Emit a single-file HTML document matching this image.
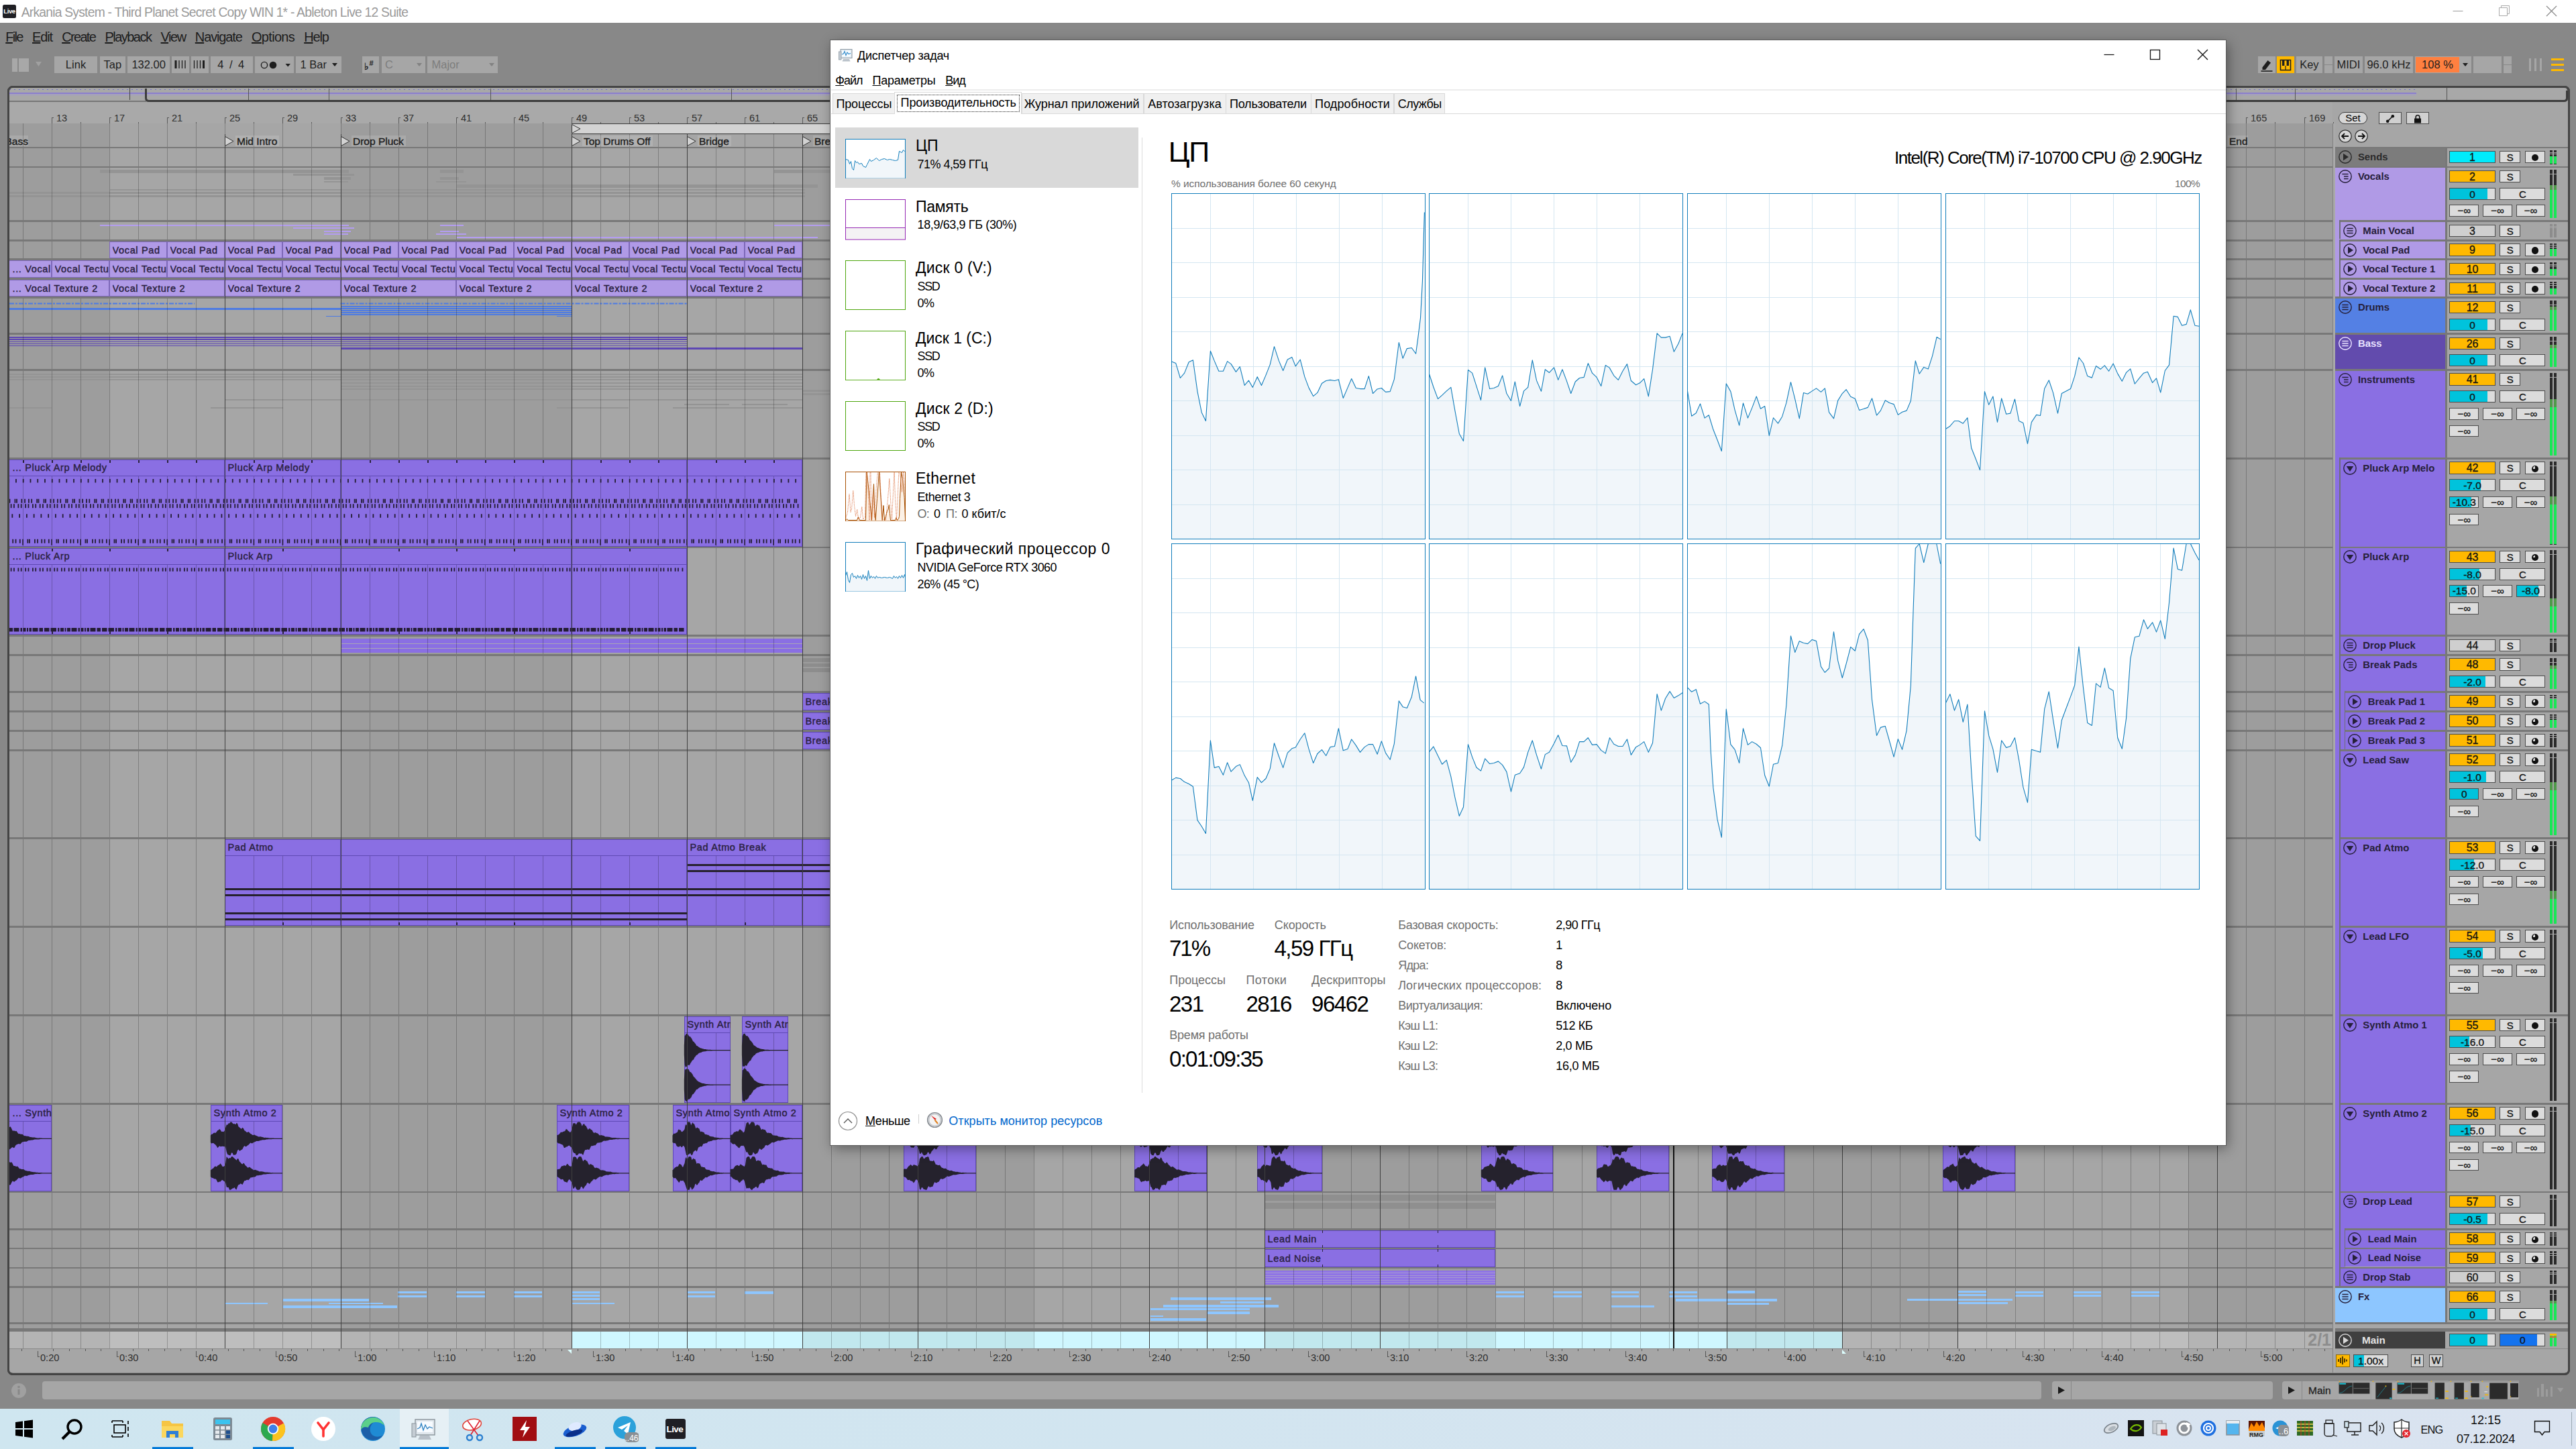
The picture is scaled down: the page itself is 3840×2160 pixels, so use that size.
<!DOCTYPE html><html><head><meta charset="utf-8"><title>Ableton Live</title><style>
html,body{margin:0;padding:0}
body{width:3840px;height:2160px;overflow:hidden;position:relative;background:#888;font-family:"Liberation Sans",sans-serif}
body>div,.a{position:absolute}
.t{white-space:nowrap}
.bx{box-sizing:border-box;border:1px solid #4d4d4d;text-align:center;white-space:nowrap;overflow:hidden}
.dot{display:inline-block;width:10.5px;height:10.5px;border-radius:50%;background:#111;vertical-align:-0.5px}
.clk{display:inline-block;width:10px;height:10px;border-radius:50%;background:#111;vertical-align:-0.5px;position:relative}
.clk:after{content:"";position:absolute;left:1.5px;top:1.5px;width:3.5px;height:3.5px;background:#dcdcdc;border-radius:3.5px 0 0 0}
</style></head><body>
<div style="left:0px;top:0px;width:3840px;height:34px;background:#fff;"></div>
<div class="a" style="left:4px;top:7px;width:20px;height:20px;background:#1f1f24;border-radius:2.5px;color:#fff;font-size:9.6px;font-weight:700;line-height:20px;text-align:center;letter-spacing:-0.4px">Live</div>
<div class="t" style="left:31.7px;top:7.33px;font-size:19.3px;line-height:23.16px;color:#9a9a9a;letter-spacing:-0.77px;">Arkania System - Third Planet Secret Copy WIN 1* - Ableton Live 12 Suite</div>
<svg class="a" style="left:3640px;top:0" width="200" height="34" viewBox="0 0 200 34"><path d="M16.5 16.5H31.5" stroke="#999" stroke-width="1"/><path d="M85.5 11.5H97.5V23.5H85.5Z M88.5 11.5V8.5H100.5V20.5H97.5" stroke="#aaa" fill="none" stroke-width="1"/><path d="M156 9L171 24M171 9L156 24" stroke="#888" stroke-width="1.2"/></svg>
<div class="t" style="left:8.3px;top:43.37px;font-size:20px;line-height:24px;color:#1c1c1c;letter-spacing:-1.68px;"><u>F</u>ile</div>
<div class="t" style="left:48px;top:43.37px;font-size:20px;line-height:24px;color:#1c1c1c;letter-spacing:-1.12px;"><u>E</u>dit</div>
<div class="t" style="left:92.2px;top:43.37px;font-size:20px;line-height:24px;color:#1c1c1c;letter-spacing:-1.67px;"><u>C</u>reate</div>
<div class="t" style="left:156.4px;top:43.37px;font-size:20px;line-height:24px;color:#1c1c1c;letter-spacing:-1.52px;"><u>P</u>layback</div>
<div class="t" style="left:239.6px;top:43.37px;font-size:20px;line-height:24px;color:#1c1c1c;letter-spacing:-1.5px;"><u>V</u>iew</div>
<div class="t" style="left:290.8px;top:43.37px;font-size:20px;line-height:24px;color:#1c1c1c;letter-spacing:-1.12px;"><u>N</u>avigate</div>
<div class="t" style="left:375px;top:43.37px;font-size:20px;line-height:24px;color:#1c1c1c;letter-spacing:-0.7px;"><u>O</u>ptions</div>
<div class="t" style="left:453.2px;top:43.37px;font-size:20px;line-height:24px;color:#1c1c1c;letter-spacing:-1.16px;"><u>H</u>elp</div>
<div style="left:17.7px;top:87px;width:8px;height:19.5px;background:#a8a8a8;"></div>
<div style="left:28px;top:87px;width:15.4px;height:19.5px;background:#a8a8a8;"></div>
<svg class="a" style="left:53px;top:92px" width="10" height="8"><path d="M0 0H9L4.5 7Z" fill="#a0a0a0"/></svg>
<div style="left:80.8px;top:83.5px;width:64.4px;height:25.5px;background:#a6a6a6;"></div>
<div class="t" style="left:97.87px;top:87.18px;font-size:16.5px;line-height:19.8px;color:#1e1e1e;">Link</div>
<div style="left:148.6px;top:83.5px;width:38.4px;height:25.5px;background:#a6a6a6;"></div>
<div class="t" style="left:154.5px;top:87.18px;font-size:16.5px;line-height:19.8px;color:#1e1e1e;">Tap</div>
<div style="left:190.3px;top:83.5px;width:62.7px;height:25.5px;background:#a6a6a6;"></div>
<div class="t" style="left:196.42px;top:87.18px;font-size:16.5px;line-height:19.8px;color:#1e1e1e;">132.00</div>
<div style="left:256.4px;top:83.5px;width:25.6px;height:25.5px;background:#a6a6a6;"></div>
<div style="left:285px;top:83.5px;width:25.5px;height:25.5px;background:#a6a6a6;"></div>
<svg class="a" style="left:256px;top:83px" width="56" height="26" viewBox="0 0 56 26"><path d="M6 7v12" stroke="#1e1e1e" stroke-width="3"/><path d="M11 7v12M15.5 7v12M20 7v12" stroke="#1e1e1e" stroke-width="1.3"/><path d="M33.5 7v12M38 7v12M42.5 7v12" stroke="#1e1e1e" stroke-width="1.3"/><path d="M47.5 7v12" stroke="#1e1e1e" stroke-width="3"/></svg>
<div style="left:313.8px;top:83.5px;width:62.8px;height:25.5px;background:#a6a6a6;"></div>
<div class="t" style="left:324.2px;top:87.18px;font-size:16.5px;line-height:19.8px;color:#1e1e1e;letter-spacing:1.98px;">4 / 4</div>
<div style="left:379.6px;top:83.5px;width:58px;height:25.5px;background:#a6a6a6;"></div>
<svg class="a" style="left:379.6px;top:83.5px" width="58" height="26" viewBox="0 0 58 26"><circle cx="14" cy="13" r="4.6" fill="none" stroke="#1e1e1e" stroke-width="1.4"/><circle cx="27" cy="13" r="5.3" fill="#1e1e1e"/><path d="M45.5 11H53L49.2 15.5Z" fill="#1e1e1e"/></svg>
<div style="left:441px;top:83.5px;width:67.5px;height:25.5px;background:#a6a6a6;"></div>
<div class="t" style="left:447.5px;top:87.18px;font-size:16.5px;line-height:19.8px;color:#1e1e1e;">1 Bar</div>
<svg class="a" style="left:495px;top:94px" width="9" height="6"><path d="M0 0H8L4 5Z" fill="#1e1e1e"/></svg>
<div style="left:540px;top:83.5px;width:25px;height:25.5px;background:#a6a6a6;"></div>
<div class="t" style="left:543px;top:90.85px;font-size:14px;line-height:16.8px;color:#1e1e1e;font-weight:700;">&#9837;</div>
<div class="t" style="left:550.5px;top:87.69px;font-size:11px;line-height:13.2px;color:#1e1e1e;font-weight:700;">#</div>
<div style="left:568.6px;top:83.5px;width:65.7px;height:25.5px;background:#a6a6a6;"></div>
<div class="t" style="left:574px;top:87.18px;font-size:16.5px;line-height:19.8px;color:#7d7d7d;">C</div>
<svg class="a" style="left:621px;top:94px" width="9" height="6"><path d="M0 0H8L4 5Z" fill="#828282"/></svg>
<div style="left:637.4px;top:83.5px;width:105.1px;height:25.5px;background:#a6a6a6;"></div>
<div class="t" style="left:643.5px;top:87.18px;font-size:16.5px;line-height:19.8px;color:#7d7d7d;">Major</div>
<svg class="a" style="left:729px;top:94px" width="9" height="6"><path d="M0 0H8L4 5Z" fill="#828282"/></svg>
<div style="left:3365.8px;top:83.5px;width:25.8px;height:25.5px;background:#a6a6a6;"></div>
<svg class="a" style="left:3366px;top:83.5px" width="26" height="26" viewBox="0 0 26 26"><path d="M6.5 16.5L14.5 6L19 9.5L11 20H6.5Z" fill="#1e1e1e"/><path d="M4.5 22H21.5" stroke="#1e1e1e" stroke-width="1.6"/></svg>
<div style="left:3394.3px;top:83.5px;width:25.7px;height:25.5px;background:#ffb900;"></div>
<svg class="a" style="left:3394.3px;top:83.5px" width="26" height="26" viewBox="0 0 26 26"><rect x="5.5" y="5.5" width="15" height="15" fill="none" stroke="#1e1e1e" stroke-width="1.6"/><path d="M9.7 5v9M16.3 5v9" stroke="#1e1e1e" stroke-width="3.4"/><path d="M13 14v6" stroke="#1e1e1e" stroke-width="1.2"/></svg>
<div style="left:3422.8px;top:83.5px;width:39.2px;height:25.5px;background:#a6a6a6;"></div>
<div class="t" style="left:3428.18px;top:87.18px;font-size:16.5px;line-height:19.8px;color:#1e1e1e;">Key</div>
<div style="left:3465px;top:83.5px;width:12px;height:12px;background:#a6a6a6;"></div>
<div style="left:3465px;top:97px;width:12px;height:12px;background:#a6a6a6;"></div>
<div style="left:3479.9px;top:83.5px;width:42.1px;height:25.5px;background:#a6a6a6;"></div>
<div class="t" style="left:3483.54px;top:87.18px;font-size:16.5px;line-height:19.8px;color:#1e1e1e;">MIDI</div>
<div style="left:3525px;top:83.5px;width:72px;height:25.5px;background:#a6a6a6;"></div>
<div class="t" style="left:3528.44px;top:87.18px;font-size:16.5px;line-height:19.8px;color:#1e1e1e;">96.0 kHz</div>
<div style="left:3600px;top:83.5px;width:84px;height:25.5px;background:#a6a6a6;"></div>
<div style="left:3601px;top:85px;width:65px;height:23px;background:#ff8040;"></div>
<div class="t" style="left:3610.11px;top:87.18px;font-size:16.5px;line-height:19.8px;color:#1e1e1e;">108 %</div>
<svg class="a" style="left:3671px;top:94px" width="9" height="6"><path d="M0 0H8L4 5Z" fill="#1e1e1e"/></svg>
<div style="left:3687px;top:83.5px;width:42px;height:25.5px;background:#a6a6a6;"></div>
<div style="left:3732px;top:83.5px;width:12px;height:12px;background:#a6a6a6;"></div>
<div style="left:3732px;top:97px;width:12px;height:12px;background:#a6a6a6;"></div>
<div style="left:3769.5px;top:86.5px;width:3px;height:19.5px;background:#a6a6a6;"></div>
<div style="left:3777.5px;top:86.5px;width:3px;height:19.5px;background:#a6a6a6;"></div>
<div style="left:3785.5px;top:86.5px;width:3px;height:19.5px;background:#a6a6a6;"></div>
<div style="left:3802.5px;top:86.5px;width:19.5px;height:3px;background:#ffb900;"></div>
<div style="left:3802.5px;top:94.5px;width:19.5px;height:3px;background:#ffb900;"></div>
<div style="left:3802.5px;top:102.5px;width:19.5px;height:3px;background:#ffb900;"></div>
<div class="a" style="left:11px;top:128px;width:3814px;height:1916px;border:3px solid #444;border-radius:8px;box-sizing:content-box;pointer-events:none"></div>
<svg class="a" style="left:16px;top:2061px" width="24" height="24" viewBox="0 0 24 24"><circle cx="12" cy="12" r="11" fill="#a0a0a0"/><rect x="10.5" y="10" width="3" height="8" fill="#888"/><circle cx="12" cy="6.6" r="1.8" fill="#888"/></svg>
<div style="left:63px;top:2058.5px;width:2980px;height:27.5px;background:#a6a6a6;border-radius:4px;"></div>
<div style="left:3059px;top:2058.5px;width:329px;height:27.5px;background:#a6a6a6;border-radius:4px;"></div>
<div style="left:3086.5px;top:2058.5px;width:1.5px;height:27.5px;background:#888;"></div>
<svg class="a" style="left:3068px;top:2067px" width="12" height="12"><path d="M0 0L10 5.5L0 11Z" fill="#1a1a1a"/></svg>
<div style="left:3402px;top:2058.5px;width:353px;height:27.5px;background:#a6a6a6;border-radius:4px;"></div>
<div style="left:3430.5px;top:2058.5px;width:1.5px;height:27.5px;background:#888;"></div>
<svg class="a" style="left:3411px;top:2067px" width="12" height="12"><path d="M0 0L10 5.5L0 11Z" fill="#1a1a1a"/></svg>
<div class="t" style="left:3441px;top:2063.93px;font-size:15.5px;line-height:18.6px;color:#1e1e1e;-webkit-text-stroke:0.3px #1e1e1e;">Main</div>
<svg class="a" style="left:3486.25px;top:2057.86px" width="46.96" height="28.21" viewBox="595 100 263 158"><rect x="595" y="100" width="263" height="158" fill="#a9a9a9"/><rect x="595" y="100" width="263" height="14" fill="#9a9a9a"/><rect x="599" y="103" width="8" height="8" fill="#f5b800"/><rect x="598" y="118" width="114" height="92" fill="#2b2b2b"/><rect x="716" y="118" width="139" height="92" fill="#2b2b2b"/><path d="M602 205C650 200 660 150 708 145" stroke="#19b5c8" stroke-width="3" fill="none"/><rect x="602" y="121" width="55" height="11" fill="#19c5d8"/><path d="M722 165H850" stroke="#ccc" stroke-width="2"/></svg>
<svg class="a" style="left:3535.71px;top:2057.86px" width="35" height="28.21" viewBox="872 100 196 158"><rect x="872" y="100" width="196" height="158" fill="#a9a9a9"/><rect x="872" y="100" width="196" height="14" fill="#9a9a9a"/><rect x="876" y="103" width="8" height="8" fill="#f5b800"/><rect x="902" y="118" width="136" height="137" fill="#2b2b2b"/><path d="M915 240L988 148" stroke="#19b5c8" stroke-width="3"/><rect x="982" y="142" width="9" height="9" fill="#f5b800"/><rect x="1044" y="168" width="18" height="10" fill="#f5b800"/><rect x="1018" y="243" width="18" height="9" fill="#19c5d8"/></svg>
<svg class="a" style="left:3573.39px;top:2057.86px" width="46.79" height="28.21" viewBox="1083 100 262 158"><rect x="1083" y="100" width="262" height="158" fill="#a9a9a9"/><rect x="1083" y="100" width="262" height="14" fill="#9a9a9a"/><rect x="1087" y="103" width="8" height="8" fill="#f5b800"/><rect x="1086" y="118" width="114" height="92" fill="#2b2b2b"/><rect x="1204" y="118" width="138" height="92" fill="#2b2b2b"/><path d="M1090 205C1138 200 1148 150 1196 145" stroke="#19b5c8" stroke-width="3" fill="none"/><rect x="1090" y="121" width="55" height="11" fill="#19c5d8"/><path d="M1210 165H1338" stroke="#ccc" stroke-width="2"/></svg>
<svg class="a" style="left:3622.5px;top:2057.86px" width="27.5" height="28.21" viewBox="1358 100 154 158"><rect x="1358" y="100" width="154" height="158" fill="#a9a9a9"/><rect x="1358" y="100" width="154" height="14" fill="#9a9a9a"/><rect x="1362" y="103" width="8" height="8" fill="#f5b800"/><rect x="1395" y="118" width="80" height="137" fill="#2b2b2b"/><rect x="1482" y="185" width="26" height="9" fill="#f5b800"/><rect x="1482" y="243" width="26" height="9" fill="#f5b800"/><rect x="1403" y="243" width="22" height="8" fill="#19a5b8"/></svg>
<svg class="a" style="left:3652.32px;top:2057.86px" width="27.68" height="28.21" viewBox="1525 100 155 158"><rect x="1525" y="100" width="155" height="158" fill="#a9a9a9"/><rect x="1525" y="100" width="155" height="14" fill="#9a9a9a"/><rect x="1529" y="103" width="8" height="8" fill="#f5b800"/><rect x="1562" y="118" width="80" height="137" fill="#2b2b2b"/><rect x="1649" y="185" width="26" height="9" fill="#f5b800"/><rect x="1649" y="243" width="26" height="9" fill="#f5b800"/><rect x="1570" y="243" width="22" height="8" fill="#19a5b8"/></svg>
<svg class="a" style="left:3682.32px;top:2057.86px" width="14.64" height="28.21" viewBox="1693 100 82 158"><rect x="1693" y="100" width="82" height="158" fill="#a9a9a9"/><rect x="1693" y="100" width="82" height="14" fill="#9a9a9a"/><rect x="1697" y="103" width="8" height="8" fill="#f5b800"/><rect x="1700" y="122" width="70" height="118" fill="#2b2b2b"/><rect x="1699" y="230" width="7" height="7" fill="#f5b800"/></svg>
<svg class="a" style="left:3699.11px;top:2057.86px" width="39.46" height="28.21" viewBox="1787 100 221 158"><rect x="1787" y="100" width="221" height="158" fill="#a9a9a9"/><rect x="1787" y="100" width="221" height="14" fill="#9a9a9a"/><rect x="1791" y="103" width="8" height="8" fill="#f5b800"/><rect x="1855" y="120" width="150" height="135" fill="#2b2b2b"/><rect x="1828" y="147" width="16" height="10" fill="#f5b800"/><rect x="1815" y="215" width="30" height="9" fill="#f5b800"/><rect x="1790" y="243" width="18" height="9" fill="#19c5d8"/><rect x="1812" y="190" width="26" height="7" fill="#ddd"/></svg>
<svg class="a" style="left:3741.07px;top:2057.86px" width="13.57" height="28.21" viewBox="2022 100 76 158"><rect x="2022" y="100" width="76" height="158" fill="#a9a9a9"/><rect x="2022" y="100" width="76" height="14" fill="#9a9a9a"/><rect x="2026" y="103" width="8" height="8" fill="#f5b800"/><rect x="2028" y="122" width="67" height="118" fill="#2b2b2b"/><rect x="2027" y="230" width="7" height="7" fill="#f5b800"/></svg>
<div style="left:3781.5px;top:2069px;width:3.3px;height:13px;background:#9c9c9c;"></div>
<div style="left:3788.3px;top:2063px;width:3.3px;height:19px;background:#9c9c9c;"></div>
<div style="left:3795.1px;top:2071px;width:3.3px;height:11px;background:#9c9c9c;"></div>
<div style="left:3801.9px;top:2067px;width:3.3px;height:15px;background:#9c9c9c;"></div>
<svg class="a" style="left:3812px;top:2068.5px" width="11" height="8"><path d="M0 0H9.5L4.75 6.5Z" fill="#9c9c9c"/></svg>
<svg class="a" width="3840" height="2160" viewBox="0 0 3840 2160" shape-rendering="crispEdges"><defs><clipPath id="ac"><rect x="14" y="130" width="3814" height="1916"/></clipPath></defs><g clip-path="url(#ac)">
<rect x="14" y="150" width="3814" height="1896" fill="#a6a6a6"/>
<rect x="14" y="184" width="149.19" height="1826" fill="#9d9d9d"/>
<rect x="507.54" y="184" width="344.35" height="1826" fill="#9d9d9d"/>
<rect x="1196.24" y="184" width="344.35" height="1826" fill="#9d9d9d"/>
<rect x="1884.95" y="184" width="344.35" height="1826" fill="#9d9d9d"/>
<rect x="2573.65" y="184" width="344.35" height="1826" fill="#9d9d9d"/>
<rect x="3262.36" y="184" width="214.64" height="1826" fill="#9d9d9d"/>
<rect x="14" y="152" width="3463" height="32" fill="#a9a9a9"/>
<rect x="14" y="1984.5" width="3463" height="25.5" fill="#bebebe"/>
<rect x="14" y="1984.5" width="149.19" height="25.5" fill="#b4b4b4"/>
<rect x="507.54" y="1984.5" width="344.35" height="25.5" fill="#b4b4b4"/>
<rect x="1196.24" y="1984.5" width="344.35" height="25.5" fill="#b4b4b4"/>
<rect x="1884.95" y="1984.5" width="344.35" height="25.5" fill="#b4b4b4"/>
<rect x="2573.65" y="1984.5" width="344.35" height="25.5" fill="#b4b4b4"/>
<rect x="3262.36" y="1984.5" width="214.64" height="25.5" fill="#b4b4b4"/>
<rect x="851.89" y="1984.5" width="1893.94" height="25.5" fill="#cff7ff"/>
<rect x="1196.24" y="1984.5" width="344.35" height="25.5" fill="#c1e8ee"/>
<rect x="1884.95" y="1984.5" width="344.35" height="25.5" fill="#c1e8ee"/>
<rect x="2573.65" y="1984.5" width="172.18" height="25.5" fill="#c1e8ee"/>
<rect x="14" y="2010" width="3814" height="36" fill="#a6a6a6"/>
<rect x="12" y="684.5" width="323" height="130" fill="#8a6fe3"/>
<rect x="335" y="684.5" width="173" height="130" fill="#8a6fe3"/>
<rect x="508" y="684.5" width="344" height="130" fill="#8a6fe3"/>
<rect x="852" y="684.5" width="172" height="130" fill="#8a6fe3"/>
<rect x="1024" y="684.5" width="172" height="130" fill="#8a6fe3"/>
<rect x="12" y="817" width="323" height="129.3" fill="#8a6fe3"/>
<rect x="335" y="817" width="173" height="129.3" fill="#8a6fe3"/>
<rect x="508" y="817" width="344" height="129.3" fill="#8a6fe3"/>
<rect x="852" y="817" width="172" height="129.3" fill="#8a6fe3"/>
<rect x="508" y="951.7" width="688" height="21.4" fill="#8a6fe3"/>
<rect x="508" y="958.6" width="688" height="1.3" fill="#a9a5b6"/>
<rect x="508" y="966" width="688" height="1.3" fill="#a9a5b6"/>
<rect x="335" y="1250.5" width="173" height="129.5" fill="#8a6fe3"/>
<rect x="508" y="1250.5" width="344" height="129.5" fill="#8a6fe3"/>
<rect x="852" y="1250.5" width="172" height="129.5" fill="#8a6fe3"/>
<rect x="1024" y="1250.5" width="172" height="129.5" fill="#8a6fe3"/>
<rect x="1196" y="1250.5" width="345" height="129.5" fill="#8a6fe3"/>
<rect x="1020" y="1514.8" width="69" height="129.2" fill="#8a6fe3"/>
<rect x="1106" y="1514.8" width="69" height="129.2" fill="#8a6fe3"/>
<rect x="12" y="1646.5" width="65" height="129.2" fill="#8a6fe3"/>
<rect x="314" y="1646.5" width="107" height="129.2" fill="#8a6fe3"/>
<rect x="830" y="1646.5" width="108" height="129.2" fill="#8a6fe3"/>
<rect x="1003" y="1646.5" width="86" height="129.2" fill="#8a6fe3"/>
<rect x="1089" y="1646.5" width="107" height="129.2" fill="#8a6fe3"/>
<rect x="1347" y="1646.5" width="108" height="129.2" fill="#8a6fe3"/>
<rect x="1691" y="1646.5" width="108" height="129.2" fill="#8a6fe3"/>
<rect x="2208" y="1646.5" width="107" height="129.2" fill="#8a6fe3"/>
<rect x="2380" y="1646.5" width="108" height="129.2" fill="#8a6fe3"/>
<rect x="2552" y="1646.5" width="108" height="129.2" fill="#8a6fe3"/>
<rect x="2896" y="1646.5" width="108" height="129.2" fill="#8a6fe3"/>
<rect x="1874" y="1646.5" width="97" height="129.2" fill="#8a6fe3"/>
<rect x="1885" y="1894" width="344" height="21.3" fill="#8f74e6"/>
<rect x="1885" y="1897" width="344" height="1" fill="#a79ad0"/>
<rect x="1885" y="1900.6" width="344" height="1" fill="#a79ad0"/>
<rect x="1885" y="1904.2" width="344" height="1" fill="#a79ad0"/>
<rect x="1885" y="1907.8" width="344" height="1" fill="#a79ad0"/>
<rect x="1885" y="1911.4" width="344" height="1" fill="#a79ad0"/>
<rect x="1885" y="1781" width="344" height="9" fill="#8f8f8f"/>
<rect x="1885" y="1793" width="344" height="9" fill="#8f8f8f"/>
<path shape-rendering="geometricPrecision" d="M14 452.5H290" stroke="#4d7be3" stroke-width="2" stroke-dasharray="7 2 3 2" fill="none"/>
<rect x="14" y="459" width="493.54" height="3" fill="#4d7be3"/>
<rect x="486" y="470.5" width="21.54" height="1.5" fill="#4d7be3"/>
<path shape-rendering="geometricPrecision" d="M507.54 452.5H1024.07" stroke="#4d7be3" stroke-width="2" stroke-dasharray="7 2 3 2" fill="none"/>
<rect x="507.54" y="456" width="344.35" height="2" fill="#4d7be3"/>
<rect x="507.54" y="459" width="344.35" height="2" fill="#4d7be3"/>
<rect x="507.54" y="462" width="344.35" height="2" fill="#4d7be3"/>
<rect x="507.54" y="465" width="344.35" height="2" fill="#4d7be3"/>
<rect x="507.54" y="468" width="344.35" height="2" fill="#4d7be3"/>
<rect x="830" y="470.5" width="21.89" height="1.5" fill="#4d7be3"/>
<rect x="14" y="502.2" width="1010.07" height="1.4" fill="#5d47b4"/>
<rect x="14" y="505.4" width="1010.07" height="1.4" fill="#5d47b4"/>
<rect x="14" y="508.6" width="1010.07" height="1.4" fill="#5d47b4"/>
<rect x="14" y="511.8" width="1010.07" height="1.4" fill="#5d47b4"/>
<rect x="14" y="515" width="1010.07" height="1.4" fill="#5d47b4"/>
<rect x="507.54" y="518.2" width="688.7" height="2.5" fill="#5d47b4"/>
<rect x="148.6" y="334.5" width="371.4" height="2.2" fill="#b39df0"/>
<rect x="436.7" y="339" width="90.8" height="2.2" fill="#b39df0"/>
<rect x="483" y="343.5" width="40" height="2.2" fill="#b39df0"/>
<rect x="483" y="348" width="35.5" height="2.2" fill="#b39df0"/>
<rect x="655.5" y="334.5" width="35.5" height="2.2" fill="#b39df0"/>
<rect x="655.5" y="343.5" width="28" height="2.2" fill="#b39df0"/>
<rect x="649.5" y="348" width="45" height="2.2" fill="#b39df0"/>
<rect x="681" y="352.5" width="538" height="2.2" fill="#b39df0"/>
<rect x="1154" y="334.5" width="83" height="2.2" fill="#b39df0"/>
<rect x="148.6" y="253" width="371.4" height="4.5" fill="#949494"/>
<rect x="436.7" y="259" width="90.8" height="2.5" fill="#949494"/>
<rect x="483" y="264" width="40" height="3.5" fill="#949494"/>
<rect x="483" y="269.5" width="35.5" height="2.5" fill="#949494"/>
<rect x="655.5" y="253" width="35.5" height="4.5" fill="#949494"/>
<rect x="655.5" y="264" width="28" height="3.5" fill="#949494"/>
<rect x="649.5" y="269.5" width="45" height="2.5" fill="#949494"/>
<rect x="681" y="275" width="538" height="5" fill="#949494"/>
<rect x="164" y="282" width="1036" height="2" fill="#949494"/>
<rect x="14" y="286" width="1186" height="3" fill="#949494"/>
<rect x="14" y="291" width="1186" height="2.5" fill="#949494"/>
<rect x="1154" y="253" width="83" height="4.5" fill="#949494"/>
<rect x="14" y="556.6" width="1182" height="2" fill="#949494"/>
<rect x="14" y="560.6" width="1182" height="2" fill="#949494"/>
<rect x="14" y="564.6" width="1182" height="2" fill="#949494"/>
<rect x="508" y="569.6" width="688" height="2" fill="#949494"/>
<rect x="508" y="574.6" width="688" height="2" fill="#949494"/>
<rect x="508" y="578.6" width="688" height="2" fill="#949494"/>
<rect x="336" y="594.6" width="860" height="2" fill="#949494"/>
<rect x="14" y="606.6" width="63" height="2" fill="#949494"/>
<rect x="314" y="606.6" width="108" height="2" fill="#949494"/>
<rect x="830" y="606.6" width="107" height="2" fill="#949494"/>
<rect x="1003" y="606.6" width="193" height="2" fill="#949494"/>
<rect x="1020" y="601.6" width="67" height="2" fill="#949494"/>
<rect x="1106" y="601.6" width="68" height="2" fill="#949494"/>
<rect x="1197" y="580.6" width="40" height="3" fill="#949494"/>
<rect x="1197" y="585.6" width="40" height="3" fill="#949494"/>
<rect x="1196.24" y="981" width="344.35" height="5.8" fill="#8d8d8d"/>
<rect x="1196.24" y="988.5" width="344.35" height="5.8" fill="#8d8d8d"/>
<rect x="1196.24" y="996.1" width="344.35" height="5.8" fill="#8d8d8d"/>
<rect x="336" y="1941.5" width="63" height="2.5" fill="#8ec6ff"/>
<rect x="422" y="1935.5" width="128" height="4" fill="#8ec6ff"/>
<rect x="490" y="1941.5" width="81" height="2.5" fill="#8ec6ff"/>
<rect x="422" y="1946" width="170" height="4" fill="#8ec6ff"/>
<rect x="593" y="1925" width="43" height="3" fill="#8ec6ff"/>
<rect x="593" y="1931" width="43" height="3" fill="#8ec6ff"/>
<rect x="680" y="1925" width="43" height="3" fill="#8ec6ff"/>
<rect x="680" y="1931" width="43" height="3" fill="#8ec6ff"/>
<rect x="766" y="1925" width="42" height="3" fill="#8ec6ff"/>
<rect x="766" y="1931" width="42" height="3" fill="#8ec6ff"/>
<rect x="853" y="1925" width="41" height="3" fill="#8ec6ff"/>
<rect x="853" y="1930" width="41" height="3" fill="#8ec6ff"/>
<rect x="853" y="1935" width="41" height="3" fill="#8ec6ff"/>
<rect x="853" y="1941.5" width="63" height="2.5" fill="#8ec6ff"/>
<rect x="1024" y="1925" width="42" height="3" fill="#8ec6ff"/>
<rect x="1024" y="1931" width="42" height="3" fill="#8ec6ff"/>
<rect x="1110" y="1925" width="43" height="4" fill="#8ec6ff"/>
<rect x="1745" y="1934" width="150" height="4" fill="#8ec6ff"/>
<rect x="1819" y="1940" width="65" height="2.5" fill="#8ec6ff"/>
<rect x="1734" y="1944.5" width="172" height="4" fill="#8ec6ff"/>
<rect x="1715" y="1950" width="148" height="3" fill="#8ec6ff"/>
<rect x="1800" y="1955" width="63" height="4" fill="#8ec6ff"/>
<rect x="1715" y="1960.5" width="19" height="2.5" fill="#8ec6ff"/>
<rect x="1715" y="1965" width="83" height="4" fill="#8ec6ff"/>
<rect x="2230" y="1925" width="42" height="3" fill="#8ec6ff"/>
<rect x="2230" y="1931" width="42" height="3" fill="#8ec6ff"/>
<rect x="2315" y="1925" width="43" height="3" fill="#8ec6ff"/>
<rect x="2315" y="1931" width="43" height="3" fill="#8ec6ff"/>
<rect x="2402" y="1925" width="41" height="3" fill="#8ec6ff"/>
<rect x="2402" y="1931" width="41" height="3" fill="#8ec6ff"/>
<rect x="2402" y="1946" width="64" height="3" fill="#8ec6ff"/>
<rect x="2488" y="1925" width="42" height="3" fill="#8ec6ff"/>
<rect x="2488" y="1931" width="42" height="3" fill="#8ec6ff"/>
<rect x="2498" y="1935.5" width="151" height="4" fill="#8ec6ff"/>
<rect x="2574" y="1924" width="42" height="4" fill="#8ec6ff"/>
<rect x="2574" y="1942" width="63" height="2.5" fill="#8ec6ff"/>
<rect x="2843" y="1935.5" width="157" height="3" fill="#8ec6ff"/>
<rect x="2919" y="1924" width="42" height="3" fill="#8ec6ff"/>
<rect x="2919" y="1929" width="42" height="3" fill="#8ec6ff"/>
<rect x="2919" y="1941" width="74" height="2.5" fill="#8ec6ff"/>
<rect x="3004" y="1925" width="42" height="3" fill="#8ec6ff"/>
<rect x="3004" y="1930" width="42" height="3" fill="#8ec6ff"/>
<rect x="3091" y="1925" width="41" height="3" fill="#8ec6ff"/>
<rect x="3091" y="1930" width="41" height="3" fill="#8ec6ff"/>
<rect x="3177" y="1925" width="42" height="3" fill="#8ec6ff"/>
<rect x="3177" y="1930" width="42" height="3" fill="#8ec6ff"/>
<rect x="34" y="184" width="1" height="1826" fill="rgba(0,0,0,0.23)"/>
<rect x="77" y="184" width="1" height="1826" fill="rgba(0,0,0,0.23)"/>
<rect x="120" y="184" width="1" height="1826" fill="rgba(0,0,0,0.23)"/>
<rect x="163" y="184" width="1" height="1826" fill="rgba(0,0,0,0.23)"/>
<rect x="206" y="184" width="1" height="1826" fill="rgba(0,0,0,0.23)"/>
<rect x="249" y="184" width="1" height="1826" fill="rgba(0,0,0,0.23)"/>
<rect x="292" y="184" width="1" height="1826" fill="rgba(0,0,0,0.23)"/>
<rect x="335" y="184" width="1" height="1826" fill="rgba(0,0,0,0.23)"/>
<rect x="378" y="184" width="1" height="1826" fill="rgba(0,0,0,0.23)"/>
<rect x="421" y="184" width="1" height="1826" fill="rgba(0,0,0,0.23)"/>
<rect x="464" y="184" width="1" height="1826" fill="rgba(0,0,0,0.23)"/>
<rect x="508" y="184" width="1" height="1826" fill="rgba(0,0,0,0.23)"/>
<rect x="551" y="184" width="1" height="1826" fill="rgba(0,0,0,0.23)"/>
<rect x="594" y="184" width="1" height="1826" fill="rgba(0,0,0,0.23)"/>
<rect x="637" y="184" width="1" height="1826" fill="rgba(0,0,0,0.23)"/>
<rect x="680" y="184" width="1" height="1826" fill="rgba(0,0,0,0.23)"/>
<rect x="723" y="184" width="1" height="1826" fill="rgba(0,0,0,0.23)"/>
<rect x="766" y="184" width="1" height="1826" fill="rgba(0,0,0,0.23)"/>
<rect x="809" y="184" width="1" height="1826" fill="rgba(0,0,0,0.23)"/>
<rect x="852" y="184" width="1" height="1826" fill="rgba(0,0,0,0.23)"/>
<rect x="895" y="184" width="1" height="1826" fill="rgba(0,0,0,0.23)"/>
<rect x="938" y="184" width="1" height="1826" fill="rgba(0,0,0,0.23)"/>
<rect x="981" y="184" width="1" height="1826" fill="rgba(0,0,0,0.23)"/>
<rect x="1024" y="184" width="1" height="1826" fill="rgba(0,0,0,0.23)"/>
<rect x="1067" y="184" width="1" height="1826" fill="rgba(0,0,0,0.23)"/>
<rect x="1110" y="184" width="1" height="1826" fill="rgba(0,0,0,0.23)"/>
<rect x="1153" y="184" width="1" height="1826" fill="rgba(0,0,0,0.23)"/>
<rect x="1196" y="184" width="1" height="1826" fill="rgba(0,0,0,0.23)"/>
<rect x="1239" y="184" width="1" height="1826" fill="rgba(0,0,0,0.23)"/>
<rect x="1282" y="184" width="1" height="1826" fill="rgba(0,0,0,0.23)"/>
<rect x="1325" y="184" width="1" height="1826" fill="rgba(0,0,0,0.23)"/>
<rect x="1368" y="184" width="1" height="1826" fill="rgba(0,0,0,0.23)"/>
<rect x="1411" y="184" width="1" height="1826" fill="rgba(0,0,0,0.23)"/>
<rect x="1455" y="184" width="1" height="1826" fill="rgba(0,0,0,0.23)"/>
<rect x="1498" y="184" width="1" height="1826" fill="rgba(0,0,0,0.23)"/>
<rect x="1541" y="184" width="1" height="1826" fill="rgba(0,0,0,0.23)"/>
<rect x="1584" y="184" width="1" height="1826" fill="rgba(0,0,0,0.23)"/>
<rect x="1627" y="184" width="1" height="1826" fill="rgba(0,0,0,0.23)"/>
<rect x="1670" y="184" width="1" height="1826" fill="rgba(0,0,0,0.23)"/>
<rect x="1713" y="184" width="1" height="1826" fill="rgba(0,0,0,0.23)"/>
<rect x="1756" y="184" width="1" height="1826" fill="rgba(0,0,0,0.23)"/>
<rect x="1799" y="184" width="1" height="1826" fill="rgba(0,0,0,0.23)"/>
<rect x="1842" y="184" width="1" height="1826" fill="rgba(0,0,0,0.23)"/>
<rect x="1885" y="184" width="1" height="1826" fill="rgba(0,0,0,0.23)"/>
<rect x="1928" y="184" width="1" height="1826" fill="rgba(0,0,0,0.23)"/>
<rect x="1971" y="184" width="1" height="1826" fill="rgba(0,0,0,0.23)"/>
<rect x="2014" y="184" width="1" height="1826" fill="rgba(0,0,0,0.23)"/>
<rect x="2057" y="184" width="1" height="1826" fill="rgba(0,0,0,0.23)"/>
<rect x="2100" y="184" width="1" height="1826" fill="rgba(0,0,0,0.23)"/>
<rect x="2143" y="184" width="1" height="1826" fill="rgba(0,0,0,0.23)"/>
<rect x="2186" y="184" width="1" height="1826" fill="rgba(0,0,0,0.23)"/>
<rect x="2229" y="184" width="1" height="1826" fill="rgba(0,0,0,0.23)"/>
<rect x="2272" y="184" width="1" height="1826" fill="rgba(0,0,0,0.23)"/>
<rect x="2315" y="184" width="1" height="1826" fill="rgba(0,0,0,0.23)"/>
<rect x="2358" y="184" width="1" height="1826" fill="rgba(0,0,0,0.23)"/>
<rect x="2401" y="184" width="1" height="1826" fill="rgba(0,0,0,0.23)"/>
<rect x="2445" y="184" width="1" height="1826" fill="rgba(0,0,0,0.23)"/>
<rect x="2488" y="184" width="1" height="1826" fill="rgba(0,0,0,0.23)"/>
<rect x="2531" y="184" width="1" height="1826" fill="rgba(0,0,0,0.23)"/>
<rect x="2574" y="184" width="1" height="1826" fill="rgba(0,0,0,0.23)"/>
<rect x="2617" y="184" width="1" height="1826" fill="rgba(0,0,0,0.23)"/>
<rect x="2660" y="184" width="1" height="1826" fill="rgba(0,0,0,0.23)"/>
<rect x="2703" y="184" width="1" height="1826" fill="rgba(0,0,0,0.23)"/>
<rect x="2746" y="184" width="1" height="1826" fill="rgba(0,0,0,0.23)"/>
<rect x="2789" y="184" width="1" height="1826" fill="rgba(0,0,0,0.23)"/>
<rect x="2832" y="184" width="1" height="1826" fill="rgba(0,0,0,0.23)"/>
<rect x="2875" y="184" width="1" height="1826" fill="rgba(0,0,0,0.23)"/>
<rect x="2918" y="184" width="1" height="1826" fill="rgba(0,0,0,0.23)"/>
<rect x="2961" y="184" width="1" height="1826" fill="rgba(0,0,0,0.23)"/>
<rect x="3004" y="184" width="1" height="1826" fill="rgba(0,0,0,0.23)"/>
<rect x="3047" y="184" width="1" height="1826" fill="rgba(0,0,0,0.23)"/>
<rect x="3090" y="184" width="1" height="1826" fill="rgba(0,0,0,0.23)"/>
<rect x="3133" y="184" width="1" height="1826" fill="rgba(0,0,0,0.23)"/>
<rect x="3176" y="184" width="1" height="1826" fill="rgba(0,0,0,0.23)"/>
<rect x="3219" y="184" width="1" height="1826" fill="rgba(0,0,0,0.23)"/>
<rect x="3262" y="184" width="1" height="1826" fill="rgba(0,0,0,0.23)"/>
<rect x="3305" y="184" width="1" height="1826" fill="rgba(0,0,0,0.23)"/>
<rect x="3348" y="184" width="1" height="1826" fill="rgba(0,0,0,0.23)"/>
<rect x="3391" y="184" width="1" height="1826" fill="rgba(0,0,0,0.23)"/>
<rect x="3435" y="184" width="1" height="1826" fill="rgba(0,0,0,0.23)"/>
<rect x="163" y="359.5" width="86" height="25.8" fill="#b09ae6"/>
<rect x="163" y="359.5" width="1" height="25.8" fill="#7d68b8"/>
<rect x="248" y="359.5" width="1" height="25.8" fill="#7d68b8"/>
<rect x="163" y="359.5" width="86" height="1" fill="#7d68b8"/>
<rect x="163" y="384.3" width="86" height="1" fill="#7d68b8"/>
<rect x="249" y="359.5" width="86" height="25.8" fill="#b09ae6"/>
<rect x="249" y="359.5" width="1" height="25.8" fill="#7d68b8"/>
<rect x="334" y="359.5" width="1" height="25.8" fill="#7d68b8"/>
<rect x="249" y="359.5" width="86" height="1" fill="#7d68b8"/>
<rect x="249" y="384.3" width="86" height="1" fill="#7d68b8"/>
<rect x="335" y="359.5" width="86" height="25.8" fill="#b09ae6"/>
<rect x="335" y="359.5" width="1" height="25.8" fill="#7d68b8"/>
<rect x="420" y="359.5" width="1" height="25.8" fill="#7d68b8"/>
<rect x="335" y="359.5" width="86" height="1" fill="#7d68b8"/>
<rect x="335" y="384.3" width="86" height="1" fill="#7d68b8"/>
<rect x="421" y="359.5" width="87" height="25.8" fill="#b09ae6"/>
<rect x="421" y="359.5" width="1" height="25.8" fill="#7d68b8"/>
<rect x="507" y="359.5" width="1" height="25.8" fill="#7d68b8"/>
<rect x="421" y="359.5" width="87" height="1" fill="#7d68b8"/>
<rect x="421" y="384.3" width="87" height="1" fill="#7d68b8"/>
<rect x="508" y="359.5" width="86" height="25.8" fill="#b09ae6"/>
<rect x="508" y="359.5" width="1" height="25.8" fill="#7d68b8"/>
<rect x="593" y="359.5" width="1" height="25.8" fill="#7d68b8"/>
<rect x="508" y="359.5" width="86" height="1" fill="#7d68b8"/>
<rect x="508" y="384.3" width="86" height="1" fill="#7d68b8"/>
<rect x="594" y="359.5" width="86" height="25.8" fill="#b09ae6"/>
<rect x="594" y="359.5" width="1" height="25.8" fill="#7d68b8"/>
<rect x="679" y="359.5" width="1" height="25.8" fill="#7d68b8"/>
<rect x="594" y="359.5" width="86" height="1" fill="#7d68b8"/>
<rect x="594" y="384.3" width="86" height="1" fill="#7d68b8"/>
<rect x="680" y="359.5" width="86" height="25.8" fill="#b09ae6"/>
<rect x="680" y="359.5" width="1" height="25.8" fill="#7d68b8"/>
<rect x="765" y="359.5" width="1" height="25.8" fill="#7d68b8"/>
<rect x="680" y="359.5" width="86" height="1" fill="#7d68b8"/>
<rect x="680" y="384.3" width="86" height="1" fill="#7d68b8"/>
<rect x="766" y="359.5" width="86" height="25.8" fill="#b09ae6"/>
<rect x="766" y="359.5" width="1" height="25.8" fill="#7d68b8"/>
<rect x="851" y="359.5" width="1" height="25.8" fill="#7d68b8"/>
<rect x="766" y="359.5" width="86" height="1" fill="#7d68b8"/>
<rect x="766" y="384.3" width="86" height="1" fill="#7d68b8"/>
<rect x="852" y="359.5" width="86" height="25.8" fill="#b09ae6"/>
<rect x="852" y="359.5" width="1" height="25.8" fill="#7d68b8"/>
<rect x="937" y="359.5" width="1" height="25.8" fill="#7d68b8"/>
<rect x="852" y="359.5" width="86" height="1" fill="#7d68b8"/>
<rect x="852" y="384.3" width="86" height="1" fill="#7d68b8"/>
<rect x="938" y="359.5" width="86" height="25.8" fill="#b09ae6"/>
<rect x="938" y="359.5" width="1" height="25.8" fill="#7d68b8"/>
<rect x="1023" y="359.5" width="1" height="25.8" fill="#7d68b8"/>
<rect x="938" y="359.5" width="86" height="1" fill="#7d68b8"/>
<rect x="938" y="384.3" width="86" height="1" fill="#7d68b8"/>
<rect x="1024" y="359.5" width="86" height="25.8" fill="#b09ae6"/>
<rect x="1024" y="359.5" width="1" height="25.8" fill="#7d68b8"/>
<rect x="1109" y="359.5" width="1" height="25.8" fill="#7d68b8"/>
<rect x="1024" y="359.5" width="86" height="1" fill="#7d68b8"/>
<rect x="1024" y="384.3" width="86" height="1" fill="#7d68b8"/>
<rect x="1110" y="359.5" width="86" height="25.8" fill="#b09ae6"/>
<rect x="1110" y="359.5" width="1" height="25.8" fill="#7d68b8"/>
<rect x="1195" y="359.5" width="1" height="25.8" fill="#7d68b8"/>
<rect x="1110" y="359.5" width="86" height="1" fill="#7d68b8"/>
<rect x="1110" y="384.3" width="86" height="1" fill="#7d68b8"/>
<rect x="12" y="388" width="65" height="26" fill="#b09ae6"/>
<rect x="12" y="388" width="1" height="26" fill="#7d68b8"/>
<rect x="76" y="388" width="1" height="26" fill="#7d68b8"/>
<rect x="12" y="388" width="65" height="1" fill="#7d68b8"/>
<rect x="12" y="413" width="65" height="1" fill="#7d68b8"/>
<rect x="77" y="388" width="86" height="26" fill="#b09ae6"/>
<rect x="77" y="388" width="1" height="26" fill="#7d68b8"/>
<rect x="162" y="388" width="1" height="26" fill="#7d68b8"/>
<rect x="77" y="388" width="86" height="1" fill="#7d68b8"/>
<rect x="77" y="413" width="86" height="1" fill="#7d68b8"/>
<rect x="163" y="388" width="86" height="26" fill="#b09ae6"/>
<rect x="163" y="388" width="1" height="26" fill="#7d68b8"/>
<rect x="248" y="388" width="1" height="26" fill="#7d68b8"/>
<rect x="163" y="388" width="86" height="1" fill="#7d68b8"/>
<rect x="163" y="413" width="86" height="1" fill="#7d68b8"/>
<rect x="249" y="388" width="86" height="26" fill="#b09ae6"/>
<rect x="249" y="388" width="1" height="26" fill="#7d68b8"/>
<rect x="334" y="388" width="1" height="26" fill="#7d68b8"/>
<rect x="249" y="388" width="86" height="1" fill="#7d68b8"/>
<rect x="249" y="413" width="86" height="1" fill="#7d68b8"/>
<rect x="335" y="388" width="86" height="26" fill="#b09ae6"/>
<rect x="335" y="388" width="1" height="26" fill="#7d68b8"/>
<rect x="420" y="388" width="1" height="26" fill="#7d68b8"/>
<rect x="335" y="388" width="86" height="1" fill="#7d68b8"/>
<rect x="335" y="413" width="86" height="1" fill="#7d68b8"/>
<rect x="421" y="388" width="87" height="26" fill="#b09ae6"/>
<rect x="421" y="388" width="1" height="26" fill="#7d68b8"/>
<rect x="507" y="388" width="1" height="26" fill="#7d68b8"/>
<rect x="421" y="388" width="87" height="1" fill="#7d68b8"/>
<rect x="421" y="413" width="87" height="1" fill="#7d68b8"/>
<rect x="508" y="388" width="86" height="26" fill="#b09ae6"/>
<rect x="508" y="388" width="1" height="26" fill="#7d68b8"/>
<rect x="593" y="388" width="1" height="26" fill="#7d68b8"/>
<rect x="508" y="388" width="86" height="1" fill="#7d68b8"/>
<rect x="508" y="413" width="86" height="1" fill="#7d68b8"/>
<rect x="594" y="388" width="86" height="26" fill="#b09ae6"/>
<rect x="594" y="388" width="1" height="26" fill="#7d68b8"/>
<rect x="679" y="388" width="1" height="26" fill="#7d68b8"/>
<rect x="594" y="388" width="86" height="1" fill="#7d68b8"/>
<rect x="594" y="413" width="86" height="1" fill="#7d68b8"/>
<rect x="680" y="388" width="86" height="26" fill="#b09ae6"/>
<rect x="680" y="388" width="1" height="26" fill="#7d68b8"/>
<rect x="765" y="388" width="1" height="26" fill="#7d68b8"/>
<rect x="680" y="388" width="86" height="1" fill="#7d68b8"/>
<rect x="680" y="413" width="86" height="1" fill="#7d68b8"/>
<rect x="766" y="388" width="86" height="26" fill="#b09ae6"/>
<rect x="766" y="388" width="1" height="26" fill="#7d68b8"/>
<rect x="851" y="388" width="1" height="26" fill="#7d68b8"/>
<rect x="766" y="388" width="86" height="1" fill="#7d68b8"/>
<rect x="766" y="413" width="86" height="1" fill="#7d68b8"/>
<rect x="852" y="388" width="86" height="26" fill="#b09ae6"/>
<rect x="852" y="388" width="1" height="26" fill="#7d68b8"/>
<rect x="937" y="388" width="1" height="26" fill="#7d68b8"/>
<rect x="852" y="388" width="86" height="1" fill="#7d68b8"/>
<rect x="852" y="413" width="86" height="1" fill="#7d68b8"/>
<rect x="938" y="388" width="86" height="26" fill="#b09ae6"/>
<rect x="938" y="388" width="1" height="26" fill="#7d68b8"/>
<rect x="1023" y="388" width="1" height="26" fill="#7d68b8"/>
<rect x="938" y="388" width="86" height="1" fill="#7d68b8"/>
<rect x="938" y="413" width="86" height="1" fill="#7d68b8"/>
<rect x="1024" y="388" width="86" height="26" fill="#b09ae6"/>
<rect x="1024" y="388" width="1" height="26" fill="#7d68b8"/>
<rect x="1109" y="388" width="1" height="26" fill="#7d68b8"/>
<rect x="1024" y="388" width="86" height="1" fill="#7d68b8"/>
<rect x="1024" y="413" width="86" height="1" fill="#7d68b8"/>
<rect x="1110" y="388" width="86" height="26" fill="#b09ae6"/>
<rect x="1110" y="388" width="1" height="26" fill="#7d68b8"/>
<rect x="1195" y="388" width="1" height="26" fill="#7d68b8"/>
<rect x="1110" y="388" width="86" height="1" fill="#7d68b8"/>
<rect x="1110" y="413" width="86" height="1" fill="#7d68b8"/>
<rect x="12" y="416.7" width="151" height="25.7" fill="#b09ae6"/>
<rect x="12" y="416.7" width="1" height="25.7" fill="#7d68b8"/>
<rect x="162" y="416.7" width="1" height="25.7" fill="#7d68b8"/>
<rect x="12" y="416.7" width="151" height="1" fill="#7d68b8"/>
<rect x="12" y="441.4" width="151" height="1" fill="#7d68b8"/>
<rect x="163" y="416.7" width="172" height="25.7" fill="#b09ae6"/>
<rect x="163" y="416.7" width="1" height="25.7" fill="#7d68b8"/>
<rect x="334" y="416.7" width="1" height="25.7" fill="#7d68b8"/>
<rect x="163" y="416.7" width="172" height="1" fill="#7d68b8"/>
<rect x="163" y="441.4" width="172" height="1" fill="#7d68b8"/>
<rect x="335" y="416.7" width="173" height="25.7" fill="#b09ae6"/>
<rect x="335" y="416.7" width="1" height="25.7" fill="#7d68b8"/>
<rect x="507" y="416.7" width="1" height="25.7" fill="#7d68b8"/>
<rect x="335" y="416.7" width="173" height="1" fill="#7d68b8"/>
<rect x="335" y="441.4" width="173" height="1" fill="#7d68b8"/>
<rect x="508" y="416.7" width="172" height="25.7" fill="#b09ae6"/>
<rect x="508" y="416.7" width="1" height="25.7" fill="#7d68b8"/>
<rect x="679" y="416.7" width="1" height="25.7" fill="#7d68b8"/>
<rect x="508" y="416.7" width="172" height="1" fill="#7d68b8"/>
<rect x="508" y="441.4" width="172" height="1" fill="#7d68b8"/>
<rect x="680" y="416.7" width="172" height="25.7" fill="#b09ae6"/>
<rect x="680" y="416.7" width="1" height="25.7" fill="#7d68b8"/>
<rect x="851" y="416.7" width="1" height="25.7" fill="#7d68b8"/>
<rect x="680" y="416.7" width="172" height="1" fill="#7d68b8"/>
<rect x="680" y="441.4" width="172" height="1" fill="#7d68b8"/>
<rect x="852" y="416.7" width="172" height="25.7" fill="#b09ae6"/>
<rect x="852" y="416.7" width="1" height="25.7" fill="#7d68b8"/>
<rect x="1023" y="416.7" width="1" height="25.7" fill="#7d68b8"/>
<rect x="852" y="416.7" width="172" height="1" fill="#7d68b8"/>
<rect x="852" y="441.4" width="172" height="1" fill="#7d68b8"/>
<rect x="1024" y="416.7" width="172" height="25.7" fill="#b09ae6"/>
<rect x="1024" y="416.7" width="1" height="25.7" fill="#7d68b8"/>
<rect x="1195" y="416.7" width="1" height="25.7" fill="#7d68b8"/>
<rect x="1024" y="416.7" width="172" height="1" fill="#7d68b8"/>
<rect x="1024" y="441.4" width="172" height="1" fill="#7d68b8"/>
<rect x="12" y="684.5" width="323" height="24" fill="#8a6fe3"/>
<rect x="12" y="684.5" width="1" height="130" fill="#5f49b5"/>
<rect x="334" y="684.5" width="1" height="130" fill="#5f49b5"/>
<rect x="12" y="684.5" width="323" height="1" fill="#5f49b5"/>
<rect x="12" y="708.5" width="323" height="1" fill="#5f49b5"/>
<rect x="12" y="813.5" width="323" height="1" fill="#5f49b5"/>
<rect x="335" y="684.5" width="173" height="24" fill="#8a6fe3"/>
<rect x="335" y="684.5" width="1" height="130" fill="#5f49b5"/>
<rect x="507" y="684.5" width="1" height="130" fill="#5f49b5"/>
<rect x="335" y="684.5" width="173" height="1" fill="#5f49b5"/>
<rect x="335" y="708.5" width="173" height="1" fill="#5f49b5"/>
<rect x="335" y="813.5" width="173" height="1" fill="#5f49b5"/>
<rect x="508" y="684.5" width="344" height="24" fill="#8a6fe3"/>
<rect x="508" y="684.5" width="1" height="130" fill="#5f49b5"/>
<rect x="851" y="684.5" width="1" height="130" fill="#5f49b5"/>
<rect x="508" y="684.5" width="344" height="1" fill="#5f49b5"/>
<rect x="508" y="708.5" width="344" height="1" fill="#5f49b5"/>
<rect x="508" y="813.5" width="344" height="1" fill="#5f49b5"/>
<rect x="852" y="684.5" width="172" height="24" fill="#8a6fe3"/>
<rect x="852" y="684.5" width="1" height="130" fill="#5f49b5"/>
<rect x="1023" y="684.5" width="1" height="130" fill="#5f49b5"/>
<rect x="852" y="684.5" width="172" height="1" fill="#5f49b5"/>
<rect x="852" y="708.5" width="172" height="1" fill="#5f49b5"/>
<rect x="852" y="813.5" width="172" height="1" fill="#5f49b5"/>
<rect x="1024" y="684.5" width="172" height="24" fill="#8a6fe3"/>
<rect x="1024" y="684.5" width="1" height="130" fill="#5f49b5"/>
<rect x="1195" y="684.5" width="1" height="130" fill="#5f49b5"/>
<rect x="1024" y="684.5" width="172" height="1" fill="#5f49b5"/>
<rect x="1024" y="708.5" width="172" height="1" fill="#5f49b5"/>
<rect x="1024" y="813.5" width="172" height="1" fill="#5f49b5"/>
<path shape-rendering="geometricPrecision" d="M-8.34 714.1v5.4 M2.42 714.1v5.4 M13.18 714.1v5.4 M23.94 714.1v5.4 M34.7 714.1v5.4 M45.46 714.1v5.4 M56.22 714.1v5.4 M66.98 714.1v5.4 M77.75 714.1v5.4 M88.51 714.1v5.4 M99.27 714.1v5.4 M110.03 714.1v5.4 M120.79 714.1v5.4 M131.55 714.1v5.4 M142.31 714.1v5.4 M153.07 714.1v5.4 M163.83 714.1v5.4 M174.59 714.1v5.4 M185.36 714.1v5.4 M196.12 714.1v5.4 M206.88 714.1v5.4 M217.64 714.1v5.4 M228.4 714.1v5.4 M239.16 714.1v5.4 M249.92 714.1v5.4 M260.68 714.1v5.4 M271.44 714.1v5.4 M282.2 714.1v5.4 M292.97 714.1v5.4 M303.73 714.1v5.4 M314.49 714.1v5.4 M325.25 714.1v5.4 M336.01 714.1v5.4 M346.77 714.1v5.4 M357.53 714.1v5.4 M368.29 714.1v5.4 M379.05 714.1v5.4 M389.81 714.1v5.4 M400.58 714.1v5.4 M411.34 714.1v5.4 M422.1 714.1v5.4 M432.86 714.1v5.4 M443.62 714.1v5.4 M454.38 714.1v5.4 M465.14 714.1v5.4 M475.9 714.1v5.4 M486.66 714.1v5.4 M497.42 714.1v5.4 M508.19 714.1v5.4 M518.95 714.1v5.4 M529.71 714.1v5.4 M540.47 714.1v5.4 M551.23 714.1v5.4 M561.99 714.1v5.4 M572.75 714.1v5.4 M583.51 714.1v5.4 M594.27 714.1v5.4 M605.03 714.1v5.4 M615.8 714.1v5.4 M626.56 714.1v5.4 M637.32 714.1v5.4 M648.08 714.1v5.4 M658.84 714.1v5.4 M669.6 714.1v5.4 M680.36 714.1v5.4 M691.12 714.1v5.4 M701.88 714.1v5.4 M712.64 714.1v5.4 M723.41 714.1v5.4 M734.17 714.1v5.4 M744.93 714.1v5.4 M755.69 714.1v5.4 M766.45 714.1v5.4 M777.21 714.1v5.4 M787.97 714.1v5.4 M798.73 714.1v5.4 M809.49 714.1v5.4 M820.25 714.1v5.4 M831.02 714.1v5.4 M841.78 714.1v5.4 M852.54 714.1v5.4 M863.3 714.1v5.4 M874.06 714.1v5.4 M884.82 714.1v5.4 M895.58 714.1v5.4 M906.34 714.1v5.4 M917.1 714.1v5.4 M927.86 714.1v5.4 M938.63 714.1v5.4 M949.39 714.1v5.4 M960.15 714.1v5.4 M970.91 714.1v5.4 M981.67 714.1v5.4 M992.43 714.1v5.4 M1003.19 714.1v5.4 M1013.95 714.1v5.4 M1024.71 714.1v5.4 M1035.47 714.1v5.4 M1046.24 714.1v5.4 M1057 714.1v5.4 M1067.76 714.1v5.4 M1078.52 714.1v5.4 M1089.28 714.1v5.4 M1100.04 714.1v5.4 M1110.8 714.1v5.4 M1121.56 714.1v5.4 M1132.32 714.1v5.4 M1143.08 714.1v5.4 M1153.85 714.1v5.4 M1164.61 714.1v5.4 M1175.37 714.1v5.4 M1186.13 714.1v5.4" stroke="#241d35" stroke-width="1.8" fill="none"/>
<path shape-rendering="geometricPrecision" d="M-5.97 743.7v6 M-0.16 743.7v6 M4.14 743.7v6 M12.1 743.7v6 M14.47 743.7v6 M22.43 743.7v6 M25.02 743.7v6 M32.33 743.7v6 M37.07 743.7v6 M42.88 743.7v6 M47.18 743.7v6 M55.15 743.7v6 M57.51 743.7v6 M65.48 743.7v6 M68.06 743.7v6 M75.38 743.7v6 M80.11 743.7v6 M85.92 743.7v6 M90.23 743.7v6 M98.19 743.7v6 M100.56 743.7v6 M108.52 743.7v6 M111.1 743.7v6 M118.42 743.7v6 M123.16 743.7v6 M128.97 743.7v6 M133.27 743.7v6 M141.24 743.7v6 M143.6 743.7v6 M151.57 743.7v6 M154.15 743.7v6 M161.47 743.7v6 M166.2 743.7v6 M172.01 743.7v6 M176.32 743.7v6 M184.28 743.7v6 M186.65 743.7v6 M194.61 743.7v6 M197.19 743.7v6 M204.51 743.7v6 M209.25 743.7v6 M215.06 743.7v6 M219.36 743.7v6 M227.32 743.7v6 M229.69 743.7v6 M237.65 743.7v6 M240.24 743.7v6 M247.55 743.7v6 M252.29 743.7v6 M258.1 743.7v6 M262.4 743.7v6 M270.37 743.7v6 M272.73 743.7v6 M280.7 743.7v6 M283.28 743.7v6 M290.6 743.7v6 M295.33 743.7v6 M301.14 743.7v6 M305.45 743.7v6 M313.41 743.7v6 M315.78 743.7v6 M323.74 743.7v6 M326.32 743.7v6 M333.64 743.7v6 M338.38 743.7v6 M344.19 743.7v6 M348.49 743.7v6 M356.46 743.7v6 M358.82 743.7v6 M366.79 743.7v6 M369.37 743.7v6 M376.69 743.7v6 M381.42 743.7v6 M387.23 743.7v6 M391.54 743.7v6 M399.5 743.7v6 M401.87 743.7v6 M409.83 743.7v6 M412.41 743.7v6 M419.73 743.7v6 M424.47 743.7v6 M430.28 743.7v6 M434.58 743.7v6 M442.54 743.7v6 M444.91 743.7v6 M452.87 743.7v6 M455.46 743.7v6 M462.77 743.7v6 M467.51 743.7v6 M473.32 743.7v6 M477.62 743.7v6 M485.59 743.7v6 M487.95 743.7v6 M495.92 743.7v6 M498.5 743.7v6 M505.82 743.7v6 M510.55 743.7v6 M516.36 743.7v6 M520.67 743.7v6 M528.63 743.7v6 M531 743.7v6 M538.96 743.7v6 M541.54 743.7v6 M548.86 743.7v6 M553.6 743.7v6 M559.41 743.7v6 M563.71 743.7v6 M571.68 743.7v6 M574.04 743.7v6 M582.01 743.7v6 M584.59 743.7v6 M591.91 743.7v6 M596.64 743.7v6 M602.45 743.7v6 M606.76 743.7v6 M614.72 743.7v6 M617.09 743.7v6 M625.05 743.7v6 M627.63 743.7v6 M634.95 743.7v6 M639.69 743.7v6 M645.5 743.7v6 M649.8 743.7v6 M657.76 743.7v6 M660.13 743.7v6 M668.09 743.7v6 M670.68 743.7v6 M677.99 743.7v6 M682.73 743.7v6 M688.54 743.7v6 M692.84 743.7v6 M700.81 743.7v6 M703.17 743.7v6 M711.14 743.7v6 M713.72 743.7v6 M721.04 743.7v6 M725.77 743.7v6 M731.58 743.7v6 M735.89 743.7v6 M743.85 743.7v6 M746.22 743.7v6 M754.18 743.7v6 M756.76 743.7v6 M764.08 743.7v6 M768.82 743.7v6 M774.63 743.7v6 M778.93 743.7v6 M786.9 743.7v6 M789.26 743.7v6 M797.23 743.7v6 M799.81 743.7v6 M807.13 743.7v6 M811.86 743.7v6 M817.67 743.7v6 M821.98 743.7v6 M829.94 743.7v6 M832.31 743.7v6 M840.27 743.7v6 M842.85 743.7v6 M850.17 743.7v6 M854.91 743.7v6 M860.72 743.7v6 M865.02 743.7v6 M872.98 743.7v6 M875.35 743.7v6 M883.31 743.7v6 M885.9 743.7v6 M893.21 743.7v6 M897.95 743.7v6 M903.76 743.7v6 M908.06 743.7v6 M916.03 743.7v6 M918.39 743.7v6 M926.36 743.7v6 M928.94 743.7v6 M936.26 743.7v6 M940.99 743.7v6 M946.8 743.7v6 M951.11 743.7v6 M959.07 743.7v6 M961.44 743.7v6 M969.4 743.7v6 M971.98 743.7v6 M979.3 743.7v6 M984.04 743.7v6 M989.85 743.7v6 M994.15 743.7v6 M1002.12 743.7v6 M1004.48 743.7v6 M1012.45 743.7v6 M1015.03 743.7v6 M1022.35 743.7v6 M1027.08 743.7v6 M1032.89 743.7v6 M1037.2 743.7v6 M1045.16 743.7v6 M1047.53 743.7v6 M1055.49 743.7v6 M1058.07 743.7v6 M1065.39 743.7v6 M1070.13 743.7v6 M1075.94 743.7v6 M1080.24 743.7v6 M1088.2 743.7v6 M1090.57 743.7v6 M1098.53 743.7v6 M1101.12 743.7v6 M1108.43 743.7v6 M1113.17 743.7v6 M1118.98 743.7v6 M1123.28 743.7v6 M1131.25 743.7v6 M1133.61 743.7v6 M1141.58 743.7v6 M1144.16 743.7v6 M1151.48 743.7v6 M1156.21 743.7v6 M1162.02 743.7v6 M1166.33 743.7v6 M1174.29 743.7v6 M1176.66 743.7v6 M1184.62 743.7v6 M1187.2 743.7v6" stroke="#241d35" stroke-width="1.8" fill="none"/>
<path shape-rendering="geometricPrecision" d="M-4.9 751.3v6 M-0.59 751.3v6 M5.86 751.3v6 M10.17 751.3v6 M16.62 751.3v6 M20.93 751.3v6 M27.38 751.3v6 M31.69 751.3v6 M38.15 751.3v6 M42.45 751.3v6 M48.91 751.3v6 M53.21 751.3v6 M59.67 751.3v6 M63.97 751.3v6 M70.43 751.3v6 M74.73 751.3v6 M81.19 751.3v6 M85.49 751.3v6 M91.95 751.3v6 M96.25 751.3v6 M102.71 751.3v6 M107.02 751.3v6 M113.47 751.3v6 M117.78 751.3v6 M124.23 751.3v6 M128.54 751.3v6 M134.99 751.3v6 M139.3 751.3v6 M145.76 751.3v6 M150.06 751.3v6 M156.52 751.3v6 M160.82 751.3v6 M167.28 751.3v6 M171.58 751.3v6 M178.04 751.3v6 M182.34 751.3v6 M188.8 751.3v6 M193.1 751.3v6 M199.56 751.3v6 M203.86 751.3v6 M210.32 751.3v6 M214.63 751.3v6 M221.08 751.3v6 M225.39 751.3v6 M231.84 751.3v6 M236.15 751.3v6 M242.6 751.3v6 M246.91 751.3v6 M253.37 751.3v6 M257.67 751.3v6 M264.13 751.3v6 M268.43 751.3v6 M274.89 751.3v6 M279.19 751.3v6 M285.65 751.3v6 M289.95 751.3v6 M296.41 751.3v6 M300.71 751.3v6 M307.17 751.3v6 M311.47 751.3v6 M317.93 751.3v6 M322.24 751.3v6 M328.69 751.3v6 M333 751.3v6 M339.45 751.3v6 M343.76 751.3v6 M350.21 751.3v6 M354.52 751.3v6 M360.98 751.3v6 M365.28 751.3v6 M371.74 751.3v6 M376.04 751.3v6 M382.5 751.3v6 M386.8 751.3v6 M393.26 751.3v6 M397.56 751.3v6 M404.02 751.3v6 M408.32 751.3v6 M414.78 751.3v6 M419.08 751.3v6 M425.54 751.3v6 M429.85 751.3v6 M436.3 751.3v6 M440.61 751.3v6 M447.06 751.3v6 M451.37 751.3v6 M457.82 751.3v6 M462.13 751.3v6 M468.59 751.3v6 M472.89 751.3v6 M479.35 751.3v6 M483.65 751.3v6 M490.11 751.3v6 M494.41 751.3v6 M500.87 751.3v6 M505.17 751.3v6 M511.63 751.3v6 M515.93 751.3v6 M522.39 751.3v6 M526.69 751.3v6 M533.15 751.3v6 M537.46 751.3v6 M543.91 751.3v6 M548.22 751.3v6 M554.67 751.3v6 M558.98 751.3v6 M565.43 751.3v6 M569.74 751.3v6 M576.2 751.3v6 M580.5 751.3v6 M586.96 751.3v6 M591.26 751.3v6 M597.72 751.3v6 M602.02 751.3v6 M608.48 751.3v6 M612.78 751.3v6 M619.24 751.3v6 M623.54 751.3v6 M630 751.3v6 M634.3 751.3v6 M640.76 751.3v6 M645.07 751.3v6 M651.52 751.3v6 M655.83 751.3v6 M662.28 751.3v6 M666.59 751.3v6 M673.04 751.3v6 M677.35 751.3v6 M683.81 751.3v6 M688.11 751.3v6 M694.57 751.3v6 M698.87 751.3v6 M705.33 751.3v6 M709.63 751.3v6 M716.09 751.3v6 M720.39 751.3v6 M726.85 751.3v6 M731.15 751.3v6 M737.61 751.3v6 M741.91 751.3v6 M748.37 751.3v6 M752.68 751.3v6 M759.13 751.3v6 M763.44 751.3v6 M769.89 751.3v6 M774.2 751.3v6 M780.65 751.3v6 M784.96 751.3v6 M791.42 751.3v6 M795.72 751.3v6 M802.18 751.3v6 M806.48 751.3v6 M812.94 751.3v6 M817.24 751.3v6 M823.7 751.3v6 M828 751.3v6 M834.46 751.3v6 M838.76 751.3v6 M845.22 751.3v6 M849.52 751.3v6 M855.98 751.3v6 M860.29 751.3v6 M866.74 751.3v6 M871.05 751.3v6 M877.5 751.3v6 M881.81 751.3v6 M888.26 751.3v6 M892.57 751.3v6 M899.03 751.3v6 M903.33 751.3v6 M909.79 751.3v6 M914.09 751.3v6 M920.55 751.3v6 M924.85 751.3v6 M931.31 751.3v6 M935.61 751.3v6 M942.07 751.3v6 M946.37 751.3v6 M952.83 751.3v6 M957.13 751.3v6 M963.59 751.3v6 M967.9 751.3v6 M974.35 751.3v6 M978.66 751.3v6 M985.11 751.3v6 M989.42 751.3v6 M995.87 751.3v6 M1000.18 751.3v6 M1006.64 751.3v6 M1010.94 751.3v6 M1017.4 751.3v6 M1021.7 751.3v6 M1028.16 751.3v6 M1032.46 751.3v6 M1038.92 751.3v6 M1043.22 751.3v6 M1049.68 751.3v6 M1053.98 751.3v6 M1060.44 751.3v6 M1064.74 751.3v6 M1071.2 751.3v6 M1075.51 751.3v6 M1081.96 751.3v6 M1086.27 751.3v6 M1092.72 751.3v6 M1097.03 751.3v6 M1103.48 751.3v6 M1107.79 751.3v6 M1114.25 751.3v6 M1118.55 751.3v6 M1125.01 751.3v6 M1129.31 751.3v6 M1135.77 751.3v6 M1140.07 751.3v6 M1146.53 751.3v6 M1150.83 751.3v6 M1157.29 751.3v6 M1161.59 751.3v6 M1168.05 751.3v6 M1172.35 751.3v6 M1178.81 751.3v6 M1183.12 751.3v6 M1189.57 751.3v6" stroke="#241d35" stroke-width="1.8" fill="none"/>
<path shape-rendering="geometricPrecision" d="M-3.18 766.3v5.4 M7.58 766.3v5.4 M18.34 766.3v5.4 M29.11 766.3v5.4 M39.87 766.3v5.4 M50.63 766.3v5.4 M61.39 766.3v5.4 M72.15 766.3v5.4 M82.91 766.3v5.4 M93.67 766.3v5.4 M104.43 766.3v5.4 M115.19 766.3v5.4 M125.95 766.3v5.4 M136.72 766.3v5.4 M147.48 766.3v5.4 M158.24 766.3v5.4 M169 766.3v5.4 M179.76 766.3v5.4 M190.52 766.3v5.4 M201.28 766.3v5.4 M212.04 766.3v5.4 M222.8 766.3v5.4 M233.56 766.3v5.4 M244.33 766.3v5.4 M255.09 766.3v5.4 M265.85 766.3v5.4 M276.61 766.3v5.4 M287.37 766.3v5.4 M298.13 766.3v5.4 M308.89 766.3v5.4 M319.65 766.3v5.4 M330.41 766.3v5.4 M341.17 766.3v5.4 M351.94 766.3v5.4 M362.7 766.3v5.4 M373.46 766.3v5.4 M384.22 766.3v5.4 M394.98 766.3v5.4 M405.74 766.3v5.4 M416.5 766.3v5.4 M427.26 766.3v5.4 M438.02 766.3v5.4 M448.78 766.3v5.4 M459.55 766.3v5.4 M470.31 766.3v5.4 M481.07 766.3v5.4 M491.83 766.3v5.4 M502.59 766.3v5.4 M513.35 766.3v5.4 M524.11 766.3v5.4 M534.87 766.3v5.4 M545.63 766.3v5.4 M556.39 766.3v5.4 M567.16 766.3v5.4 M577.92 766.3v5.4 M588.68 766.3v5.4 M599.44 766.3v5.4 M610.2 766.3v5.4 M620.96 766.3v5.4 M631.72 766.3v5.4 M642.48 766.3v5.4 M653.24 766.3v5.4 M664 766.3v5.4 M674.77 766.3v5.4 M685.53 766.3v5.4 M696.29 766.3v5.4 M707.05 766.3v5.4 M717.81 766.3v5.4 M728.57 766.3v5.4 M739.33 766.3v5.4 M750.09 766.3v5.4 M760.85 766.3v5.4 M771.61 766.3v5.4 M782.38 766.3v5.4 M793.14 766.3v5.4 M803.9 766.3v5.4 M814.66 766.3v5.4 M825.42 766.3v5.4 M836.18 766.3v5.4 M846.94 766.3v5.4 M857.7 766.3v5.4 M868.46 766.3v5.4 M879.22 766.3v5.4 M889.99 766.3v5.4 M900.75 766.3v5.4 M911.51 766.3v5.4 M922.27 766.3v5.4 M933.03 766.3v5.4 M943.79 766.3v5.4 M954.55 766.3v5.4 M965.31 766.3v5.4 M976.07 766.3v5.4 M986.83 766.3v5.4 M997.6 766.3v5.4 M1008.36 766.3v5.4 M1019.12 766.3v5.4 M1029.88 766.3v5.4 M1040.64 766.3v5.4 M1051.4 766.3v5.4 M1062.16 766.3v5.4 M1072.92 766.3v5.4 M1083.68 766.3v5.4 M1094.44 766.3v5.4 M1105.21 766.3v5.4 M1115.97 766.3v5.4 M1126.73 766.3v5.4 M1137.49 766.3v5.4 M1148.25 766.3v5.4 M1159.01 766.3v5.4 M1169.77 766.3v5.4 M1180.53 766.3v5.4 M1191.29 766.3v5.4" stroke="#241d35" stroke-width="1.8" fill="none"/>
<path shape-rendering="geometricPrecision" d="M-1.67 803.8v6 M0.91 803.8v6 M8.88 803.8v6 M12.96 803.8v6 M19.21 803.8v6 M23.51 803.8v6 M29.75 803.8v6 M41.37 803.8v6 M43.96 803.8v6 M51.92 803.8v6 M56.01 803.8v6 M62.25 803.8v6 M66.55 803.8v6 M72.8 803.8v6 M84.42 803.8v6 M87 803.8v6 M94.96 803.8v6 M99.05 803.8v6 M105.29 803.8v6 M109.6 803.8v6 M115.84 803.8v6 M127.46 803.8v6 M130.04 803.8v6 M138.01 803.8v6 M142.1 803.8v6 M148.34 803.8v6 M152.64 803.8v6 M158.88 803.8v6 M170.51 803.8v6 M173.09 803.8v6 M181.05 803.8v6 M185.14 803.8v6 M191.38 803.8v6 M195.69 803.8v6 M201.93 803.8v6 M213.55 803.8v6 M216.13 803.8v6 M224.1 803.8v6 M228.18 803.8v6 M234.43 803.8v6 M238.73 803.8v6 M244.97 803.8v6 M256.59 803.8v6 M259.18 803.8v6 M267.14 803.8v6 M271.23 803.8v6 M277.47 803.8v6 M281.77 803.8v6 M288.02 803.8v6 M299.64 803.8v6 M302.22 803.8v6 M310.18 803.8v6 M314.27 803.8v6 M320.51 803.8v6 M324.82 803.8v6 M331.06 803.8v6 M342.68 803.8v6 M345.26 803.8v6 M353.23 803.8v6 M357.32 803.8v6 M363.56 803.8v6 M367.86 803.8v6 M374.1 803.8v6 M385.73 803.8v6 M388.31 803.8v6 M396.27 803.8v6 M400.36 803.8v6 M406.6 803.8v6 M410.91 803.8v6 M417.15 803.8v6 M428.77 803.8v6 M431.35 803.8v6 M439.32 803.8v6 M443.4 803.8v6 M449.65 803.8v6 M453.95 803.8v6 M460.19 803.8v6 M471.81 803.8v6 M474.4 803.8v6 M482.36 803.8v6 M486.45 803.8v6 M492.69 803.8v6 M496.99 803.8v6 M503.24 803.8v6 M514.86 803.8v6 M517.44 803.8v6 M525.4 803.8v6 M529.49 803.8v6 M535.73 803.8v6 M540.04 803.8v6 M546.28 803.8v6 M557.9 803.8v6 M560.48 803.8v6 M568.45 803.8v6 M572.54 803.8v6 M578.78 803.8v6 M583.08 803.8v6 M589.32 803.8v6 M600.95 803.8v6 M603.53 803.8v6 M611.49 803.8v6 M615.58 803.8v6 M621.82 803.8v6 M626.13 803.8v6 M632.37 803.8v6 M643.99 803.8v6 M646.57 803.8v6 M654.54 803.8v6 M658.62 803.8v6 M664.87 803.8v6 M669.17 803.8v6 M675.41 803.8v6 M687.03 803.8v6 M689.62 803.8v6 M697.58 803.8v6 M701.67 803.8v6 M707.91 803.8v6 M712.21 803.8v6 M718.46 803.8v6 M730.08 803.8v6 M732.66 803.8v6 M740.62 803.8v6 M744.71 803.8v6 M750.95 803.8v6 M755.26 803.8v6 M761.5 803.8v6 M773.12 803.8v6 M775.7 803.8v6 M783.67 803.8v6 M787.76 803.8v6 M794 803.8v6 M798.3 803.8v6 M804.54 803.8v6 M816.17 803.8v6 M818.75 803.8v6 M826.71 803.8v6 M830.8 803.8v6 M837.04 803.8v6 M841.35 803.8v6 M847.59 803.8v6 M859.21 803.8v6 M861.79 803.8v6 M869.76 803.8v6 M873.84 803.8v6 M880.09 803.8v6 M884.39 803.8v6 M890.63 803.8v6 M902.25 803.8v6 M904.84 803.8v6 M912.8 803.8v6 M916.89 803.8v6 M923.13 803.8v6 M927.43 803.8v6 M933.68 803.8v6 M945.3 803.8v6 M947.88 803.8v6 M955.84 803.8v6 M959.93 803.8v6 M966.17 803.8v6 M970.48 803.8v6 M976.72 803.8v6 M988.34 803.8v6 M990.92 803.8v6 M998.89 803.8v6 M1002.98 803.8v6 M1009.22 803.8v6 M1013.52 803.8v6 M1019.76 803.8v6 M1031.39 803.8v6 M1033.97 803.8v6 M1041.93 803.8v6 M1046.02 803.8v6 M1052.26 803.8v6 M1056.57 803.8v6 M1062.81 803.8v6 M1074.43 803.8v6 M1077.01 803.8v6 M1084.98 803.8v6 M1089.06 803.8v6 M1095.31 803.8v6 M1099.61 803.8v6 M1105.85 803.8v6 M1117.47 803.8v6 M1120.06 803.8v6 M1128.02 803.8v6 M1132.11 803.8v6 M1138.35 803.8v6 M1142.65 803.8v6 M1148.9 803.8v6 M1160.52 803.8v6 M1163.1 803.8v6 M1171.06 803.8v6 M1175.15 803.8v6 M1181.39 803.8v6 M1185.7 803.8v6 M1191.94 803.8v6" stroke="#241d35" stroke-width="1.8" fill="none"/>
<path shape-rendering="geometricPrecision" d="M-8.99 803.8v9 M34.06 803.8v9 M77.1 803.8v9 M120.14 803.8v9 M163.19 803.8v9 M206.23 803.8v9 M249.28 803.8v9 M292.32 803.8v9 M335.36 803.8v9 M378.41 803.8v9 M421.45 803.8v9 M464.5 803.8v9 M507.54 803.8v9 M550.58 803.8v9 M593.63 803.8v9 M636.67 803.8v9 M679.72 803.8v9 M722.76 803.8v9 M765.8 803.8v9 M808.85 803.8v9 M851.89 803.8v9 M894.94 803.8v9 M937.98 803.8v9 M981.02 803.8v9 M1024.07 803.8v9 M1067.11 803.8v9 M1110.16 803.8v9 M1153.2 803.8v9" stroke="#241d35" stroke-width="1.6" fill="none"/>
<rect x="12" y="817" width="323" height="24" fill="#8a6fe3"/>
<rect x="12" y="817" width="1" height="129.3" fill="#5f49b5"/>
<rect x="334" y="817" width="1" height="129.3" fill="#5f49b5"/>
<rect x="12" y="817" width="323" height="1" fill="#5f49b5"/>
<rect x="12" y="841" width="323" height="1" fill="#5f49b5"/>
<rect x="12" y="945.3" width="323" height="1" fill="#5f49b5"/>
<rect x="335" y="817" width="173" height="24" fill="#8a6fe3"/>
<rect x="335" y="817" width="1" height="129.3" fill="#5f49b5"/>
<rect x="507" y="817" width="1" height="129.3" fill="#5f49b5"/>
<rect x="335" y="817" width="173" height="1" fill="#5f49b5"/>
<rect x="335" y="841" width="173" height="1" fill="#5f49b5"/>
<rect x="335" y="945.3" width="173" height="1" fill="#5f49b5"/>
<rect x="508" y="817" width="344" height="24" fill="#8a6fe3"/>
<rect x="508" y="817" width="1" height="129.3" fill="#5f49b5"/>
<rect x="851" y="817" width="1" height="129.3" fill="#5f49b5"/>
<rect x="508" y="817" width="344" height="1" fill="#5f49b5"/>
<rect x="508" y="841" width="344" height="1" fill="#5f49b5"/>
<rect x="508" y="945.3" width="344" height="1" fill="#5f49b5"/>
<rect x="852" y="817" width="172" height="24" fill="#8a6fe3"/>
<rect x="852" y="817" width="1" height="129.3" fill="#5f49b5"/>
<rect x="1023" y="817" width="1" height="129.3" fill="#5f49b5"/>
<rect x="852" y="817" width="172" height="1" fill="#5f49b5"/>
<rect x="852" y="841" width="172" height="1" fill="#5f49b5"/>
<rect x="852" y="945.3" width="172" height="1" fill="#5f49b5"/>
<path shape-rendering="geometricPrecision" d="M-4.9 846.4v5.4 M-0.59 846.4v5.4 M5.86 846.4v5.4 M10.17 846.4v5.4 M16.62 846.4v5.4 M20.93 846.4v5.4 M27.38 846.4v5.4 M31.69 846.4v5.4 M38.15 846.4v5.4 M42.45 846.4v5.4 M48.91 846.4v5.4 M53.21 846.4v5.4 M59.67 846.4v5.4 M63.97 846.4v5.4 M70.43 846.4v5.4 M74.73 846.4v5.4 M81.19 846.4v5.4 M85.49 846.4v5.4 M91.95 846.4v5.4 M96.25 846.4v5.4 M102.71 846.4v5.4 M107.02 846.4v5.4 M113.47 846.4v5.4 M117.78 846.4v5.4 M124.23 846.4v5.4 M128.54 846.4v5.4 M134.99 846.4v5.4 M139.3 846.4v5.4 M145.76 846.4v5.4 M150.06 846.4v5.4 M156.52 846.4v5.4 M160.82 846.4v5.4 M167.28 846.4v5.4 M171.58 846.4v5.4 M178.04 846.4v5.4 M182.34 846.4v5.4 M188.8 846.4v5.4 M193.1 846.4v5.4 M199.56 846.4v5.4 M203.86 846.4v5.4 M210.32 846.4v5.4 M214.63 846.4v5.4 M221.08 846.4v5.4 M225.39 846.4v5.4 M231.84 846.4v5.4 M236.15 846.4v5.4 M242.6 846.4v5.4 M246.91 846.4v5.4 M253.37 846.4v5.4 M257.67 846.4v5.4 M264.13 846.4v5.4 M268.43 846.4v5.4 M274.89 846.4v5.4 M279.19 846.4v5.4 M285.65 846.4v5.4 M289.95 846.4v5.4 M296.41 846.4v5.4 M300.71 846.4v5.4 M307.17 846.4v5.4 M311.47 846.4v5.4 M317.93 846.4v5.4 M322.24 846.4v5.4 M328.69 846.4v5.4 M333 846.4v5.4 M339.45 846.4v5.4 M343.76 846.4v5.4 M350.21 846.4v5.4 M354.52 846.4v5.4 M360.98 846.4v5.4 M365.28 846.4v5.4 M371.74 846.4v5.4 M376.04 846.4v5.4 M382.5 846.4v5.4 M386.8 846.4v5.4 M393.26 846.4v5.4 M397.56 846.4v5.4 M404.02 846.4v5.4 M408.32 846.4v5.4 M414.78 846.4v5.4 M419.08 846.4v5.4 M425.54 846.4v5.4 M429.85 846.4v5.4 M436.3 846.4v5.4 M440.61 846.4v5.4 M447.06 846.4v5.4 M451.37 846.4v5.4 M457.82 846.4v5.4 M462.13 846.4v5.4 M468.59 846.4v5.4 M472.89 846.4v5.4 M479.35 846.4v5.4 M483.65 846.4v5.4 M490.11 846.4v5.4 M494.41 846.4v5.4 M500.87 846.4v5.4 M505.17 846.4v5.4 M511.63 846.4v5.4 M515.93 846.4v5.4 M522.39 846.4v5.4 M526.69 846.4v5.4 M533.15 846.4v5.4 M537.46 846.4v5.4 M543.91 846.4v5.4 M548.22 846.4v5.4 M554.67 846.4v5.4 M558.98 846.4v5.4 M565.43 846.4v5.4 M569.74 846.4v5.4 M576.2 846.4v5.4 M580.5 846.4v5.4 M586.96 846.4v5.4 M591.26 846.4v5.4 M597.72 846.4v5.4 M602.02 846.4v5.4 M608.48 846.4v5.4 M612.78 846.4v5.4 M619.24 846.4v5.4 M623.54 846.4v5.4 M630 846.4v5.4 M634.3 846.4v5.4 M640.76 846.4v5.4 M645.07 846.4v5.4 M651.52 846.4v5.4 M655.83 846.4v5.4 M662.28 846.4v5.4 M666.59 846.4v5.4 M673.04 846.4v5.4 M677.35 846.4v5.4 M683.81 846.4v5.4 M688.11 846.4v5.4 M694.57 846.4v5.4 M698.87 846.4v5.4 M705.33 846.4v5.4 M709.63 846.4v5.4 M716.09 846.4v5.4 M720.39 846.4v5.4 M726.85 846.4v5.4 M731.15 846.4v5.4 M737.61 846.4v5.4 M741.91 846.4v5.4 M748.37 846.4v5.4 M752.68 846.4v5.4 M759.13 846.4v5.4 M763.44 846.4v5.4 M769.89 846.4v5.4 M774.2 846.4v5.4 M780.65 846.4v5.4 M784.96 846.4v5.4 M791.42 846.4v5.4 M795.72 846.4v5.4 M802.18 846.4v5.4 M806.48 846.4v5.4 M812.94 846.4v5.4 M817.24 846.4v5.4 M823.7 846.4v5.4 M828 846.4v5.4 M834.46 846.4v5.4 M838.76 846.4v5.4 M845.22 846.4v5.4 M849.52 846.4v5.4 M855.98 846.4v5.4 M860.29 846.4v5.4 M866.74 846.4v5.4 M871.05 846.4v5.4 M877.5 846.4v5.4 M881.81 846.4v5.4 M888.26 846.4v5.4 M892.57 846.4v5.4 M899.03 846.4v5.4 M903.33 846.4v5.4 M909.79 846.4v5.4 M914.09 846.4v5.4 M920.55 846.4v5.4 M924.85 846.4v5.4 M931.31 846.4v5.4 M935.61 846.4v5.4 M942.07 846.4v5.4 M946.37 846.4v5.4 M952.83 846.4v5.4 M957.13 846.4v5.4 M963.59 846.4v5.4 M967.9 846.4v5.4 M974.35 846.4v5.4 M978.66 846.4v5.4 M985.11 846.4v5.4 M989.42 846.4v5.4 M995.87 846.4v5.4 M1000.18 846.4v5.4 M1006.64 846.4v5.4 M1010.94 846.4v5.4 M1017.4 846.4v5.4" stroke="#241d35" stroke-width="1.8" fill="none"/>
<path shape-rendering="geometricPrecision" d="M14 938.8H1021.07" stroke="#241d35" stroke-width="5.6" stroke-dasharray="5 1.5 8 2 2.5 1.5 4 1.5 2 1.5 3.5 1.5 8 2 5.5 2 7.5 2 8.5 2 2.5 1.5 5 1.5 2 1.5" fill="none"/>
<rect x="34" y="685.5" width="1.5" height="4" fill="#2a2238"/>
<rect x="77" y="685.5" width="1.5" height="4" fill="#2a2238"/>
<rect x="120" y="685.5" width="1.5" height="4" fill="#2a2238"/>
<rect x="163" y="685.5" width="1.5" height="4" fill="#2a2238"/>
<rect x="206" y="685.5" width="1.5" height="4" fill="#2a2238"/>
<rect x="249" y="685.5" width="1.5" height="4" fill="#2a2238"/>
<rect x="292" y="685.5" width="1.5" height="4" fill="#2a2238"/>
<rect x="378" y="685.5" width="1.5" height="4" fill="#2a2238"/>
<rect x="421" y="685.5" width="1.5" height="4" fill="#2a2238"/>
<rect x="464" y="685.5" width="1.5" height="4" fill="#2a2238"/>
<rect x="551" y="685.5" width="1.5" height="4" fill="#2a2238"/>
<rect x="594" y="685.5" width="1.5" height="4" fill="#2a2238"/>
<rect x="637" y="685.5" width="1.5" height="4" fill="#2a2238"/>
<rect x="680" y="685.5" width="1.5" height="4" fill="#2a2238"/>
<rect x="723" y="685.5" width="1.5" height="4" fill="#2a2238"/>
<rect x="766" y="685.5" width="1.5" height="4" fill="#2a2238"/>
<rect x="809" y="685.5" width="1.5" height="4" fill="#2a2238"/>
<rect x="895" y="685.5" width="1.5" height="4" fill="#2a2238"/>
<rect x="938" y="685.5" width="1.5" height="4" fill="#2a2238"/>
<rect x="981" y="685.5" width="1.5" height="4" fill="#2a2238"/>
<rect x="1067" y="685.5" width="1.5" height="4" fill="#2a2238"/>
<rect x="1110" y="685.5" width="1.5" height="4" fill="#2a2238"/>
<rect x="1153" y="685.5" width="1.5" height="4" fill="#2a2238"/>
<rect x="77" y="818" width="1.5" height="4" fill="#2a2238"/>
<rect x="77" y="941.3" width="1.5" height="4" fill="#2a2238"/>
<rect x="163" y="818" width="1.5" height="4" fill="#2a2238"/>
<rect x="163" y="941.3" width="1.5" height="4" fill="#2a2238"/>
<rect x="249" y="818" width="1.5" height="4" fill="#2a2238"/>
<rect x="249" y="941.3" width="1.5" height="4" fill="#2a2238"/>
<rect x="421" y="818" width="1.5" height="4" fill="#2a2238"/>
<rect x="421" y="941.3" width="1.5" height="4" fill="#2a2238"/>
<rect x="594" y="818" width="1.5" height="4" fill="#2a2238"/>
<rect x="594" y="941.3" width="1.5" height="4" fill="#2a2238"/>
<rect x="680" y="818" width="1.5" height="4" fill="#2a2238"/>
<rect x="680" y="941.3" width="1.5" height="4" fill="#2a2238"/>
<rect x="766" y="818" width="1.5" height="4" fill="#2a2238"/>
<rect x="766" y="941.3" width="1.5" height="4" fill="#2a2238"/>
<rect x="938" y="818" width="1.5" height="4" fill="#2a2238"/>
<rect x="938" y="941.3" width="1.5" height="4" fill="#2a2238"/>
<rect x="421" y="1251.5" width="1.5" height="4" fill="#2a2238"/>
<rect x="421" y="1375" width="1.5" height="4" fill="#2a2238"/>
<rect x="594" y="1251.5" width="1.5" height="4" fill="#2a2238"/>
<rect x="594" y="1375" width="1.5" height="4" fill="#2a2238"/>
<rect x="680" y="1251.5" width="1.5" height="4" fill="#2a2238"/>
<rect x="680" y="1375" width="1.5" height="4" fill="#2a2238"/>
<rect x="766" y="1251.5" width="1.5" height="4" fill="#2a2238"/>
<rect x="766" y="1375" width="1.5" height="4" fill="#2a2238"/>
<rect x="938" y="1251.5" width="1.5" height="4" fill="#2a2238"/>
<rect x="938" y="1375" width="1.5" height="4" fill="#2a2238"/>
<rect x="1110" y="1251.5" width="1.5" height="4" fill="#2a2238"/>
<rect x="1110" y="1375" width="1.5" height="4" fill="#2a2238"/>
<rect x="1282" y="1251.5" width="1.5" height="4" fill="#2a2238"/>
<rect x="1282" y="1375" width="1.5" height="4" fill="#2a2238"/>
<rect x="1455" y="1251.5" width="1.5" height="4" fill="#2a2238"/>
<rect x="1455" y="1375" width="1.5" height="4" fill="#2a2238"/>
<rect x="1196" y="1032.5" width="345" height="26.5" fill="#8a6fe3"/>
<rect x="1196" y="1032.5" width="1" height="26.5" fill="#5f49b5"/>
<rect x="1540" y="1032.5" width="1" height="26.5" fill="#5f49b5"/>
<rect x="1196" y="1032.5" width="345" height="1" fill="#5f49b5"/>
<rect x="1196" y="1058" width="345" height="1" fill="#5f49b5"/>
<rect x="1196" y="1061.5" width="345" height="26.5" fill="#8a6fe3"/>
<rect x="1196" y="1061.5" width="1" height="26.5" fill="#5f49b5"/>
<rect x="1540" y="1061.5" width="1" height="26.5" fill="#5f49b5"/>
<rect x="1196" y="1061.5" width="345" height="1" fill="#5f49b5"/>
<rect x="1196" y="1087" width="345" height="1" fill="#5f49b5"/>
<rect x="1196" y="1090.5" width="345" height="26.5" fill="#8a6fe3"/>
<rect x="1196" y="1090.5" width="1" height="26.5" fill="#5f49b5"/>
<rect x="1540" y="1090.5" width="1" height="26.5" fill="#5f49b5"/>
<rect x="1196" y="1090.5" width="345" height="1" fill="#5f49b5"/>
<rect x="1196" y="1116" width="345" height="1" fill="#5f49b5"/>
<rect x="335" y="1250.5" width="173" height="24" fill="#8a6fe3"/>
<rect x="335" y="1250.5" width="1" height="129.5" fill="#5f49b5"/>
<rect x="507" y="1250.5" width="1" height="129.5" fill="#5f49b5"/>
<rect x="335" y="1250.5" width="173" height="1" fill="#5f49b5"/>
<rect x="335" y="1274.5" width="173" height="1" fill="#5f49b5"/>
<rect x="335" y="1379" width="173" height="1" fill="#5f49b5"/>
<rect x="508" y="1250.5" width="344" height="24" fill="#8a6fe3"/>
<rect x="508" y="1250.5" width="1" height="129.5" fill="#5f49b5"/>
<rect x="851" y="1250.5" width="1" height="129.5" fill="#5f49b5"/>
<rect x="508" y="1250.5" width="344" height="1" fill="#5f49b5"/>
<rect x="508" y="1274.5" width="344" height="1" fill="#5f49b5"/>
<rect x="508" y="1379" width="344" height="1" fill="#5f49b5"/>
<rect x="852" y="1250.5" width="172" height="24" fill="#8a6fe3"/>
<rect x="852" y="1250.5" width="1" height="129.5" fill="#5f49b5"/>
<rect x="1023" y="1250.5" width="1" height="129.5" fill="#5f49b5"/>
<rect x="852" y="1250.5" width="172" height="1" fill="#5f49b5"/>
<rect x="852" y="1274.5" width="172" height="1" fill="#5f49b5"/>
<rect x="852" y="1379" width="172" height="1" fill="#5f49b5"/>
<rect x="1024" y="1250.5" width="172" height="24" fill="#8a6fe3"/>
<rect x="1024" y="1250.5" width="1" height="129.5" fill="#5f49b5"/>
<rect x="1195" y="1250.5" width="1" height="129.5" fill="#5f49b5"/>
<rect x="1024" y="1250.5" width="172" height="1" fill="#5f49b5"/>
<rect x="1024" y="1274.5" width="172" height="1" fill="#5f49b5"/>
<rect x="1024" y="1379" width="172" height="1" fill="#5f49b5"/>
<rect x="1196" y="1250.5" width="345" height="24" fill="#8a6fe3"/>
<rect x="1196" y="1250.5" width="1" height="129.5" fill="#5f49b5"/>
<rect x="1540" y="1250.5" width="1" height="129.5" fill="#5f49b5"/>
<rect x="1196" y="1250.5" width="345" height="1" fill="#5f49b5"/>
<rect x="1196" y="1274.5" width="345" height="1" fill="#5f49b5"/>
<rect x="1196" y="1379" width="345" height="1" fill="#5f49b5"/>
<rect x="335" y="1324" width="689" height="3" fill="#26212e"/>
<rect x="335" y="1332.5" width="689" height="3" fill="#26212e"/>
<rect x="335" y="1360" width="689" height="3" fill="#26212e"/>
<rect x="335" y="1368.5" width="689" height="3" fill="#26212e"/>
<rect x="1024" y="1288" width="517" height="3" fill="#26212e"/>
<rect x="1024" y="1297" width="517" height="3" fill="#26212e"/>
<rect x="1024" y="1324" width="517" height="3" fill="#26212e"/>
<rect x="1024" y="1332.5" width="517" height="3" fill="#26212e"/>
<rect x="1020" y="1514.8" width="69" height="24" fill="#8a6fe3"/>
<rect x="1020" y="1514.8" width="1" height="129.2" fill="#5f49b5"/>
<rect x="1088" y="1514.8" width="1" height="129.2" fill="#5f49b5"/>
<rect x="1020" y="1514.8" width="69" height="1" fill="#5f49b5"/>
<rect x="1020" y="1538.8" width="69" height="1" fill="#5f49b5"/>
<rect x="1020" y="1643" width="69" height="1" fill="#5f49b5"/>
<path shape-rendering="geometricPrecision" d="M1019.8 1558.3 L1020.7 1543.9 L1021.7 1543.3 L1022.6 1541.5 L1023.6 1540.7 L1024.6 1541.6 L1025.5 1542.1 L1026.5 1543.6 L1027.5 1545.3 L1028.4 1545.1 L1029.4 1545.8 L1030.3 1547.3 L1031.3 1548.6 L1032.3 1550.8 L1033.2 1552.4 L1034.2 1552.8 L1035.1 1554 L1036.1 1555.3 L1037.1 1556.6 L1038 1558.4 L1039 1559.1 L1040 1559.5 L1040.9 1560.3 L1041.9 1561 L1042.8 1561.5 L1043.8 1562.2 L1044.8 1562.5 L1045.7 1562.7 L1046.7 1563.1 L1047.7 1563.4 L1048.6 1563.6 L1049.6 1563.9 L1050.5 1564 L1051.5 1564.1 L1052.5 1564.3 L1053.4 1564.4 L1054.4 1564.6 L1055.3 1564.7 L1056.3 1564.7 L1057.3 1564.8 L1058.2 1564.8 L1059.2 1564.8 L1060.2 1564.9 L1061.1 1564.9 L1062.1 1564.9 L1063 1565 L1064 1565 L1065 1565 L1065.9 1565 L1066.9 1565 L1067.8 1565 L1068.8 1565 L1069.8 1565 L1070.7 1565 L1071.7 1565 L1072.7 1565 L1073.6 1565 L1074.6 1565 L1075.5 1565 L1076.5 1565 L1077.5 1565 L1078.4 1565 L1079.4 1565 L1080.3 1565 L1081.3 1565 L1082.3 1565 L1083.2 1565 L1084.2 1565 L1085.2 1565 L1086.1 1565 L1087.1 1565 L1088 1565 L1089 1565 L1089 1566.2 L1088 1566.2 L1087.1 1566.2 L1086.1 1566.2 L1085.2 1566.2 L1084.2 1566.2 L1083.2 1566.2 L1082.3 1566.2 L1081.3 1566.2 L1080.3 1566.2 L1079.4 1566.2 L1078.4 1566.2 L1077.5 1566.2 L1076.5 1566.2 L1075.5 1566.2 L1074.6 1566.2 L1073.6 1566.2 L1072.7 1566.2 L1071.7 1566.2 L1070.7 1566.2 L1069.8 1566.2 L1068.8 1566.2 L1067.8 1566.2 L1066.9 1566.2 L1065.9 1566.2 L1065 1566.2 L1064 1566.3 L1063 1566.3 L1062.1 1566.3 L1061.1 1566.4 L1060.2 1566.4 L1059.2 1566.4 L1058.2 1566.5 L1057.3 1566.5 L1056.3 1566.5 L1055.3 1566.6 L1054.4 1566.6 L1053.4 1566.7 L1052.5 1567 L1051.5 1567.2 L1050.5 1567.3 L1049.6 1567.4 L1048.6 1567.6 L1047.7 1567.7 L1046.7 1568.1 L1045.7 1568.7 L1044.8 1569 L1043.8 1569.2 L1042.8 1569.6 L1041.9 1569.9 L1040.9 1570.8 L1040 1572 L1039 1572.6 L1038 1573 L1037.1 1574.2 L1036.1 1575.5 L1035.1 1576.8 L1034.2 1578.9 L1033.2 1580.1 L1032.3 1580.5 L1031.3 1581.8 L1030.3 1583.4 L1029.4 1584.7 L1028.4 1586.8 L1027.5 1588.2 L1026.5 1587.6 L1025.5 1587.8 L1024.6 1589.1 L1023.6 1589.7 L1022.6 1590.4 L1021.7 1590.4 L1020.7 1587.3 L1019.8 1572.6 Z" fill="#25222d"/>
<path shape-rendering="geometricPrecision" d="M1019.8 1609.7 L1020.7 1594.8 L1021.7 1593.7 L1022.6 1594.5 L1023.6 1593.1 L1024.6 1592.7 L1025.5 1593.7 L1026.5 1594 L1027.5 1596 L1028.4 1598 L1029.4 1597.9 L1030.3 1598.7 L1031.3 1600.2 L1032.3 1601.3 L1033.2 1603.6 L1034.2 1605.2 L1035.1 1605.8 L1036.1 1607 L1037.1 1608.2 L1038 1609.3 L1039 1610.6 L1040 1611.4 L1040.9 1611.9 L1041.9 1612.7 L1042.8 1613 L1043.8 1613.4 L1044.8 1614.1 L1045.7 1614.4 L1046.7 1614.7 L1047.7 1615 L1048.6 1615.1 L1049.6 1615.3 L1050.5 1615.6 L1051.5 1615.7 L1052.5 1615.9 L1053.4 1616 L1054.4 1616.1 L1055.3 1616.2 L1056.3 1616.3 L1057.3 1616.3 L1058.2 1616.4 L1059.2 1616.4 L1060.2 1616.4 L1061.1 1616.4 L1062.1 1616.5 L1063 1616.5 L1064 1616.6 L1065 1616.6 L1065.9 1616.6 L1066.9 1616.6 L1067.8 1616.6 L1068.8 1616.6 L1069.8 1616.6 L1070.7 1616.6 L1071.7 1616.6 L1072.7 1616.6 L1073.6 1616.6 L1074.6 1616.6 L1075.5 1616.6 L1076.5 1616.6 L1077.5 1616.6 L1078.4 1616.6 L1079.4 1616.6 L1080.3 1616.6 L1081.3 1616.6 L1082.3 1616.6 L1083.2 1616.6 L1084.2 1616.6 L1085.2 1616.6 L1086.1 1616.6 L1087.1 1616.6 L1088 1616.6 L1089 1616.6 L1089 1617.8 L1088 1617.8 L1087.1 1617.8 L1086.1 1617.8 L1085.2 1617.8 L1084.2 1617.8 L1083.2 1617.8 L1082.3 1617.8 L1081.3 1617.8 L1080.3 1617.8 L1079.4 1617.8 L1078.4 1617.8 L1077.5 1617.8 L1076.5 1617.8 L1075.5 1617.8 L1074.6 1617.8 L1073.6 1617.8 L1072.7 1617.8 L1071.7 1617.8 L1070.7 1617.8 L1069.8 1617.8 L1068.8 1617.8 L1067.8 1617.8 L1066.9 1617.8 L1065.9 1617.8 L1065 1617.8 L1064 1617.8 L1063 1617.9 L1062.1 1617.9 L1061.1 1617.9 L1060.2 1617.9 L1059.2 1618 L1058.2 1618.1 L1057.3 1618.1 L1056.3 1618 L1055.3 1618.1 L1054.4 1618.1 L1053.4 1618.3 L1052.5 1618.5 L1051.5 1618.7 L1050.5 1618.8 L1049.6 1618.9 L1048.6 1619.2 L1047.7 1619.4 L1046.7 1619.7 L1045.7 1620.2 L1044.8 1620.4 L1043.8 1620.6 L1042.8 1621.2 L1041.9 1621.7 L1040.9 1622.5 L1040 1623.4 L1039 1623.9 L1038 1624.3 L1037.1 1625.8 L1036.1 1627.5 L1035.1 1628.7 L1034.2 1630.2 L1033.2 1631.1 L1032.3 1631.6 L1031.3 1633.5 L1030.3 1635.9 L1029.4 1636.8 L1028.4 1637.9 L1027.5 1638.8 L1026.5 1638.6 L1025.5 1639.6 L1024.6 1641.7 L1023.6 1642.1 L1022.6 1641.5 L1021.7 1640.9 L1020.7 1638.3 L1019.8 1624.2 Z" fill="#25222d"/>
<rect x="1106" y="1514.8" width="69" height="24" fill="#8a6fe3"/>
<rect x="1106" y="1514.8" width="1" height="129.2" fill="#5f49b5"/>
<rect x="1174" y="1514.8" width="1" height="129.2" fill="#5f49b5"/>
<rect x="1106" y="1514.8" width="69" height="1" fill="#5f49b5"/>
<rect x="1106" y="1538.8" width="69" height="1" fill="#5f49b5"/>
<rect x="1106" y="1643" width="69" height="1" fill="#5f49b5"/>
<path shape-rendering="geometricPrecision" d="M1105.9 1558.4 L1106.8 1544.8 L1107.8 1542.1 L1108.7 1540.7 L1109.7 1541.1 L1110.7 1541.6 L1111.6 1543 L1112.6 1544.4 L1113.5 1544 L1114.5 1544.6 L1115.5 1546.1 L1116.4 1547.1 L1117.4 1549.4 L1118.3 1551.1 L1119.3 1551.5 L1120.3 1552.7 L1121.2 1554 L1122.2 1555.3 L1123.1 1557.2 L1124.1 1558.4 L1125.1 1558.7 L1126 1559.5 L1127 1560.2 L1127.9 1561.1 L1128.9 1561.8 L1129.9 1562.1 L1130.8 1562.3 L1131.8 1562.7 L1132.7 1563 L1133.7 1563.4 L1134.7 1563.7 L1135.6 1563.8 L1136.6 1564 L1137.5 1564.1 L1138.5 1564.2 L1139.5 1564.5 L1140.4 1564.7 L1141.4 1564.7 L1142.3 1564.7 L1143.3 1564.7 L1144.3 1564.7 L1145.2 1564.8 L1146.2 1564.9 L1147.1 1564.9 L1148.1 1564.9 L1149.1 1564.9 L1150 1565 L1151 1565 L1152 1565 L1152.9 1565 L1153.9 1565 L1154.8 1565 L1155.8 1565 L1156.8 1565 L1157.7 1565 L1158.7 1565 L1159.6 1565 L1160.6 1565 L1161.6 1565 L1162.5 1565 L1163.5 1565 L1164.4 1565 L1165.4 1565 L1166.4 1565 L1167.3 1565 L1168.3 1565 L1169.2 1565 L1170.2 1565 L1171.2 1565 L1172.1 1565 L1173.1 1565 L1174 1565 L1175 1565 L1175 1566.2 L1174 1566.2 L1173.1 1566.2 L1172.1 1566.2 L1171.2 1566.2 L1170.2 1566.2 L1169.2 1566.2 L1168.3 1566.2 L1167.3 1566.2 L1166.4 1566.2 L1165.4 1566.2 L1164.4 1566.2 L1163.5 1566.2 L1162.5 1566.2 L1161.6 1566.2 L1160.6 1566.2 L1159.6 1566.2 L1158.7 1566.2 L1157.7 1566.2 L1156.8 1566.2 L1155.8 1566.2 L1154.8 1566.2 L1153.9 1566.2 L1152.9 1566.2 L1152 1566.2 L1151 1566.2 L1150 1566.2 L1149.1 1566.3 L1148.1 1566.3 L1147.1 1566.4 L1146.2 1566.4 L1145.2 1566.4 L1144.3 1566.4 L1143.3 1566.5 L1142.3 1566.6 L1141.4 1566.6 L1140.4 1566.6 L1139.5 1566.7 L1138.5 1566.9 L1137.5 1567.1 L1136.6 1567.4 L1135.6 1567.5 L1134.7 1567.6 L1133.7 1567.7 L1132.7 1568 L1131.8 1568.6 L1130.8 1569.1 L1129.9 1569.3 L1128.9 1569.6 L1127.9 1570 L1127 1570.6 L1126 1571.7 L1125.1 1572.8 L1124.1 1573.3 L1123.1 1574.2 L1122.2 1575.5 L1121.2 1576.6 L1120.3 1578.2 L1119.3 1580.4 L1118.3 1581.3 L1117.4 1581.8 L1116.4 1583.3 L1115.5 1584.4 L1114.5 1585.8 L1113.5 1588.3 L1112.6 1589 L1111.6 1588 L1110.7 1588.6 L1109.7 1589.5 L1108.7 1589.5 L1107.8 1590.2 L1106.8 1588.6 L1105.9 1572.7 Z" fill="#25222d"/>
<path shape-rendering="geometricPrecision" d="M1105.9 1609.7 L1106.8 1595.3 L1107.8 1594.9 L1108.7 1593.3 L1109.7 1592.3 L1110.7 1593.1 L1111.6 1593.4 L1112.6 1594.9 L1113.5 1596.9 L1114.5 1596.8 L1115.5 1597.5 L1116.4 1598.8 L1117.4 1599.9 L1118.3 1602.2 L1119.3 1604 L1120.3 1604.5 L1121.2 1605.7 L1122.2 1606.9 L1123.1 1608.1 L1124.1 1609.9 L1125.1 1610.7 L1126 1611.1 L1127 1611.9 L1127.9 1612.6 L1128.9 1613 L1129.9 1613.7 L1130.8 1614 L1131.8 1614.3 L1132.7 1614.7 L1133.7 1614.9 L1134.7 1615.1 L1135.6 1615.4 L1136.6 1615.6 L1137.5 1615.7 L1138.5 1615.9 L1139.5 1616 L1140.4 1616.2 L1141.4 1616.3 L1142.3 1616.3 L1143.3 1616.3 L1144.3 1616.3 L1145.2 1616.3 L1146.2 1616.4 L1147.1 1616.5 L1148.1 1616.5 L1149.1 1616.5 L1150 1616.5 L1151 1616.5 L1152 1616.6 L1152.9 1616.6 L1153.9 1616.6 L1154.8 1616.6 L1155.8 1616.6 L1156.8 1616.6 L1157.7 1616.6 L1158.7 1616.6 L1159.6 1616.6 L1160.6 1616.6 L1161.6 1616.6 L1162.5 1616.6 L1163.5 1616.6 L1164.4 1616.6 L1165.4 1616.6 L1166.4 1616.6 L1167.3 1616.6 L1168.3 1616.6 L1169.2 1616.6 L1170.2 1616.6 L1171.2 1616.6 L1172.1 1616.6 L1173.1 1616.6 L1174 1616.6 L1175 1616.6 L1175 1617.8 L1174 1617.8 L1173.1 1617.8 L1172.1 1617.8 L1171.2 1617.8 L1170.2 1617.8 L1169.2 1617.8 L1168.3 1617.8 L1167.3 1617.8 L1166.4 1617.8 L1165.4 1617.8 L1164.4 1617.8 L1163.5 1617.8 L1162.5 1617.8 L1161.6 1617.8 L1160.6 1617.8 L1159.6 1617.8 L1158.7 1617.8 L1157.7 1617.8 L1156.8 1617.8 L1155.8 1617.8 L1154.8 1617.8 L1153.9 1617.8 L1152.9 1617.8 L1152 1617.8 L1151 1617.8 L1150 1617.8 L1149.1 1617.9 L1148.1 1617.9 L1147.1 1617.9 L1146.2 1617.9 L1145.2 1618 L1144.3 1618 L1143.3 1618.1 L1142.3 1618.1 L1141.4 1618.1 L1140.4 1618.1 L1139.5 1618.3 L1138.5 1618.5 L1137.5 1618.7 L1136.6 1618.9 L1135.6 1618.9 L1134.7 1619.1 L1133.7 1619.3 L1132.7 1619.7 L1131.8 1620.2 L1130.8 1620.6 L1129.9 1620.7 L1128.9 1621 L1127.9 1621.6 L1127 1622.4 L1126 1623.4 L1125.1 1624.2 L1124.1 1624.6 L1123.1 1625.5 L1122.2 1627.2 L1121.2 1628.7 L1120.3 1630.1 L1119.3 1631.7 L1118.3 1632.2 L1117.4 1632.9 L1116.4 1635.1 L1115.5 1636.9 L1114.5 1637.9 L1113.5 1639.3 L1112.6 1639.6 L1111.6 1638.9 L1110.7 1640.5 L1109.7 1642.1 L1108.7 1641.8 L1107.8 1641.3 L1106.8 1639.2 L1105.9 1624.1 Z" fill="#25222d"/>
<rect x="12" y="1646.5" width="65" height="24" fill="#8a6fe3"/>
<rect x="12" y="1646.5" width="1" height="129.2" fill="#5f49b5"/>
<rect x="76" y="1646.5" width="1" height="129.2" fill="#5f49b5"/>
<rect x="12" y="1646.5" width="65" height="1" fill="#5f49b5"/>
<rect x="12" y="1670.5" width="65" height="1" fill="#5f49b5"/>
<rect x="12" y="1774.7" width="65" height="1" fill="#5f49b5"/>
<path shape-rendering="geometricPrecision" d="M-30.5 1691.2 L-29 1691 L-27.5 1690.5 L-26 1690.2 L-24.5 1690.1 L-23 1687.4 L-21.6 1685.2 L-20.1 1684.9 L-18.6 1684.4 L-17.1 1685.8 L-15.6 1686.6 L-14.1 1684.9 L-12.6 1685.2 L-11.1 1686.5 L-9.6 1685.2 L-8.1 1684.9 L-6.6 1679 L-5.1 1672.9 L-3.6 1672.4 L-2.1 1672.4 L-0.6 1672.4 L0.8 1676.4 L2.3 1675.9 L3.8 1672.4 L5.3 1673 L6.8 1672.8 L8.3 1675.2 L9.8 1680.4 L11.3 1679.9 L12.8 1679 L14.3 1680.1 L15.8 1679.6 L17.3 1682.4 L18.8 1685.8 L20.3 1685.4 L21.8 1685.7 L23.2 1686.2 L24.7 1686.1 L26.2 1688.5 L27.7 1690.2 L29.2 1690.1 L30.7 1690.7 L32.2 1690.8 L33.7 1691 L35.2 1692.5 L36.7 1693.2 L38.2 1693.3 L39.7 1693.8 L41.2 1693.7 L42.7 1694 L44.1 1694.8 L45.6 1695.1 L47.1 1695.2 L48.6 1695.5 L50.1 1695.4 L51.6 1695.6 L53.1 1696.1 L54.6 1696.2 L56.1 1696.4 L57.6 1696.4 L59.1 1696.3 L60.6 1696.4 L62.1 1696.6 L63.6 1696.7 L65.1 1696.7 L66.5 1696.7 L68 1696.7 L69.5 1696.7 L71 1696.7 L72.5 1696.7 L74 1696.7 L75.5 1696.7 L77 1696.7 L77 1697.9 L75.5 1697.9 L74 1697.9 L72.5 1697.9 L71 1697.9 L69.5 1697.9 L68 1697.9 L66.5 1697.9 L65.1 1697.9 L63.6 1698 L62.1 1698 L60.6 1698 L59.1 1698.3 L57.6 1698.4 L56.1 1698.4 L54.6 1698.5 L53.1 1698.5 L51.6 1698.6 L50.1 1699.1 L48.6 1699.6 L47.1 1699.6 L45.6 1699.7 L44.1 1699.9 L42.7 1699.9 L41.2 1700.7 L39.7 1701.7 L38.2 1701.7 L36.7 1701.7 L35.2 1702.1 L33.7 1702.2 L32.2 1703.3 L30.7 1705.3 L29.2 1705.5 L27.7 1705 L26.2 1705.8 L24.7 1706.3 L23.2 1707.5 L21.8 1710.6 L20.3 1711.3 L18.8 1709.9 L17.3 1710.8 L15.8 1712.2 L14.3 1713.3 L12.8 1717.1 L11.3 1718.7 L9.8 1715.9 L8.3 1716.2 L6.8 1718.9 L5.3 1720.1 L3.8 1722.2 L2.3 1722.2 L0.8 1720.4 L-0.6 1718.3 L-2.1 1720.8 L-3.6 1721 L-5.1 1721.8 L-6.6 1721.6 L-8.1 1711.1 L-9.6 1706.9 L-11.1 1707.2 L-12.6 1708.7 L-14.1 1709.8 L-15.6 1711.5 L-17.1 1710 L-18.6 1707.7 L-20.1 1708.5 L-21.6 1708.8 L-23 1707.5 L-24.5 1706.7 L-26 1705.1 L-27.5 1703 L-29 1702.8 L-30.5 1703.1 Z" fill="#25222d"/>
<path shape-rendering="geometricPrecision" d="M-30.5 1743.7 L-29 1742.1 L-27.5 1741.8 L-26 1741.1 L-24.5 1740.6 L-23 1740.8 L-21.6 1738 L-20.1 1735.7 L-18.6 1735.9 L-17.1 1735.4 L-15.6 1737.1 L-14.1 1738.9 L-12.6 1737.6 L-11.1 1737.9 L-9.6 1736.8 L-8.1 1733.7 L-6.6 1729.7 L-5.1 1729 L-3.6 1724.5 L-2.1 1724 L-0.6 1724 L0.8 1724 L2.3 1727.9 L3.8 1727.7 L5.3 1725 L6.8 1726.2 L8.3 1725.3 L9.8 1727.5 L11.3 1732.6 L12.8 1732.5 L14.3 1732.2 L15.8 1733 L17.3 1732.2 L18.8 1734.7 L20.3 1737.9 L21.8 1737.9 L23.2 1738.6 L24.7 1738.9 L26.2 1738.5 L27.7 1740.5 L29.2 1742.2 L30.7 1742.3 L32.2 1743.1 L33.7 1743.1 L35.2 1743 L36.7 1744.3 L38.2 1745 L39.7 1745.3 L41.2 1745.8 L42.7 1745.7 L44.1 1745.8 L45.6 1746.5 L47.1 1746.8 L48.6 1747 L50.1 1747.3 L51.6 1747.2 L53.1 1747.5 L54.6 1747.8 L56.1 1747.8 L57.6 1748 L59.1 1748.1 L60.6 1748 L62.1 1748.1 L63.6 1748.2 L65.1 1748.3 L66.5 1748.3 L68 1748.3 L69.5 1748.3 L71 1748.3 L72.5 1748.3 L74 1748.3 L75.5 1748.3 L77 1748.3 L77 1749.5 L75.5 1749.5 L74 1749.5 L72.5 1749.5 L71 1749.5 L69.5 1749.5 L68 1749.5 L66.5 1749.5 L65.1 1749.5 L63.6 1749.5 L62.1 1749.6 L60.6 1749.7 L59.1 1749.9 L57.6 1750 L56.1 1749.8 L54.6 1749.9 L53.1 1750.1 L51.6 1750.3 L50.1 1750.8 L48.6 1751.1 L47.1 1750.9 L45.6 1751 L44.1 1751.5 L42.7 1751.8 L41.2 1752.5 L39.7 1753.1 L38.2 1752.8 L36.7 1752.8 L35.2 1753.9 L33.7 1754.6 L32.2 1755.4 L30.7 1756.6 L29.2 1756.2 L27.7 1755.7 L26.2 1757.5 L24.7 1759.2 L23.2 1760.1 L21.8 1761.6 L20.3 1761.4 L18.8 1760.2 L17.3 1762.7 L15.8 1765.9 L14.3 1766.5 L12.8 1767.8 L11.3 1768 L9.8 1765.8 L8.3 1768.2 L6.8 1773.3 L5.3 1773.8 L3.8 1773.5 L2.3 1773.3 L0.8 1769.9 L-0.6 1770.5 L-2.1 1773.8 L-3.6 1773.8 L-5.1 1772.3 L-6.6 1770.3 L-8.1 1761.5 L-9.6 1758.8 L-11.1 1760 L-12.6 1761.4 L-14.1 1760.9 L-15.6 1761.3 L-17.1 1760.5 L-18.6 1759.7 L-20.1 1761.4 L-21.6 1761.4 L-23 1758.8 L-24.5 1757.1 L-26 1755.9 L-27.5 1754.9 L-29 1755 L-30.5 1755.1 Z" fill="#25222d"/>
<rect x="314" y="1646.5" width="107" height="24" fill="#8a6fe3"/>
<rect x="314" y="1646.5" width="1" height="129.2" fill="#5f49b5"/>
<rect x="420" y="1646.5" width="1" height="129.2" fill="#5f49b5"/>
<rect x="314" y="1646.5" width="107" height="1" fill="#5f49b5"/>
<rect x="314" y="1670.5" width="107" height="1" fill="#5f49b5"/>
<rect x="314" y="1774.7" width="107" height="1" fill="#5f49b5"/>
<path shape-rendering="geometricPrecision" d="M313.8 1692.4 L315.3 1691.1 L316.8 1690.4 L318.3 1689 L319.8 1688.4 L321.3 1689.1 L322.8 1687.2 L324.3 1685.2 L325.7 1684.6 L327.2 1683 L328.7 1684.5 L330.2 1687.1 L331.7 1686.8 L333.2 1687.3 L334.7 1685.4 L336.2 1681.2 L337.7 1676.5 L339.1 1676.9 L340.6 1674.6 L342.1 1674.4 L343.6 1672.4 L345.1 1672.4 L346.6 1674.3 L348.1 1675.6 L349.6 1675.1 L351 1676.6 L352.5 1673.9 L354 1674.7 L355.5 1679.4 L357 1680.6 L358.5 1681.9 L360 1682.7 L361.5 1680.8 L363 1682.3 L364.4 1685.3 L365.9 1686.1 L367.4 1687.8 L368.9 1688.1 L370.4 1687.1 L371.9 1688.5 L373.4 1690 L374.9 1690.7 L376.4 1692 L377.8 1692 L379.3 1691.6 L380.8 1692.5 L382.3 1693.1 L383.8 1693.7 L385.3 1694.5 L386.8 1694.4 L388.3 1694.3 L389.7 1694.8 L391.2 1695 L392.7 1695.5 L394.2 1695.9 L395.7 1695.8 L397.2 1695.9 L398.7 1696.1 L400.2 1696.2 L401.7 1696.4 L403.1 1696.6 L404.6 1696.5 L406.1 1696.5 L407.6 1696.6 L409.1 1696.7 L410.6 1696.7 L412.1 1696.7 L413.6 1696.7 L415 1696.7 L416.5 1696.7 L418 1696.7 L419.5 1696.7 L421 1696.7 L421 1697.9 L419.5 1697.9 L418 1697.9 L416.5 1697.9 L415 1697.9 L413.6 1697.9 L412.1 1697.9 L410.6 1697.9 L409.1 1697.9 L407.6 1697.9 L406.1 1698 L404.6 1698.2 L403.1 1698.3 L401.7 1698.2 L400.2 1698.3 L398.7 1698.4 L397.2 1698.5 L395.7 1699 L394.2 1699.3 L392.7 1699.2 L391.2 1699.2 L389.7 1699.7 L388.3 1700 L386.8 1700.4 L385.3 1701.1 L383.8 1701 L382.3 1700.9 L380.8 1701.8 L379.3 1702.5 L377.8 1703.1 L376.4 1704.3 L374.9 1704.2 L373.4 1703.6 L371.9 1705.1 L370.4 1706.7 L368.9 1707.5 L367.4 1709 L365.9 1709.3 L364.4 1708 L363 1709.7 L361.5 1713 L360 1713.9 L358.5 1715.1 L357 1715.8 L355.5 1713.6 L354 1715 L352.5 1720.1 L351 1721.5 L349.6 1721.6 L348.1 1722 L346.6 1718.8 L345.1 1718.2 L343.6 1722.2 L342.1 1722.2 L340.6 1721.6 L339.1 1720.8 L337.7 1717 L336.2 1709.3 L334.7 1709.2 L333.2 1709.1 L331.7 1708.7 L330.2 1709.1 L328.7 1709.3 L327.2 1708.2 L325.7 1709.8 L324.3 1711.2 L322.8 1708.6 L321.3 1706.6 L319.8 1705.5 L318.3 1704 L316.8 1703.9 L315.3 1704.4 L313.8 1703.1 Z" fill="#25222d"/>
<path shape-rendering="geometricPrecision" d="M313.8 1744.2 L315.3 1743.4 L316.8 1742.1 L318.3 1741.3 L319.8 1739.1 L321.3 1738.6 L322.8 1739.5 L324.3 1737.7 L325.7 1736.8 L327.2 1736.1 L328.7 1734.2 L330.2 1736.6 L331.7 1739.1 L333.2 1739.1 L334.7 1738.1 L336.2 1734.4 L337.7 1724.1 L339.1 1725.7 L340.6 1727.5 L342.1 1725.9 L343.6 1726.5 L345.1 1724 L346.6 1724 L348.1 1725.5 L349.6 1727 L351 1728.1 L352.5 1729.8 L354 1727 L355.5 1727.4 L357 1731.5 L358.5 1732.7 L360 1734.7 L361.5 1735.6 L363 1733.6 L364.4 1734.9 L365.9 1737.4 L367.4 1738.4 L368.9 1740.4 L370.4 1740.6 L371.9 1739.6 L373.4 1740.7 L374.9 1742 L376.4 1742.8 L377.8 1744.2 L379.3 1744.1 L380.8 1743.7 L382.3 1744.5 L383.8 1745 L385.3 1745.6 L386.8 1746.4 L388.3 1746.2 L389.7 1746.2 L391.2 1746.6 L392.7 1746.8 L394.2 1747.2 L395.7 1747.6 L397.2 1747.6 L398.7 1747.6 L400.2 1747.8 L401.7 1747.8 L403.1 1748.1 L404.6 1748.2 L406.1 1748.1 L407.6 1748.2 L409.1 1748.3 L410.6 1748.3 L412.1 1748.3 L413.6 1748.3 L415 1748.3 L416.5 1748.3 L418 1748.3 L419.5 1748.3 L421 1748.3 L421 1749.5 L419.5 1749.5 L418 1749.5 L416.5 1749.5 L415 1749.5 L413.6 1749.5 L412.1 1749.5 L410.6 1749.5 L409.1 1749.5 L407.6 1749.6 L406.1 1749.6 L404.6 1749.7 L403.1 1749.8 L401.7 1749.7 L400.2 1749.9 L398.7 1750.1 L397.2 1750.2 L395.7 1750.4 L394.2 1750.6 L392.7 1750.6 L391.2 1750.9 L389.7 1751.6 L388.3 1751.8 L386.8 1751.8 L385.3 1752.2 L383.8 1752.2 L382.3 1752.6 L380.8 1753.9 L379.3 1754.6 L377.8 1754.4 L376.4 1755 L374.9 1755.2 L373.4 1755.5 L371.9 1757.6 L370.4 1759.2 L368.9 1758.7 L367.4 1759.1 L365.9 1759.9 L364.4 1760.1 L363 1762.8 L361.5 1765.9 L360 1765 L358.5 1764.3 L357 1765.8 L355.5 1766.1 L354 1768.9 L352.5 1773.5 L351 1772.4 L349.6 1770 L348.1 1771.2 L346.6 1771.5 L345.1 1772.7 L343.6 1773.8 L342.1 1773.8 L340.6 1770 L339.1 1770.1 L337.7 1769.6 L336.2 1762.6 L334.7 1761.6 L333.2 1760.3 L331.7 1758.9 L330.2 1759.4 L328.7 1761.4 L327.2 1761.4 L325.7 1762.3 L324.3 1762.3 L322.8 1758.9 L321.3 1757.2 L319.8 1757.4 L318.3 1756.5 L316.8 1756 L315.3 1755.6 L313.8 1754 Z" fill="#25222d"/>
<rect x="830" y="1646.5" width="108" height="24" fill="#8a6fe3"/>
<rect x="830" y="1646.5" width="1" height="129.2" fill="#5f49b5"/>
<rect x="937" y="1646.5" width="1" height="129.2" fill="#5f49b5"/>
<rect x="830" y="1646.5" width="108" height="1" fill="#5f49b5"/>
<rect x="830" y="1670.5" width="108" height="1" fill="#5f49b5"/>
<rect x="830" y="1774.7" width="108" height="1" fill="#5f49b5"/>
<path shape-rendering="geometricPrecision" d="M830.4 1692.3 L831.9 1691.7 L833.4 1691.1 L834.9 1689 L836.3 1687.6 L837.8 1688 L839.3 1686.9 L840.8 1686.5 L842.3 1685.9 L843.8 1683.1 L845.3 1683.4 L846.8 1685.7 L848.3 1686.6 L849.8 1688.3 L851.3 1686.5 L852.8 1681.4 L854.3 1674.6 L855.8 1674.2 L857.3 1674.3 L858.8 1676.8 L860.3 1673.6 L861.8 1672.4 L863.3 1672.4 L864.8 1672.8 L866.2 1674.9 L867.7 1678.7 L869.2 1676.1 L870.7 1675.1 L872.2 1677.7 L873.7 1678.5 L875.2 1681.8 L876.7 1684.2 L878.2 1682.3 L879.7 1682.6 L881.2 1684 L882.7 1684.8 L884.2 1687.7 L885.7 1689 L887.2 1688.1 L888.7 1688.7 L890.2 1689.2 L891.7 1689.9 L893.2 1691.9 L894.6 1692.4 L896.1 1692.1 L897.6 1692.6 L899.1 1692.7 L900.6 1693.3 L902.1 1694.5 L903.6 1694.6 L905.1 1694.6 L906.6 1694.8 L908.1 1694.8 L909.6 1695.3 L911.1 1695.8 L912.6 1695.9 L914.1 1696.1 L915.6 1696.1 L917.1 1696.1 L918.6 1696.3 L920.1 1696.5 L921.6 1696.6 L923.1 1696.6 L924.5 1696.7 L926 1696.7 L927.5 1696.7 L929 1696.7 L930.5 1696.7 L932 1696.7 L933.5 1696.7 L935 1696.7 L936.5 1696.7 L938 1696.7 L938 1697.9 L936.5 1697.9 L935 1697.9 L933.5 1697.9 L932 1697.9 L930.5 1697.9 L929 1697.9 L927.5 1697.9 L926 1697.9 L924.5 1698 L923.1 1698.1 L921.6 1698.2 L920.1 1698.2 L918.6 1698.1 L917.1 1698.3 L915.6 1698.6 L914.1 1698.6 L912.6 1698.9 L911.1 1699.1 L909.6 1699 L908.1 1699.3 L906.6 1700 L905.1 1700.2 L903.6 1700.4 L902.1 1700.8 L900.6 1700.6 L899.1 1701 L897.6 1702.3 L896.1 1702.9 L894.6 1703 L893.2 1703.6 L891.7 1703.5 L890.2 1703.8 L888.7 1706.1 L887.2 1707.4 L885.7 1707.2 L884.2 1708 L882.7 1708.2 L881.2 1708.2 L879.7 1711.4 L878.2 1714.2 L876.7 1713.4 L875.2 1713.5 L873.7 1714.2 L872.2 1713.9 L870.7 1717.4 L869.2 1721.9 L867.7 1720.6 L866.2 1719.2 L864.8 1720 L863.3 1719.1 L861.8 1721.1 L860.3 1722.2 L858.8 1722.2 L857.3 1719 L855.8 1719 L854.3 1717.3 L852.8 1710.9 L851.3 1710.3 L849.8 1708.7 L848.3 1707.4 L846.8 1708.2 L845.3 1709.6 L843.8 1709.5 L842.3 1711 L840.8 1710.9 L839.3 1707.3 L837.8 1705.9 L836.3 1705.7 L834.9 1704.7 L833.4 1704.6 L831.9 1704.2 L830.4 1702.4 Z" fill="#25222d"/>
<path shape-rendering="geometricPrecision" d="M830.4 1743.6 L831.9 1743.1 L833.4 1742.7 L834.9 1742.2 L836.3 1739.4 L837.8 1737.9 L839.3 1738.2 L840.8 1737.1 L842.3 1737.8 L843.8 1737.5 L845.3 1734.7 L846.8 1735.8 L848.3 1737.8 L849.8 1738.6 L851.3 1739 L852.8 1735.9 L854.3 1725 L855.8 1724.2 L857.3 1724.5 L858.8 1724.9 L860.3 1728.4 L861.8 1725.7 L863.3 1724 L864.8 1724 L866.2 1724 L867.7 1727.3 L869.2 1731.3 L870.7 1729.2 L872.2 1728.4 L873.7 1730.2 L875.2 1730.7 L876.7 1734.1 L878.2 1736.7 L879.7 1735.2 L881.2 1735.5 L882.7 1736.5 L884.2 1737.1 L885.7 1740 L887.2 1741.2 L888.7 1740.5 L890.2 1741.1 L891.7 1741.4 L893.2 1742.1 L894.6 1744 L896.1 1744.4 L897.6 1744.2 L899.1 1744.6 L900.6 1744.7 L902.1 1745.3 L903.6 1746.3 L905.1 1746.4 L906.6 1746.5 L908.1 1746.7 L909.6 1746.6 L911.1 1747 L912.6 1747.6 L914.1 1747.7 L915.6 1747.8 L917.1 1747.8 L918.6 1747.7 L920.1 1748 L921.6 1748.1 L923.1 1748.2 L924.5 1748.3 L926 1748.3 L927.5 1748.3 L929 1748.3 L930.5 1748.3 L932 1748.3 L933.5 1748.3 L935 1748.3 L936.5 1748.3 L938 1748.3 L938 1749.5 L936.5 1749.5 L935 1749.5 L933.5 1749.5 L932 1749.5 L930.5 1749.5 L929 1749.5 L927.5 1749.5 L926 1749.5 L924.5 1749.6 L923.1 1749.6 L921.6 1749.7 L920.1 1749.7 L918.6 1749.7 L917.1 1750 L915.6 1750.2 L914.1 1750.1 L912.6 1750.3 L911.1 1750.5 L909.6 1750.7 L908.1 1751.1 L906.6 1751.7 L905.1 1751.6 L903.6 1751.5 L902.1 1752 L900.6 1752.4 L899.1 1753.1 L897.6 1754.2 L896.1 1754.2 L894.6 1753.8 L893.2 1754.6 L891.7 1755.5 L890.2 1756.4 L888.7 1758.2 L887.2 1758.6 L885.7 1757.5 L884.2 1758.5 L882.7 1760.4 L881.2 1761.5 L879.7 1763.9 L878.2 1765.1 L876.7 1763 L875.2 1763.4 L873.7 1766.7 L872.2 1768.1 L870.7 1770.4 L869.2 1772.4 L867.7 1769.5 L866.2 1768.7 L864.8 1772.6 L863.3 1773.8 L861.8 1773.8 L860.3 1773.8 L858.8 1772.1 L857.3 1768.5 L855.8 1771.5 L854.3 1771.8 L852.8 1763.5 L851.3 1761.2 L849.8 1759 L848.3 1758.1 L846.8 1760.2 L845.3 1762.9 L843.8 1762.1 L842.3 1761.8 L840.8 1760.9 L839.3 1758.1 L837.8 1757.8 L836.3 1758.4 L834.9 1756.9 L833.4 1755.7 L831.9 1755 L830.4 1753.6 Z" fill="#25222d"/>
<rect x="1003" y="1646.5" width="86" height="24" fill="#8a6fe3"/>
<rect x="1003" y="1646.5" width="1" height="129.2" fill="#5f49b5"/>
<rect x="1088" y="1646.5" width="1" height="129.2" fill="#5f49b5"/>
<rect x="1003" y="1646.5" width="86" height="1" fill="#5f49b5"/>
<rect x="1003" y="1670.5" width="86" height="1" fill="#5f49b5"/>
<rect x="1003" y="1774.7" width="86" height="1" fill="#5f49b5"/>
<path shape-rendering="geometricPrecision" d="M1002.5 1692.6 L1003.7 1690.8 L1004.9 1689.6 L1006.1 1689.9 L1007.3 1688.9 L1008.5 1688.5 L1009.8 1687.7 L1011 1684.1 L1012.2 1683.6 L1013.4 1684.7 L1014.6 1684.6 L1015.8 1686.9 L1017 1687.3 L1018.2 1685.9 L1019.4 1685 L1020.6 1683 L1021.8 1675.9 L1023 1677.7 L1024.2 1675.3 L1025.4 1672.4 L1026.6 1672.4 L1027.8 1672.4 L1029 1673.5 L1030.2 1677.5 L1031.4 1674.8 L1032.6 1673.1 L1033.8 1675.2 L1035 1675.6 L1036.2 1679 L1037.4 1682.5 L1038.6 1680.8 L1039.8 1680.7 L1041 1681.9 L1042.2 1682.2 L1043.4 1685.5 L1044.6 1687.5 L1045.8 1686.6 L1047 1687.3 L1048.2 1687.7 L1049.4 1688.1 L1050.6 1690.5 L1051.8 1691.3 L1053 1691.1 L1054.2 1691.8 L1055.4 1691.8 L1056.6 1692.2 L1057.8 1693.6 L1059 1693.9 L1060.2 1694 L1061.4 1694.4 L1062.6 1694.3 L1063.8 1694.7 L1065 1695.4 L1066.2 1695.5 L1067.4 1695.7 L1068.6 1695.8 L1069.8 1695.9 L1071 1696.1 L1072.2 1696.4 L1073.4 1696.4 L1074.6 1696.5 L1075.8 1696.5 L1077 1696.5 L1078.2 1696.7 L1079.4 1696.7 L1080.6 1696.7 L1081.8 1696.7 L1083 1696.7 L1084.2 1696.7 L1085.4 1696.7 L1086.6 1696.7 L1087.8 1696.7 L1089 1696.7 L1089 1697.9 L1087.8 1697.9 L1086.6 1697.9 L1085.4 1697.9 L1084.2 1697.9 L1083 1697.9 L1081.8 1697.9 L1080.6 1697.9 L1079.4 1697.9 L1078.2 1697.9 L1077 1698 L1075.8 1698.2 L1074.6 1698.3 L1073.4 1698.4 L1072.2 1698.4 L1071 1698.3 L1069.8 1698.5 L1068.6 1699 L1067.4 1699.2 L1066.2 1699.4 L1065 1699.5 L1063.8 1699.4 L1062.6 1699.8 L1061.4 1700.6 L1060.2 1700.9 L1059 1701.1 L1057.8 1701.5 L1056.6 1701.4 L1055.4 1701.9 L1054.2 1703.5 L1053 1704.2 L1051.8 1704.1 L1050.6 1704.7 L1049.4 1704.8 L1048.2 1705.3 L1047 1708 L1045.8 1709.5 L1044.6 1708.8 L1043.4 1709.3 L1042.2 1710 L1041 1710.5 L1039.8 1714.1 L1038.6 1716.7 L1037.4 1715 L1036.2 1714.7 L1035 1716.2 L1033.8 1716.7 L1032.6 1720.5 L1031.4 1722.2 L1030.2 1721.6 L1029 1718.8 L1027.8 1720.2 L1026.6 1720.4 L1025.4 1721.9 L1024.2 1722.2 L1023 1721.6 L1021.8 1716 L1020.6 1710.3 L1019.4 1708.5 L1018.2 1707.7 L1017 1709.9 L1015.8 1710.2 L1014.6 1708.4 L1013.4 1708.6 L1012.2 1709.7 L1011 1709.4 L1009.8 1709.3 L1008.5 1708 L1007.3 1705 L1006.1 1703.8 L1004.9 1704.2 L1003.7 1703.6 L1002.5 1703.1 Z" fill="#25222d"/>
<path shape-rendering="geometricPrecision" d="M1002.5 1743.9 L1003.7 1743.7 L1004.9 1741.8 L1006.1 1740.4 L1007.3 1740.1 L1008.5 1739 L1009.8 1739.1 L1011 1738.5 L1012.2 1735.5 L1013.4 1735.1 L1014.6 1735.8 L1015.8 1736.6 L1017 1739.2 L1018.2 1739.7 L1019.4 1736.5 L1020.6 1733.9 L1021.8 1726.4 L1023 1725.1 L1024.2 1728.8 L1025.4 1726.7 L1026.6 1724 L1027.8 1724 L1029 1724 L1030.2 1724.7 L1031.4 1729.3 L1032.6 1727.8 L1033.8 1726.5 L1035 1728 L1036.2 1727.8 L1037.4 1731.3 L1038.6 1734.9 L1039.8 1733.7 L1041 1733.9 L1042.2 1734.5 L1043.4 1734.6 L1044.6 1737.7 L1045.8 1739.8 L1047 1739.3 L1048.2 1740 L1049.4 1740 L1050.6 1740.3 L1051.8 1742.5 L1053 1743.4 L1054.2 1743.5 L1055.4 1744 L1056.6 1743.8 L1057.8 1744.2 L1059 1745.4 L1060.2 1745.8 L1061.4 1746.1 L1062.6 1746.3 L1063.8 1746.1 L1065 1746.4 L1066.2 1747.1 L1067.4 1747.2 L1068.6 1747.5 L1069.8 1747.6 L1071 1747.5 L1072.2 1747.7 L1073.4 1748 L1074.6 1748 L1075.8 1748.1 L1077 1748.2 L1078.2 1748.1 L1079.4 1748.3 L1080.6 1748.3 L1081.8 1748.3 L1083 1748.3 L1084.2 1748.3 L1085.4 1748.3 L1086.6 1748.3 L1087.8 1748.3 L1089 1748.3 L1089 1749.5 L1087.8 1749.5 L1086.6 1749.5 L1085.4 1749.5 L1084.2 1749.5 L1083 1749.5 L1081.8 1749.5 L1080.6 1749.5 L1079.4 1749.5 L1078.2 1749.5 L1077 1749.7 L1075.8 1749.8 L1074.6 1749.7 L1073.4 1749.8 L1072.2 1749.9 L1071 1749.9 L1069.8 1750.2 L1068.6 1750.6 L1067.4 1750.6 L1066.2 1750.6 L1065 1751 L1063.8 1751.2 L1062.6 1751.7 L1061.4 1752.3 L1060.2 1752.2 L1059 1752.1 L1057.8 1752.9 L1056.6 1753.4 L1055.4 1754.1 L1054.2 1755.2 L1053 1755.3 L1051.8 1754.7 L1050.6 1755.9 L1049.4 1757.2 L1048.2 1758 L1047 1759.8 L1045.8 1760.2 L1044.6 1758.9 L1043.4 1760.3 L1042.2 1762.9 L1041 1764 L1039.8 1766 L1038.6 1766.9 L1037.4 1764.4 L1036.2 1765.3 L1035 1769.6 L1033.8 1771.2 L1032.6 1772.6 L1031.4 1773.8 L1030.2 1770.4 L1029 1769.2 L1027.8 1773.8 L1026.6 1773.8 L1025.4 1773.8 L1024.2 1773.8 L1023 1770.5 L1021.8 1766.7 L1020.6 1763 L1019.4 1761.6 L1018.2 1759.6 L1017 1760.3 L1015.8 1760.3 L1014.6 1759.5 L1013.4 1761.2 L1012.2 1762.9 L1011 1761.5 L1009.8 1759.8 L1008.5 1758.3 L1007.3 1756.3 L1006.1 1756 L1004.9 1756.6 L1003.7 1755.4 L1002.5 1754.1 Z" fill="#25222d"/>
<rect x="1089" y="1646.5" width="107" height="24" fill="#8a6fe3"/>
<rect x="1089" y="1646.5" width="1" height="129.2" fill="#5f49b5"/>
<rect x="1195" y="1646.5" width="1" height="129.2" fill="#5f49b5"/>
<rect x="1089" y="1646.5" width="107" height="1" fill="#5f49b5"/>
<rect x="1089" y="1670.5" width="107" height="1" fill="#5f49b5"/>
<rect x="1089" y="1774.7" width="107" height="1" fill="#5f49b5"/>
<path shape-rendering="geometricPrecision" d="M1088.6 1692 L1090.1 1691.7 L1091.6 1691.5 L1093.1 1689.4 L1094.6 1687.6 L1096.1 1687.5 L1097.6 1686.3 L1099.1 1686.6 L1100.6 1686.5 L1102.1 1683.7 L1103.5 1683.4 L1105 1685 L1106.5 1686 L1108 1688.4 L1109.5 1687.1 L1111 1682.1 L1112.5 1674.6 L1114 1672.9 L1115.5 1673.1 L1117 1676.9 L1118.5 1674.8 L1119.9 1672.4 L1121.4 1672.4 L1122.9 1672.4 L1124.4 1673.8 L1125.9 1678.8 L1127.4 1677.2 L1128.9 1676.2 L1130.4 1677.6 L1131.9 1677.5 L1133.4 1681 L1134.9 1684.2 L1136.4 1683.1 L1137.8 1683.4 L1139.3 1684 L1140.8 1684.2 L1142.3 1687.2 L1143.8 1689 L1145.3 1688.6 L1146.8 1689.1 L1148.3 1689.1 L1149.8 1689.6 L1151.3 1691.6 L1152.8 1692.4 L1154.2 1692.4 L1155.7 1692.8 L1157.2 1692.7 L1158.7 1693.1 L1160.2 1694.3 L1161.7 1694.6 L1163.2 1694.8 L1164.7 1694.9 L1166.2 1694.8 L1167.7 1695.2 L1169.2 1695.7 L1170.6 1695.9 L1172.1 1696.2 L1173.6 1696.2 L1175.1 1696.1 L1176.6 1696.3 L1178.1 1696.5 L1179.6 1696.6 L1181.1 1696.7 L1182.6 1696.7 L1184.1 1696.7 L1185.6 1696.7 L1187.1 1696.7 L1188.5 1696.7 L1190 1696.7 L1191.5 1696.7 L1193 1696.7 L1194.5 1696.7 L1196 1696.7 L1196 1697.9 L1194.5 1697.9 L1193 1697.9 L1191.5 1697.9 L1190 1697.9 L1188.5 1697.9 L1187.1 1697.9 L1185.6 1697.9 L1184.1 1697.9 L1182.6 1698 L1181.1 1698.2 L1179.6 1698.1 L1178.1 1698.1 L1176.6 1698.3 L1175.1 1698.3 L1173.6 1698.5 L1172.1 1698.8 L1170.6 1698.8 L1169.2 1698.8 L1167.7 1699.2 L1166.2 1699.5 L1164.7 1699.8 L1163.2 1700.4 L1161.7 1700.4 L1160.2 1700.2 L1158.7 1700.8 L1157.2 1701.6 L1155.7 1702 L1154.2 1702.9 L1152.8 1703.2 L1151.3 1702.7 L1149.8 1703.4 L1148.3 1705.1 L1146.8 1705.9 L1145.3 1707 L1143.8 1707.8 L1142.3 1706.8 L1140.8 1707.4 L1139.3 1710.4 L1137.8 1711.8 L1136.4 1712.8 L1134.9 1714.2 L1133.4 1712.7 L1131.9 1712.3 L1130.4 1716.6 L1128.9 1719.2 L1127.4 1719.4 L1125.9 1720.9 L1124.4 1719.5 L1122.9 1717.2 L1121.4 1721.3 L1119.9 1722.2 L1118.5 1722.2 L1117 1722.2 L1115.5 1720.3 L1114 1716.9 L1112.5 1717.9 L1111 1713.2 L1109.5 1709.4 L1108 1707.6 L1106.5 1708.2 L1105 1707.7 L1103.5 1709.2 L1102.1 1711.6 L1100.6 1710.8 L1099.1 1709 L1097.6 1707.9 L1096.1 1706.1 L1094.6 1705.2 L1093.1 1705.7 L1091.6 1704.9 L1090.1 1703.2 L1088.6 1702.4 Z" fill="#25222d"/>
<path shape-rendering="geometricPrecision" d="M1088.6 1743.3 L1090.1 1742.7 L1091.6 1742.6 L1093.1 1742.5 L1094.6 1739.9 L1096.1 1738.1 L1097.6 1737.6 L1099.1 1736.4 L1100.6 1737.8 L1102.1 1738.1 L1103.5 1735.4 L1105 1736 L1106.5 1737.2 L1108 1738 L1109.5 1739 L1111 1736.5 L1112.5 1726.2 L1114 1724.5 L1115.5 1724 L1117 1724 L1118.5 1728.2 L1119.9 1726.8 L1121.4 1724 L1122.9 1724.1 L1124.4 1724 L1125.9 1726.1 L1127.4 1731.1 L1128.9 1730 L1130.4 1729.5 L1131.9 1730.4 L1133.4 1729.9 L1134.9 1733.3 L1136.4 1736.5 L1137.8 1735.8 L1139.3 1736.3 L1140.8 1736.6 L1142.3 1736.6 L1143.8 1739.5 L1145.3 1741.1 L1146.8 1740.9 L1148.3 1741.6 L1149.8 1741.4 L1151.3 1741.8 L1152.8 1743.7 L1154.2 1744.3 L1155.7 1744.5 L1157.2 1744.9 L1158.7 1744.7 L1160.2 1745.1 L1161.7 1746.2 L1163.2 1746.4 L1164.7 1746.6 L1166.2 1746.8 L1167.7 1746.6 L1169.2 1747 L1170.6 1747.5 L1172.1 1747.7 L1173.6 1747.8 L1175.1 1747.8 L1176.6 1747.7 L1178.1 1747.9 L1179.6 1748.1 L1181.1 1748.2 L1182.6 1748.3 L1184.1 1748.3 L1185.6 1748.3 L1187.1 1748.3 L1188.5 1748.3 L1190 1748.3 L1191.5 1748.3 L1193 1748.3 L1194.5 1748.3 L1196 1748.3 L1196 1749.5 L1194.5 1749.5 L1193 1749.5 L1191.5 1749.5 L1190 1749.5 L1188.5 1749.5 L1187.1 1749.5 L1185.6 1749.5 L1184.1 1749.5 L1182.6 1749.6 L1181.1 1749.6 L1179.6 1749.6 L1178.1 1749.6 L1176.6 1749.9 L1175.1 1750 L1173.6 1750.1 L1172.1 1750.2 L1170.6 1750.2 L1169.2 1750.3 L1167.7 1750.9 L1166.2 1751.3 L1164.7 1751.4 L1163.2 1751.6 L1161.7 1751.6 L1160.2 1751.7 L1158.7 1752.7 L1157.2 1753.7 L1155.7 1753.7 L1154.2 1753.9 L1152.8 1754.2 L1151.3 1754.2 L1149.8 1755.6 L1148.3 1757.6 L1146.8 1757.6 L1145.3 1757.5 L1143.8 1758.2 L1142.3 1758.3 L1140.8 1760 L1139.3 1763.4 L1137.8 1763.7 L1136.4 1762.7 L1134.9 1763.8 L1133.4 1764.2 L1131.9 1765.7 L1130.4 1770.2 L1128.9 1771.2 L1127.4 1768.7 L1125.9 1769.5 L1124.4 1771 L1122.9 1771.4 L1121.4 1773.8 L1119.9 1773.8 L1118.5 1771.9 L1117 1770.6 L1115.5 1771.6 L1114 1771.1 L1112.5 1771.7 L1111 1765 L1109.5 1759.9 L1108 1757.8 L1106.5 1759.5 L1105 1760.6 L1103.5 1762.2 L1102.1 1763.2 L1100.6 1761.2 L1099.1 1759 L1097.6 1759.2 L1096.1 1758.8 L1094.6 1757.8 L1093.1 1757.3 L1091.6 1755.8 L1090.1 1754 L1088.6 1753.8 Z" fill="#25222d"/>
<rect x="1347" y="1646.5" width="108" height="24" fill="#8a6fe3"/>
<rect x="1347" y="1646.5" width="1" height="129.2" fill="#5f49b5"/>
<rect x="1454" y="1646.5" width="1" height="129.2" fill="#5f49b5"/>
<rect x="1347" y="1646.5" width="108" height="1" fill="#5f49b5"/>
<rect x="1347" y="1670.5" width="108" height="1" fill="#5f49b5"/>
<rect x="1347" y="1774.7" width="108" height="1" fill="#5f49b5"/>
<path shape-rendering="geometricPrecision" d="M1346.9 1691.7 L1348.4 1691.6 L1349.9 1691.7 L1351.4 1689.8 L1352.9 1687.9 L1354.4 1687.1 L1355.9 1685.7 L1357.4 1686.3 L1358.9 1686.9 L1360.4 1684.5 L1361.9 1683.8 L1363.4 1684.6 L1364.9 1685.3 L1366.4 1688.1 L1367.9 1687.5 L1369.4 1682.9 L1370.9 1675.3 L1372.4 1672.4 L1373.9 1672.4 L1375.4 1676.3 L1376.9 1675.5 L1378.4 1672.7 L1379.9 1672.9 L1381.4 1672.4 L1382.9 1672.4 L1384.4 1678.2 L1385.9 1677.8 L1387.4 1677.5 L1388.9 1678.1 L1390.4 1676.9 L1391.9 1680 L1393.4 1683.7 L1394.9 1683.5 L1396.4 1684.2 L1397.9 1684.3 L1399.4 1683.8 L1400.9 1686.6 L1402.5 1688.7 L1404 1688.8 L1405.5 1689.6 L1407 1689.3 L1408.5 1689.3 L1410 1691.3 L1411.5 1692.3 L1413 1692.6 L1414.5 1693.1 L1416 1692.8 L1417.5 1693 L1419 1694.1 L1420.5 1694.6 L1422 1694.9 L1423.5 1695.1 L1425 1694.9 L1426.5 1695.1 L1428 1695.6 L1429.5 1695.9 L1431 1696.2 L1432.5 1696.3 L1434 1696.1 L1435.5 1696.3 L1437 1696.4 L1438.5 1696.5 L1440 1696.7 L1441.5 1696.7 L1443 1696.7 L1444.5 1696.7 L1446 1696.7 L1447.5 1696.7 L1449 1696.7 L1450.5 1696.7 L1452 1696.7 L1453.5 1696.7 L1455 1696.7 L1455 1697.9 L1453.5 1697.9 L1452 1697.9 L1450.5 1697.9 L1449 1697.9 L1447.5 1697.9 L1446 1697.9 L1444.5 1697.9 L1443 1697.9 L1441.5 1698 L1440 1698.1 L1438.5 1698.1 L1437 1698.1 L1435.5 1698.2 L1434 1698.5 L1432.5 1698.6 L1431 1698.6 L1429.5 1698.8 L1428 1699 L1426.5 1699.1 L1425 1699.6 L1423.5 1700.2 L1422 1700.1 L1420.5 1700.1 L1419 1700.5 L1417.5 1700.7 L1416 1701.5 L1414.5 1702.7 L1413 1702.6 L1411.5 1702.4 L1410 1703.2 L1408.5 1703.7 L1407 1704.7 L1405.5 1706.8 L1404 1707 L1402.5 1706.1 L1400.9 1707.2 L1399.4 1708.5 L1397.9 1709.7 L1396.4 1712.7 L1394.9 1713.5 L1393.4 1711.5 L1391.9 1712.4 L1390.4 1714.8 L1388.9 1715.9 L1387.4 1719.3 L1385.9 1721.1 L1384.4 1717.8 L1382.9 1717.6 L1381.4 1720.9 L1379.9 1721.5 L1378.4 1722.2 L1376.9 1722.2 L1375.4 1720.3 L1373.9 1717.3 L1372.4 1720 L1370.9 1719.4 L1369.4 1712 L1367.9 1710 L1366.4 1707.4 L1364.9 1706.5 L1363.4 1708.8 L1361.9 1710.9 L1360.4 1710.4 L1358.9 1710.8 L1357.4 1709.4 L1355.9 1706.4 L1354.4 1706.4 L1352.9 1706.7 L1351.4 1705.2 L1349.9 1704.4 L1348.4 1703.5 L1346.9 1701.9 Z" fill="#25222d"/>
<path shape-rendering="geometricPrecision" d="M1346.9 1743.2 L1348.4 1742.3 L1349.9 1742.4 L1351.4 1742.7 L1352.9 1740.4 L1354.4 1738.5 L1355.9 1737.4 L1357.4 1735.7 L1358.9 1737.3 L1360.4 1738.3 L1361.9 1736.1 L1363.4 1736.5 L1364.9 1737 L1366.4 1737.4 L1367.9 1738.5 L1369.4 1736.7 L1370.9 1727.5 L1372.4 1725.5 L1373.9 1724 L1375.4 1724 L1376.9 1727.3 L1378.4 1727.1 L1379.9 1725.1 L1381.4 1725.1 L1382.9 1724 L1384.4 1724.8 L1385.9 1730.3 L1387.4 1730.4 L1388.9 1730.7 L1390.4 1731.1 L1391.9 1729.5 L1393.4 1732.4 L1394.9 1735.9 L1396.4 1736 L1397.9 1737.1 L1399.4 1737 L1400.9 1736.4 L1402.5 1739 L1404 1740.7 L1405.5 1741.1 L1407 1742 L1408.5 1741.7 L1410 1741.7 L1411.5 1743.4 L1413 1744.1 L1414.5 1744.6 L1416 1745.2 L1417.5 1744.8 L1419 1745.1 L1420.5 1746 L1422 1746.3 L1423.5 1746.6 L1425 1746.9 L1426.5 1746.7 L1428 1746.9 L1429.5 1747.4 L1431 1747.6 L1432.5 1747.9 L1434 1747.9 L1435.5 1747.8 L1437 1747.9 L1438.5 1748 L1440 1748.1 L1441.5 1748.3 L1443 1748.3 L1444.5 1748.3 L1446 1748.3 L1447.5 1748.3 L1449 1748.3 L1450.5 1748.3 L1452 1748.3 L1453.5 1748.3 L1455 1748.3 L1455 1749.5 L1453.5 1749.5 L1452 1749.5 L1450.5 1749.5 L1449 1749.5 L1447.5 1749.5 L1446 1749.5 L1444.5 1749.5 L1443 1749.5 L1441.5 1749.6 L1440 1749.5 L1438.5 1749.6 L1437 1749.8 L1435.5 1749.9 L1434 1750.1 L1432.5 1750.1 L1431 1750 L1429.5 1750.2 L1428 1750.6 L1426.5 1750.9 L1425 1751.3 L1423.5 1751.6 L1422 1751.3 L1420.5 1751.4 L1419 1752.2 L1417.5 1752.8 L1416 1753.3 L1414.5 1754 L1413 1753.6 L1411.5 1753.5 L1410 1755.1 L1408.5 1756.2 L1407 1756.8 L1405.5 1757.8 L1404 1757.5 L1402.5 1756.9 L1400.9 1759.3 L1399.4 1761.7 L1397.9 1762.1 L1396.4 1763.2 L1394.9 1763.3 L1393.4 1762 L1391.9 1764.7 L1390.4 1768.7 L1388.9 1769 L1387.4 1769.4 L1385.9 1769.9 L1384.4 1768 L1382.9 1770.3 L1381.4 1773.8 L1379.9 1773.8 L1378.4 1773.1 L1376.9 1773 L1375.4 1770.4 L1373.9 1770.1 L1372.4 1773.8 L1370.9 1772.8 L1369.4 1762.7 L1367.9 1759.9 L1366.4 1758.3 L1364.9 1758.7 L1363.4 1761.8 L1361.9 1763.5 L1360.4 1761.3 L1358.9 1760.5 L1357.4 1760.2 L1355.9 1758.7 L1354.4 1759.1 L1352.9 1758.9 L1351.4 1756.4 L1349.9 1755 L1348.4 1754.6 L1346.9 1753.8 Z" fill="#25222d"/>
<rect x="1691" y="1646.5" width="108" height="24" fill="#8a6fe3"/>
<rect x="1691" y="1646.5" width="1" height="129.2" fill="#5f49b5"/>
<rect x="1798" y="1646.5" width="1" height="129.2" fill="#5f49b5"/>
<rect x="1691" y="1646.5" width="108" height="1" fill="#5f49b5"/>
<rect x="1691" y="1670.5" width="108" height="1" fill="#5f49b5"/>
<rect x="1691" y="1774.7" width="108" height="1" fill="#5f49b5"/>
<path shape-rendering="geometricPrecision" d="M1691.2 1691.8 L1692.7 1691.1 L1694.2 1689.7 L1695.7 1689.8 L1697.2 1690.1 L1698.7 1688 L1700.2 1686.4 L1701.7 1684.8 L1703.2 1683.1 L1704.7 1685 L1706.2 1686.4 L1707.7 1685.8 L1709.2 1686.5 L1710.7 1686.3 L1712.2 1684.2 L1713.7 1684 L1715.2 1678.4 L1716.7 1675.1 L1718.2 1674.8 L1719.7 1672.4 L1721.2 1672.4 L1722.7 1674.7 L1724.2 1675.2 L1725.7 1674.9 L1727.2 1675.2 L1728.7 1672.4 L1730.2 1673.8 L1731.7 1678.6 L1733.2 1679.5 L1734.6 1681.1 L1736.1 1681.4 L1737.6 1679.3 L1739.1 1681.5 L1740.6 1684.4 L1742.1 1685.2 L1743.6 1687 L1745.1 1687 L1746.6 1686.1 L1748.1 1687.9 L1749.6 1689.3 L1751.1 1690.1 L1752.6 1691.4 L1754.1 1691.1 L1755.6 1691 L1757.1 1692.1 L1758.6 1692.7 L1760.1 1693.4 L1761.6 1694.1 L1763.1 1693.9 L1764.6 1694 L1766.1 1694.6 L1767.6 1694.8 L1769.1 1695.3 L1770.6 1695.6 L1772.1 1695.5 L1773.6 1695.7 L1775.1 1696 L1776.6 1696.1 L1778 1696.4 L1779.5 1696.5 L1781 1696.4 L1782.5 1696.5 L1784 1696.5 L1785.5 1696.7 L1787 1696.7 L1788.5 1696.7 L1790 1696.7 L1791.5 1696.7 L1793 1696.7 L1794.5 1696.7 L1796 1696.7 L1797.5 1696.7 L1799 1696.7 L1799 1697.9 L1797.5 1697.9 L1796 1697.9 L1794.5 1697.9 L1793 1697.9 L1791.5 1697.9 L1790 1697.9 L1788.5 1697.9 L1787 1697.9 L1785.5 1697.9 L1784 1698 L1782.5 1698.1 L1781 1698.3 L1779.5 1698.4 L1778 1698.3 L1776.6 1698.4 L1775.1 1698.5 L1773.6 1698.7 L1772.1 1699.3 L1770.6 1699.6 L1769.1 1699.4 L1767.6 1699.5 L1766.1 1699.9 L1764.6 1700.1 L1763.1 1700.9 L1761.6 1701.7 L1760.1 1701.3 L1758.6 1701.3 L1757.1 1702.2 L1755.6 1702.8 L1754.1 1703.9 L1752.6 1705.2 L1751.1 1704.8 L1749.6 1704.3 L1748.1 1705.8 L1746.6 1707.2 L1745.1 1708.4 L1743.6 1710.5 L1742.1 1710.2 L1740.6 1708.8 L1739.1 1710.9 L1737.6 1713.7 L1736.1 1714.7 L1734.6 1716.9 L1733.2 1717 L1731.7 1714.3 L1730.2 1716.4 L1728.7 1721 L1727.2 1722 L1725.7 1722.2 L1724.2 1722.2 L1722.7 1718.4 L1721.2 1718.6 L1719.7 1722.2 L1718.2 1722.2 L1716.7 1721.5 L1715.2 1719.6 L1713.7 1709.9 L1712.2 1707 L1710.7 1708.2 L1709.2 1709.6 L1707.7 1709.6 L1706.2 1710.4 L1704.7 1709 L1703.2 1707.8 L1701.7 1709.6 L1700.2 1709.7 L1698.7 1707.4 L1697.2 1705.9 L1695.7 1704.4 L1694.2 1703.1 L1692.7 1703.4 L1691.2 1703.5 Z" fill="#25222d"/>
<path shape-rendering="geometricPrecision" d="M1691.2 1743.9 L1692.7 1742.8 L1694.2 1742 L1695.7 1740.3 L1697.2 1740 L1698.7 1740.5 L1700.2 1738.6 L1701.7 1737.2 L1703.2 1736.1 L1704.7 1734.3 L1706.2 1736.2 L1707.7 1738.4 L1709.2 1738.3 L1710.7 1739.2 L1712.2 1736.8 L1713.7 1732.7 L1715.2 1728.1 L1716.7 1727.8 L1718.2 1726.5 L1719.7 1726.5 L1721.2 1724 L1722.7 1724 L1724.2 1725.8 L1725.7 1726.4 L1727.2 1727.2 L1728.7 1728.4 L1730.2 1725.2 L1731.7 1726.5 L1733.2 1730.7 L1734.6 1731.7 L1736.1 1733.9 L1737.6 1734.3 L1739.1 1732.3 L1740.6 1734.1 L1742.1 1736.5 L1743.6 1737.5 L1745.1 1739.6 L1746.6 1739.6 L1748.1 1738.7 L1749.6 1740.1 L1751.1 1741.2 L1752.6 1742.2 L1754.1 1743.7 L1755.6 1743.5 L1757.1 1743.2 L1758.6 1744.1 L1760.1 1744.5 L1761.6 1745.3 L1763.1 1746.1 L1764.6 1745.9 L1766.1 1745.9 L1767.6 1746.3 L1769.1 1746.5 L1770.6 1747.1 L1772.1 1747.4 L1773.6 1747.3 L1775.1 1747.5 L1776.6 1747.7 L1778 1747.7 L1779.5 1748 L1781 1748.1 L1782.5 1748 L1784 1748.1 L1785.5 1748.2 L1787 1748.3 L1788.5 1748.3 L1790 1748.3 L1791.5 1748.3 L1793 1748.3 L1794.5 1748.3 L1796 1748.3 L1797.5 1748.3 L1799 1748.3 L1799 1749.5 L1797.5 1749.5 L1796 1749.5 L1794.5 1749.5 L1793 1749.5 L1791.5 1749.5 L1790 1749.5 L1788.5 1749.5 L1787 1749.5 L1785.5 1749.5 L1784 1749.6 L1782.5 1749.7 L1781 1749.9 L1779.5 1749.9 L1778 1749.8 L1776.6 1750 L1775.1 1750.2 L1773.6 1750.4 L1772.1 1750.7 L1770.6 1750.9 L1769.1 1750.7 L1767.6 1751.1 L1766.1 1751.8 L1764.6 1752 L1763.1 1752.4 L1761.6 1752.7 L1760.1 1752.5 L1758.6 1753 L1757.1 1754.4 L1755.6 1754.9 L1754.1 1755.2 L1752.6 1755.9 L1751.1 1755.7 L1749.6 1756 L1748.1 1758.4 L1746.6 1759.8 L1745.1 1759.7 L1743.6 1760.5 L1742.1 1760.6 L1740.6 1760.6 L1739.1 1764.1 L1737.6 1766.9 L1736.1 1765.9 L1734.6 1766 L1733.2 1766.7 L1731.7 1766.4 L1730.2 1770.3 L1728.7 1773.8 L1727.2 1773.3 L1725.7 1771.2 L1724.2 1771.7 L1722.7 1770.8 L1721.2 1772.9 L1719.7 1773.8 L1718.2 1773.8 L1716.7 1770 L1715.2 1768.9 L1713.7 1762 L1712.2 1760 L1710.7 1760.7 L1709.2 1761.1 L1707.7 1759.7 L1706.2 1760.5 L1704.7 1760.9 L1703.2 1760.9 L1701.7 1762.2 L1700.2 1761.1 L1698.7 1757.8 L1697.2 1756.5 L1695.7 1756.2 L1694.2 1755.5 L1692.7 1755.4 L1691.2 1755 Z" fill="#25222d"/>
<rect x="2208" y="1646.5" width="107" height="24" fill="#8a6fe3"/>
<rect x="2208" y="1646.5" width="1" height="129.2" fill="#5f49b5"/>
<rect x="2314" y="1646.5" width="1" height="129.2" fill="#5f49b5"/>
<rect x="2208" y="1646.5" width="107" height="1" fill="#5f49b5"/>
<rect x="2208" y="1670.5" width="107" height="1" fill="#5f49b5"/>
<rect x="2208" y="1774.7" width="107" height="1" fill="#5f49b5"/>
<path shape-rendering="geometricPrecision" d="M2207.8 1692.4 L2209.3 1691.7 L2210.8 1689.7 L2212.2 1689.1 L2213.7 1689.2 L2215.2 1688 L2216.7 1687.6 L2218.2 1686 L2219.7 1683.1 L2221.2 1683.9 L2222.7 1685 L2224.2 1685.8 L2225.6 1687.7 L2227.1 1687.3 L2228.6 1684.2 L2230.1 1682.7 L2231.6 1676.1 L2233.1 1675.2 L2234.6 1677.3 L2236.1 1673 L2237.6 1672.4 L2239.1 1672.4 L2240.5 1672.6 L2242 1675 L2243.5 1677.6 L2245 1674.3 L2246.5 1674 L2248 1676.6 L2249.5 1677.4 L2251 1681.2 L2252.5 1683.1 L2253.9 1680.9 L2255.4 1681.6 L2256.9 1682.9 L2258.4 1683.9 L2259.9 1687.1 L2261.4 1688 L2262.9 1687.1 L2264.4 1688 L2265.9 1688.4 L2267.3 1689.3 L2268.8 1691.5 L2270.3 1691.7 L2271.8 1691.6 L2273.3 1692.1 L2274.8 1692.2 L2276.3 1693 L2277.8 1694.1 L2279.3 1694.2 L2280.7 1694.4 L2282.2 1694.6 L2283.7 1694.5 L2285.2 1695.1 L2286.7 1695.6 L2288.2 1695.7 L2289.7 1695.9 L2291.2 1696 L2292.7 1696 L2294.2 1696.3 L2295.6 1696.5 L2297.1 1696.5 L2298.6 1696.6 L2300.1 1696.5 L2301.6 1696.6 L2303.1 1696.7 L2304.6 1696.7 L2306.1 1696.7 L2307.6 1696.7 L2309 1696.7 L2310.5 1696.7 L2312 1696.7 L2313.5 1696.7 L2315 1696.7 L2315 1697.9 L2313.5 1697.9 L2312 1697.9 L2310.5 1697.9 L2309 1697.9 L2307.6 1697.9 L2306.1 1697.9 L2304.6 1697.9 L2303.1 1697.9 L2301.6 1697.9 L2300.1 1698.1 L2298.6 1698.2 L2297.1 1698.3 L2295.6 1698.3 L2294.2 1698.2 L2292.7 1698.4 L2291.2 1698.6 L2289.7 1698.9 L2288.2 1699.3 L2286.7 1699.3 L2285.2 1699.2 L2283.7 1699.6 L2282.2 1700.2 L2280.7 1700.4 L2279.3 1700.9 L2277.8 1701.2 L2276.3 1700.9 L2274.8 1701.5 L2273.3 1702.7 L2271.8 1703.2 L2270.3 1703.8 L2268.8 1704.5 L2267.3 1704 L2265.9 1704.5 L2264.4 1706.9 L2262.9 1708 L2261.4 1708.3 L2259.9 1709.3 L2258.4 1708.8 L2256.9 1708.9 L2255.4 1712.7 L2253.9 1715 L2252.5 1714.5 L2251 1715.2 L2249.5 1715 L2248 1714.4 L2246.5 1718.9 L2245 1722.2 L2243.5 1721.6 L2242 1720.6 L2240.5 1720.2 L2239.1 1718.4 L2237.6 1721.5 L2236.1 1722.2 L2234.6 1722.2 L2233.1 1719.2 L2231.6 1717.6 L2230.1 1709.9 L2228.6 1708.3 L2227.1 1709.2 L2225.6 1709.4 L2224.2 1708.4 L2222.7 1709.3 L2221.2 1709 L2219.7 1709.1 L2218.2 1710.9 L2216.7 1709.5 L2215.2 1706.3 L2213.7 1705.2 L2212.2 1704.5 L2210.8 1703.8 L2209.3 1704 L2207.8 1703.4 Z" fill="#25222d"/>
<path shape-rendering="geometricPrecision" d="M2207.8 1743.7 L2209.3 1743.4 L2210.8 1742.7 L2212.2 1740.5 L2213.7 1739.3 L2215.2 1739.3 L2216.7 1738.2 L2218.2 1738.3 L2219.7 1737.4 L2221.2 1734.7 L2222.7 1735.2 L2224.2 1736.9 L2225.6 1738 L2227.1 1740.1 L2228.6 1738 L2230.1 1733.1 L2231.6 1726.4 L2233.1 1725 L2234.6 1725.9 L2236.1 1728.7 L2237.6 1724.9 L2239.1 1724 L2240.5 1724 L2242 1724 L2243.5 1726.7 L2245 1730.3 L2246.5 1727.5 L2248 1727.3 L2249.5 1729 L2251 1729.6 L2252.5 1733.6 L2253.9 1735.6 L2255.4 1733.9 L2256.9 1734.6 L2258.4 1735.3 L2259.9 1736.2 L2261.4 1739.4 L2262.9 1740.4 L2264.4 1739.7 L2265.9 1740.4 L2267.3 1740.5 L2268.8 1741.5 L2270.3 1743.5 L2271.8 1743.9 L2273.3 1743.8 L2274.8 1744.2 L2276.3 1744.1 L2277.8 1744.9 L2279.3 1746 L2280.7 1746.1 L2282.2 1746.2 L2283.7 1746.4 L2285.2 1746.3 L2286.7 1746.8 L2288.2 1747.4 L2289.7 1747.5 L2291.2 1747.7 L2292.7 1747.7 L2294.2 1747.6 L2295.6 1747.9 L2297.1 1748.1 L2298.6 1748.1 L2300.1 1748.2 L2301.6 1748.2 L2303.1 1748.2 L2304.6 1748.3 L2306.1 1748.3 L2307.6 1748.3 L2309 1748.3 L2310.5 1748.3 L2312 1748.3 L2313.5 1748.3 L2315 1748.3 L2315 1749.5 L2313.5 1749.5 L2312 1749.5 L2310.5 1749.5 L2309 1749.5 L2307.6 1749.5 L2306.1 1749.5 L2304.6 1749.5 L2303.1 1749.5 L2301.6 1749.6 L2300.1 1749.7 L2298.6 1749.7 L2297.1 1749.8 L2295.6 1749.8 L2294.2 1749.8 L2292.7 1750.1 L2291.2 1750.3 L2289.7 1750.4 L2288.2 1750.6 L2286.7 1750.7 L2285.2 1750.8 L2283.7 1751.4 L2282.2 1752 L2280.7 1751.9 L2279.3 1752 L2277.8 1752.4 L2276.3 1752.6 L2274.8 1753.5 L2273.3 1754.8 L2271.8 1754.6 L2270.3 1754.5 L2268.8 1755.4 L2267.3 1755.9 L2265.9 1757 L2264.4 1759.2 L2262.9 1759.3 L2261.4 1758.5 L2259.9 1759.7 L2258.4 1760.9 L2256.9 1762.2 L2255.4 1765.4 L2253.9 1766.2 L2252.5 1763.9 L2251 1764.9 L2249.5 1767.4 L2248 1768.6 L2246.5 1772.2 L2245 1773.8 L2243.5 1770.3 L2242 1769.6 L2240.5 1772.6 L2239.1 1773.3 L2237.6 1773.8 L2236.1 1773.8 L2234.6 1771.2 L2233.1 1768.4 L2231.6 1769.8 L2230.1 1763.4 L2228.6 1760.9 L2227.1 1760.3 L2225.6 1759.7 L2224.2 1758.8 L2222.7 1761.1 L2221.2 1762.3 L2219.7 1761.8 L2218.2 1761.9 L2216.7 1759.7 L2215.2 1757 L2213.7 1756.9 L2212.2 1757 L2210.8 1756 L2209.3 1755.3 L2207.8 1754.3 Z" fill="#25222d"/>
<rect x="2380" y="1646.5" width="108" height="24" fill="#8a6fe3"/>
<rect x="2380" y="1646.5" width="1" height="129.2" fill="#5f49b5"/>
<rect x="2487" y="1646.5" width="1" height="129.2" fill="#5f49b5"/>
<rect x="2380" y="1646.5" width="108" height="1" fill="#5f49b5"/>
<rect x="2380" y="1670.5" width="108" height="1" fill="#5f49b5"/>
<rect x="2380" y="1774.7" width="108" height="1" fill="#5f49b5"/>
<path shape-rendering="geometricPrecision" d="M2380 1691.4 L2381.5 1690.5 L2383 1690.7 L2384.5 1690 L2386 1689.7 L2387.5 1688.5 L2389 1685.2 L2390.5 1684.2 L2392 1684.9 L2393.5 1684.9 L2395 1686.4 L2396.5 1686.3 L2398 1684.9 L2399.5 1686.3 L2401 1685.6 L2402.5 1683.5 L2404 1679.5 L2405.5 1675.2 L2407 1672.4 L2408.5 1672.4 L2410 1672.4 L2411.5 1673.9 L2413 1677.4 L2414.5 1673.8 L2416 1672.4 L2417.5 1673.9 L2419 1674.3 L2420.5 1678.5 L2422 1681.5 L2423.5 1679.4 L2425 1679.7 L2426.5 1680.6 L2428 1681.2 L2429.5 1684.9 L2431 1686.5 L2432.5 1685.5 L2434 1686.4 L2435.5 1686.7 L2437 1687.5 L2438.5 1690 L2440 1690.6 L2441.5 1690.4 L2443 1691.1 L2444.5 1691.1 L2446 1691.9 L2447.5 1693.3 L2449 1693.5 L2450.5 1693.6 L2452 1694 L2453.5 1694 L2455 1694.5 L2456.5 1695.2 L2458 1695.2 L2459.5 1695.5 L2461 1695.6 L2462.5 1695.6 L2464 1696 L2465.5 1696.3 L2467 1696.3 L2468.5 1696.4 L2470 1696.4 L2471.5 1696.4 L2473 1696.6 L2474.5 1696.7 L2476 1696.7 L2477.5 1696.7 L2479 1696.7 L2480.5 1696.7 L2482 1696.7 L2483.5 1696.7 L2485 1696.7 L2486.5 1696.7 L2488 1696.7 L2488 1697.9 L2486.5 1697.9 L2485 1697.9 L2483.5 1697.9 L2482 1697.9 L2480.5 1697.9 L2479 1697.9 L2477.5 1697.9 L2476 1697.9 L2474.5 1697.9 L2473 1697.9 L2471.5 1698.1 L2470 1698.3 L2468.5 1698.4 L2467 1698.5 L2465.5 1698.4 L2464 1698.4 L2462.5 1698.8 L2461 1699.2 L2459.5 1699.4 L2458 1699.7 L2456.5 1699.7 L2455 1699.6 L2453.5 1700.1 L2452 1701 L2450.5 1701.3 L2449 1701.7 L2447.5 1701.9 L2446 1701.6 L2444.5 1702.4 L2443 1704.2 L2441.5 1704.8 L2440 1705 L2438.5 1705.6 L2437 1705.1 L2435.5 1706 L2434 1709.1 L2432.5 1710.3 L2431 1709.9 L2429.5 1710.7 L2428 1710.6 L2426.5 1711.2 L2425 1715.5 L2423.5 1717.6 L2422 1716.1 L2420.5 1716.5 L2419 1717 L2417.5 1717.1 L2416 1722.1 L2414.5 1722.2 L2413 1721.5 L2411.5 1719.8 L2410 1720.4 L2408.5 1719.3 L2407 1721.6 L2405.5 1722.2 L2404 1719.3 L2402.5 1709.9 L2401 1708.1 L2399.5 1707 L2398 1708.4 L2396.5 1711.1 L2395 1710.8 L2393.5 1708.4 L2392 1708.8 L2390.5 1708.9 L2389 1708.1 L2387.5 1708.4 L2386 1706.7 L2384.5 1703.9 L2383 1703.4 L2381.5 1703.3 L2380 1702.7 Z" fill="#25222d"/>
<path shape-rendering="geometricPrecision" d="M2380 1744.2 L2381.5 1742.3 L2383 1741.3 L2384.5 1741.3 L2386 1740.2 L2387.5 1740.3 L2389 1739.3 L2390.5 1735.7 L2392 1735.4 L2393.5 1735.9 L2395 1736 L2396.5 1738.7 L2398 1738.8 L2399.5 1737.6 L2401 1736.8 L2402.5 1734 L2404 1727.4 L2405.5 1729.5 L2407 1726.6 L2408.5 1724 L2410 1724 L2411.5 1724 L2413 1725.2 L2414.5 1729.1 L2416 1726.2 L2417.5 1725.4 L2419 1726.7 L2420.5 1726.6 L2422 1730.8 L2423.5 1733.9 L2425 1732.4 L2426.5 1732.8 L2428 1733.3 L2429.5 1733.6 L2431 1737.2 L2432.5 1738.8 L2434 1738.3 L2435.5 1739.2 L2437 1739.1 L2438.5 1739.7 L2440 1742 L2441.5 1742.7 L2443 1742.8 L2444.5 1743.5 L2446 1743.2 L2447.5 1743.8 L2449 1745.1 L2450.5 1745.4 L2452 1745.7 L2453.5 1746 L2455 1745.8 L2456.5 1746.3 L2458 1746.9 L2459.5 1747 L2461 1747.3 L2462.5 1747.4 L2464 1747.4 L2465.5 1747.7 L2467 1747.9 L2468.5 1747.9 L2470 1748.1 L2471.5 1748 L2473 1748 L2474.5 1748.2 L2476 1748.3 L2477.5 1748.3 L2479 1748.3 L2480.5 1748.3 L2482 1748.3 L2483.5 1748.3 L2485 1748.3 L2486.5 1748.3 L2488 1748.3 L2488 1749.5 L2486.5 1749.5 L2485 1749.5 L2483.5 1749.5 L2482 1749.5 L2480.5 1749.5 L2479 1749.5 L2477.5 1749.5 L2476 1749.5 L2474.5 1749.5 L2473 1749.5 L2471.5 1749.8 L2470 1749.9 L2468.5 1749.8 L2467 1749.9 L2465.5 1749.9 L2464 1750 L2462.5 1750.5 L2461 1750.9 L2459.5 1750.8 L2458 1750.9 L2456.5 1751.2 L2455 1751.3 L2453.5 1752 L2452 1752.8 L2450.5 1752.6 L2449 1752.7 L2447.5 1753.3 L2446 1753.6 L2444.5 1754.6 L2443 1756.1 L2441.5 1755.8 L2440 1755.5 L2438.5 1756.7 L2437 1757.5 L2435.5 1758.8 L2434 1761.2 L2432.5 1761.1 L2431 1759.8 L2429.5 1761.5 L2428 1763.4 L2426.5 1764.8 L2425 1767.7 L2423.5 1768 L2422 1765.2 L2420.5 1766.8 L2419 1770.4 L2417.5 1771.7 L2416 1773.8 L2414.5 1773.8 L2413 1770.1 L2411.5 1769.8 L2410 1773.8 L2408.5 1773.8 L2407 1773.8 L2405.5 1773.8 L2404 1768.3 L2402.5 1760.6 L2401 1760.5 L2399.5 1760 L2398 1760.5 L2396.5 1761.7 L2395 1760.9 L2393.5 1759.3 L2392 1761.2 L2390.5 1762.2 L2389 1760.2 L2387.5 1759 L2386 1757.2 L2384.5 1755.1 L2383 1755.4 L2381.5 1755.7 L2380 1754.6 Z" fill="#25222d"/>
<rect x="2552" y="1646.5" width="108" height="24" fill="#8a6fe3"/>
<rect x="2552" y="1646.5" width="1" height="129.2" fill="#5f49b5"/>
<rect x="2659" y="1646.5" width="1" height="129.2" fill="#5f49b5"/>
<rect x="2552" y="1646.5" width="108" height="1" fill="#5f49b5"/>
<rect x="2552" y="1670.5" width="108" height="1" fill="#5f49b5"/>
<rect x="2552" y="1774.7" width="108" height="1" fill="#5f49b5"/>
<path shape-rendering="geometricPrecision" d="M2552.1 1691.8 L2553.6 1691.2 L2555.1 1691.2 L2556.6 1690.9 L2558.1 1688.1 L2559.6 1686.6 L2561.1 1686.1 L2562.6 1685 L2564.1 1686.6 L2565.6 1686.2 L2567.1 1683.6 L2568.6 1684.6 L2570.1 1685.6 L2571.6 1686.7 L2573.1 1687.7 L2574.6 1684.5 L2576.1 1674.4 L2577.6 1673 L2579.1 1672.4 L2580.6 1672.8 L2582.1 1677 L2583.6 1674.5 L2585.1 1672.4 L2586.6 1672.4 L2588.1 1672.4 L2589.6 1675.3 L2591.1 1679.6 L2592.6 1678 L2594.1 1678 L2595.6 1678.5 L2597.1 1678.3 L2598.6 1682.3 L2600.1 1684.8 L2601.6 1684 L2603.1 1684.8 L2604.6 1684.7 L2606.1 1685.2 L2607.6 1688.3 L2609.1 1689.5 L2610.6 1689.3 L2612.1 1690 L2613.6 1689.7 L2615.1 1690.4 L2616.6 1692.3 L2618.1 1692.7 L2619.5 1692.9 L2621 1693.3 L2622.5 1693 L2624 1693.7 L2625.5 1694.7 L2627 1694.8 L2628.5 1695.1 L2630 1695.2 L2631.5 1695 L2633 1695.5 L2634.5 1695.9 L2636 1696.1 L2637.5 1696.3 L2639 1696.3 L2640.5 1696.2 L2642 1696.4 L2643.5 1696.5 L2645 1696.6 L2646.5 1696.7 L2648 1696.7 L2649.5 1696.7 L2651 1696.7 L2652.5 1696.7 L2654 1696.7 L2655.5 1696.7 L2657 1696.7 L2658.5 1696.7 L2660 1696.7 L2660 1697.9 L2658.5 1697.9 L2657 1697.9 L2655.5 1697.9 L2654 1697.9 L2652.5 1697.9 L2651 1697.9 L2649.5 1697.9 L2648 1697.9 L2646.5 1698 L2645 1698.1 L2643.5 1698.1 L2642 1698.1 L2640.5 1698.3 L2639 1698.5 L2637.5 1698.5 L2636 1698.7 L2634.5 1698.7 L2633 1698.8 L2631.5 1699.3 L2630 1699.8 L2628.5 1699.9 L2627 1700.1 L2625.5 1700.1 L2624 1700.1 L2622.5 1701 L2621 1702.1 L2619.5 1702.2 L2618.1 1702.4 L2616.6 1702.7 L2615.1 1702.7 L2613.6 1703.9 L2612.1 1706 L2610.6 1706.2 L2609.1 1706 L2607.6 1706.7 L2606.1 1706.8 L2604.6 1708.2 L2603.1 1711.6 L2601.6 1712.4 L2600.1 1711.3 L2598.6 1712.2 L2597.1 1712.7 L2595.6 1713.8 L2594.1 1718.3 L2592.6 1720.1 L2591.1 1717.5 L2589.6 1717.9 L2588.1 1719.5 L2586.6 1719.5 L2585.1 1722.2 L2583.6 1722.2 L2582.1 1721 L2580.6 1718.9 L2579.1 1720 L2577.6 1719.4 L2576.1 1719.7 L2574.6 1713.5 L2573.1 1708.7 L2571.6 1706.3 L2570.1 1707.9 L2568.6 1709 L2567.1 1710.4 L2565.6 1711.7 L2564.1 1710 L2562.6 1707.6 L2561.1 1707.4 L2559.6 1707.2 L2558.1 1706.1 L2556.6 1705.7 L2555.1 1704.4 L2553.6 1702.5 L2552.1 1702.2 Z" fill="#25222d"/>
<path shape-rendering="geometricPrecision" d="M2552.1 1742.9 L2553.6 1742.6 L2555.1 1741.8 L2556.6 1742.1 L2558.1 1741.5 L2559.6 1738.6 L2561.1 1737.1 L2562.6 1736.2 L2564.1 1735.8 L2565.6 1737.9 L2567.1 1737.7 L2568.6 1736.2 L2570.1 1737.2 L2571.6 1737.7 L2573.1 1736.9 L2574.6 1737 L2576.1 1729.6 L2577.6 1724.6 L2579.1 1724.3 L2580.6 1724 L2582.1 1724 L2583.6 1728.5 L2585.1 1726.4 L2586.6 1724.5 L2588.1 1724.6 L2589.6 1724 L2591.1 1727.6 L2592.6 1731.9 L2594.1 1730.8 L2595.6 1731.2 L2597.1 1731.3 L2598.6 1730.8 L2600.1 1734.6 L2601.6 1737 L2603.1 1736.7 L2604.6 1737.7 L2606.1 1737.4 L2607.6 1737.7 L2609.1 1740.4 L2610.6 1741.5 L2612.1 1741.7 L2613.6 1742.4 L2615.1 1742 L2616.6 1742.6 L2618.1 1744.1 L2619.5 1744.6 L2621 1745 L2622.5 1745.3 L2624 1745.1 L2625.5 1745.6 L2627 1746.3 L2628.5 1746.5 L2630 1746.9 L2631.5 1747 L2633 1746.9 L2634.5 1747.3 L2636 1747.7 L2637.5 1747.8 L2639 1747.9 L2640.5 1747.9 L2642 1747.8 L2643.5 1748 L2645 1748.2 L2646.5 1748.3 L2648 1748.3 L2649.5 1748.3 L2651 1748.3 L2652.5 1748.3 L2654 1748.3 L2655.5 1748.3 L2657 1748.3 L2658.5 1748.3 L2660 1748.3 L2660 1749.5 L2658.5 1749.5 L2657 1749.5 L2655.5 1749.5 L2654 1749.5 L2652.5 1749.5 L2651 1749.5 L2649.5 1749.5 L2648 1749.5 L2646.5 1749.5 L2645 1749.6 L2643.5 1749.6 L2642 1749.7 L2640.5 1750 L2639 1750.1 L2637.5 1749.9 L2636 1750 L2634.5 1750.3 L2633 1750.5 L2631.5 1751.1 L2630 1751.4 L2628.5 1751.2 L2627 1751.3 L2625.5 1751.7 L2624 1752.1 L2622.5 1753 L2621 1753.7 L2619.5 1753.3 L2618.1 1753.3 L2616.6 1754.2 L2615.1 1755 L2613.6 1756.1 L2612.1 1757.5 L2610.6 1756.9 L2609.1 1756.4 L2607.6 1758.2 L2606.1 1759.7 L2604.6 1761 L2603.1 1763.1 L2601.6 1762.6 L2600.1 1761.1 L2598.6 1763.6 L2597.1 1766.3 L2595.6 1767.4 L2594.1 1769.7 L2592.6 1769.6 L2591.1 1766.7 L2589.6 1769.1 L2588.1 1773.8 L2586.6 1773.8 L2585.1 1773.8 L2583.6 1773.8 L2582.1 1770 L2580.6 1770.1 L2579.1 1773.8 L2577.6 1773.8 L2576.1 1771.1 L2574.6 1763.5 L2573.1 1759.1 L2571.6 1757.7 L2570.1 1760.6 L2568.6 1762.1 L2567.1 1762 L2565.6 1761.7 L2564.1 1760.3 L2562.6 1759.1 L2561.1 1760.1 L2559.6 1759.9 L2558.1 1757.7 L2556.6 1756.3 L2555.1 1755.3 L2553.6 1754.1 L2552.1 1754.3 Z" fill="#25222d"/>
<rect x="2896" y="1646.5" width="108" height="24" fill="#8a6fe3"/>
<rect x="2896" y="1646.5" width="1" height="129.2" fill="#5f49b5"/>
<rect x="3003" y="1646.5" width="1" height="129.2" fill="#5f49b5"/>
<rect x="2896" y="1646.5" width="108" height="1" fill="#5f49b5"/>
<rect x="2896" y="1670.5" width="108" height="1" fill="#5f49b5"/>
<rect x="2896" y="1774.7" width="108" height="1" fill="#5f49b5"/>
<path shape-rendering="geometricPrecision" d="M2896.5 1692 L2898 1690.9 L2899.5 1690.2 L2901 1689.1 L2902.5 1689.3 L2903.9 1689.1 L2905.4 1686.4 L2906.9 1684.9 L2908.4 1684 L2909.9 1683.4 L2911.4 1685.8 L2912.9 1687 L2914.4 1686.2 L2915.9 1686.9 L2917.4 1684.7 L2918.9 1681.9 L2920.4 1678.4 L2921.9 1676.5 L2923.4 1674 L2924.9 1673.2 L2926.3 1672.4 L2927.8 1672.4 L2929.3 1676.1 L2930.8 1675.2 L2932.3 1674.9 L2933.8 1675.1 L2935.3 1672.9 L2936.8 1676.3 L2938.3 1680.4 L2939.8 1680.5 L2941.3 1681.8 L2942.8 1681.4 L2944.3 1680.3 L2945.8 1683.4 L2947.3 1685.7 L2948.7 1686.3 L2950.2 1687.7 L2951.7 1687.2 L2953.2 1687 L2954.7 1689.1 L2956.2 1690.2 L2957.7 1690.9 L2959.2 1691.8 L2960.7 1691.4 L2962.2 1691.6 L2963.7 1692.7 L2965.2 1693.2 L2966.7 1693.9 L2968.2 1694.4 L2969.7 1694.1 L2971.1 1694.3 L2972.6 1694.9 L2974.1 1695.1 L2975.6 1695.6 L2977.1 1695.8 L2978.6 1695.7 L2980.1 1696 L2981.6 1696.1 L2983.1 1696.3 L2984.6 1696.5 L2986.1 1696.5 L2987.6 1696.4 L2989.1 1696.6 L2990.6 1696.6 L2992.1 1696.7 L2993.5 1696.7 L2995 1696.7 L2996.5 1696.7 L2998 1696.7 L2999.5 1696.7 L3001 1696.7 L3002.5 1696.7 L3004 1696.7 L3004 1697.9 L3002.5 1697.9 L3001 1697.9 L2999.5 1697.9 L2998 1697.9 L2996.5 1697.9 L2995 1697.9 L2993.5 1697.9 L2992.1 1697.9 L2990.6 1697.9 L2989.1 1698 L2987.6 1698.2 L2986.1 1698.3 L2984.6 1698.3 L2983.1 1698.4 L2981.6 1698.3 L2980.1 1698.5 L2978.6 1699 L2977.1 1699.3 L2975.6 1699.3 L2974.1 1699.5 L2972.6 1699.6 L2971.1 1699.7 L2969.7 1700.5 L2968.2 1701.2 L2966.7 1701 L2965.2 1701.3 L2963.7 1701.7 L2962.2 1701.9 L2960.7 1703.1 L2959.2 1704.5 L2957.7 1704.2 L2956.2 1704.2 L2954.7 1705.1 L2953.2 1705.6 L2951.7 1707.3 L2950.2 1709.8 L2948.7 1709.4 L2947.3 1708.5 L2945.8 1710.1 L2944.3 1711.3 L2942.8 1713.1 L2941.3 1716.6 L2939.8 1716.3 L2938.3 1713.9 L2936.8 1715.7 L2935.3 1718.2 L2933.8 1719.7 L2932.3 1722.2 L2930.8 1722.2 L2929.3 1718.5 L2927.8 1718.8 L2926.3 1721.8 L2924.9 1721.9 L2923.4 1722.2 L2921.9 1722.2 L2920.4 1716.5 L2918.9 1709.3 L2917.4 1708.9 L2915.9 1708.1 L2914.4 1709.1 L2912.9 1710.5 L2911.4 1709.2 L2909.9 1707.8 L2908.4 1709.7 L2906.9 1710.2 L2905.4 1708.7 L2903.9 1707.9 L2902.5 1705.6 L2901 1703.5 L2899.5 1703.9 L2898 1704 L2896.5 1703 Z" fill="#25222d"/>
<path shape-rendering="geometricPrecision" d="M2896.5 1744.4 L2898 1743 L2899.5 1741.9 L2901 1741 L2902.5 1739.2 L2903.9 1739.6 L2905.4 1739.6 L2906.9 1737.1 L2908.4 1736.5 L2909.9 1735.4 L2911.4 1734.5 L2912.9 1737.8 L2914.4 1739.1 L2915.9 1738.8 L2917.4 1737.7 L2918.9 1733.4 L2920.4 1725 L2921.9 1727.8 L2923.4 1727.3 L2924.9 1725.6 L2926.3 1725.2 L2927.8 1724 L2929.3 1724 L2930.8 1727.2 L2932.3 1726.9 L2933.8 1728.1 L2935.3 1728.2 L2936.8 1725.7 L2938.3 1728.8 L2939.8 1732.5 L2941.3 1733 L2942.8 1734.8 L2944.3 1734.3 L2945.8 1733 L2947.3 1735.8 L2948.7 1737.8 L2950.2 1738.7 L2951.7 1740.4 L2953.2 1739.7 L2954.7 1739.4 L2956.2 1741.2 L2957.7 1742.1 L2959.2 1743.1 L2960.7 1744.1 L2962.2 1743.5 L2963.7 1743.6 L2965.2 1744.6 L2966.7 1745.1 L2968.2 1745.9 L2969.7 1746.3 L2971.1 1746 L2972.6 1746.2 L2974.1 1746.6 L2975.6 1746.9 L2977.1 1747.4 L2978.6 1747.5 L2980.1 1747.5 L2981.6 1747.6 L2983.1 1747.8 L2984.6 1747.9 L2986.1 1748.1 L2987.6 1748.1 L2989.1 1748.1 L2990.6 1748.2 L2992.1 1748.3 L2993.5 1748.3 L2995 1748.3 L2996.5 1748.3 L2998 1748.3 L2999.5 1748.3 L3001 1748.3 L3002.5 1748.3 L3004 1748.3 L3004 1749.5 L3002.5 1749.5 L3001 1749.5 L2999.5 1749.5 L2998 1749.5 L2996.5 1749.5 L2995 1749.5 L2993.5 1749.5 L2992.1 1749.5 L2990.6 1749.5 L2989.1 1749.6 L2987.6 1749.8 L2986.1 1749.8 L2984.6 1749.7 L2983.1 1749.9 L2981.6 1750 L2980.1 1750.2 L2978.6 1750.6 L2977.1 1750.7 L2975.6 1750.6 L2974.1 1750.9 L2972.6 1751.4 L2971.1 1751.6 L2969.7 1752.1 L2968.2 1752.5 L2966.7 1752.1 L2965.2 1752.6 L2963.7 1753.6 L2962.2 1754.1 L2960.7 1754.8 L2959.2 1755.6 L2957.7 1755 L2956.2 1755.3 L2954.7 1757.4 L2953.2 1758.4 L2951.7 1759.1 L2950.2 1760.3 L2948.7 1759.6 L2947.3 1759.5 L2945.8 1762.7 L2944.3 1764.9 L2942.8 1765.2 L2941.3 1766.5 L2939.8 1765.8 L2938.3 1764.6 L2936.8 1768.7 L2935.3 1772.6 L2933.8 1772.2 L2932.3 1772.8 L2930.8 1772 L2929.3 1769.2 L2927.8 1772.2 L2926.3 1773.8 L2924.9 1773.8 L2923.4 1772.4 L2921.9 1771.5 L2920.4 1767.4 L2918.9 1761.9 L2917.4 1761.8 L2915.9 1760.2 L2914.4 1759.6 L2912.9 1760.4 L2911.4 1760.3 L2909.9 1760.4 L2908.4 1762.7 L2906.9 1762.4 L2905.4 1759.3 L2903.9 1758.1 L2902.5 1756.9 L2901 1755.7 L2899.5 1756.2 L2898 1755.8 L2896.5 1754.1 Z" fill="#25222d"/>
<rect x="1874" y="1646.5" width="97" height="24" fill="#8a6fe3"/>
<rect x="1874" y="1646.5" width="1" height="129.2" fill="#5f49b5"/>
<rect x="1970" y="1646.5" width="1" height="129.2" fill="#5f49b5"/>
<rect x="1874" y="1646.5" width="97" height="1" fill="#5f49b5"/>
<rect x="1874" y="1670.5" width="97" height="1" fill="#5f49b5"/>
<rect x="1874" y="1774.7" width="97" height="1" fill="#5f49b5"/>
<path shape-rendering="geometricPrecision" d="M1874.2 1691.7 L1875.5 1691.4 L1876.9 1691.7 L1878.2 1690.1 L1879.6 1687.9 L1880.9 1687.1 L1882.3 1685.6 L1883.6 1685.8 L1884.9 1687.1 L1886.3 1684.8 L1887.6 1683.7 L1889 1684.7 L1890.3 1685.2 L1891.7 1687.8 L1893 1687.7 L1894.4 1683.2 L1895.7 1675.2 L1897 1672.4 L1898.4 1672.4 L1899.7 1675.6 L1901.1 1676.1 L1902.4 1672.9 L1903.8 1673 L1905.1 1672.4 L1906.5 1672.4 L1907.8 1677.7 L1909.1 1678.3 L1910.5 1677.5 L1911.8 1678.4 L1913.2 1677.1 L1914.5 1679.4 L1915.9 1683.6 L1917.2 1683.7 L1918.6 1684.2 L1919.9 1684.6 L1921.2 1683.8 L1922.6 1686.2 L1923.9 1688.7 L1925.3 1688.9 L1926.6 1689.6 L1928 1689.6 L1929.3 1689.3 L1930.7 1691.1 L1932 1692.3 L1933.4 1692.6 L1934.7 1693.1 L1936 1692.9 L1937.4 1693 L1938.7 1694 L1940.1 1694.6 L1941.4 1694.8 L1942.8 1695.1 L1944.1 1694.9 L1945.5 1695.1 L1946.8 1695.6 L1948.1 1695.9 L1949.5 1696.2 L1950.8 1696.3 L1952.2 1696.1 L1953.5 1696.2 L1954.9 1696.4 L1956.2 1696.5 L1957.6 1696.7 L1958.9 1696.7 L1960.2 1696.7 L1961.6 1696.7 L1962.9 1696.7 L1964.3 1696.7 L1965.6 1696.7 L1967 1696.7 L1968.3 1696.7 L1969.7 1696.7 L1971 1696.7 L1971 1697.9 L1969.7 1697.9 L1968.3 1697.9 L1967 1697.9 L1965.6 1697.9 L1964.3 1697.9 L1962.9 1697.9 L1961.6 1697.9 L1960.2 1697.9 L1958.9 1698 L1957.6 1698.1 L1956.2 1698.1 L1954.9 1698.1 L1953.5 1698.2 L1952.2 1698.5 L1950.8 1698.6 L1949.5 1698.6 L1948.1 1698.8 L1946.8 1698.9 L1945.5 1699.1 L1944.1 1699.7 L1942.8 1700.2 L1941.4 1700 L1940.1 1700.1 L1938.7 1700.5 L1937.4 1700.7 L1936 1701.7 L1934.7 1702.7 L1933.4 1702.5 L1932 1702.3 L1930.7 1703.2 L1929.3 1703.7 L1928 1704.9 L1926.6 1706.9 L1925.3 1706.7 L1923.9 1706 L1922.6 1707.3 L1921.2 1708.5 L1919.9 1709.9 L1918.6 1712.9 L1917.2 1713.2 L1915.9 1711.2 L1914.5 1712.5 L1913.2 1714.9 L1911.8 1716.1 L1910.5 1719.6 L1909.1 1720.7 L1907.8 1717.3 L1906.5 1717.9 L1905.1 1721.2 L1903.8 1721.7 L1902.4 1722.2 L1901.1 1722.2 L1899.7 1719.6 L1898.4 1717.5 L1897 1720.5 L1895.7 1719.5 L1894.4 1712.1 L1893 1709.9 L1891.7 1707.1 L1890.3 1706.5 L1889 1709.1 L1887.6 1711 L1886.3 1710.5 L1884.9 1710.7 L1883.6 1709.1 L1882.3 1706.3 L1880.9 1706.7 L1879.6 1706.8 L1878.2 1705.2 L1876.9 1704.4 L1875.5 1703.4 L1874.2 1701.9 Z" fill="#25222d"/>
<path shape-rendering="geometricPrecision" d="M1874.2 1743.2 L1875.5 1742.4 L1876.9 1742.1 L1878.2 1742.7 L1879.6 1740.7 L1880.9 1738.5 L1882.3 1737.5 L1883.6 1735.6 L1884.9 1736.8 L1886.3 1738.4 L1887.6 1736.4 L1889 1736.5 L1890.3 1737.2 L1891.7 1737.3 L1893 1738.1 L1894.4 1737 L1895.7 1727.8 L1897 1725.5 L1898.4 1724 L1899.7 1724 L1901.1 1726.6 L1902.4 1727.6 L1903.8 1725.2 L1905.1 1725.3 L1906.5 1724 L1907.8 1724.1 L1909.1 1729.9 L1910.5 1730.7 L1911.8 1730.6 L1913.2 1731.4 L1914.5 1729.8 L1915.9 1731.8 L1917.2 1735.7 L1918.6 1736.2 L1919.9 1737 L1921.2 1737.4 L1922.6 1736.5 L1923.9 1738.6 L1925.3 1740.7 L1926.6 1741.1 L1928 1742 L1929.3 1741.9 L1930.7 1741.6 L1932 1743.2 L1933.4 1744.1 L1934.7 1744.5 L1936 1745.2 L1937.4 1745 L1938.7 1745 L1940.1 1745.9 L1941.4 1746.3 L1942.8 1746.6 L1944.1 1746.9 L1945.5 1746.8 L1946.8 1746.9 L1948.1 1747.4 L1949.5 1747.6 L1950.8 1747.8 L1952.2 1747.9 L1953.5 1747.8 L1954.9 1747.9 L1956.2 1748 L1957.6 1748.1 L1958.9 1748.3 L1960.2 1748.3 L1961.6 1748.3 L1962.9 1748.3 L1964.3 1748.3 L1965.6 1748.3 L1967 1748.3 L1968.3 1748.3 L1969.7 1748.3 L1971 1748.3 L1971 1749.5 L1969.7 1749.5 L1968.3 1749.5 L1967 1749.5 L1965.6 1749.5 L1964.3 1749.5 L1962.9 1749.5 L1961.6 1749.5 L1960.2 1749.5 L1958.9 1749.5 L1957.6 1749.5 L1956.2 1749.6 L1954.9 1749.8 L1953.5 1749.9 L1952.2 1750.1 L1950.8 1750.1 L1949.5 1750 L1948.1 1750.2 L1946.8 1750.6 L1945.5 1750.9 L1944.1 1751.3 L1942.8 1751.5 L1941.4 1751.2 L1940.1 1751.4 L1938.7 1752.3 L1937.4 1752.8 L1936 1753.4 L1934.7 1753.9 L1933.4 1753.4 L1932 1753.5 L1930.7 1755.2 L1929.3 1756.2 L1928 1756.8 L1926.6 1757.7 L1925.3 1757.2 L1923.9 1757 L1922.6 1759.6 L1921.2 1761.7 L1919.9 1762.1 L1918.6 1763.2 L1917.2 1762.9 L1915.9 1762 L1914.5 1765.2 L1913.2 1768.9 L1911.8 1768.8 L1910.5 1769.3 L1909.1 1769.6 L1907.8 1767.8 L1906.5 1771 L1905.1 1773.8 L1903.8 1773.8 L1902.4 1772.9 L1901.1 1772.8 L1899.7 1770.2 L1898.4 1770.6 L1897 1773.8 L1895.7 1772.4 L1894.4 1762.5 L1893 1759.9 L1891.7 1758.3 L1890.3 1758.9 L1889 1762.1 L1887.6 1763.3 L1886.3 1761 L1884.9 1760.5 L1883.6 1760.1 L1882.3 1758.8 L1880.9 1759.3 L1879.6 1758.8 L1878.2 1756.2 L1876.9 1755 L1875.5 1754.6 L1874.2 1753.9 Z" fill="#25222d"/>
<rect x="1885" y="1833.5" width="344" height="26.5" fill="#8a6fe3"/>
<rect x="1885" y="1833.5" width="1" height="26.5" fill="#5f49b5"/>
<rect x="2228" y="1833.5" width="1" height="26.5" fill="#5f49b5"/>
<rect x="1885" y="1833.5" width="344" height="1" fill="#5f49b5"/>
<rect x="1885" y="1859" width="344" height="1" fill="#5f49b5"/>
<rect x="1885" y="1862.3" width="344" height="26.2" fill="#8a6fe3"/>
<rect x="1885" y="1862.3" width="1" height="26.2" fill="#5f49b5"/>
<rect x="2228" y="1862.3" width="1" height="26.2" fill="#5f49b5"/>
<rect x="1885" y="1862.3" width="344" height="1" fill="#5f49b5"/>
<rect x="1885" y="1887.5" width="344" height="1" fill="#5f49b5"/>
<rect x="1971" y="1833.5" width="1" height="4" fill="#2a2238"/>
<rect x="1971" y="1856" width="1" height="4" fill="#2a2238"/>
<rect x="2143" y="1833.5" width="1" height="4" fill="#2a2238"/>
<rect x="2143" y="1856" width="1" height="4" fill="#2a2238"/>
<rect x="1971" y="1862.3" width="1" height="4" fill="#2a2238"/>
<rect x="1971" y="1884.5" width="1" height="4" fill="#2a2238"/>
<rect x="2143" y="1862.3" width="1" height="4" fill="#2a2238"/>
<rect x="2143" y="1884.5" width="1" height="4" fill="#2a2238"/>
<rect x="14" y="218.6" width="3814" height="2.8" fill="#787878"/>
<rect x="14" y="247.5" width="3814" height="2.5" fill="#787878"/>
<rect x="14" y="328" width="3814" height="3" fill="#787878"/>
<rect x="14" y="356.5" width="3814" height="3" fill="#787878"/>
<rect x="14" y="385.3" width="3814" height="2.7" fill="#787878"/>
<rect x="14" y="414" width="3814" height="2.7" fill="#787878"/>
<rect x="14" y="442.4" width="3814" height="2.6" fill="#787878"/>
<rect x="14" y="496" width="3814" height="2.7" fill="#787878"/>
<rect x="14" y="550" width="3814" height="2.6" fill="#787878"/>
<rect x="14" y="682" width="3814" height="2.5" fill="#787878"/>
<rect x="14" y="814.5" width="3814" height="2.5" fill="#787878"/>
<rect x="14" y="946.3" width="3814" height="2.7" fill="#787878"/>
<rect x="14" y="975" width="3814" height="2.5" fill="#787878"/>
<rect x="14" y="1030" width="3814" height="2.5" fill="#787878"/>
<rect x="14" y="1059" width="3814" height="2.5" fill="#787878"/>
<rect x="14" y="1088" width="3814" height="2.5" fill="#787878"/>
<rect x="14" y="1117" width="3814" height="2.5" fill="#787878"/>
<rect x="14" y="1248" width="3814" height="2.5" fill="#787878"/>
<rect x="14" y="1380" width="3814" height="2.6" fill="#787878"/>
<rect x="14" y="1512.3" width="3814" height="2.5" fill="#787878"/>
<rect x="14" y="1644" width="3814" height="2.5" fill="#787878"/>
<rect x="14" y="1775.7" width="3814" height="2.3" fill="#787878"/>
<rect x="14" y="1831.3" width="3814" height="2.2" fill="#787878"/>
<rect x="14" y="1860" width="3814" height="2.3" fill="#787878"/>
<rect x="14" y="1888.5" width="3814" height="2.5" fill="#787878"/>
<rect x="14" y="1917.3" width="3814" height="2.7" fill="#787878"/>
<rect x="14" y="1971" width="3814" height="3" fill="#787878"/>
<rect x="14" y="1980" width="3814" height="4.5" fill="#787878"/>
<rect x="14" y="2010" width="3814" height="1" fill="#8a8a8a"/>
<rect x="335" y="200" width="1" height="1810" fill="#3f3f3f"/>
<path shape-rendering="geometricPrecision" d="M335.5 203.5 L348 210.5 L335.5 217.5 Z" fill="#d2d2d2" stroke="#333" stroke-width="1"/>
<rect x="351" y="202" width="65.29" height="16" fill="rgba(255,255,255,0.13)"/>
<rect x="508" y="200" width="1" height="1810" fill="#3f3f3f"/>
<path shape-rendering="geometricPrecision" d="M508.5 203.5 L521 210.5 L508.5 217.5 Z" fill="#d2d2d2" stroke="#333" stroke-width="1"/>
<rect x="524" y="202" width="80.8" height="16" fill="rgba(255,255,255,0.13)"/>
<rect x="852" y="200" width="1" height="1810" fill="#3f3f3f"/>
<path shape-rendering="geometricPrecision" d="M852.5 203.5 L865 210.5 L852.5 217.5 Z" fill="#d2d2d2" stroke="#333" stroke-width="1"/>
<rect x="868" y="202" width="104.62" height="16" fill="rgba(255,255,255,0.13)"/>
<rect x="1024" y="200" width="1" height="1810" fill="#3f3f3f"/>
<path shape-rendering="geometricPrecision" d="M1024.5 203.5 L1037 210.5 L1024.5 217.5 Z" fill="#d2d2d2" stroke="#333" stroke-width="1"/>
<rect x="1040" y="202" width="49.8" height="16" fill="rgba(255,255,255,0.13)"/>
<rect x="1196" y="200" width="1" height="1810" fill="#3f3f3f"/>
<path shape-rendering="geometricPrecision" d="M1196.5 203.5 L1209 210.5 L1196.5 217.5 Z" fill="#d2d2d2" stroke="#333" stroke-width="1"/>
<rect x="1212" y="202" width="45.49" height="16" fill="rgba(255,255,255,0.13)"/>
<rect x="1368" y="200" width="1" height="1810" fill="#3f3f3f"/>
<path shape-rendering="geometricPrecision" d="M1368.5 203.5 L1381 210.5 L1368.5 217.5 Z" fill="#d2d2d2" stroke="#333" stroke-width="1"/>
<rect x="1713" y="200" width="1" height="1810" fill="#3f3f3f"/>
<path shape-rendering="geometricPrecision" d="M1713.5 203.5 L1726 210.5 L1713.5 217.5 Z" fill="#d2d2d2" stroke="#333" stroke-width="1"/>
<rect x="1799" y="200" width="1" height="1810" fill="#3f3f3f"/>
<path shape-rendering="geometricPrecision" d="M1799.5 203.5 L1812 210.5 L1799.5 217.5 Z" fill="#d2d2d2" stroke="#333" stroke-width="1"/>
<rect x="1885" y="200" width="1" height="1810" fill="#3f3f3f"/>
<path shape-rendering="geometricPrecision" d="M1885.5 203.5 L1898 210.5 L1885.5 217.5 Z" fill="#d2d2d2" stroke="#333" stroke-width="1"/>
<rect x="2057" y="200" width="1" height="1810" fill="#3f3f3f"/>
<path shape-rendering="geometricPrecision" d="M2057.5 203.5 L2070 210.5 L2057.5 217.5 Z" fill="#d2d2d2" stroke="#333" stroke-width="1"/>
<rect x="2574" y="200" width="1" height="1810" fill="#3f3f3f"/>
<path shape-rendering="geometricPrecision" d="M2574.5 203.5 L2587 210.5 L2574.5 217.5 Z" fill="#d2d2d2" stroke="#333" stroke-width="1"/>
<rect x="2746" y="200" width="1" height="1810" fill="#3f3f3f"/>
<path shape-rendering="geometricPrecision" d="M2746.5 203.5 L2759 210.5 L2746.5 217.5 Z" fill="#d2d2d2" stroke="#333" stroke-width="1"/>
<rect x="2918" y="200" width="1" height="1810" fill="#3f3f3f"/>
<path shape-rendering="geometricPrecision" d="M2918.5 203.5 L2931 210.5 L2918.5 217.5 Z" fill="#d2d2d2" stroke="#333" stroke-width="1"/>
<rect x="3305" y="200" width="1" height="1810" fill="#3f3f3f"/>
<path shape-rendering="geometricPrecision" d="M3305.5 203.5 L3318 210.5 L3305.5 217.5 Z" fill="#d2d2d2" stroke="#333" stroke-width="1"/>
<rect x="14" y="202" width="28" height="16" fill="rgba(255,255,255,0.13)"/>
<rect x="3321" y="202" width="30" height="16" fill="rgba(255,255,255,0.13)"/>
<rect x="77" y="175" width="1" height="9" fill="#5a5a5a"/>
<rect x="77" y="175" width="3" height="1" fill="#5a5a5a"/>
<rect x="120" y="182" width="1" height="2" fill="#5a5a5a"/>
<rect x="163" y="175" width="1" height="9" fill="#5a5a5a"/>
<rect x="163" y="175" width="3" height="1" fill="#5a5a5a"/>
<rect x="206" y="182" width="1" height="2" fill="#5a5a5a"/>
<rect x="249" y="175" width="1" height="9" fill="#5a5a5a"/>
<rect x="249" y="175" width="3" height="1" fill="#5a5a5a"/>
<rect x="292" y="182" width="1" height="2" fill="#5a5a5a"/>
<rect x="335" y="175" width="1" height="9" fill="#5a5a5a"/>
<rect x="335" y="175" width="3" height="1" fill="#5a5a5a"/>
<rect x="378" y="182" width="1" height="2" fill="#5a5a5a"/>
<rect x="421" y="175" width="1" height="9" fill="#5a5a5a"/>
<rect x="421" y="175" width="3" height="1" fill="#5a5a5a"/>
<rect x="464" y="182" width="1" height="2" fill="#5a5a5a"/>
<rect x="508" y="175" width="1" height="9" fill="#5a5a5a"/>
<rect x="508" y="175" width="3" height="1" fill="#5a5a5a"/>
<rect x="551" y="182" width="1" height="2" fill="#5a5a5a"/>
<rect x="594" y="175" width="1" height="9" fill="#5a5a5a"/>
<rect x="594" y="175" width="3" height="1" fill="#5a5a5a"/>
<rect x="637" y="182" width="1" height="2" fill="#5a5a5a"/>
<rect x="680" y="175" width="1" height="9" fill="#5a5a5a"/>
<rect x="680" y="175" width="3" height="1" fill="#5a5a5a"/>
<rect x="723" y="182" width="1" height="2" fill="#5a5a5a"/>
<rect x="766" y="175" width="1" height="9" fill="#5a5a5a"/>
<rect x="766" y="175" width="3" height="1" fill="#5a5a5a"/>
<rect x="809" y="182" width="1" height="2" fill="#5a5a5a"/>
<rect x="852" y="175" width="1" height="9" fill="#5a5a5a"/>
<rect x="852" y="175" width="3" height="1" fill="#5a5a5a"/>
<rect x="895" y="182" width="1" height="2" fill="#5a5a5a"/>
<rect x="938" y="175" width="1" height="9" fill="#5a5a5a"/>
<rect x="938" y="175" width="3" height="1" fill="#5a5a5a"/>
<rect x="981" y="182" width="1" height="2" fill="#5a5a5a"/>
<rect x="1024" y="175" width="1" height="9" fill="#5a5a5a"/>
<rect x="1024" y="175" width="3" height="1" fill="#5a5a5a"/>
<rect x="1067" y="182" width="1" height="2" fill="#5a5a5a"/>
<rect x="1110" y="175" width="1" height="9" fill="#5a5a5a"/>
<rect x="1110" y="175" width="3" height="1" fill="#5a5a5a"/>
<rect x="1153" y="182" width="1" height="2" fill="#5a5a5a"/>
<rect x="1196" y="175" width="1" height="9" fill="#5a5a5a"/>
<rect x="1196" y="175" width="3" height="1" fill="#5a5a5a"/>
<rect x="1239" y="182" width="1" height="2" fill="#5a5a5a"/>
<rect x="1282" y="175" width="1" height="9" fill="#5a5a5a"/>
<rect x="1282" y="175" width="3" height="1" fill="#5a5a5a"/>
<rect x="1325" y="182" width="1" height="2" fill="#5a5a5a"/>
<rect x="1368" y="175" width="1" height="9" fill="#5a5a5a"/>
<rect x="1368" y="175" width="3" height="1" fill="#5a5a5a"/>
<rect x="1411" y="182" width="1" height="2" fill="#5a5a5a"/>
<rect x="1455" y="175" width="1" height="9" fill="#5a5a5a"/>
<rect x="1455" y="175" width="3" height="1" fill="#5a5a5a"/>
<rect x="1498" y="182" width="1" height="2" fill="#5a5a5a"/>
<rect x="1541" y="175" width="1" height="9" fill="#5a5a5a"/>
<rect x="1541" y="175" width="3" height="1" fill="#5a5a5a"/>
<rect x="1584" y="182" width="1" height="2" fill="#5a5a5a"/>
<rect x="1627" y="175" width="1" height="9" fill="#5a5a5a"/>
<rect x="1627" y="175" width="3" height="1" fill="#5a5a5a"/>
<rect x="1670" y="182" width="1" height="2" fill="#5a5a5a"/>
<rect x="1713" y="175" width="1" height="9" fill="#5a5a5a"/>
<rect x="1713" y="175" width="3" height="1" fill="#5a5a5a"/>
<rect x="1756" y="182" width="1" height="2" fill="#5a5a5a"/>
<rect x="1799" y="175" width="1" height="9" fill="#5a5a5a"/>
<rect x="1799" y="175" width="3" height="1" fill="#5a5a5a"/>
<rect x="1842" y="182" width="1" height="2" fill="#5a5a5a"/>
<rect x="1885" y="175" width="1" height="9" fill="#5a5a5a"/>
<rect x="1885" y="175" width="3" height="1" fill="#5a5a5a"/>
<rect x="1928" y="182" width="1" height="2" fill="#5a5a5a"/>
<rect x="1971" y="175" width="1" height="9" fill="#5a5a5a"/>
<rect x="1971" y="175" width="3" height="1" fill="#5a5a5a"/>
<rect x="2014" y="182" width="1" height="2" fill="#5a5a5a"/>
<rect x="2057" y="175" width="1" height="9" fill="#5a5a5a"/>
<rect x="2057" y="175" width="3" height="1" fill="#5a5a5a"/>
<rect x="2100" y="182" width="1" height="2" fill="#5a5a5a"/>
<rect x="2143" y="175" width="1" height="9" fill="#5a5a5a"/>
<rect x="2143" y="175" width="3" height="1" fill="#5a5a5a"/>
<rect x="2186" y="182" width="1" height="2" fill="#5a5a5a"/>
<rect x="2229" y="175" width="1" height="9" fill="#5a5a5a"/>
<rect x="2229" y="175" width="3" height="1" fill="#5a5a5a"/>
<rect x="2272" y="182" width="1" height="2" fill="#5a5a5a"/>
<rect x="2315" y="175" width="1" height="9" fill="#5a5a5a"/>
<rect x="2315" y="175" width="3" height="1" fill="#5a5a5a"/>
<rect x="2358" y="182" width="1" height="2" fill="#5a5a5a"/>
<rect x="2401" y="175" width="1" height="9" fill="#5a5a5a"/>
<rect x="2401" y="175" width="3" height="1" fill="#5a5a5a"/>
<rect x="2445" y="182" width="1" height="2" fill="#5a5a5a"/>
<rect x="2488" y="175" width="1" height="9" fill="#5a5a5a"/>
<rect x="2488" y="175" width="3" height="1" fill="#5a5a5a"/>
<rect x="2531" y="182" width="1" height="2" fill="#5a5a5a"/>
<rect x="2574" y="175" width="1" height="9" fill="#5a5a5a"/>
<rect x="2574" y="175" width="3" height="1" fill="#5a5a5a"/>
<rect x="2617" y="182" width="1" height="2" fill="#5a5a5a"/>
<rect x="2660" y="175" width="1" height="9" fill="#5a5a5a"/>
<rect x="2660" y="175" width="3" height="1" fill="#5a5a5a"/>
<rect x="2703" y="182" width="1" height="2" fill="#5a5a5a"/>
<rect x="2746" y="175" width="1" height="9" fill="#5a5a5a"/>
<rect x="2746" y="175" width="3" height="1" fill="#5a5a5a"/>
<rect x="2789" y="182" width="1" height="2" fill="#5a5a5a"/>
<rect x="2832" y="175" width="1" height="9" fill="#5a5a5a"/>
<rect x="2832" y="175" width="3" height="1" fill="#5a5a5a"/>
<rect x="2875" y="182" width="1" height="2" fill="#5a5a5a"/>
<rect x="2918" y="175" width="1" height="9" fill="#5a5a5a"/>
<rect x="2918" y="175" width="3" height="1" fill="#5a5a5a"/>
<rect x="2961" y="182" width="1" height="2" fill="#5a5a5a"/>
<rect x="3004" y="175" width="1" height="9" fill="#5a5a5a"/>
<rect x="3004" y="175" width="3" height="1" fill="#5a5a5a"/>
<rect x="3047" y="182" width="1" height="2" fill="#5a5a5a"/>
<rect x="3090" y="175" width="1" height="9" fill="#5a5a5a"/>
<rect x="3090" y="175" width="3" height="1" fill="#5a5a5a"/>
<rect x="3133" y="182" width="1" height="2" fill="#5a5a5a"/>
<rect x="3176" y="175" width="1" height="9" fill="#5a5a5a"/>
<rect x="3176" y="175" width="3" height="1" fill="#5a5a5a"/>
<rect x="3219" y="182" width="1" height="2" fill="#5a5a5a"/>
<rect x="3262" y="175" width="1" height="9" fill="#5a5a5a"/>
<rect x="3262" y="175" width="3" height="1" fill="#5a5a5a"/>
<rect x="3305" y="182" width="1" height="2" fill="#5a5a5a"/>
<rect x="3348" y="175" width="1" height="9" fill="#5a5a5a"/>
<rect x="3348" y="175" width="3" height="1" fill="#5a5a5a"/>
<rect x="3391" y="182" width="1" height="2" fill="#5a5a5a"/>
<rect x="3435" y="175" width="1" height="9" fill="#5a5a5a"/>
<rect x="3435" y="175" width="3" height="1" fill="#5a5a5a"/>
<rect x="3478" y="182" width="1" height="2" fill="#5a5a5a"/>
<rect x="852" y="184" width="1894" height="16" fill="#d3d3d3"/>
<rect x="852" y="184" width="1894" height="1" fill="#3a3a3a"/>
<rect x="852" y="199" width="1894" height="1" fill="#3a3a3a"/>
<path shape-rendering="geometricPrecision" d="M852.5 185.5 L865 192 L852.5 198.5 Z" fill="#d3d3d3" stroke="#333" stroke-width="1"/>
<path shape-rendering="geometricPrecision" d="M2745.5 185.5 L2733 192 L2745.5 198.5 Z" fill="#d3d3d3" stroke="#333" stroke-width="1"/>
<rect x="56" y="2014" width="1" height="9" fill="#555"/>
<rect x="56" y="2022" width="3" height="1" fill="#555"/>
<rect x="174" y="2014" width="1" height="9" fill="#555"/>
<rect x="174" y="2022" width="3" height="1" fill="#555"/>
<rect x="292" y="2014" width="1" height="9" fill="#555"/>
<rect x="292" y="2022" width="3" height="1" fill="#555"/>
<rect x="411" y="2014" width="1" height="9" fill="#555"/>
<rect x="411" y="2022" width="3" height="1" fill="#555"/>
<rect x="529" y="2014" width="1" height="9" fill="#555"/>
<rect x="529" y="2022" width="3" height="1" fill="#555"/>
<rect x="647" y="2014" width="1" height="9" fill="#555"/>
<rect x="647" y="2022" width="3" height="1" fill="#555"/>
<rect x="766" y="2014" width="1" height="9" fill="#555"/>
<rect x="766" y="2022" width="3" height="1" fill="#555"/>
<rect x="884" y="2014" width="1" height="9" fill="#555"/>
<rect x="884" y="2022" width="3" height="1" fill="#555"/>
<rect x="1003" y="2014" width="1" height="9" fill="#555"/>
<rect x="1003" y="2022" width="3" height="1" fill="#555"/>
<rect x="1121" y="2014" width="1" height="9" fill="#555"/>
<rect x="1121" y="2022" width="3" height="1" fill="#555"/>
<rect x="1239" y="2014" width="1" height="9" fill="#555"/>
<rect x="1239" y="2022" width="3" height="1" fill="#555"/>
<rect x="1358" y="2014" width="1" height="9" fill="#555"/>
<rect x="1358" y="2022" width="3" height="1" fill="#555"/>
<rect x="1476" y="2014" width="1" height="9" fill="#555"/>
<rect x="1476" y="2022" width="3" height="1" fill="#555"/>
<rect x="1594" y="2014" width="1" height="9" fill="#555"/>
<rect x="1594" y="2022" width="3" height="1" fill="#555"/>
<rect x="1713" y="2014" width="1" height="9" fill="#555"/>
<rect x="1713" y="2022" width="3" height="1" fill="#555"/>
<rect x="1831" y="2014" width="1" height="9" fill="#555"/>
<rect x="1831" y="2022" width="3" height="1" fill="#555"/>
<rect x="1950" y="2014" width="1" height="9" fill="#555"/>
<rect x="1950" y="2022" width="3" height="1" fill="#555"/>
<rect x="2068" y="2014" width="1" height="9" fill="#555"/>
<rect x="2068" y="2022" width="3" height="1" fill="#555"/>
<rect x="2186" y="2014" width="1" height="9" fill="#555"/>
<rect x="2186" y="2022" width="3" height="1" fill="#555"/>
<rect x="2305" y="2014" width="1" height="9" fill="#555"/>
<rect x="2305" y="2022" width="3" height="1" fill="#555"/>
<rect x="2423" y="2014" width="1" height="9" fill="#555"/>
<rect x="2423" y="2022" width="3" height="1" fill="#555"/>
<rect x="2542" y="2014" width="1" height="9" fill="#555"/>
<rect x="2542" y="2022" width="3" height="1" fill="#555"/>
<rect x="2660" y="2014" width="1" height="9" fill="#555"/>
<rect x="2660" y="2022" width="3" height="1" fill="#555"/>
<rect x="2778" y="2014" width="1" height="9" fill="#555"/>
<rect x="2778" y="2022" width="3" height="1" fill="#555"/>
<rect x="2897" y="2014" width="1" height="9" fill="#555"/>
<rect x="2897" y="2022" width="3" height="1" fill="#555"/>
<rect x="3015" y="2014" width="1" height="9" fill="#555"/>
<rect x="3015" y="2022" width="3" height="1" fill="#555"/>
<rect x="3133" y="2014" width="1" height="9" fill="#555"/>
<rect x="3133" y="2022" width="3" height="1" fill="#555"/>
<rect x="3252" y="2014" width="1" height="9" fill="#555"/>
<rect x="3252" y="2022" width="3" height="1" fill="#555"/>
<rect x="3370" y="2014" width="1" height="9" fill="#555"/>
<rect x="3370" y="2022" width="3" height="1" fill="#555"/>
<rect x="32" y="2011" width="1" height="3" fill="#555"/>
<rect x="79" y="2011" width="1" height="3" fill="#555"/>
<rect x="103" y="2011" width="1" height="3" fill="#555"/>
<rect x="127" y="2011" width="1" height="3" fill="#555"/>
<rect x="150" y="2011" width="1" height="3" fill="#555"/>
<rect x="198" y="2011" width="1" height="3" fill="#555"/>
<rect x="221" y="2011" width="1" height="3" fill="#555"/>
<rect x="245" y="2011" width="1" height="3" fill="#555"/>
<rect x="269" y="2011" width="1" height="3" fill="#555"/>
<rect x="316" y="2011" width="1" height="3" fill="#555"/>
<rect x="340" y="2011" width="1" height="3" fill="#555"/>
<rect x="363" y="2011" width="1" height="3" fill="#555"/>
<rect x="387" y="2011" width="1" height="3" fill="#555"/>
<rect x="434" y="2011" width="1" height="3" fill="#555"/>
<rect x="458" y="2011" width="1" height="3" fill="#555"/>
<rect x="482" y="2011" width="1" height="3" fill="#555"/>
<rect x="505" y="2011" width="1" height="3" fill="#555"/>
<rect x="553" y="2011" width="1" height="3" fill="#555"/>
<rect x="576" y="2011" width="1" height="3" fill="#555"/>
<rect x="600" y="2011" width="1" height="3" fill="#555"/>
<rect x="624" y="2011" width="1" height="3" fill="#555"/>
<rect x="671" y="2011" width="1" height="3" fill="#555"/>
<rect x="695" y="2011" width="1" height="3" fill="#555"/>
<rect x="718" y="2011" width="1" height="3" fill="#555"/>
<rect x="742" y="2011" width="1" height="3" fill="#555"/>
<rect x="790" y="2011" width="1" height="3" fill="#555"/>
<rect x="813" y="2011" width="1" height="3" fill="#555"/>
<rect x="837" y="2011" width="1" height="3" fill="#555"/>
<rect x="861" y="2011" width="1" height="3" fill="#555"/>
<rect x="908" y="2011" width="1" height="3" fill="#555"/>
<rect x="932" y="2011" width="1" height="3" fill="#555"/>
<rect x="955" y="2011" width="1" height="3" fill="#555"/>
<rect x="979" y="2011" width="1" height="3" fill="#555"/>
<rect x="1026" y="2011" width="1" height="3" fill="#555"/>
<rect x="1050" y="2011" width="1" height="3" fill="#555"/>
<rect x="1074" y="2011" width="1" height="3" fill="#555"/>
<rect x="1097" y="2011" width="1" height="3" fill="#555"/>
<rect x="1145" y="2011" width="1" height="3" fill="#555"/>
<rect x="1168" y="2011" width="1" height="3" fill="#555"/>
<rect x="1192" y="2011" width="1" height="3" fill="#555"/>
<rect x="1216" y="2011" width="1" height="3" fill="#555"/>
<rect x="1263" y="2011" width="1" height="3" fill="#555"/>
<rect x="1287" y="2011" width="1" height="3" fill="#555"/>
<rect x="1310" y="2011" width="1" height="3" fill="#555"/>
<rect x="1334" y="2011" width="1" height="3" fill="#555"/>
<rect x="1381" y="2011" width="1" height="3" fill="#555"/>
<rect x="1405" y="2011" width="1" height="3" fill="#555"/>
<rect x="1429" y="2011" width="1" height="3" fill="#555"/>
<rect x="1452" y="2011" width="1" height="3" fill="#555"/>
<rect x="1500" y="2011" width="1" height="3" fill="#555"/>
<rect x="1523" y="2011" width="1" height="3" fill="#555"/>
<rect x="1547" y="2011" width="1" height="3" fill="#555"/>
<rect x="1571" y="2011" width="1" height="3" fill="#555"/>
<rect x="1618" y="2011" width="1" height="3" fill="#555"/>
<rect x="1642" y="2011" width="1" height="3" fill="#555"/>
<rect x="1666" y="2011" width="1" height="3" fill="#555"/>
<rect x="1689" y="2011" width="1" height="3" fill="#555"/>
<rect x="1737" y="2011" width="1" height="3" fill="#555"/>
<rect x="1760" y="2011" width="1" height="3" fill="#555"/>
<rect x="1784" y="2011" width="1" height="3" fill="#555"/>
<rect x="1808" y="2011" width="1" height="3" fill="#555"/>
<rect x="1855" y="2011" width="1" height="3" fill="#555"/>
<rect x="1879" y="2011" width="1" height="3" fill="#555"/>
<rect x="1902" y="2011" width="1" height="3" fill="#555"/>
<rect x="1926" y="2011" width="1" height="3" fill="#555"/>
<rect x="1973" y="2011" width="1" height="3" fill="#555"/>
<rect x="1997" y="2011" width="1" height="3" fill="#555"/>
<rect x="2021" y="2011" width="1" height="3" fill="#555"/>
<rect x="2044" y="2011" width="1" height="3" fill="#555"/>
<rect x="2092" y="2011" width="1" height="3" fill="#555"/>
<rect x="2115" y="2011" width="1" height="3" fill="#555"/>
<rect x="2139" y="2011" width="1" height="3" fill="#555"/>
<rect x="2163" y="2011" width="1" height="3" fill="#555"/>
<rect x="2210" y="2011" width="1" height="3" fill="#555"/>
<rect x="2234" y="2011" width="1" height="3" fill="#555"/>
<rect x="2257" y="2011" width="1" height="3" fill="#555"/>
<rect x="2281" y="2011" width="1" height="3" fill="#555"/>
<rect x="2328" y="2011" width="1" height="3" fill="#555"/>
<rect x="2352" y="2011" width="1" height="3" fill="#555"/>
<rect x="2376" y="2011" width="1" height="3" fill="#555"/>
<rect x="2399" y="2011" width="1" height="3" fill="#555"/>
<rect x="2447" y="2011" width="1" height="3" fill="#555"/>
<rect x="2471" y="2011" width="1" height="3" fill="#555"/>
<rect x="2494" y="2011" width="1" height="3" fill="#555"/>
<rect x="2518" y="2011" width="1" height="3" fill="#555"/>
<rect x="2565" y="2011" width="1" height="3" fill="#555"/>
<rect x="2589" y="2011" width="1" height="3" fill="#555"/>
<rect x="2613" y="2011" width="1" height="3" fill="#555"/>
<rect x="2636" y="2011" width="1" height="3" fill="#555"/>
<rect x="2684" y="2011" width="1" height="3" fill="#555"/>
<rect x="2707" y="2011" width="1" height="3" fill="#555"/>
<rect x="2731" y="2011" width="1" height="3" fill="#555"/>
<rect x="2755" y="2011" width="1" height="3" fill="#555"/>
<rect x="2802" y="2011" width="1" height="3" fill="#555"/>
<rect x="2826" y="2011" width="1" height="3" fill="#555"/>
<rect x="2849" y="2011" width="1" height="3" fill="#555"/>
<rect x="2873" y="2011" width="1" height="3" fill="#555"/>
<rect x="2920" y="2011" width="1" height="3" fill="#555"/>
<rect x="2944" y="2011" width="1" height="3" fill="#555"/>
<rect x="2968" y="2011" width="1" height="3" fill="#555"/>
<rect x="2991" y="2011" width="1" height="3" fill="#555"/>
<rect x="3039" y="2011" width="1" height="3" fill="#555"/>
<rect x="3062" y="2011" width="1" height="3" fill="#555"/>
<rect x="3086" y="2011" width="1" height="3" fill="#555"/>
<rect x="3110" y="2011" width="1" height="3" fill="#555"/>
<rect x="3157" y="2011" width="1" height="3" fill="#555"/>
<rect x="3181" y="2011" width="1" height="3" fill="#555"/>
<rect x="3204" y="2011" width="1" height="3" fill="#555"/>
<rect x="3228" y="2011" width="1" height="3" fill="#555"/>
<rect x="3275" y="2011" width="1" height="3" fill="#555"/>
<rect x="3299" y="2011" width="1" height="3" fill="#555"/>
<rect x="3323" y="2011" width="1" height="3" fill="#555"/>
<rect x="3347" y="2011" width="1" height="3" fill="#555"/>
<rect x="3394" y="2011" width="1" height="3" fill="#555"/>
<rect x="3418" y="2011" width="1" height="3" fill="#555"/>
<rect x="3441" y="2011" width="1" height="3" fill="#555"/>
<rect x="3465" y="2011" width="1" height="3" fill="#555"/>
<path shape-rendering="geometricPrecision" d="M846 2012 L852 2012 L852 2018 Z" fill="#dff"/>
<path shape-rendering="geometricPrecision" d="M2746 2012 L2752 2018 L2746 2018 Z" fill="#dff"/>
<rect x="14" y="131" width="3812" height="18.5" fill="#a8a8a8"/>
<rect x="14" y="149.5" width="204" height="2.5" fill="#767676"/>
<rect x="14" y="137.5" width="3588" height="2" fill="#8a7dd0"/>
<rect x="14" y="141" width="3588" height="1" fill="#a29ad2"/>
<path shape-rendering="geometricPrecision" d="M14 133.5H3600" stroke="#6f6fc8" stroke-width="1" stroke-dasharray="2 5" fill="none"/>
<rect x="193" y="131" width="1" height="18" fill="#444"/>
<rect x="3647" y="131" width="1" height="18" fill="#555"/>
<rect x="370" y="132" width="1" height="17" fill="#555"/>
<rect x="490" y="132" width="1" height="17" fill="#555"/>
<rect x="731" y="132" width="1" height="17" fill="#555"/>
<rect x="1090" y="132" width="1" height="17" fill="#555"/>
<rect x="1250" y="132" width="1" height="17" fill="#555"/>
<rect x="1337" y="132" width="1" height="17" fill="#555"/>
<rect x="3333" y="132" width="1" height="17" fill="#555"/>
<rect x="3421" y="132" width="1" height="17" fill="#555"/>
<path shape-rendering="geometricPrecision" d="M217.5 132 V146 Q217.5 150.5 222 150.5 H3822 Q3826.5 150.5 3826.5 146 V135" stroke="#3c3c3c" stroke-width="3" fill="none"/>
<rect x="2494" y="200" width="2" height="1810" fill="#111"/>
</g></svg>
<div class="t" style="left:167.5px;top:364.68px;font-size:14.5px;line-height:17.4px;color:#2a2140;-webkit-text-stroke:0.4px #2a2140;width:81px;overflow:hidden;letter-spacing:0.65px;">Vocal Pad</div>
<div class="t" style="left:253.5px;top:364.68px;font-size:14.5px;line-height:17.4px;color:#2a2140;-webkit-text-stroke:0.4px #2a2140;width:81px;overflow:hidden;letter-spacing:0.65px;">Vocal Pad</div>
<div class="t" style="left:339.5px;top:364.68px;font-size:14.5px;line-height:17.4px;color:#2a2140;-webkit-text-stroke:0.4px #2a2140;width:81px;overflow:hidden;letter-spacing:0.65px;">Vocal Pad</div>
<div class="t" style="left:425.5px;top:364.68px;font-size:14.5px;line-height:17.4px;color:#2a2140;-webkit-text-stroke:0.4px #2a2140;width:82px;overflow:hidden;letter-spacing:0.65px;">Vocal Pad</div>
<div class="t" style="left:512.5px;top:364.68px;font-size:14.5px;line-height:17.4px;color:#2a2140;-webkit-text-stroke:0.4px #2a2140;width:81px;overflow:hidden;letter-spacing:0.65px;">Vocal Pad</div>
<div class="t" style="left:598.5px;top:364.68px;font-size:14.5px;line-height:17.4px;color:#2a2140;-webkit-text-stroke:0.4px #2a2140;width:81px;overflow:hidden;letter-spacing:0.65px;">Vocal Pad</div>
<div class="t" style="left:684.5px;top:364.68px;font-size:14.5px;line-height:17.4px;color:#2a2140;-webkit-text-stroke:0.4px #2a2140;width:81px;overflow:hidden;letter-spacing:0.65px;">Vocal Pad</div>
<div class="t" style="left:770.5px;top:364.68px;font-size:14.5px;line-height:17.4px;color:#2a2140;-webkit-text-stroke:0.4px #2a2140;width:81px;overflow:hidden;letter-spacing:0.65px;">Vocal Pad</div>
<div class="t" style="left:856.5px;top:364.68px;font-size:14.5px;line-height:17.4px;color:#2a2140;-webkit-text-stroke:0.4px #2a2140;width:81px;overflow:hidden;letter-spacing:0.65px;">Vocal Pad</div>
<div class="t" style="left:942.5px;top:364.68px;font-size:14.5px;line-height:17.4px;color:#2a2140;-webkit-text-stroke:0.4px #2a2140;width:81px;overflow:hidden;letter-spacing:0.65px;">Vocal Pad</div>
<div class="t" style="left:1028.5px;top:364.68px;font-size:14.5px;line-height:17.4px;color:#2a2140;-webkit-text-stroke:0.4px #2a2140;width:81px;overflow:hidden;letter-spacing:0.65px;">Vocal Pad</div>
<div class="t" style="left:1114.5px;top:364.68px;font-size:14.5px;line-height:17.4px;color:#2a2140;-webkit-text-stroke:0.4px #2a2140;width:81px;overflow:hidden;letter-spacing:0.65px;">Vocal Pad</div>
<div class="t" style="left:18.5px;top:393.28px;font-size:14.5px;line-height:17.4px;color:#2a2140;-webkit-text-stroke:0.4px #2a2140;width:58px;overflow:hidden;letter-spacing:0.65px;">... Vocal</div>
<div class="t" style="left:81.5px;top:393.28px;font-size:14.5px;line-height:17.4px;color:#2a2140;-webkit-text-stroke:0.4px #2a2140;width:81px;overflow:hidden;letter-spacing:0.65px;">Vocal Tecture 1</div>
<div class="t" style="left:167.5px;top:393.28px;font-size:14.5px;line-height:17.4px;color:#2a2140;-webkit-text-stroke:0.4px #2a2140;width:81px;overflow:hidden;letter-spacing:0.65px;">Vocal Tecture 1</div>
<div class="t" style="left:253.5px;top:393.28px;font-size:14.5px;line-height:17.4px;color:#2a2140;-webkit-text-stroke:0.4px #2a2140;width:81px;overflow:hidden;letter-spacing:0.65px;">Vocal Tecture 1</div>
<div class="t" style="left:339.5px;top:393.28px;font-size:14.5px;line-height:17.4px;color:#2a2140;-webkit-text-stroke:0.4px #2a2140;width:81px;overflow:hidden;letter-spacing:0.65px;">Vocal Tecture 1</div>
<div class="t" style="left:425.5px;top:393.28px;font-size:14.5px;line-height:17.4px;color:#2a2140;-webkit-text-stroke:0.4px #2a2140;width:82px;overflow:hidden;letter-spacing:0.65px;">Vocal Tecture 1</div>
<div class="t" style="left:512.5px;top:393.28px;font-size:14.5px;line-height:17.4px;color:#2a2140;-webkit-text-stroke:0.4px #2a2140;width:81px;overflow:hidden;letter-spacing:0.65px;">Vocal Tecture 1</div>
<div class="t" style="left:598.5px;top:393.28px;font-size:14.5px;line-height:17.4px;color:#2a2140;-webkit-text-stroke:0.4px #2a2140;width:81px;overflow:hidden;letter-spacing:0.65px;">Vocal Tecture 1</div>
<div class="t" style="left:684.5px;top:393.28px;font-size:14.5px;line-height:17.4px;color:#2a2140;-webkit-text-stroke:0.4px #2a2140;width:81px;overflow:hidden;letter-spacing:0.65px;">Vocal Tecture 1</div>
<div class="t" style="left:770.5px;top:393.28px;font-size:14.5px;line-height:17.4px;color:#2a2140;-webkit-text-stroke:0.4px #2a2140;width:81px;overflow:hidden;letter-spacing:0.65px;">Vocal Tecture 1</div>
<div class="t" style="left:856.5px;top:393.28px;font-size:14.5px;line-height:17.4px;color:#2a2140;-webkit-text-stroke:0.4px #2a2140;width:81px;overflow:hidden;letter-spacing:0.65px;">Vocal Tecture 1</div>
<div class="t" style="left:942.5px;top:393.28px;font-size:14.5px;line-height:17.4px;color:#2a2140;-webkit-text-stroke:0.4px #2a2140;width:81px;overflow:hidden;letter-spacing:0.65px;">Vocal Tecture 1</div>
<div class="t" style="left:1028.5px;top:393.28px;font-size:14.5px;line-height:17.4px;color:#2a2140;-webkit-text-stroke:0.4px #2a2140;width:81px;overflow:hidden;letter-spacing:0.65px;">Vocal Tecture 1</div>
<div class="t" style="left:1114.5px;top:393.28px;font-size:14.5px;line-height:17.4px;color:#2a2140;-webkit-text-stroke:0.4px #2a2140;width:81px;overflow:hidden;letter-spacing:0.65px;">Vocal Tecture 1</div>
<div class="t" style="left:18.5px;top:421.83px;font-size:14.5px;line-height:17.4px;color:#2a2140;-webkit-text-stroke:0.4px #2a2140;width:144px;overflow:hidden;letter-spacing:0.65px;">... Vocal Texture 2</div>
<div class="t" style="left:167.5px;top:421.83px;font-size:14.5px;line-height:17.4px;color:#2a2140;-webkit-text-stroke:0.4px #2a2140;width:167px;overflow:hidden;letter-spacing:0.65px;">Vocal Texture 2</div>
<div class="t" style="left:339.5px;top:421.83px;font-size:14.5px;line-height:17.4px;color:#2a2140;-webkit-text-stroke:0.4px #2a2140;width:168px;overflow:hidden;letter-spacing:0.65px;">Vocal Texture 2</div>
<div class="t" style="left:512.5px;top:421.83px;font-size:14.5px;line-height:17.4px;color:#2a2140;-webkit-text-stroke:0.4px #2a2140;width:167px;overflow:hidden;letter-spacing:0.65px;">Vocal Texture 2</div>
<div class="t" style="left:684.5px;top:421.83px;font-size:14.5px;line-height:17.4px;color:#2a2140;-webkit-text-stroke:0.4px #2a2140;width:167px;overflow:hidden;letter-spacing:0.65px;">Vocal Texture 2</div>
<div class="t" style="left:856.5px;top:421.83px;font-size:14.5px;line-height:17.4px;color:#2a2140;-webkit-text-stroke:0.4px #2a2140;width:167px;overflow:hidden;letter-spacing:0.65px;">Vocal Texture 2</div>
<div class="t" style="left:1028.5px;top:421.83px;font-size:14.5px;line-height:17.4px;color:#2a2140;-webkit-text-stroke:0.4px #2a2140;width:167px;overflow:hidden;letter-spacing:0.65px;">Vocal Texture 2</div>
<div class="t" style="left:18.5px;top:688.88px;font-size:14.5px;line-height:17.4px;color:#2a2140;-webkit-text-stroke:0.4px #2a2140;width:316px;overflow:hidden;letter-spacing:0.65px;">... Pluck Arp Melody</div>
<div class="t" style="left:339.5px;top:688.88px;font-size:14.5px;line-height:17.4px;color:#2a2140;-webkit-text-stroke:0.4px #2a2140;width:168px;overflow:hidden;letter-spacing:0.65px;">Pluck Arp Melody</div>
<div class="t" style="left:18.5px;top:821.38px;font-size:14.5px;line-height:17.4px;color:#2a2140;-webkit-text-stroke:0.4px #2a2140;width:316px;overflow:hidden;letter-spacing:0.65px;">... Pluck Arp</div>
<div class="t" style="left:339.5px;top:821.38px;font-size:14.5px;line-height:17.4px;color:#2a2140;-webkit-text-stroke:0.4px #2a2140;width:168px;overflow:hidden;letter-spacing:0.65px;">Pluck Arp</div>
<div class="t" style="left:1200.5px;top:1038.03px;font-size:14.5px;line-height:17.4px;color:#2a2140;-webkit-text-stroke:0.4px #2a2140;width:340px;overflow:hidden;letter-spacing:0.65px;">Break Pad 1</div>
<div class="t" style="left:1200.5px;top:1067.03px;font-size:14.5px;line-height:17.4px;color:#2a2140;-webkit-text-stroke:0.4px #2a2140;width:340px;overflow:hidden;letter-spacing:0.65px;">Break Pad 2</div>
<div class="t" style="left:1200.5px;top:1096.03px;font-size:14.5px;line-height:17.4px;color:#2a2140;-webkit-text-stroke:0.4px #2a2140;width:340px;overflow:hidden;letter-spacing:0.65px;">Break Pad 3</div>
<div class="t" style="left:339.5px;top:1254.88px;font-size:14.5px;line-height:17.4px;color:#2a2140;-webkit-text-stroke:0.4px #2a2140;width:168px;overflow:hidden;letter-spacing:0.65px;">Pad Atmo</div>
<div class="t" style="left:1028.5px;top:1254.88px;font-size:14.5px;line-height:17.4px;color:#2a2140;-webkit-text-stroke:0.4px #2a2140;width:167px;overflow:hidden;letter-spacing:0.65px;">Pad Atmo Break</div>
<div class="t" style="left:1024.5px;top:1519.18px;font-size:14.5px;line-height:17.4px;color:#2a2140;-webkit-text-stroke:0.4px #2a2140;width:64px;overflow:hidden;letter-spacing:0.65px;">Synth Atmo 1</div>
<div class="t" style="left:1110.5px;top:1519.18px;font-size:14.5px;line-height:17.4px;color:#2a2140;-webkit-text-stroke:0.4px #2a2140;width:64px;overflow:hidden;letter-spacing:0.65px;">Synth Atmo 1</div>
<div class="t" style="left:18.5px;top:1650.88px;font-size:14.5px;line-height:17.4px;color:#2a2140;-webkit-text-stroke:0.4px #2a2140;width:58px;overflow:hidden;letter-spacing:0.65px;">... Synth</div>
<div class="t" style="left:318.5px;top:1650.88px;font-size:14.5px;line-height:17.4px;color:#2a2140;-webkit-text-stroke:0.4px #2a2140;width:102px;overflow:hidden;letter-spacing:0.65px;">Synth Atmo 2</div>
<div class="t" style="left:834.5px;top:1650.88px;font-size:14.5px;line-height:17.4px;color:#2a2140;-webkit-text-stroke:0.4px #2a2140;width:103px;overflow:hidden;letter-spacing:0.65px;">Synth Atmo 2</div>
<div class="t" style="left:1007.5px;top:1650.88px;font-size:14.5px;line-height:17.4px;color:#2a2140;-webkit-text-stroke:0.4px #2a2140;width:81px;overflow:hidden;letter-spacing:0.65px;">Synth Atmo 2</div>
<div class="t" style="left:1093.5px;top:1650.88px;font-size:14.5px;line-height:17.4px;color:#2a2140;-webkit-text-stroke:0.4px #2a2140;width:102px;overflow:hidden;letter-spacing:0.65px;">Synth Atmo 2</div>
<div class="t" style="left:1351.5px;top:1650.88px;font-size:14.5px;line-height:17.4px;color:#2a2140;-webkit-text-stroke:0.4px #2a2140;width:103px;overflow:hidden;letter-spacing:0.65px;">Synth Atmo 2</div>
<div class="t" style="left:1695.5px;top:1650.88px;font-size:14.5px;line-height:17.4px;color:#2a2140;-webkit-text-stroke:0.4px #2a2140;width:103px;overflow:hidden;letter-spacing:0.65px;">Synth Atmo 2</div>
<div class="t" style="left:2212.5px;top:1650.88px;font-size:14.5px;line-height:17.4px;color:#2a2140;-webkit-text-stroke:0.4px #2a2140;width:102px;overflow:hidden;letter-spacing:0.65px;">Synth Atmo 2</div>
<div class="t" style="left:2384.5px;top:1650.88px;font-size:14.5px;line-height:17.4px;color:#2a2140;-webkit-text-stroke:0.4px #2a2140;width:103px;overflow:hidden;letter-spacing:0.65px;">Synth Atmo 2</div>
<div class="t" style="left:2556.5px;top:1650.88px;font-size:14.5px;line-height:17.4px;color:#2a2140;-webkit-text-stroke:0.4px #2a2140;width:103px;overflow:hidden;letter-spacing:0.65px;">Synth Atmo 2</div>
<div class="t" style="left:2900.5px;top:1650.88px;font-size:14.5px;line-height:17.4px;color:#2a2140;-webkit-text-stroke:0.4px #2a2140;width:103px;overflow:hidden;letter-spacing:0.65px;">Synth Atmo 2</div>
<div class="t" style="left:1878.5px;top:1650.88px;font-size:14.5px;line-height:17.4px;color:#2a2140;-webkit-text-stroke:0.4px #2a2140;width:92px;overflow:hidden;letter-spacing:0.65px;">Synth Atmo 2</div>
<div class="t" style="left:1889.5px;top:1839.03px;font-size:14.5px;line-height:17.4px;color:#2a2140;-webkit-text-stroke:0.4px #2a2140;width:339px;overflow:hidden;letter-spacing:0.65px;">Lead Main</div>
<div class="t" style="left:1889.5px;top:1867.68px;font-size:14.5px;line-height:17.4px;color:#2a2140;-webkit-text-stroke:0.4px #2a2140;width:339px;overflow:hidden;letter-spacing:0.65px;">Lead Noise</div>
<div class="t" style="left:353px;top:201.53px;font-size:15.5px;line-height:18.6px;color:#1c1c1c;-webkit-text-stroke:0.35px #1c1c1c;">Mid Intro</div>
<div class="t" style="left:526px;top:201.53px;font-size:15.5px;line-height:18.6px;color:#1c1c1c;-webkit-text-stroke:0.35px #1c1c1c;">Drop Pluck</div>
<div class="t" style="left:870px;top:201.53px;font-size:15.5px;line-height:18.6px;color:#1c1c1c;-webkit-text-stroke:0.35px #1c1c1c;">Top Drums Off</div>
<div class="t" style="left:1042px;top:201.53px;font-size:15.5px;line-height:18.6px;color:#1c1c1c;-webkit-text-stroke:0.35px #1c1c1c;">Bridge</div>
<div class="t" style="left:1214px;top:201.53px;font-size:15.5px;line-height:18.6px;color:#1c1c1c;-webkit-text-stroke:0.35px #1c1c1c;">Break</div>
<div class="t" style="left:7.5px;top:201.53px;font-size:15.5px;line-height:18.6px;color:#1c1c1c;-webkit-text-stroke:0.35px #1c1c1c;clip-path:inset(0 0 0 6.5px);">Bass</div>
<div class="t" style="left:3323px;top:201.53px;font-size:15.5px;line-height:18.6px;color:#1c1c1c;-webkit-text-stroke:0.35px #1c1c1c;">End</div>
<div class="t" style="left:84px;top:167.78px;font-size:14.6px;line-height:17.52px;color:#2e2e2e;">13</div>
<div class="t" style="left:170px;top:167.78px;font-size:14.6px;line-height:17.52px;color:#2e2e2e;">17</div>
<div class="t" style="left:256px;top:167.78px;font-size:14.6px;line-height:17.52px;color:#2e2e2e;">21</div>
<div class="t" style="left:342px;top:167.78px;font-size:14.6px;line-height:17.52px;color:#2e2e2e;">25</div>
<div class="t" style="left:428px;top:167.78px;font-size:14.6px;line-height:17.52px;color:#2e2e2e;">29</div>
<div class="t" style="left:515px;top:167.78px;font-size:14.6px;line-height:17.52px;color:#2e2e2e;">33</div>
<div class="t" style="left:601px;top:167.78px;font-size:14.6px;line-height:17.52px;color:#2e2e2e;">37</div>
<div class="t" style="left:687px;top:167.78px;font-size:14.6px;line-height:17.52px;color:#2e2e2e;">41</div>
<div class="t" style="left:773px;top:167.78px;font-size:14.6px;line-height:17.52px;color:#2e2e2e;">45</div>
<div class="t" style="left:859px;top:167.78px;font-size:14.6px;line-height:17.52px;color:#2e2e2e;">49</div>
<div class="t" style="left:945px;top:167.78px;font-size:14.6px;line-height:17.52px;color:#2e2e2e;">53</div>
<div class="t" style="left:1031px;top:167.78px;font-size:14.6px;line-height:17.52px;color:#2e2e2e;">57</div>
<div class="t" style="left:1117px;top:167.78px;font-size:14.6px;line-height:17.52px;color:#2e2e2e;">61</div>
<div class="t" style="left:1203px;top:167.78px;font-size:14.6px;line-height:17.52px;color:#2e2e2e;">65</div>
<div class="t" style="left:1289px;top:167.78px;font-size:14.6px;line-height:17.52px;color:#2e2e2e;">69</div>
<div class="t" style="left:1375px;top:167.78px;font-size:14.6px;line-height:17.52px;color:#2e2e2e;">73</div>
<div class="t" style="left:1462px;top:167.78px;font-size:14.6px;line-height:17.52px;color:#2e2e2e;">77</div>
<div class="t" style="left:1548px;top:167.78px;font-size:14.6px;line-height:17.52px;color:#2e2e2e;">81</div>
<div class="t" style="left:1634px;top:167.78px;font-size:14.6px;line-height:17.52px;color:#2e2e2e;">85</div>
<div class="t" style="left:1720px;top:167.78px;font-size:14.6px;line-height:17.52px;color:#2e2e2e;">89</div>
<div class="t" style="left:1806px;top:167.78px;font-size:14.6px;line-height:17.52px;color:#2e2e2e;">93</div>
<div class="t" style="left:1892px;top:167.78px;font-size:14.6px;line-height:17.52px;color:#2e2e2e;">97</div>
<div class="t" style="left:1978px;top:167.78px;font-size:14.6px;line-height:17.52px;color:#2e2e2e;">101</div>
<div class="t" style="left:2064px;top:167.78px;font-size:14.6px;line-height:17.52px;color:#2e2e2e;">105</div>
<div class="t" style="left:2150px;top:167.78px;font-size:14.6px;line-height:17.52px;color:#2e2e2e;">109</div>
<div class="t" style="left:2236px;top:167.78px;font-size:14.6px;line-height:17.52px;color:#2e2e2e;">113</div>
<div class="t" style="left:2322px;top:167.78px;font-size:14.6px;line-height:17.52px;color:#2e2e2e;">117</div>
<div class="t" style="left:2408px;top:167.78px;font-size:14.6px;line-height:17.52px;color:#2e2e2e;">121</div>
<div class="t" style="left:2495px;top:167.78px;font-size:14.6px;line-height:17.52px;color:#2e2e2e;">125</div>
<div class="t" style="left:2581px;top:167.78px;font-size:14.6px;line-height:17.52px;color:#2e2e2e;">129</div>
<div class="t" style="left:2667px;top:167.78px;font-size:14.6px;line-height:17.52px;color:#2e2e2e;">133</div>
<div class="t" style="left:2753px;top:167.78px;font-size:14.6px;line-height:17.52px;color:#2e2e2e;">137</div>
<div class="t" style="left:2839px;top:167.78px;font-size:14.6px;line-height:17.52px;color:#2e2e2e;">141</div>
<div class="t" style="left:2925px;top:167.78px;font-size:14.6px;line-height:17.52px;color:#2e2e2e;">145</div>
<div class="t" style="left:3011px;top:167.78px;font-size:14.6px;line-height:17.52px;color:#2e2e2e;">149</div>
<div class="t" style="left:3097px;top:167.78px;font-size:14.6px;line-height:17.52px;color:#2e2e2e;">153</div>
<div class="t" style="left:3183px;top:167.78px;font-size:14.6px;line-height:17.52px;color:#2e2e2e;">157</div>
<div class="t" style="left:3269px;top:167.78px;font-size:14.6px;line-height:17.52px;color:#2e2e2e;">161</div>
<div class="t" style="left:3355px;top:167.78px;font-size:14.6px;line-height:17.52px;color:#2e2e2e;">165</div>
<div class="t" style="left:3442px;top:167.78px;font-size:14.6px;line-height:17.52px;color:#2e2e2e;">169</div>
<div class="t" style="left:60px;top:2015.58px;font-size:14.6px;line-height:17.52px;color:#2e2e2e;">0:20</div>
<div class="t" style="left:178px;top:2015.58px;font-size:14.6px;line-height:17.52px;color:#2e2e2e;">0:30</div>
<div class="t" style="left:296px;top:2015.58px;font-size:14.6px;line-height:17.52px;color:#2e2e2e;">0:40</div>
<div class="t" style="left:415px;top:2015.58px;font-size:14.6px;line-height:17.52px;color:#2e2e2e;">0:50</div>
<div class="t" style="left:533px;top:2015.58px;font-size:14.6px;line-height:17.52px;color:#2e2e2e;">1:00</div>
<div class="t" style="left:651px;top:2015.58px;font-size:14.6px;line-height:17.52px;color:#2e2e2e;">1:10</div>
<div class="t" style="left:770px;top:2015.58px;font-size:14.6px;line-height:17.52px;color:#2e2e2e;">1:20</div>
<div class="t" style="left:888px;top:2015.58px;font-size:14.6px;line-height:17.52px;color:#2e2e2e;">1:30</div>
<div class="t" style="left:1007px;top:2015.58px;font-size:14.6px;line-height:17.52px;color:#2e2e2e;">1:40</div>
<div class="t" style="left:1125px;top:2015.58px;font-size:14.6px;line-height:17.52px;color:#2e2e2e;">1:50</div>
<div class="t" style="left:1243px;top:2015.58px;font-size:14.6px;line-height:17.52px;color:#2e2e2e;">2:00</div>
<div class="t" style="left:1362px;top:2015.58px;font-size:14.6px;line-height:17.52px;color:#2e2e2e;">2:10</div>
<div class="t" style="left:1480px;top:2015.58px;font-size:14.6px;line-height:17.52px;color:#2e2e2e;">2:20</div>
<div class="t" style="left:1598px;top:2015.58px;font-size:14.6px;line-height:17.52px;color:#2e2e2e;">2:30</div>
<div class="t" style="left:1717px;top:2015.58px;font-size:14.6px;line-height:17.52px;color:#2e2e2e;">2:40</div>
<div class="t" style="left:1835px;top:2015.58px;font-size:14.6px;line-height:17.52px;color:#2e2e2e;">2:50</div>
<div class="t" style="left:1954px;top:2015.58px;font-size:14.6px;line-height:17.52px;color:#2e2e2e;">3:00</div>
<div class="t" style="left:2072px;top:2015.58px;font-size:14.6px;line-height:17.52px;color:#2e2e2e;">3:10</div>
<div class="t" style="left:2190px;top:2015.58px;font-size:14.6px;line-height:17.52px;color:#2e2e2e;">3:20</div>
<div class="t" style="left:2309px;top:2015.58px;font-size:14.6px;line-height:17.52px;color:#2e2e2e;">3:30</div>
<div class="t" style="left:2427px;top:2015.58px;font-size:14.6px;line-height:17.52px;color:#2e2e2e;">3:40</div>
<div class="t" style="left:2546px;top:2015.58px;font-size:14.6px;line-height:17.52px;color:#2e2e2e;">3:50</div>
<div class="t" style="left:2664px;top:2015.58px;font-size:14.6px;line-height:17.52px;color:#2e2e2e;">4:00</div>
<div class="t" style="left:2782px;top:2015.58px;font-size:14.6px;line-height:17.52px;color:#2e2e2e;">4:10</div>
<div class="t" style="left:2901px;top:2015.58px;font-size:14.6px;line-height:17.52px;color:#2e2e2e;">4:20</div>
<div class="t" style="left:3019px;top:2015.58px;font-size:14.6px;line-height:17.52px;color:#2e2e2e;">4:30</div>
<div class="t" style="left:3137px;top:2015.58px;font-size:14.6px;line-height:17.52px;color:#2e2e2e;">4:40</div>
<div class="t" style="left:3256px;top:2015.58px;font-size:14.6px;line-height:17.52px;color:#2e2e2e;">4:50</div>
<div class="t" style="left:3374px;top:2015.58px;font-size:14.6px;line-height:17.52px;color:#2e2e2e;">5:00</div>
<div style="left:3477px;top:184px;width:1px;height:1862px;background:#828282;"></div>
<div style="left:3478px;top:184px;width:3.4px;height:1862px;background:#a9a9a9;"></div>
<div style="left:3645.3px;top:221px;width:2.7px;height:1751px;background:#787878;"></div>
<div style="left:3481.4px;top:250px;width:7.5px;height:192.4px;background:#b09ae6;"></div>
<div style="left:3481.4px;top:552.6px;width:7.5px;height:1364.7px;background:#8a6fe3;"></div>
<div style="left:3488.8px;top:977.5px;width:7.5px;height:139.5px;background:#8a6fe3;"></div>
<div style="left:3488.8px;top:1778px;width:7.5px;height:110.5px;background:#8a6fe3;"></div>
<div style="left:3481.4px;top:221px;width:163.9px;height:26.5px;background:#7c7c7c;"></div>
<svg class="a" style="left:3484.6px;top:223px" width="22" height="22" viewBox="-11 -11 22 22"><circle r="9.2" fill="none" stroke="#2a2a2a" stroke-width="1.4"/><path d="M-3 -5.2 L5 0 L-3 5.2 Z" fill="#2a2a2a"/></svg>
<div class="t" style="left:3514.9px;top:226.1px;font-size:14.9px;line-height:17.88px;color:#2a2a2a;font-weight:700;">Sends</div>
<div class="bx" style="left:3651.3px;top:224.8px;width:68.5px;height:18.4px;background:#00ebfc;font-size:16px;line-height:17.4px;color:#111;-webkit-text-stroke:0.3px #111;">1</div>
<div class="bx" style="left:3726.4px;top:224.8px;width:30.5px;height:18.4px;background:#dcdcdc;font-size:15px;line-height:17.4px;color:#111;-webkit-text-stroke:0.3px #111;">S</div>
<div class="bx" style="left:3763.8px;top:224.8px;width:30.5px;height:18.4px;background:#dcdcdc;font-size:15.5px;line-height:17.4px;color:#111;-webkit-text-stroke:0.3px #111;"><i class="dot"></i></div>
<div style="left:3801px;top:224px;width:4.2px;height:20.5px;background:#2b2b2b;"></div>
<div style="left:3801px;top:233.22px;width:4.2px;height:11.28px;background:#18e755;"></div>
<div style="left:3801px;top:226.5px;width:4.2px;height:1px;background:#a6a6a6;"></div>
<div style="left:3801px;top:229.2px;width:4.2px;height:1px;background:#a6a6a6;"></div>
<div style="left:3807px;top:224px;width:4.2px;height:20.5px;background:#2b2b2b;"></div>
<div style="left:3807px;top:233.22px;width:4.2px;height:11.28px;background:#18e755;"></div>
<div style="left:3807px;top:226.5px;width:4.2px;height:1px;background:#a6a6a6;"></div>
<div style="left:3807px;top:229.2px;width:4.2px;height:1px;background:#a6a6a6;"></div>
<div style="left:3481.4px;top:250px;width:163.9px;height:78px;background:#b09ae6;"></div>
<svg class="a" style="left:3484.6px;top:252px" width="22" height="22" viewBox="-11 -11 22 22"><circle r="9.2" fill="none" stroke="#26203a" stroke-width="1.4"/><path d="M-4.6 -3.6H4.6 M-2 0H4.6 M-2 3.6H4.6" stroke="#26203a" stroke-width="1.5"/></svg>
<div class="t" style="left:3514.9px;top:255.1px;font-size:14.9px;line-height:17.88px;color:#26203a;font-weight:700;">Vocals</div>
<div class="bx" style="left:3651.3px;top:253.8px;width:68.5px;height:18.4px;background:#ffb900;font-size:16px;line-height:17.4px;color:#111;-webkit-text-stroke:0.3px #111;">2</div>
<div class="bx" style="left:3726.4px;top:253.8px;width:30.5px;height:18.4px;background:#dcdcdc;font-size:15px;line-height:17.4px;color:#111;-webkit-text-stroke:0.3px #111;">S</div>
<div class="bx" style="left:3651.3px;top:279.6px;width:68.5px;height:18px;background:linear-gradient(90deg,#00c3dc 83%,#dcdcdc 83%);font-size:15.5px;line-height:17px;color:#111;-webkit-text-stroke:0.3px #111;">0</div>
<div class="bx" style="left:3726.4px;top:279.6px;width:67.9px;height:18px;background:#dcdcdc;font-size:15px;line-height:17px;color:#111;-webkit-text-stroke:0.3px #111;">C</div>
<div class="bx" style="left:3651.3px;top:305.4px;width:44px;height:17.6px;background:#dcdcdc;font-size:15px;line-height:16.6px;color:#111;-webkit-text-stroke:0.3px #111;">&#8722;&#8734;</div>
<div class="bx" style="left:3701.3px;top:305.4px;width:43.3px;height:17.6px;background:#dcdcdc;font-size:15px;line-height:16.6px;color:#111;-webkit-text-stroke:0.3px #111;">&#8722;&#8734;</div>
<div class="bx" style="left:3750.6px;top:305.4px;width:43.7px;height:17.6px;background:#dcdcdc;font-size:15px;line-height:16.6px;color:#111;-webkit-text-stroke:0.3px #111;">&#8722;&#8734;</div>
<div style="left:3801px;top:253px;width:4.2px;height:72px;background:#2b2b2b;"></div>
<div style="left:3801px;top:283.24px;width:4.2px;height:41.76px;background:#18e755;"></div>
<div style="left:3801px;top:276.04px;width:4.2px;height:7.2px;background:#4f9a4a;"></div>
<div style="left:3801px;top:259px;width:4.2px;height:1px;background:#a6a6a6;"></div>
<div style="left:3807px;top:253px;width:4.2px;height:72px;background:#2b2b2b;"></div>
<div style="left:3807px;top:283.24px;width:4.2px;height:41.76px;background:#18e755;"></div>
<div style="left:3807px;top:276.04px;width:4.2px;height:7.2px;background:#4f9a4a;"></div>
<div style="left:3807px;top:259px;width:4.2px;height:1px;background:#a6a6a6;"></div>
<div style="left:3488.8px;top:331px;width:156.5px;height:25.5px;background:#b09ae6;"></div>
<div style="left:3487.2px;top:328.3px;width:1.6px;height:28.2px;background:#6f6f78;"></div>
<svg class="a" style="left:3492px;top:333px" width="22" height="22" viewBox="-11 -11 22 22"><circle r="9.2" fill="none" stroke="#26203a" stroke-width="1.4"/><path d="M-4.6 -3.6H4.6 M-4.6 0H4.6 M-4.6 3.6H4.6" stroke="#26203a" stroke-width="1.5"/></svg>
<div class="t" style="left:3522.3px;top:336.1px;font-size:14.9px;line-height:17.88px;color:#26203a;font-weight:700;">Main Vocal</div>
<div class="bx" style="left:3651.3px;top:334.8px;width:68.5px;height:18.4px;background:#cfcfcf;font-size:16px;line-height:17.4px;color:#111;-webkit-text-stroke:0.3px #111;">3</div>
<div class="bx" style="left:3726.4px;top:334.8px;width:30.5px;height:18.4px;background:#dcdcdc;font-size:15px;line-height:17.4px;color:#111;-webkit-text-stroke:0.3px #111;">S</div>
<div style="left:3801px;top:334px;width:4.2px;height:19.5px;background:#8c8c8c;"></div>
<div style="left:3801px;top:336.5px;width:4.2px;height:1px;background:#a6a6a6;"></div>
<div style="left:3801px;top:339px;width:4.2px;height:1px;background:#a6a6a6;"></div>
<div style="left:3807px;top:334px;width:4.2px;height:19.5px;background:#8c8c8c;"></div>
<div style="left:3807px;top:336.5px;width:4.2px;height:1px;background:#a6a6a6;"></div>
<div style="left:3807px;top:339px;width:4.2px;height:1px;background:#a6a6a6;"></div>
<div style="left:3488.8px;top:359.5px;width:156.5px;height:25.8px;background:#b09ae6;"></div>
<div style="left:3487.2px;top:356.8px;width:1.6px;height:28.5px;background:#6f6f78;"></div>
<svg class="a" style="left:3492px;top:361.5px" width="22" height="22" viewBox="-11 -11 22 22"><circle r="9.2" fill="none" stroke="#26203a" stroke-width="1.4"/><path d="M-3 -5.2 L5 0 L-3 5.2 Z" fill="#26203a"/></svg>
<div class="t" style="left:3522.3px;top:364.6px;font-size:14.9px;line-height:17.88px;color:#26203a;font-weight:700;">Vocal Pad</div>
<div class="bx" style="left:3651.3px;top:363.3px;width:68.5px;height:18.4px;background:#ffb900;font-size:16px;line-height:17.4px;color:#111;-webkit-text-stroke:0.3px #111;">9</div>
<div class="bx" style="left:3726.4px;top:363.3px;width:30.5px;height:18.4px;background:#dcdcdc;font-size:15px;line-height:17.4px;color:#111;-webkit-text-stroke:0.3px #111;">S</div>
<div class="bx" style="left:3763.8px;top:363.3px;width:30.5px;height:18.4px;background:#dcdcdc;font-size:15.5px;line-height:17.4px;color:#111;-webkit-text-stroke:0.3px #111;"><i class="dot"></i></div>
<div style="left:3801px;top:362.5px;width:4.2px;height:19.8px;background:#2b2b2b;"></div>
<div style="left:3801px;top:371.41px;width:4.2px;height:10.89px;background:#18e755;"></div>
<div style="left:3801px;top:365px;width:4.2px;height:1px;background:#a6a6a6;"></div>
<div style="left:3801px;top:367.7px;width:4.2px;height:1px;background:#a6a6a6;"></div>
<div style="left:3807px;top:362.5px;width:4.2px;height:19.8px;background:#2b2b2b;"></div>
<div style="left:3807px;top:371.41px;width:4.2px;height:10.89px;background:#18e755;"></div>
<div style="left:3807px;top:365px;width:4.2px;height:1px;background:#a6a6a6;"></div>
<div style="left:3807px;top:367.7px;width:4.2px;height:1px;background:#a6a6a6;"></div>
<div style="left:3488.8px;top:388px;width:156.5px;height:26px;background:#b09ae6;"></div>
<div style="left:3487.2px;top:385.3px;width:1.6px;height:28.7px;background:#6f6f78;"></div>
<svg class="a" style="left:3492px;top:390px" width="22" height="22" viewBox="-11 -11 22 22"><circle r="9.2" fill="none" stroke="#26203a" stroke-width="1.4"/><path d="M-3 -5.2 L5 0 L-3 5.2 Z" fill="#26203a"/></svg>
<div class="t" style="left:3522.3px;top:393.1px;font-size:14.9px;line-height:17.88px;color:#26203a;font-weight:700;">Vocal Tecture 1</div>
<div class="bx" style="left:3651.3px;top:391.8px;width:68.5px;height:18.4px;background:#ffb900;font-size:16px;line-height:17.4px;color:#111;-webkit-text-stroke:0.3px #111;">10</div>
<div class="bx" style="left:3726.4px;top:391.8px;width:30.5px;height:18.4px;background:#dcdcdc;font-size:15px;line-height:17.4px;color:#111;-webkit-text-stroke:0.3px #111;">S</div>
<div class="bx" style="left:3763.8px;top:391.8px;width:30.5px;height:18.4px;background:#dcdcdc;font-size:15.5px;line-height:17.4px;color:#111;-webkit-text-stroke:0.3px #111;"><i class="dot"></i></div>
<div style="left:3801px;top:391px;width:4.2px;height:20px;background:#2b2b2b;"></div>
<div style="left:3801px;top:401px;width:4.2px;height:10px;background:#18e755;"></div>
<div style="left:3801px;top:393.5px;width:4.2px;height:1px;background:#a6a6a6;"></div>
<div style="left:3801px;top:396.2px;width:4.2px;height:1px;background:#a6a6a6;"></div>
<div style="left:3807px;top:391px;width:4.2px;height:20px;background:#2b2b2b;"></div>
<div style="left:3807px;top:401px;width:4.2px;height:10px;background:#18e755;"></div>
<div style="left:3807px;top:393.5px;width:4.2px;height:1px;background:#a6a6a6;"></div>
<div style="left:3807px;top:396.2px;width:4.2px;height:1px;background:#a6a6a6;"></div>
<div style="left:3488.8px;top:416.7px;width:156.5px;height:25.7px;background:#b09ae6;"></div>
<div style="left:3487.2px;top:414px;width:1.6px;height:28.4px;background:#6f6f78;"></div>
<svg class="a" style="left:3492px;top:418.7px" width="22" height="22" viewBox="-11 -11 22 22"><circle r="9.2" fill="none" stroke="#26203a" stroke-width="1.4"/><path d="M-3 -5.2 L5 0 L-3 5.2 Z" fill="#26203a"/></svg>
<div class="t" style="left:3522.3px;top:421.8px;font-size:14.9px;line-height:17.88px;color:#26203a;font-weight:700;">Vocal Texture 2</div>
<div class="bx" style="left:3651.3px;top:420.5px;width:68.5px;height:18.4px;background:#ffb900;font-size:16px;line-height:17.4px;color:#111;-webkit-text-stroke:0.3px #111;">11</div>
<div class="bx" style="left:3726.4px;top:420.5px;width:30.5px;height:18.4px;background:#dcdcdc;font-size:15px;line-height:17.4px;color:#111;-webkit-text-stroke:0.3px #111;">S</div>
<div class="bx" style="left:3763.8px;top:420.5px;width:30.5px;height:18.4px;background:#dcdcdc;font-size:15.5px;line-height:17.4px;color:#111;-webkit-text-stroke:0.3px #111;"><i class="dot"></i></div>
<div style="left:3801px;top:419.7px;width:4.2px;height:19.7px;background:#2b2b2b;"></div>
<div style="left:3801px;top:429.55px;width:4.2px;height:9.85px;background:#18e755;"></div>
<div style="left:3801px;top:422.2px;width:4.2px;height:1px;background:#a6a6a6;"></div>
<div style="left:3801px;top:424.9px;width:4.2px;height:1px;background:#a6a6a6;"></div>
<div style="left:3807px;top:419.7px;width:4.2px;height:19.7px;background:#2b2b2b;"></div>
<div style="left:3807px;top:429.55px;width:4.2px;height:9.85px;background:#18e755;"></div>
<div style="left:3807px;top:422.2px;width:4.2px;height:1px;background:#a6a6a6;"></div>
<div style="left:3807px;top:424.9px;width:4.2px;height:1px;background:#a6a6a6;"></div>
<div style="left:3481.4px;top:445px;width:163.9px;height:51px;background:#5480e4;"></div>
<svg class="a" style="left:3484.6px;top:447px" width="22" height="22" viewBox="-11 -11 22 22"><circle r="9.2" fill="none" stroke="#26203a" stroke-width="1.4"/><path d="M-4.6 -3.6H4.6 M-4.6 0H4.6 M-4.6 3.6H4.6" stroke="#26203a" stroke-width="1.5"/></svg>
<div class="t" style="left:3514.9px;top:450.1px;font-size:14.9px;line-height:17.88px;color:#26203a;font-weight:700;">Drums</div>
<div class="bx" style="left:3651.3px;top:448.8px;width:68.5px;height:18.4px;background:#ffb900;font-size:16px;line-height:17.4px;color:#111;-webkit-text-stroke:0.3px #111;">12</div>
<div class="bx" style="left:3726.4px;top:448.8px;width:30.5px;height:18.4px;background:#dcdcdc;font-size:15px;line-height:17.4px;color:#111;-webkit-text-stroke:0.3px #111;">S</div>
<div class="bx" style="left:3651.3px;top:474.6px;width:68.5px;height:18px;background:linear-gradient(90deg,#00c3dc 83%,#dcdcdc 83%);font-size:15.5px;line-height:17px;color:#111;-webkit-text-stroke:0.3px #111;">0</div>
<div class="bx" style="left:3726.4px;top:474.6px;width:67.9px;height:18px;background:#dcdcdc;font-size:15px;line-height:17px;color:#111;-webkit-text-stroke:0.3px #111;">C</div>
<div style="left:3801px;top:448px;width:4.2px;height:45px;background:#2b2b2b;"></div>
<div style="left:3801px;top:461.5px;width:4.2px;height:31.5px;background:#18e755;"></div>
<div style="left:3801px;top:457px;width:4.2px;height:4.5px;background:#4f9a4a;"></div>
<div style="left:3801px;top:454px;width:4.2px;height:1px;background:#a6a6a6;"></div>
<div style="left:3807px;top:448px;width:4.2px;height:45px;background:#2b2b2b;"></div>
<div style="left:3807px;top:461.5px;width:4.2px;height:31.5px;background:#18e755;"></div>
<div style="left:3807px;top:457px;width:4.2px;height:4.5px;background:#4f9a4a;"></div>
<div style="left:3807px;top:454px;width:4.2px;height:1px;background:#a6a6a6;"></div>
<div style="left:3481.4px;top:498.7px;width:163.9px;height:51.3px;background:#624bad;"></div>
<svg class="a" style="left:3484.6px;top:500.7px" width="22" height="22" viewBox="-11 -11 22 22"><circle r="9.2" fill="none" stroke="#e9e2ff" stroke-width="1.4"/><path d="M-4.6 -3.6H4.6 M-4.6 0H4.6 M-4.6 3.6H4.6" stroke="#e9e2ff" stroke-width="1.5"/></svg>
<div class="t" style="left:3514.9px;top:503.8px;font-size:14.9px;line-height:17.88px;color:#e9e2ff;font-weight:700;">Bass</div>
<div class="bx" style="left:3651.3px;top:502.5px;width:68.5px;height:18.4px;background:#ffb900;font-size:16px;line-height:17.4px;color:#111;-webkit-text-stroke:0.3px #111;">26</div>
<div class="bx" style="left:3726.4px;top:502.5px;width:30.5px;height:18.4px;background:#dcdcdc;font-size:15px;line-height:17.4px;color:#111;-webkit-text-stroke:0.3px #111;">S</div>
<div class="bx" style="left:3651.3px;top:528.3px;width:68.5px;height:18px;background:linear-gradient(90deg,#00c3dc 83%,#dcdcdc 83%);font-size:15.5px;line-height:17px;color:#111;-webkit-text-stroke:0.3px #111;">0</div>
<div class="bx" style="left:3726.4px;top:528.3px;width:67.9px;height:18px;background:#dcdcdc;font-size:15px;line-height:17px;color:#111;-webkit-text-stroke:0.3px #111;">C</div>
<div style="left:3801px;top:501.7px;width:4.2px;height:45.3px;background:#2b2b2b;"></div>
<div style="left:3801px;top:518.91px;width:4.2px;height:28.09px;background:#18e755;"></div>
<div style="left:3801px;top:514.38px;width:4.2px;height:4.53px;background:#4f9a4a;"></div>
<div style="left:3801px;top:507.7px;width:4.2px;height:1px;background:#a6a6a6;"></div>
<div style="left:3807px;top:501.7px;width:4.2px;height:45.3px;background:#2b2b2b;"></div>
<div style="left:3807px;top:518.91px;width:4.2px;height:28.09px;background:#18e755;"></div>
<div style="left:3807px;top:514.38px;width:4.2px;height:4.53px;background:#4f9a4a;"></div>
<div style="left:3807px;top:507.7px;width:4.2px;height:1px;background:#a6a6a6;"></div>
<div style="left:3481.4px;top:552.6px;width:163.9px;height:129.4px;background:#8a6fe3;"></div>
<svg class="a" style="left:3484.6px;top:554.6px" width="22" height="22" viewBox="-11 -11 22 22"><circle r="9.2" fill="none" stroke="#26203a" stroke-width="1.4"/><path d="M-4.6 -3.6H4.6 M-2 0H4.6 M-2 3.6H4.6" stroke="#26203a" stroke-width="1.5"/></svg>
<div class="t" style="left:3514.9px;top:557.7px;font-size:14.9px;line-height:17.88px;color:#26203a;font-weight:700;">Instruments</div>
<div class="bx" style="left:3651.3px;top:556.4px;width:68.5px;height:18.4px;background:#ffb900;font-size:16px;line-height:17.4px;color:#111;-webkit-text-stroke:0.3px #111;">41</div>
<div class="bx" style="left:3726.4px;top:556.4px;width:30.5px;height:18.4px;background:#dcdcdc;font-size:15px;line-height:17.4px;color:#111;-webkit-text-stroke:0.3px #111;">S</div>
<div class="bx" style="left:3651.3px;top:582.2px;width:68.5px;height:18px;background:linear-gradient(90deg,#00c3dc 83%,#dcdcdc 83%);font-size:15.5px;line-height:17px;color:#111;-webkit-text-stroke:0.3px #111;">0</div>
<div class="bx" style="left:3726.4px;top:582.2px;width:67.9px;height:18px;background:#dcdcdc;font-size:15px;line-height:17px;color:#111;-webkit-text-stroke:0.3px #111;">C</div>
<div class="bx" style="left:3651.3px;top:608px;width:44px;height:17.6px;background:#dcdcdc;font-size:15px;line-height:16.6px;color:#111;-webkit-text-stroke:0.3px #111;">&#8722;&#8734;</div>
<div class="bx" style="left:3701.3px;top:608px;width:43.3px;height:17.6px;background:#dcdcdc;font-size:15px;line-height:16.6px;color:#111;-webkit-text-stroke:0.3px #111;">&#8722;&#8734;</div>
<div class="bx" style="left:3750.6px;top:608px;width:43.7px;height:17.6px;background:#dcdcdc;font-size:15px;line-height:16.6px;color:#111;-webkit-text-stroke:0.3px #111;">&#8722;&#8734;</div>
<div class="bx" style="left:3651.3px;top:633.8px;width:44px;height:17.6px;background:#dcdcdc;font-size:15px;line-height:16.6px;color:#111;-webkit-text-stroke:0.3px #111;">&#8722;&#8734;</div>
<div style="left:3801px;top:555.6px;width:4.2px;height:123.4px;background:#2b2b2b;"></div>
<div style="left:3801px;top:607.43px;width:4.2px;height:71.57px;background:#18e755;"></div>
<div style="left:3801px;top:595.43px;width:4.2px;height:12px;background:#4f9a4a;"></div>
<div style="left:3801px;top:561.6px;width:4.2px;height:1px;background:#a6a6a6;"></div>
<div style="left:3807px;top:555.6px;width:4.2px;height:123.4px;background:#2b2b2b;"></div>
<div style="left:3807px;top:607.43px;width:4.2px;height:71.57px;background:#18e755;"></div>
<div style="left:3807px;top:595.43px;width:4.2px;height:12px;background:#4f9a4a;"></div>
<div style="left:3807px;top:561.6px;width:4.2px;height:1px;background:#a6a6a6;"></div>
<div style="left:3488.8px;top:684.5px;width:156.5px;height:130px;background:#8a6fe3;"></div>
<div style="left:3487.2px;top:681.8px;width:1.6px;height:132.7px;background:#6f6f78;"></div>
<svg class="a" style="left:3492px;top:686.5px" width="22" height="22" viewBox="-11 -11 22 22"><circle r="9.2" fill="none" stroke="#26203a" stroke-width="1.4"/><path d="M-5.2 -3 L5.2 -3 L0 5 Z" fill="#26203a"/></svg>
<div class="t" style="left:3522.3px;top:689.6px;font-size:14.9px;line-height:17.88px;color:#26203a;font-weight:700;">Pluck Arp Melo</div>
<div class="bx" style="left:3651.3px;top:688.3px;width:68.5px;height:18.4px;background:#ffb900;font-size:16px;line-height:17.4px;color:#111;-webkit-text-stroke:0.3px #111;">42</div>
<div class="bx" style="left:3726.4px;top:688.3px;width:30.5px;height:18.4px;background:#dcdcdc;font-size:15px;line-height:17.4px;color:#111;-webkit-text-stroke:0.3px #111;">S</div>
<div class="bx" style="left:3763.8px;top:688.3px;width:30.5px;height:18.4px;background:#dcdcdc;font-size:15.5px;line-height:17.4px;color:#111;-webkit-text-stroke:0.3px #111;"><i class="clk"></i></div>
<div class="bx" style="left:3651.3px;top:714.1px;width:68.5px;height:18px;background:linear-gradient(90deg,#00c3dc 68%,#dcdcdc 68%);font-size:15.5px;line-height:17px;color:#111;-webkit-text-stroke:0.3px #111;">-7.0</div>
<div class="bx" style="left:3726.4px;top:714.1px;width:67.9px;height:18px;background:#dcdcdc;font-size:15px;line-height:17px;color:#111;-webkit-text-stroke:0.3px #111;">C</div>
<div class="bx" style="left:3651.3px;top:739.9px;width:44px;height:17.6px;background:linear-gradient(90deg,#00c3dc 77%,#dcdcdc 77%);font-size:15.5px;line-height:16.6px;color:#111;-webkit-text-stroke:0.3px #111;">-10.3</div>
<div class="bx" style="left:3701.3px;top:739.9px;width:43.3px;height:17.6px;background:#dcdcdc;font-size:15px;line-height:16.6px;color:#111;-webkit-text-stroke:0.3px #111;">&#8722;&#8734;</div>
<div class="bx" style="left:3750.6px;top:739.9px;width:43.7px;height:17.6px;background:#dcdcdc;font-size:15px;line-height:16.6px;color:#111;-webkit-text-stroke:0.3px #111;">&#8722;&#8734;</div>
<div class="bx" style="left:3651.3px;top:765.7px;width:44px;height:17.6px;background:#dcdcdc;font-size:15px;line-height:16.6px;color:#111;-webkit-text-stroke:0.3px #111;">&#8722;&#8734;</div>
<div style="left:3801px;top:687.5px;width:4.2px;height:124px;background:#2b2b2b;"></div>
<div style="left:3801px;top:751.98px;width:4.2px;height:59.52px;background:#18e755;"></div>
<div style="left:3801px;top:739.98px;width:4.2px;height:12px;background:#4f9a4a;"></div>
<div style="left:3801px;top:693.5px;width:4.2px;height:1px;background:#a6a6a6;"></div>
<div style="left:3807px;top:687.5px;width:4.2px;height:124px;background:#2b2b2b;"></div>
<div style="left:3807px;top:751.98px;width:4.2px;height:59.52px;background:#18e755;"></div>
<div style="left:3807px;top:739.98px;width:4.2px;height:12px;background:#4f9a4a;"></div>
<div style="left:3807px;top:693.5px;width:4.2px;height:1px;background:#a6a6a6;"></div>
<div style="left:3488.8px;top:817px;width:156.5px;height:129.3px;background:#8a6fe3;"></div>
<div style="left:3487.2px;top:814.3px;width:1.6px;height:132px;background:#6f6f78;"></div>
<svg class="a" style="left:3492px;top:819px" width="22" height="22" viewBox="-11 -11 22 22"><circle r="9.2" fill="none" stroke="#26203a" stroke-width="1.4"/><path d="M-5.2 -3 L5.2 -3 L0 5 Z" fill="#26203a"/></svg>
<div class="t" style="left:3522.3px;top:822.1px;font-size:14.9px;line-height:17.88px;color:#26203a;font-weight:700;">Pluck Arp</div>
<div class="bx" style="left:3651.3px;top:820.8px;width:68.5px;height:18.4px;background:#ffb900;font-size:16px;line-height:17.4px;color:#111;-webkit-text-stroke:0.3px #111;">43</div>
<div class="bx" style="left:3726.4px;top:820.8px;width:30.5px;height:18.4px;background:#dcdcdc;font-size:15px;line-height:17.4px;color:#111;-webkit-text-stroke:0.3px #111;">S</div>
<div class="bx" style="left:3763.8px;top:820.8px;width:30.5px;height:18.4px;background:#dcdcdc;font-size:15.5px;line-height:17.4px;color:#111;-webkit-text-stroke:0.3px #111;"><i class="clk"></i></div>
<div class="bx" style="left:3651.3px;top:846.6px;width:68.5px;height:18px;background:linear-gradient(90deg,#00c3dc 66%,#dcdcdc 66%);font-size:15.5px;line-height:17px;color:#111;-webkit-text-stroke:0.3px #111;">-8.0</div>
<div class="bx" style="left:3726.4px;top:846.6px;width:67.9px;height:18px;background:#dcdcdc;font-size:15px;line-height:17px;color:#111;-webkit-text-stroke:0.3px #111;">C</div>
<div class="bx" style="left:3651.3px;top:872.4px;width:44px;height:17.6px;background:linear-gradient(90deg,#00c3dc 60%,#dcdcdc 60%);font-size:15.5px;line-height:16.6px;color:#111;-webkit-text-stroke:0.3px #111;">-15.0</div>
<div class="bx" style="left:3701.3px;top:872.4px;width:43.3px;height:17.6px;background:#dcdcdc;font-size:15px;line-height:16.6px;color:#111;-webkit-text-stroke:0.3px #111;">&#8722;&#8734;</div>
<div class="bx" style="left:3750.6px;top:872.4px;width:43.7px;height:17.6px;background:linear-gradient(90deg,#00c3dc 78%,#dcdcdc 78%);font-size:15.5px;line-height:16.6px;color:#111;-webkit-text-stroke:0.3px #111;">-8.0</div>
<div class="bx" style="left:3651.3px;top:898.2px;width:44px;height:17.6px;background:#dcdcdc;font-size:15px;line-height:16.6px;color:#111;-webkit-text-stroke:0.3px #111;">&#8722;&#8734;</div>
<div style="left:3801px;top:820px;width:4.2px;height:123.3px;background:#2b2b2b;"></div>
<div style="left:3801px;top:903.84px;width:4.2px;height:39.46px;background:#18e755;"></div>
<div style="left:3801px;top:891.84px;width:4.2px;height:12px;background:#4f9a4a;"></div>
<div style="left:3801px;top:826px;width:4.2px;height:1px;background:#a6a6a6;"></div>
<div style="left:3807px;top:820px;width:4.2px;height:123.3px;background:#2b2b2b;"></div>
<div style="left:3807px;top:903.84px;width:4.2px;height:39.46px;background:#18e755;"></div>
<div style="left:3807px;top:891.84px;width:4.2px;height:12px;background:#4f9a4a;"></div>
<div style="left:3807px;top:826px;width:4.2px;height:1px;background:#a6a6a6;"></div>
<div style="left:3488.8px;top:949px;width:156.5px;height:26px;background:#8a6fe3;"></div>
<div style="left:3487.2px;top:946.3px;width:1.6px;height:28.7px;background:#6f6f78;"></div>
<svg class="a" style="left:3492px;top:951px" width="22" height="22" viewBox="-11 -11 22 22"><circle r="9.2" fill="none" stroke="#26203a" stroke-width="1.4"/><path d="M-4.6 -3.6H4.6 M-4.6 0H4.6 M-4.6 3.6H4.6" stroke="#26203a" stroke-width="1.5"/></svg>
<div class="t" style="left:3522.3px;top:954.1px;font-size:14.9px;line-height:17.88px;color:#26203a;font-weight:700;">Drop Pluck</div>
<div class="bx" style="left:3651.3px;top:952.8px;width:68.5px;height:18.4px;background:#cfcfcf;font-size:16px;line-height:17.4px;color:#111;-webkit-text-stroke:0.3px #111;">44</div>
<div class="bx" style="left:3726.4px;top:952.8px;width:30.5px;height:18.4px;background:#dcdcdc;font-size:15px;line-height:17.4px;color:#111;-webkit-text-stroke:0.3px #111;">S</div>
<div style="left:3801px;top:952px;width:4.2px;height:20px;background:#2b2b2b;"></div>
<div style="left:3801px;top:954.5px;width:4.2px;height:1px;background:#a6a6a6;"></div>
<div style="left:3801px;top:957.2px;width:4.2px;height:1px;background:#a6a6a6;"></div>
<div style="left:3807px;top:952px;width:4.2px;height:20px;background:#2b2b2b;"></div>
<div style="left:3807px;top:954.5px;width:4.2px;height:1px;background:#a6a6a6;"></div>
<div style="left:3807px;top:957.2px;width:4.2px;height:1px;background:#a6a6a6;"></div>
<div style="left:3488.8px;top:977.5px;width:156.5px;height:52.5px;background:#8a6fe3;"></div>
<div style="left:3487.2px;top:974.8px;width:1.6px;height:55.2px;background:#6f6f78;"></div>
<svg class="a" style="left:3492px;top:979.5px" width="22" height="22" viewBox="-11 -11 22 22"><circle r="9.2" fill="none" stroke="#26203a" stroke-width="1.4"/><path d="M-4.6 -3.6H4.6 M-2 0H4.6 M-2 3.6H4.6" stroke="#26203a" stroke-width="1.5"/></svg>
<div class="t" style="left:3522.3px;top:982.6px;font-size:14.9px;line-height:17.88px;color:#26203a;font-weight:700;">Break Pads</div>
<div class="bx" style="left:3651.3px;top:981.3px;width:68.5px;height:18.4px;background:#ffb900;font-size:16px;line-height:17.4px;color:#111;-webkit-text-stroke:0.3px #111;">48</div>
<div class="bx" style="left:3726.4px;top:981.3px;width:30.5px;height:18.4px;background:#dcdcdc;font-size:15px;line-height:17.4px;color:#111;-webkit-text-stroke:0.3px #111;">S</div>
<div class="bx" style="left:3651.3px;top:1007.1px;width:68.5px;height:18px;background:linear-gradient(90deg,#00c3dc 79%,#dcdcdc 79%);font-size:15.5px;line-height:17px;color:#111;-webkit-text-stroke:0.3px #111;">-2.0</div>
<div class="bx" style="left:3726.4px;top:1007.1px;width:67.9px;height:18px;background:#dcdcdc;font-size:15px;line-height:17px;color:#111;-webkit-text-stroke:0.3px #111;">C</div>
<div style="left:3801px;top:980.5px;width:4.2px;height:46.5px;background:#2b2b2b;"></div>
<div style="left:3801px;top:996.77px;width:4.2px;height:30.23px;background:#18e755;"></div>
<div style="left:3801px;top:992.12px;width:4.2px;height:4.65px;background:#4f9a4a;"></div>
<div style="left:3801px;top:986.5px;width:4.2px;height:1px;background:#a6a6a6;"></div>
<div style="left:3807px;top:980.5px;width:4.2px;height:46.5px;background:#2b2b2b;"></div>
<div style="left:3807px;top:996.77px;width:4.2px;height:30.23px;background:#18e755;"></div>
<div style="left:3807px;top:992.12px;width:4.2px;height:4.65px;background:#4f9a4a;"></div>
<div style="left:3807px;top:986.5px;width:4.2px;height:1px;background:#a6a6a6;"></div>
<div style="left:3496.2px;top:1032.5px;width:149.1px;height:26.5px;background:#8a6fe3;"></div>
<div style="left:3487.2px;top:1029.8px;width:1.6px;height:29.2px;background:#6f6f78;"></div>
<div style="left:3494.6px;top:1029.8px;width:1.6px;height:29.2px;background:#6f6f78;"></div>
<svg class="a" style="left:3499.4px;top:1034.5px" width="22" height="22" viewBox="-11 -11 22 22"><circle r="9.2" fill="none" stroke="#26203a" stroke-width="1.4"/><path d="M-3 -5.2 L5 0 L-3 5.2 Z" fill="#26203a"/></svg>
<div class="t" style="left:3529.7px;top:1037.6px;font-size:14.9px;line-height:17.88px;color:#26203a;font-weight:700;">Break Pad 1</div>
<div class="bx" style="left:3651.3px;top:1036.3px;width:68.5px;height:18.4px;background:#ffb900;font-size:16px;line-height:17.4px;color:#111;-webkit-text-stroke:0.3px #111;">49</div>
<div class="bx" style="left:3726.4px;top:1036.3px;width:30.5px;height:18.4px;background:#dcdcdc;font-size:15px;line-height:17.4px;color:#111;-webkit-text-stroke:0.3px #111;">S</div>
<div class="bx" style="left:3763.8px;top:1036.3px;width:30.5px;height:18.4px;background:#dcdcdc;font-size:15.5px;line-height:17.4px;color:#111;-webkit-text-stroke:0.3px #111;"><i class="clk"></i></div>
<div style="left:3801px;top:1035.5px;width:4.2px;height:20.5px;background:#2b2b2b;"></div>
<div style="left:3801px;top:1041.65px;width:4.2px;height:14.35px;background:#18e755;"></div>
<div style="left:3801px;top:1038px;width:4.2px;height:1px;background:#a6a6a6;"></div>
<div style="left:3801px;top:1040.7px;width:4.2px;height:1px;background:#a6a6a6;"></div>
<div style="left:3807px;top:1035.5px;width:4.2px;height:20.5px;background:#2b2b2b;"></div>
<div style="left:3807px;top:1041.65px;width:4.2px;height:14.35px;background:#18e755;"></div>
<div style="left:3807px;top:1038px;width:4.2px;height:1px;background:#a6a6a6;"></div>
<div style="left:3807px;top:1040.7px;width:4.2px;height:1px;background:#a6a6a6;"></div>
<div style="left:3496.2px;top:1061.5px;width:149.1px;height:26.5px;background:#8a6fe3;"></div>
<div style="left:3487.2px;top:1058.8px;width:1.6px;height:29.2px;background:#6f6f78;"></div>
<div style="left:3494.6px;top:1058.8px;width:1.6px;height:29.2px;background:#6f6f78;"></div>
<svg class="a" style="left:3499.4px;top:1063.5px" width="22" height="22" viewBox="-11 -11 22 22"><circle r="9.2" fill="none" stroke="#26203a" stroke-width="1.4"/><path d="M-3 -5.2 L5 0 L-3 5.2 Z" fill="#26203a"/></svg>
<div class="t" style="left:3529.7px;top:1066.6px;font-size:14.9px;line-height:17.88px;color:#26203a;font-weight:700;">Break Pad 2</div>
<div class="bx" style="left:3651.3px;top:1065.3px;width:68.5px;height:18.4px;background:#ffb900;font-size:16px;line-height:17.4px;color:#111;-webkit-text-stroke:0.3px #111;">50</div>
<div class="bx" style="left:3726.4px;top:1065.3px;width:30.5px;height:18.4px;background:#dcdcdc;font-size:15px;line-height:17.4px;color:#111;-webkit-text-stroke:0.3px #111;">S</div>
<div class="bx" style="left:3763.8px;top:1065.3px;width:30.5px;height:18.4px;background:#dcdcdc;font-size:15.5px;line-height:17.4px;color:#111;-webkit-text-stroke:0.3px #111;"><i class="clk"></i></div>
<div style="left:3801px;top:1064.5px;width:4.2px;height:20.5px;background:#2b2b2b;"></div>
<div style="left:3801px;top:1072.7px;width:4.2px;height:12.3px;background:#18e755;"></div>
<div style="left:3801px;top:1067px;width:4.2px;height:1px;background:#a6a6a6;"></div>
<div style="left:3801px;top:1069.7px;width:4.2px;height:1px;background:#a6a6a6;"></div>
<div style="left:3807px;top:1064.5px;width:4.2px;height:20.5px;background:#2b2b2b;"></div>
<div style="left:3807px;top:1072.7px;width:4.2px;height:12.3px;background:#18e755;"></div>
<div style="left:3807px;top:1067px;width:4.2px;height:1px;background:#a6a6a6;"></div>
<div style="left:3807px;top:1069.7px;width:4.2px;height:1px;background:#a6a6a6;"></div>
<div style="left:3496.2px;top:1090.5px;width:149.1px;height:26.5px;background:#8a6fe3;"></div>
<div style="left:3487.2px;top:1087.8px;width:1.6px;height:29.2px;background:#6f6f78;"></div>
<div style="left:3494.6px;top:1087.8px;width:1.6px;height:29.2px;background:#6f6f78;"></div>
<svg class="a" style="left:3499.4px;top:1092.5px" width="22" height="22" viewBox="-11 -11 22 22"><circle r="9.2" fill="none" stroke="#26203a" stroke-width="1.4"/><path d="M-3 -5.2 L5 0 L-3 5.2 Z" fill="#26203a"/></svg>
<div class="t" style="left:3529.7px;top:1095.6px;font-size:14.9px;line-height:17.88px;color:#26203a;font-weight:700;">Break Pad 3</div>
<div class="bx" style="left:3651.3px;top:1094.3px;width:68.5px;height:18.4px;background:#ffb900;font-size:16px;line-height:17.4px;color:#111;-webkit-text-stroke:0.3px #111;">51</div>
<div class="bx" style="left:3726.4px;top:1094.3px;width:30.5px;height:18.4px;background:#dcdcdc;font-size:15px;line-height:17.4px;color:#111;-webkit-text-stroke:0.3px #111;">S</div>
<div class="bx" style="left:3763.8px;top:1094.3px;width:30.5px;height:18.4px;background:#dcdcdc;font-size:15.5px;line-height:17.4px;color:#111;-webkit-text-stroke:0.3px #111;"><i class="clk"></i></div>
<div style="left:3801px;top:1093.5px;width:4.2px;height:20.5px;background:#2b2b2b;"></div>
<div style="left:3801px;top:1096px;width:4.2px;height:1px;background:#a6a6a6;"></div>
<div style="left:3801px;top:1098.7px;width:4.2px;height:1px;background:#a6a6a6;"></div>
<div style="left:3807px;top:1093.5px;width:4.2px;height:20.5px;background:#2b2b2b;"></div>
<div style="left:3807px;top:1096px;width:4.2px;height:1px;background:#a6a6a6;"></div>
<div style="left:3807px;top:1098.7px;width:4.2px;height:1px;background:#a6a6a6;"></div>
<div style="left:3488.8px;top:1119.5px;width:156.5px;height:128.5px;background:#8a6fe3;"></div>
<div style="left:3487.2px;top:1116.8px;width:1.6px;height:131.2px;background:#6f6f78;"></div>
<svg class="a" style="left:3492px;top:1121.5px" width="22" height="22" viewBox="-11 -11 22 22"><circle r="9.2" fill="none" stroke="#26203a" stroke-width="1.4"/><path d="M-5.2 -3 L5.2 -3 L0 5 Z" fill="#26203a"/></svg>
<div class="t" style="left:3522.3px;top:1124.6px;font-size:14.9px;line-height:17.88px;color:#26203a;font-weight:700;">Lead Saw</div>
<div class="bx" style="left:3651.3px;top:1123.3px;width:68.5px;height:18.4px;background:#ffb900;font-size:16px;line-height:17.4px;color:#111;-webkit-text-stroke:0.3px #111;">52</div>
<div class="bx" style="left:3726.4px;top:1123.3px;width:30.5px;height:18.4px;background:#dcdcdc;font-size:15px;line-height:17.4px;color:#111;-webkit-text-stroke:0.3px #111;">S</div>
<div class="bx" style="left:3763.8px;top:1123.3px;width:30.5px;height:18.4px;background:#dcdcdc;font-size:15.5px;line-height:17.4px;color:#111;-webkit-text-stroke:0.3px #111;"><i class="clk"></i></div>
<div class="bx" style="left:3651.3px;top:1149.1px;width:68.5px;height:18px;background:linear-gradient(90deg,#00c3dc 81%,#dcdcdc 81%);font-size:15.5px;line-height:17px;color:#111;-webkit-text-stroke:0.3px #111;">-1.0</div>
<div class="bx" style="left:3726.4px;top:1149.1px;width:67.9px;height:18px;background:#dcdcdc;font-size:15px;line-height:17px;color:#111;-webkit-text-stroke:0.3px #111;">C</div>
<div class="bx" style="left:3651.3px;top:1174.9px;width:44px;height:17.6px;background:#00c3dc;font-size:15.5px;line-height:16.6px;color:#111;-webkit-text-stroke:0.3px #111;">0</div>
<div class="bx" style="left:3701.3px;top:1174.9px;width:43.3px;height:17.6px;background:#dcdcdc;font-size:15px;line-height:16.6px;color:#111;-webkit-text-stroke:0.3px #111;">&#8722;&#8734;</div>
<div class="bx" style="left:3750.6px;top:1174.9px;width:43.7px;height:17.6px;background:#dcdcdc;font-size:15px;line-height:16.6px;color:#111;-webkit-text-stroke:0.3px #111;">&#8722;&#8734;</div>
<div class="bx" style="left:3651.3px;top:1200.7px;width:44px;height:17.6px;background:#dcdcdc;font-size:15px;line-height:16.6px;color:#111;-webkit-text-stroke:0.3px #111;">&#8722;&#8734;</div>
<div style="left:3801px;top:1122.5px;width:4.2px;height:122.5px;background:#2b2b2b;"></div>
<div style="left:3801px;top:1177.62px;width:4.2px;height:67.38px;background:#18e755;"></div>
<div style="left:3801px;top:1165.62px;width:4.2px;height:12px;background:#4f9a4a;"></div>
<div style="left:3801px;top:1128.5px;width:4.2px;height:1px;background:#a6a6a6;"></div>
<div style="left:3807px;top:1122.5px;width:4.2px;height:122.5px;background:#2b2b2b;"></div>
<div style="left:3807px;top:1177.62px;width:4.2px;height:67.38px;background:#18e755;"></div>
<div style="left:3807px;top:1165.62px;width:4.2px;height:12px;background:#4f9a4a;"></div>
<div style="left:3807px;top:1128.5px;width:4.2px;height:1px;background:#a6a6a6;"></div>
<div style="left:3488.8px;top:1250.5px;width:156.5px;height:129.5px;background:#8a6fe3;"></div>
<div style="left:3487.2px;top:1247.8px;width:1.6px;height:132.2px;background:#6f6f78;"></div>
<svg class="a" style="left:3492px;top:1252.5px" width="22" height="22" viewBox="-11 -11 22 22"><circle r="9.2" fill="none" stroke="#26203a" stroke-width="1.4"/><path d="M-5.2 -3 L5.2 -3 L0 5 Z" fill="#26203a"/></svg>
<div class="t" style="left:3522.3px;top:1255.6px;font-size:14.9px;line-height:17.88px;color:#26203a;font-weight:700;">Pad Atmo</div>
<div class="bx" style="left:3651.3px;top:1254.3px;width:68.5px;height:18.4px;background:#ffb900;font-size:16px;line-height:17.4px;color:#111;-webkit-text-stroke:0.3px #111;">53</div>
<div class="bx" style="left:3726.4px;top:1254.3px;width:30.5px;height:18.4px;background:#dcdcdc;font-size:15px;line-height:17.4px;color:#111;-webkit-text-stroke:0.3px #111;">S</div>
<div class="bx" style="left:3763.8px;top:1254.3px;width:30.5px;height:18.4px;background:#dcdcdc;font-size:15.5px;line-height:17.4px;color:#111;-webkit-text-stroke:0.3px #111;"><i class="clk"></i></div>
<div class="bx" style="left:3651.3px;top:1280.1px;width:68.5px;height:18px;background:linear-gradient(90deg,#00c3dc 53%,#dcdcdc 53%);font-size:15.5px;line-height:17px;color:#111;-webkit-text-stroke:0.3px #111;">-12.0</div>
<div class="bx" style="left:3726.4px;top:1280.1px;width:67.9px;height:18px;background:#dcdcdc;font-size:15px;line-height:17px;color:#111;-webkit-text-stroke:0.3px #111;">C</div>
<div class="bx" style="left:3651.3px;top:1305.9px;width:44px;height:17.6px;background:#dcdcdc;font-size:15px;line-height:16.6px;color:#111;-webkit-text-stroke:0.3px #111;">&#8722;&#8734;</div>
<div class="bx" style="left:3701.3px;top:1305.9px;width:43.3px;height:17.6px;background:#dcdcdc;font-size:15px;line-height:16.6px;color:#111;-webkit-text-stroke:0.3px #111;">&#8722;&#8734;</div>
<div class="bx" style="left:3750.6px;top:1305.9px;width:43.7px;height:17.6px;background:#dcdcdc;font-size:15px;line-height:16.6px;color:#111;-webkit-text-stroke:0.3px #111;">&#8722;&#8734;</div>
<div class="bx" style="left:3651.3px;top:1331.7px;width:44px;height:17.6px;background:#dcdcdc;font-size:15px;line-height:16.6px;color:#111;-webkit-text-stroke:0.3px #111;">&#8722;&#8734;</div>
<div style="left:3801px;top:1253.5px;width:4.2px;height:123.5px;background:#2b2b2b;"></div>
<div style="left:3801px;top:1339.95px;width:4.2px;height:37.05px;background:#18e755;"></div>
<div style="left:3801px;top:1327.95px;width:4.2px;height:12px;background:#4f9a4a;"></div>
<div style="left:3801px;top:1259.5px;width:4.2px;height:1px;background:#a6a6a6;"></div>
<div style="left:3807px;top:1253.5px;width:4.2px;height:123.5px;background:#2b2b2b;"></div>
<div style="left:3807px;top:1339.95px;width:4.2px;height:37.05px;background:#18e755;"></div>
<div style="left:3807px;top:1327.95px;width:4.2px;height:12px;background:#4f9a4a;"></div>
<div style="left:3807px;top:1259.5px;width:4.2px;height:1px;background:#a6a6a6;"></div>
<div style="left:3488.8px;top:1382.6px;width:156.5px;height:129.7px;background:#8a6fe3;"></div>
<div style="left:3487.2px;top:1379.9px;width:1.6px;height:132.4px;background:#6f6f78;"></div>
<svg class="a" style="left:3492px;top:1384.6px" width="22" height="22" viewBox="-11 -11 22 22"><circle r="9.2" fill="none" stroke="#26203a" stroke-width="1.4"/><path d="M-5.2 -3 L5.2 -3 L0 5 Z" fill="#26203a"/></svg>
<div class="t" style="left:3522.3px;top:1387.7px;font-size:14.9px;line-height:17.88px;color:#26203a;font-weight:700;">Lead LFO</div>
<div class="bx" style="left:3651.3px;top:1386.4px;width:68.5px;height:18.4px;background:#ffb900;font-size:16px;line-height:17.4px;color:#111;-webkit-text-stroke:0.3px #111;">54</div>
<div class="bx" style="left:3726.4px;top:1386.4px;width:30.5px;height:18.4px;background:#dcdcdc;font-size:15px;line-height:17.4px;color:#111;-webkit-text-stroke:0.3px #111;">S</div>
<div class="bx" style="left:3763.8px;top:1386.4px;width:30.5px;height:18.4px;background:#dcdcdc;font-size:15.5px;line-height:17.4px;color:#111;-webkit-text-stroke:0.3px #111;"><i class="clk"></i></div>
<div class="bx" style="left:3651.3px;top:1412.2px;width:68.5px;height:18px;background:linear-gradient(90deg,#00c3dc 73%,#dcdcdc 73%);font-size:15.5px;line-height:17px;color:#111;-webkit-text-stroke:0.3px #111;">-5.0</div>
<div class="bx" style="left:3726.4px;top:1412.2px;width:67.9px;height:18px;background:#dcdcdc;font-size:15px;line-height:17px;color:#111;-webkit-text-stroke:0.3px #111;">C</div>
<div class="bx" style="left:3651.3px;top:1438px;width:44px;height:17.6px;background:#dcdcdc;font-size:15px;line-height:16.6px;color:#111;-webkit-text-stroke:0.3px #111;">&#8722;&#8734;</div>
<div class="bx" style="left:3701.3px;top:1438px;width:43.3px;height:17.6px;background:#dcdcdc;font-size:15px;line-height:16.6px;color:#111;-webkit-text-stroke:0.3px #111;">&#8722;&#8734;</div>
<div class="bx" style="left:3750.6px;top:1438px;width:43.7px;height:17.6px;background:#dcdcdc;font-size:15px;line-height:16.6px;color:#111;-webkit-text-stroke:0.3px #111;">&#8722;&#8734;</div>
<div class="bx" style="left:3651.3px;top:1463.8px;width:44px;height:17.6px;background:#dcdcdc;font-size:15px;line-height:16.6px;color:#111;-webkit-text-stroke:0.3px #111;">&#8722;&#8734;</div>
<div style="left:3801px;top:1385.6px;width:4.2px;height:123.7px;background:#2b2b2b;"></div>
<div style="left:3801px;top:1391.6px;width:4.2px;height:1px;background:#a6a6a6;"></div>
<div style="left:3807px;top:1385.6px;width:4.2px;height:123.7px;background:#2b2b2b;"></div>
<div style="left:3807px;top:1391.6px;width:4.2px;height:1px;background:#a6a6a6;"></div>
<div style="left:3488.8px;top:1514.8px;width:156.5px;height:129.2px;background:#8a6fe3;"></div>
<div style="left:3487.2px;top:1512.1px;width:1.6px;height:131.9px;background:#6f6f78;"></div>
<svg class="a" style="left:3492px;top:1516.8px" width="22" height="22" viewBox="-11 -11 22 22"><circle r="9.2" fill="none" stroke="#26203a" stroke-width="1.4"/><path d="M-5.2 -3 L5.2 -3 L0 5 Z" fill="#26203a"/></svg>
<div class="t" style="left:3522.3px;top:1519.9px;font-size:14.9px;line-height:17.88px;color:#26203a;font-weight:700;">Synth Atmo 1</div>
<div class="bx" style="left:3651.3px;top:1518.6px;width:68.5px;height:18.4px;background:#ffb900;font-size:16px;line-height:17.4px;color:#111;-webkit-text-stroke:0.3px #111;">55</div>
<div class="bx" style="left:3726.4px;top:1518.6px;width:30.5px;height:18.4px;background:#dcdcdc;font-size:15px;line-height:17.4px;color:#111;-webkit-text-stroke:0.3px #111;">S</div>
<div class="bx" style="left:3763.8px;top:1518.6px;width:30.5px;height:18.4px;background:#dcdcdc;font-size:15.5px;line-height:17.4px;color:#111;-webkit-text-stroke:0.3px #111;"><i class="dot"></i></div>
<div class="bx" style="left:3651.3px;top:1544.4px;width:68.5px;height:18px;background:linear-gradient(90deg,#00c3dc 44%,#dcdcdc 44%);font-size:15.5px;line-height:17px;color:#111;-webkit-text-stroke:0.3px #111;">-16.0</div>
<div class="bx" style="left:3726.4px;top:1544.4px;width:67.9px;height:18px;background:#dcdcdc;font-size:15px;line-height:17px;color:#111;-webkit-text-stroke:0.3px #111;">C</div>
<div class="bx" style="left:3651.3px;top:1570.2px;width:44px;height:17.6px;background:#dcdcdc;font-size:15px;line-height:16.6px;color:#111;-webkit-text-stroke:0.3px #111;">&#8722;&#8734;</div>
<div class="bx" style="left:3701.3px;top:1570.2px;width:43.3px;height:17.6px;background:#dcdcdc;font-size:15px;line-height:16.6px;color:#111;-webkit-text-stroke:0.3px #111;">&#8722;&#8734;</div>
<div class="bx" style="left:3750.6px;top:1570.2px;width:43.7px;height:17.6px;background:#dcdcdc;font-size:15px;line-height:16.6px;color:#111;-webkit-text-stroke:0.3px #111;">&#8722;&#8734;</div>
<div class="bx" style="left:3651.3px;top:1596px;width:44px;height:17.6px;background:#dcdcdc;font-size:15px;line-height:16.6px;color:#111;-webkit-text-stroke:0.3px #111;">&#8722;&#8734;</div>
<div style="left:3801px;top:1517.8px;width:4.2px;height:123.2px;background:#2b2b2b;"></div>
<div style="left:3801px;top:1523.8px;width:4.2px;height:1px;background:#a6a6a6;"></div>
<div style="left:3807px;top:1517.8px;width:4.2px;height:123.2px;background:#2b2b2b;"></div>
<div style="left:3807px;top:1523.8px;width:4.2px;height:1px;background:#a6a6a6;"></div>
<div style="left:3488.8px;top:1646.5px;width:156.5px;height:129.2px;background:#8a6fe3;"></div>
<div style="left:3487.2px;top:1643.8px;width:1.6px;height:131.9px;background:#6f6f78;"></div>
<svg class="a" style="left:3492px;top:1648.5px" width="22" height="22" viewBox="-11 -11 22 22"><circle r="9.2" fill="none" stroke="#26203a" stroke-width="1.4"/><path d="M-5.2 -3 L5.2 -3 L0 5 Z" fill="#26203a"/></svg>
<div class="t" style="left:3522.3px;top:1651.6px;font-size:14.9px;line-height:17.88px;color:#26203a;font-weight:700;">Synth Atmo 2</div>
<div class="bx" style="left:3651.3px;top:1650.3px;width:68.5px;height:18.4px;background:#ffb900;font-size:16px;line-height:17.4px;color:#111;-webkit-text-stroke:0.3px #111;">56</div>
<div class="bx" style="left:3726.4px;top:1650.3px;width:30.5px;height:18.4px;background:#dcdcdc;font-size:15px;line-height:17.4px;color:#111;-webkit-text-stroke:0.3px #111;">S</div>
<div class="bx" style="left:3763.8px;top:1650.3px;width:30.5px;height:18.4px;background:#dcdcdc;font-size:15.5px;line-height:17.4px;color:#111;-webkit-text-stroke:0.3px #111;"><i class="dot"></i></div>
<div class="bx" style="left:3651.3px;top:1676.1px;width:68.5px;height:18px;background:linear-gradient(90deg,#00c3dc 47%,#dcdcdc 47%);font-size:15.5px;line-height:17px;color:#111;-webkit-text-stroke:0.3px #111;">-15.0</div>
<div class="bx" style="left:3726.4px;top:1676.1px;width:67.9px;height:18px;background:#dcdcdc;font-size:15px;line-height:17px;color:#111;-webkit-text-stroke:0.3px #111;">C</div>
<div class="bx" style="left:3651.3px;top:1701.9px;width:44px;height:17.6px;background:#dcdcdc;font-size:15px;line-height:16.6px;color:#111;-webkit-text-stroke:0.3px #111;">&#8722;&#8734;</div>
<div class="bx" style="left:3701.3px;top:1701.9px;width:43.3px;height:17.6px;background:#dcdcdc;font-size:15px;line-height:16.6px;color:#111;-webkit-text-stroke:0.3px #111;">&#8722;&#8734;</div>
<div class="bx" style="left:3750.6px;top:1701.9px;width:43.7px;height:17.6px;background:#dcdcdc;font-size:15px;line-height:16.6px;color:#111;-webkit-text-stroke:0.3px #111;">&#8722;&#8734;</div>
<div class="bx" style="left:3651.3px;top:1727.7px;width:44px;height:17.6px;background:#dcdcdc;font-size:15px;line-height:16.6px;color:#111;-webkit-text-stroke:0.3px #111;">&#8722;&#8734;</div>
<div style="left:3801px;top:1649.5px;width:4.2px;height:123.2px;background:#2b2b2b;"></div>
<div style="left:3801px;top:1655.5px;width:4.2px;height:1px;background:#a6a6a6;"></div>
<div style="left:3807px;top:1649.5px;width:4.2px;height:123.2px;background:#2b2b2b;"></div>
<div style="left:3807px;top:1655.5px;width:4.2px;height:1px;background:#a6a6a6;"></div>
<div style="left:3488.8px;top:1778px;width:156.5px;height:53.3px;background:#8a6fe3;"></div>
<div style="left:3487.2px;top:1775.3px;width:1.6px;height:56px;background:#6f6f78;"></div>
<svg class="a" style="left:3492px;top:1780px" width="22" height="22" viewBox="-11 -11 22 22"><circle r="9.2" fill="none" stroke="#26203a" stroke-width="1.4"/><path d="M-4.6 -3.6H4.6 M-2 0H4.6 M-2 3.6H4.6" stroke="#26203a" stroke-width="1.5"/></svg>
<div class="t" style="left:3522.3px;top:1783.1px;font-size:14.9px;line-height:17.88px;color:#26203a;font-weight:700;">Drop Lead</div>
<div class="bx" style="left:3651.3px;top:1781.8px;width:68.5px;height:18.4px;background:#ffb900;font-size:16px;line-height:17.4px;color:#111;-webkit-text-stroke:0.3px #111;">57</div>
<div class="bx" style="left:3726.4px;top:1781.8px;width:30.5px;height:18.4px;background:#dcdcdc;font-size:15px;line-height:17.4px;color:#111;-webkit-text-stroke:0.3px #111;">S</div>
<div class="bx" style="left:3651.3px;top:1807.6px;width:68.5px;height:18px;background:linear-gradient(90deg,#00c3dc 83%,#dcdcdc 83%);font-size:15.5px;line-height:17px;color:#111;-webkit-text-stroke:0.3px #111;">-0.5</div>
<div class="bx" style="left:3726.4px;top:1807.6px;width:67.9px;height:18px;background:#dcdcdc;font-size:15px;line-height:17px;color:#111;-webkit-text-stroke:0.3px #111;">C</div>
<div style="left:3801px;top:1781px;width:4.2px;height:47.3px;background:#2b2b2b;"></div>
<div style="left:3801px;top:1787px;width:4.2px;height:1px;background:#a6a6a6;"></div>
<div style="left:3807px;top:1781px;width:4.2px;height:47.3px;background:#2b2b2b;"></div>
<div style="left:3807px;top:1787px;width:4.2px;height:1px;background:#a6a6a6;"></div>
<div style="left:3496.2px;top:1833.5px;width:149.1px;height:26.5px;background:#8a6fe3;"></div>
<div style="left:3487.2px;top:1830.8px;width:1.6px;height:29.2px;background:#6f6f78;"></div>
<div style="left:3494.6px;top:1830.8px;width:1.6px;height:29.2px;background:#6f6f78;"></div>
<svg class="a" style="left:3499.4px;top:1835.5px" width="22" height="22" viewBox="-11 -11 22 22"><circle r="9.2" fill="none" stroke="#26203a" stroke-width="1.4"/><path d="M-3 -5.2 L5 0 L-3 5.2 Z" fill="#26203a"/></svg>
<div class="t" style="left:3529.7px;top:1838.6px;font-size:14.9px;line-height:17.88px;color:#26203a;font-weight:700;">Lead Main</div>
<div class="bx" style="left:3651.3px;top:1837.3px;width:68.5px;height:18.4px;background:#ffb900;font-size:16px;line-height:17.4px;color:#111;-webkit-text-stroke:0.3px #111;">58</div>
<div class="bx" style="left:3726.4px;top:1837.3px;width:30.5px;height:18.4px;background:#dcdcdc;font-size:15px;line-height:17.4px;color:#111;-webkit-text-stroke:0.3px #111;">S</div>
<div class="bx" style="left:3763.8px;top:1837.3px;width:30.5px;height:18.4px;background:#dcdcdc;font-size:15.5px;line-height:17.4px;color:#111;-webkit-text-stroke:0.3px #111;"><i class="clk"></i></div>
<div style="left:3801px;top:1836.5px;width:4.2px;height:20.5px;background:#2b2b2b;"></div>
<div style="left:3801px;top:1839px;width:4.2px;height:1px;background:#a6a6a6;"></div>
<div style="left:3801px;top:1841.7px;width:4.2px;height:1px;background:#a6a6a6;"></div>
<div style="left:3807px;top:1836.5px;width:4.2px;height:20.5px;background:#2b2b2b;"></div>
<div style="left:3807px;top:1839px;width:4.2px;height:1px;background:#a6a6a6;"></div>
<div style="left:3807px;top:1841.7px;width:4.2px;height:1px;background:#a6a6a6;"></div>
<div style="left:3496.2px;top:1862.3px;width:149.1px;height:26.2px;background:#8a6fe3;"></div>
<div style="left:3487.2px;top:1859.6px;width:1.6px;height:28.9px;background:#6f6f78;"></div>
<div style="left:3494.6px;top:1859.6px;width:1.6px;height:28.9px;background:#6f6f78;"></div>
<svg class="a" style="left:3499.4px;top:1864.3px" width="22" height="22" viewBox="-11 -11 22 22"><circle r="9.2" fill="none" stroke="#26203a" stroke-width="1.4"/><path d="M-3 -5.2 L5 0 L-3 5.2 Z" fill="#26203a"/></svg>
<div class="t" style="left:3529.7px;top:1867.4px;font-size:14.9px;line-height:17.88px;color:#26203a;font-weight:700;">Lead Noise</div>
<div class="bx" style="left:3651.3px;top:1866.1px;width:68.5px;height:18.4px;background:#ffb900;font-size:16px;line-height:17.4px;color:#111;-webkit-text-stroke:0.3px #111;">59</div>
<div class="bx" style="left:3726.4px;top:1866.1px;width:30.5px;height:18.4px;background:#dcdcdc;font-size:15px;line-height:17.4px;color:#111;-webkit-text-stroke:0.3px #111;">S</div>
<div class="bx" style="left:3763.8px;top:1866.1px;width:30.5px;height:18.4px;background:#dcdcdc;font-size:15.5px;line-height:17.4px;color:#111;-webkit-text-stroke:0.3px #111;"><i class="clk"></i></div>
<div style="left:3801px;top:1865.3px;width:4.2px;height:20.2px;background:#2b2b2b;"></div>
<div style="left:3801px;top:1867.8px;width:4.2px;height:1px;background:#a6a6a6;"></div>
<div style="left:3801px;top:1870.5px;width:4.2px;height:1px;background:#a6a6a6;"></div>
<div style="left:3807px;top:1865.3px;width:4.2px;height:20.2px;background:#2b2b2b;"></div>
<div style="left:3807px;top:1867.8px;width:4.2px;height:1px;background:#a6a6a6;"></div>
<div style="left:3807px;top:1870.5px;width:4.2px;height:1px;background:#a6a6a6;"></div>
<div style="left:3488.8px;top:1891px;width:156.5px;height:26.3px;background:#8a6fe3;"></div>
<div style="left:3487.2px;top:1888.3px;width:1.6px;height:29px;background:#6f6f78;"></div>
<svg class="a" style="left:3492px;top:1893px" width="22" height="22" viewBox="-11 -11 22 22"><circle r="9.2" fill="none" stroke="#26203a" stroke-width="1.4"/><path d="M-4.6 -3.6H4.6 M-4.6 0H4.6 M-4.6 3.6H4.6" stroke="#26203a" stroke-width="1.5"/></svg>
<div class="t" style="left:3522.3px;top:1896.1px;font-size:14.9px;line-height:17.88px;color:#26203a;font-weight:700;">Drop Stab</div>
<div class="bx" style="left:3651.3px;top:1894.8px;width:68.5px;height:18.4px;background:#cfcfcf;font-size:16px;line-height:17.4px;color:#111;-webkit-text-stroke:0.3px #111;">60</div>
<div class="bx" style="left:3726.4px;top:1894.8px;width:30.5px;height:18.4px;background:#dcdcdc;font-size:15px;line-height:17.4px;color:#111;-webkit-text-stroke:0.3px #111;">S</div>
<div style="left:3801px;top:1894px;width:4.2px;height:20.3px;background:#2b2b2b;"></div>
<div style="left:3801px;top:1896.5px;width:4.2px;height:1px;background:#a6a6a6;"></div>
<div style="left:3801px;top:1899.2px;width:4.2px;height:1px;background:#a6a6a6;"></div>
<div style="left:3807px;top:1894px;width:4.2px;height:20.3px;background:#2b2b2b;"></div>
<div style="left:3807px;top:1896.5px;width:4.2px;height:1px;background:#a6a6a6;"></div>
<div style="left:3807px;top:1899.2px;width:4.2px;height:1px;background:#a6a6a6;"></div>
<div style="left:3481.4px;top:1920px;width:163.9px;height:51px;background:#8dc6ff;"></div>
<svg class="a" style="left:3484.6px;top:1922px" width="22" height="22" viewBox="-11 -11 22 22"><circle r="9.2" fill="none" stroke="#26203a" stroke-width="1.4"/><path d="M-4.6 -3.6H4.6 M-4.6 0H4.6 M-4.6 3.6H4.6" stroke="#26203a" stroke-width="1.5"/></svg>
<div class="t" style="left:3514.9px;top:1925.1px;font-size:14.9px;line-height:17.88px;color:#26203a;font-weight:700;">Fx</div>
<div class="bx" style="left:3651.3px;top:1923.8px;width:68.5px;height:18.4px;background:#ffb900;font-size:16px;line-height:17.4px;color:#111;-webkit-text-stroke:0.3px #111;">66</div>
<div class="bx" style="left:3726.4px;top:1923.8px;width:30.5px;height:18.4px;background:#dcdcdc;font-size:15px;line-height:17.4px;color:#111;-webkit-text-stroke:0.3px #111;">S</div>
<div class="bx" style="left:3651.3px;top:1949.6px;width:68.5px;height:18px;background:linear-gradient(90deg,#00c3dc 83%,#dcdcdc 83%);font-size:15.5px;line-height:17px;color:#111;-webkit-text-stroke:0.3px #111;">0</div>
<div class="bx" style="left:3726.4px;top:1949.6px;width:67.9px;height:18px;background:#dcdcdc;font-size:15px;line-height:17px;color:#111;-webkit-text-stroke:0.3px #111;">C</div>
<div style="left:3801px;top:1923px;width:4.2px;height:45px;background:#2b2b2b;"></div>
<div style="left:3801px;top:1943.25px;width:4.2px;height:24.75px;background:#18e755;"></div>
<div style="left:3801px;top:1938.75px;width:4.2px;height:4.5px;background:#4f9a4a;"></div>
<div style="left:3801px;top:1929px;width:4.2px;height:1px;background:#a6a6a6;"></div>
<div style="left:3807px;top:1923px;width:4.2px;height:45px;background:#2b2b2b;"></div>
<div style="left:3807px;top:1943.25px;width:4.2px;height:24.75px;background:#18e755;"></div>
<div style="left:3807px;top:1938.75px;width:4.2px;height:4.5px;background:#4f9a4a;"></div>
<div style="left:3807px;top:1929px;width:4.2px;height:1px;background:#a6a6a6;"></div>
<div style="left:3481.4px;top:1984.5px;width:163.9px;height:25.5px;background:#3f3f3f;"></div>
<svg class="a" style="left:3484.6px;top:1986.5px" width="22" height="22" viewBox="-11 -11 22 22"><circle r="9.2" fill="none" stroke="#d8d8d8" stroke-width="1.4"/><path d="M-3 -5.2 L5 0 L-3 5.2 Z" fill="#d8d8d8"/></svg>
<div class="t" style="left:3520.9px;top:1989.22px;font-size:15.3px;line-height:18.36px;color:#e4e4e4;font-weight:700;">Main</div>
<div class="bx" style="left:3651.3px;top:1988.3px;width:68.5px;height:18.4px;background:linear-gradient(90deg,#00c3dc 83%,#dcdcdc 83%);font-size:15.5px;line-height:17.4px;color:#111;-webkit-text-stroke:0.3px #111;">0</div>
<div class="bx" style="left:3726.4px;top:1988.3px;width:67.9px;height:18.4px;background:linear-gradient(90deg,#1473ee 83%,#dcdcdc 83%);font-size:15.5px;line-height:17.4px;color:#111;-webkit-text-stroke:0.3px #111;">0</div>
<div style="left:3801px;top:1987.5px;width:4.2px;height:19.5px;background:#18e755;"></div>
<div style="left:3807px;top:1987.5px;width:4.2px;height:19.5px;background:#18e755;"></div>
<div style="left:3801px;top:1987.5px;width:10.2px;height:3px;background:#ffb900;"></div>
<div style="left:3801px;top:1991.5px;width:10.2px;height:2px;background:#d07030;"></div>
<div class="t" style="left:3440.25px;top:1981.94px;font-size:25px;line-height:30px;color:#8d8d8d;font-weight:700;">2/1</div>
<div class="bx" style="left:3486px;top:166.5px;width:43px;height:18.5px;border-radius:10px;background:#d6d6d6;font-size:15px;line-height:16.5px;border-color:#3a3a3a">Set</div>
<div class="bx" style="left:3546px;top:166.5px;width:34px;height:18.5px;background:#d0d0d0;font-size:15.5px;line-height:17.5px;color:#111;-webkit-text-stroke:0.3px #111;"><svg width="14" height="14" viewBox="0 0 14 14" style="vertical-align:-2px"><path d="M3 11L11 3" stroke="#111" stroke-width="1.6"/><circle cx="3.2" cy="10.8" r="2.3" fill="#111"/><circle cx="10.8" cy="3.2" r="2.3" fill="#111"/></svg></div>
<div class="bx" style="left:3586.6px;top:166.5px;width:34.2px;height:18.5px;background:#d0d0d0;font-size:15.5px;line-height:17.5px;color:#111;-webkit-text-stroke:0.3px #111;"><svg width="14" height="14" viewBox="0 0 14 14" style="vertical-align:-2px"><rect x="2" y="6.5" width="10" height="7" fill="#111"/><path d="M4.2 7V4.6a2.8 2.8 0 0 1 5.6 0V7" stroke="#111" stroke-width="1.6" fill="none"/></svg></div>
<svg class="a" style="left:3484.6px;top:191.7px" width="22" height="22" viewBox="-11 -11 22 22"><circle r="9.2" fill="#d6d6d6" stroke="#333" stroke-width="1.3"/><path d="M5 0H-5 M-1 -4L-5 0L-1 4" stroke="#111" stroke-width="1.8" fill="none"/></svg>
<svg class="a" style="left:3508.5px;top:191.7px" width="22" height="22" viewBox="-11 -11 22 22"><circle r="9.2" fill="#d6d6d6" stroke="#333" stroke-width="1.3"/><path d="M-5 0H5 M1 -4L5 0L1 4" stroke="#111" stroke-width="1.8" fill="none"/></svg>
<div class="bx" style="left:3482px;top:2019px;width:21px;height:18.5px;background:#ffb900;border-color:#8a6a10"><svg width="17" height="14" viewBox="0 0 17 14" style="vertical-align:-1px"><path d="M2 5v4M5 3v8M8 1v12M11 4v6M14 5.5v3" stroke="#3a2a00" stroke-width="1.7"/></svg></div>
<div class="bx" style="left:3508px;top:2019px;width:52px;height:18.5px;background:linear-gradient(90deg,#00c3dc 30%,#dcdcdc 30%);font-size:15.5px;line-height:17.5px;color:#111;-webkit-text-stroke:0.3px #111;">1.00x</div>
<div class="bx" style="left:3594px;top:2019px;width:19px;height:18.5px;background:#d0d0d0;font-size:14.5px;line-height:17.5px;color:#111;-webkit-text-stroke:0.3px #111;">H</div>
<div class="bx" style="left:3621px;top:2019px;width:21px;height:18.5px;background:#d0d0d0;font-size:14.5px;line-height:17.5px;color:#111;-webkit-text-stroke:0.3px #111;">W</div>
<div class="a" style="left:11px;top:128px;width:3814px;height:1916px;border:3px solid #444;border-radius:8px;box-sizing:content-box"></div>
<div class="a" style="left:1238px;top:60px;width:2080px;height:1647px;background:#fff;box-shadow:0 0 0 1px #5e5e5e,3px 5px 18px 0 rgba(0,0,0,.40)"></div>
<svg class="a" style="left:1250px;top:72px" width="22" height="21" viewBox="0 0 22 21"><rect x="3" y="1.5" width="17" height="13" fill="#dfe8ee" stroke="#8b98a3" stroke-width="1"/><rect x="5" y="3.5" width="13" height="9" fill="#f8fcff"/><path d="M5 9L7.5 8L9 4.5L11 10.5L13 6L15 8.5L18 7.5" stroke="#2a86c8" stroke-width="1.1" fill="none"/><path d="M7 16H16L17.5 19.5H5.5Z" fill="#b9c2ca"/><rect x="0.5" y="5" width="3.5" height="12" fill="#c6ced5" stroke="#8b98a3" stroke-width=".8"/></svg>
<div class="t" style="left:1278.1px;top:73.06px;font-size:18px;line-height:21.6px;color:#000;letter-spacing:-0.27px;">Диспетчер задач</div>
<svg class="a" style="left:3120px;top:62px" width="196" height="40" viewBox="0 0 196 40"><path d="M16.5 19.5H31.5" stroke="#111" stroke-width="1.2"/><rect x="85.5" y="12.5" width="14" height="14" fill="none" stroke="#111" stroke-width="1.3"/><path d="M156 12L171 27M171 12L156 27" stroke="#111" stroke-width="1.4"/></svg>
<div class="t" style="left:1245.3px;top:109.56px;font-size:18px;line-height:21.6px;color:#000;letter-spacing:-1.01px;"><u>Ф</u>айл</div>
<div class="t" style="left:1300.5px;top:109.56px;font-size:18px;line-height:21.6px;color:#000;letter-spacing:-0.23px;"><u>П</u>араметры</div>
<div class="t" style="left:1409.3px;top:109.56px;font-size:18px;line-height:21.6px;color:#000;letter-spacing:-1.05px;"><u>В</u>ид</div>
<div style="left:1239px;top:133px;width:2079px;height:1.5px;background:#ececec;"></div>
<div style="left:1239px;top:169px;width:2079px;height:1px;background:#d9d9d9;"></div>
<div class="a" style="left:1240.5px;top:139px;width:95.3px;height:30px;background:#f0f0f0;border:1px solid #d9d9d9;border-bottom:none;box-sizing:border-box"></div>
<div class="t" style="left:1246.4px;top:145.06px;font-size:18px;line-height:21.6px;color:#000;letter-spacing:-0.15px;">Процессы</div>
<div class="a" style="left:1522.6px;top:139px;width:182.9px;height:30px;background:#f0f0f0;border:1px solid #d9d9d9;border-bottom:none;box-sizing:border-box"></div>
<div class="t" style="left:1526.7px;top:145.06px;font-size:18px;line-height:21.6px;color:#000;letter-spacing:-0.08px;">Журнал приложений</div>
<div class="a" style="left:1704.5px;top:139px;width:123.2px;height:30px;background:#f0f0f0;border:1px solid #d9d9d9;border-bottom:none;box-sizing:border-box"></div>
<div class="t" style="left:1711.2px;top:145.06px;font-size:18px;line-height:21.6px;color:#000;letter-spacing:0.03px;">Автозагрузка</div>
<div class="a" style="left:1826.7px;top:139px;width:128.1px;height:30px;background:#f0f0f0;border:1px solid #d9d9d9;border-bottom:none;box-sizing:border-box"></div>
<div class="t" style="left:1833px;top:145.06px;font-size:18px;line-height:21.6px;color:#000;letter-spacing:-0.22px;">Пользователи</div>
<div class="a" style="left:1953.8px;top:139px;width:124.7px;height:30px;background:#f0f0f0;border:1px solid #d9d9d9;border-bottom:none;box-sizing:border-box"></div>
<div class="t" style="left:1960.1px;top:145.06px;font-size:18px;line-height:21.6px;color:#000;letter-spacing:0.11px;">Подробности</div>
<div class="a" style="left:2077.5px;top:139px;width:76.3px;height:30px;background:#f0f0f0;border:1px solid #d9d9d9;border-bottom:none;box-sizing:border-box"></div>
<div class="t" style="left:2083.8px;top:145.06px;font-size:18px;line-height:21.6px;color:#000;letter-spacing:-0.55px;">Службы</div>
<div class="a" style="left:1333.3px;top:137px;width:189.8px;height:33px;background:#fff;border:1px solid #d9d9d9;border-bottom:none;box-sizing:border-box"></div>
<div class="a" style="left:1336.8px;top:140.5px;width:182.8px;height:26.5px;border:1px dotted #222;box-sizing:border-box"></div>
<div class="t" style="left:1342.6px;top:143.16px;font-size:18px;line-height:21.6px;color:#000;letter-spacing:-0.14px;">Производительность</div>
<div style="left:1245px;top:190px;width:452px;height:90px;background:#d9d9d9;"></div>
<div style="left:1702px;top:205px;width:1px;height:1424px;background:#dcdcdc;"></div>
<svg class="a" style="left:1259.5px;top:206.5px" width="91" height="59.7" viewBox="-0.5 -0.5 91 59.7"><rect x="0" y="0" width="89" height="58.7" fill="#fff"/><polygon points="0,30 4,31 6,37 8,33 10,44 12,46 14,32 16,35 18,34 20,37 24,36 26,40 30,42 32,38 36,30 38,33 42,31 46,28 50,32 54,30 58,29 62,31 66,30 70,31 74,32 78,31 80,18 84,20 86,16 88,18 89,17 89,59 0,59" fill="#f1f6fa"/><polyline points="0,30 4,31 6,37 8,33 10,44 12,46 14,32 16,35 18,34 20,37 24,36 26,40 30,42 32,38 36,30 38,33 42,31 46,28 50,32 54,30 58,29 62,31 66,30 70,31 74,32 78,31 80,18 84,20 86,16 88,18 89,17" fill="none" stroke="#117dbb" stroke-width="1"/><rect x="0" y="0" width="89" height="58.7" fill="none" stroke="#117dbb" stroke-width="1"/></svg>
<div class="t" style="left:1365px;top:204.13px;font-size:23px;line-height:27.6px;color:#000;letter-spacing:-0.02px;">ЦП</div>
<div class="t" style="left:1367.5px;top:234.66px;font-size:18px;line-height:21.6px;color:#000;letter-spacing:-0.53px;">71%  4,59 ГГц</div>
<svg class="a" style="left:1259.5px;top:297px" width="91" height="60.6" viewBox="-0.5 -0.5 91 60.6"><rect x="0" y="0" width="89" height="59.6" fill="#fff"/><rect x="0" y="42" width="89" height="17" fill="#f4f2f4"/><path d="M0 42H89" stroke="#9528b4" stroke-width="1"/><rect x="0" y="0" width="89" height="59.6" fill="none" stroke="#9528b4" stroke-width="1"/></svg>
<div class="t" style="left:1365px;top:294.63px;font-size:23px;line-height:27.6px;color:#000;letter-spacing:-0.27px;">Память</div>
<div class="t" style="left:1367.5px;top:325.16px;font-size:18px;line-height:21.6px;color:#000;letter-spacing:-0.37px;">18,9/63,9 ГБ (30%)</div>
<svg class="a" style="left:1259.5px;top:388.4px" width="91" height="74" viewBox="-0.5 -0.5 91 74"><rect x="0" y="0" width="89" height="73" fill="#fff"/><rect x="0" y="0" width="89" height="73" fill="none" stroke="#4da60c" stroke-width="1"/></svg>
<div class="t" style="left:1365px;top:386.03px;font-size:23px;line-height:27.6px;color:#000;letter-spacing:0.2px;">Диск 0 (V:)</div>
<div class="t" style="left:1367.5px;top:416.56px;font-size:18px;line-height:21.6px;color:#000;letter-spacing:-1.34px;">SSD</div>
<div class="t" style="left:1367.5px;top:441.56px;font-size:18px;line-height:21.6px;color:#000;letter-spacing:-0.51px;">0%</div>
<svg class="a" style="left:1259.5px;top:493.2px" width="91" height="74.1" viewBox="-0.5 -0.5 91 74.1"><rect x="0" y="0" width="89" height="73.1" fill="#fff"/><path d="M47 72.5L49 70.5L51 72.5" stroke="#4da60c" fill="#4da60c" stroke-width="1"/><rect x="0" y="0" width="89" height="73.1" fill="none" stroke="#4da60c" stroke-width="1"/></svg>
<div class="t" style="left:1365px;top:490.83px;font-size:23px;line-height:27.6px;color:#000;letter-spacing:-0.03px;">Диск 1 (C:)</div>
<div class="t" style="left:1367.5px;top:521.36px;font-size:18px;line-height:21.6px;color:#000;letter-spacing:-1.34px;">SSD</div>
<div class="t" style="left:1367.5px;top:546.36px;font-size:18px;line-height:21.6px;color:#000;letter-spacing:-0.51px;">0%</div>
<svg class="a" style="left:1259.5px;top:598px" width="91" height="74" viewBox="-0.5 -0.5 91 74"><rect x="0" y="0" width="89" height="73" fill="#fff"/><rect x="0" y="0" width="89" height="73" fill="none" stroke="#4da60c" stroke-width="1"/></svg>
<div class="t" style="left:1365px;top:595.63px;font-size:23px;line-height:27.6px;color:#000;letter-spacing:0.19px;">Диск 2 (D:)</div>
<div class="t" style="left:1367.5px;top:626.16px;font-size:18px;line-height:21.6px;color:#000;letter-spacing:-1.34px;">SSD</div>
<div class="t" style="left:1367.5px;top:651.16px;font-size:18px;line-height:21.6px;color:#000;letter-spacing:-0.51px;">0%</div>
<svg class="a" style="left:1259.5px;top:702.5px" width="91" height="74.5" viewBox="-0.5 -0.5 91 74.5"><rect x="0" y="0" width="89" height="73.5" fill="#fff"/><polygon points="0,72.5 0,72 2,70 4,72 17,72 19,67 21,72 30,72 31.5,0 33,12 39,72 40.5,40 42,18 43,50 44.7,72 47,40 50,0 52,30 54.7,72 56.5,50 58,72 60,66 62,58 63.5,56 64.8,49 66,62 67,72 74,72 75.5,68 77,72 79,70 80,66 81,40 83,0 85,10 87.6,38 89,70 89,72.5" fill="#fcf1e6"/><polyline points="0,72 2,70 4,72 17,72 19,67 21,72 30,72 31.5,0 33,12 39,72 40.5,40 42,18 43,50 44.7,72 47,40 50,0 52,30 54.7,72 56.5,50 58,72 60,66 62,58 63.5,56 64.8,49 66,62 67,72 74,72 75.5,68 77,72 79,70 80,66 81,40 83,0 85,10 87.6,38 89,70" fill="none" stroke="#a74f01" stroke-width="1"/><polyline points="0,70 3,60 5.5,33 7.5,60 9,55 11.3,28 13,50 15,66 17.3,56 19,70 22,68 24.3,52 26,70 29,68 30.5,0 32,0 35.5,72 36.5,0 37.5,0 38.5,72 41,30 43,68 46,20 48,0 51,0 53,40 55,70 60,72 63,40 65.3,10 67,40 69,72 71,30 72.6,0 74,40 76,72 78,30 79.4,0 81,0 84,30 86,0 88,20 89,40" fill="none" stroke="#d9602a" stroke-width="1" stroke-dasharray="1 1.2"/><rect x="0" y="0" width="89" height="73.5" fill="none" stroke="#a74f01" stroke-width="1"/></svg>
<div class="t" style="left:1365px;top:700.13px;font-size:23px;line-height:27.6px;color:#000;letter-spacing:0.26px;">Ethernet</div>
<div class="t" style="left:1367.5px;top:730.66px;font-size:18px;line-height:21.6px;color:#000;letter-spacing:-0.41px;">Ethernet 3</div>
<div class="t" style="left:1367.5px;top:755.66px;font-size:18px;line-height:21.6px;color:#6d6d6d;letter-spacing:-0.75px;">О:</div>
<div class="t" style="left:1392px;top:755.66px;font-size:18px;line-height:21.6px;color:#000;">0</div>
<div class="t" style="left:1410px;top:755.66px;font-size:18px;line-height:21.6px;color:#6d6d6d;letter-spacing:-0.47px;">П:</div>
<div class="t" style="left:1433.5px;top:755.66px;font-size:18px;line-height:21.6px;color:#000;letter-spacing:0.01px;">0 кбит/с</div>
<svg class="a" style="left:1259.5px;top:807.8px" width="91" height="74.6" viewBox="-0.5 -0.5 91 74.6"><rect x="0" y="0" width="89" height="73.6" fill="#fff"/><polygon points="0,50 2,44 4,56 6,60 8,48 10,46 12,52 14,50 16,54 18,49 20,53 22,50 24,55 26,48 28,54 30,50 32,57 34,42 36,54 38,50 40,53 42,51 44,54 46,50 48,53 50,52 54,53 58,52 62,53 66,52 70,54 72,50 74,53 76,51 78,54 80,50 82,53 84,49 86,53 88,48 89,52 89,73 0,73" fill="#f1f6fa"/><polyline points="0,50 2,44 4,56 6,60 8,48 10,46 12,52 14,50 16,54 18,49 20,53 22,50 24,55 26,48 28,54 30,50 32,57 34,42 36,54 38,50 40,53 42,51 44,54 46,50 48,53 50,52 54,53 58,52 62,53 66,52 70,54 72,50 74,53 76,51 78,54 80,50 82,53 84,49 86,53 88,48 89,52" fill="none" stroke="#117dbb" stroke-width="1"/><rect x="0" y="0" width="89" height="73.6" fill="none" stroke="#117dbb" stroke-width="1"/></svg>
<div class="t" style="left:1365px;top:805.43px;font-size:23px;line-height:27.6px;color:#000;letter-spacing:0.49px;">Графический процессор 0</div>
<div class="t" style="left:1367.5px;top:835.96px;font-size:18px;line-height:21.6px;color:#000;letter-spacing:-0.53px;">NVIDIA GeForce RTX 3060</div>
<div class="t" style="left:1367.5px;top:860.96px;font-size:18px;line-height:21.6px;color:#000;letter-spacing:-0.6px;">26%  (45 °C)</div>
<div class="t" style="left:1741.8px;top:201.1px;font-size:43px;line-height:51.6px;color:#000;letter-spacing:-1.36px;">ЦП</div>
<div class="t" style="left:2824px;top:219.99px;font-size:26px;line-height:31.2px;color:#000;letter-spacing:-1.5px;">Intel(R) Core(TM) i7-10700 CPU @ 2.90GHz</div>
<div class="t" style="left:1746px;top:264.53px;font-size:15.5px;line-height:18.6px;color:#707070;letter-spacing:-0.09px;">% использования более 60 секунд</div>
<div class="t" style="left:3242px;top:264.53px;font-size:15.5px;line-height:18.6px;color:#707070;letter-spacing:-0.66px;">100%</div>
<svg class="a" style="left:0;top:0" width="3840" height="2160" viewBox="0 0 3840 2160"><rect x="1746.5" y="288.5" width="377.5" height="514.5" fill="#fff"/><polygon points="1746.5,803 1746.58,538.98 1752.8,541.54 1759.39,563.49 1765.61,556.17 1772.19,539.71 1778.41,536.79 1784.99,583.61 1791.21,614.7 1797.43,627.5 1804.38,523.25 1810.23,537.88 1816.82,553.25 1823.4,553.25 1829.62,538.61 1835.11,542.64 1842.42,554.34 1848.27,546.66 1855.22,574.46 1861.44,567.15 1867.3,577.39 1874.25,561.66 1880.46,574.46 1887.05,559.1 1893.27,543.37 1899.48,516.67 1906.43,537.88 1912.65,552.51 1919.24,536.05 1925.82,532.4 1931.31,545.93 1938.26,536.05 1944.84,561.66 1951.06,578.12 1957.65,590.56 1963.86,585.44 1970.45,571.54 1976.67,567.51 1982.89,566.41 1989.47,567.51 1995.32,565.68 2002.27,593.48 2008.86,578.12 2014.71,564.59 2021.29,578.49 2027.51,579.58 2034.1,579.58 2040.31,560.56 2046.53,586.53 2053.12,579.95 2059.34,578.49 2065.55,584.34 2072.14,583.61 2078.36,565.32 2085.31,510.45 2091.16,534.22 2097.38,519.59 2104.33,518.5 2110.55,527.27 2113.84,503.13 2117.5,473.87 2120.42,419 2122.62,342.18 2123.35,316.58 2124,316.58 2124,803" fill="#f1f6fa"/><path d="M1804.5 288.5V803.0 M1868.5 288.5V803.0 M1932.5 288.5V803.0 M1996.5 288.5V803.0 M2060.5 288.5V803.0 M1746.5 340.5H2124.0 M1746.5 391.5H2124.0 M1746.5 443.5H2124.0 M1746.5 494.5H2124.0 M1746.5 546.5H2124.0 M1746.5 597.5H2124.0 M1746.5 649.5H2124.0 M1746.5 700.5H2124.0 M1746.5 752.5H2124.0" stroke="#d4e6f1" stroke-width="1" fill="none" shape-rendering="crispEdges"/><polyline points="1746.58,538.98 1752.8,541.54 1759.39,563.49 1765.61,556.17 1772.19,539.71 1778.41,536.79 1784.99,583.61 1791.21,614.7 1797.43,627.5 1804.38,523.25 1810.23,537.88 1816.82,553.25 1823.4,553.25 1829.62,538.61 1835.11,542.64 1842.42,554.34 1848.27,546.66 1855.22,574.46 1861.44,567.15 1867.3,577.39 1874.25,561.66 1880.46,574.46 1887.05,559.1 1893.27,543.37 1899.48,516.67 1906.43,537.88 1912.65,552.51 1919.24,536.05 1925.82,532.4 1931.31,545.93 1938.26,536.05 1944.84,561.66 1951.06,578.12 1957.65,590.56 1963.86,585.44 1970.45,571.54 1976.67,567.51 1982.89,566.41 1989.47,567.51 1995.32,565.68 2002.27,593.48 2008.86,578.12 2014.71,564.59 2021.29,578.49 2027.51,579.58 2034.1,579.58 2040.31,560.56 2046.53,586.53 2053.12,579.95 2059.34,578.49 2065.55,584.34 2072.14,583.61 2078.36,565.32 2085.31,510.45 2091.16,534.22 2097.38,519.59 2104.33,518.5 2110.55,527.27 2113.84,503.13 2117.5,473.87 2120.42,419 2122.62,342.18 2123.35,316.58" fill="none" stroke="#117dbb" stroke-width="1.1" stroke-linejoin="round"/><rect x="1746.5" y="288.5" width="377.5" height="514.5" fill="none" stroke="#117dbb" stroke-width="1" shape-rendering="crispEdges"/><rect x="2130.5" y="288.5" width="377.5" height="514.5" fill="#fff"/><polygon points="2130.5,803 2130.67,558 2136.88,577.02 2143.47,594.58 2149.69,589.09 2156.27,582.88 2162.85,577.39 2168.71,611.04 2175.29,646.52 2181.51,657.5 2188.46,551.42 2194.68,556.17 2200.9,575.56 2207.48,596.41 2213.7,547.76 2220.65,579.58 2226.87,578.49 2233.45,575.56 2239.67,559.83 2245.89,586.53 2252.47,597.51 2258.33,568.98 2265.64,605.55 2271.49,582.88 2277.71,577.39 2284.3,536.79 2290.52,567.15 2297.47,583.24 2303.32,550.69 2309.54,555.44 2316.49,547.76 2322.71,566.41 2328.92,550.69 2335.14,567.15 2341.73,586.53 2348.31,568.98 2354.53,563.49 2361.11,562.39 2367.33,541.54 2373.55,556.17 2380.13,562.39 2386.72,575.56 2393.3,544.47 2399.16,548.12 2405.74,559.83 2412.32,566.41 2418.91,553.25 2425.49,542.64 2431.35,567.51 2438.66,573.73 2444.51,570.8 2450.73,564.59 2457.32,590.92 2463.54,550.69 2470.12,496.91 2476.34,503.13 2482.56,503.13 2489.14,501.3 2495.36,524.35 2501.94,512.28 2508,496.91 2508,496.91 2508,803" fill="#f1f6fa"/><path d="M2188.5 288.5V803.0 M2252.5 288.5V803.0 M2316.5 288.5V803.0 M2380.5 288.5V803.0 M2444.5 288.5V803.0 M2130.5 340.5H2508.0 M2130.5 391.5H2508.0 M2130.5 443.5H2508.0 M2130.5 494.5H2508.0 M2130.5 546.5H2508.0 M2130.5 597.5H2508.0 M2130.5 649.5H2508.0 M2130.5 700.5H2508.0 M2130.5 752.5H2508.0" stroke="#d4e6f1" stroke-width="1" fill="none" shape-rendering="crispEdges"/><polyline points="2130.67,558 2136.88,577.02 2143.47,594.58 2149.69,589.09 2156.27,582.88 2162.85,577.39 2168.71,611.04 2175.29,646.52 2181.51,657.5 2188.46,551.42 2194.68,556.17 2200.9,575.56 2207.48,596.41 2213.7,547.76 2220.65,579.58 2226.87,578.49 2233.45,575.56 2239.67,559.83 2245.89,586.53 2252.47,597.51 2258.33,568.98 2265.64,605.55 2271.49,582.88 2277.71,577.39 2284.3,536.79 2290.52,567.15 2297.47,583.24 2303.32,550.69 2309.54,555.44 2316.49,547.76 2322.71,566.41 2328.92,550.69 2335.14,567.15 2341.73,586.53 2348.31,568.98 2354.53,563.49 2361.11,562.39 2367.33,541.54 2373.55,556.17 2380.13,562.39 2386.72,575.56 2393.3,544.47 2399.16,548.12 2405.74,559.83 2412.32,566.41 2418.91,553.25 2425.49,542.64 2431.35,567.51 2438.66,573.73 2444.51,570.8 2450.73,564.59 2457.32,590.92 2463.54,550.69 2470.12,496.91 2476.34,503.13 2482.56,503.13 2489.14,501.3 2495.36,524.35 2501.94,512.28 2508,496.91" fill="none" stroke="#117dbb" stroke-width="1.1" stroke-linejoin="round"/><rect x="2130.5" y="288.5" width="377.5" height="514.5" fill="none" stroke="#117dbb" stroke-width="1" shape-rendering="crispEdges"/><rect x="2515.5" y="288.5" width="377.5" height="514.5" fill="#fff"/><polygon points="2515.5,803 2515.5,582.88 2521.71,620.19 2528.29,615.8 2534.51,601.9 2541.09,623.11 2547.31,618.72 2553.89,640.3 2560.11,656.03 2566.33,672.49 2573.28,571.9 2579.87,583.61 2586.08,611.04 2592.67,634.09 2598.52,600.8 2605.47,623.11 2611.69,608.11 2618.27,590.92 2624.49,609.21 2630.71,605.55 2637.3,649.45 2643.51,622.75 2650.46,631.16 2656.68,620.92 2662.9,600.43 2669.48,569.71 2675.7,594.58 2682.29,623.84 2688.51,585.44 2694.72,587.26 2701.31,582.88 2707.53,578.85 2714.48,584.34 2720.33,578.85 2726.55,614.7 2733.5,623.84 2739.72,597.14 2746.3,586.53 2752.15,580.68 2758.74,591.29 2765.32,594.21 2771.54,611.41 2778.12,609.58 2784.34,607.38 2790.56,593.85 2797.51,619.09 2803.36,612.14 2810.31,596.78 2816.53,600.43 2823.12,602.63 2829.34,618.36 2835.55,614.33 2842.14,612.14 2848.36,597.51 2855.31,537.88 2861.16,557.27 2867.74,547.39 2874.33,549.95 2880.55,530.57 2887.13,502.4 2892.62,505.69 2893,505.69 2893,803" fill="#f1f6fa"/><path d="M2573.5 288.5V803.0 M2637.5 288.5V803.0 M2701.5 288.5V803.0 M2765.5 288.5V803.0 M2829.5 288.5V803.0 M2515.5 340.5H2893.0 M2515.5 391.5H2893.0 M2515.5 443.5H2893.0 M2515.5 494.5H2893.0 M2515.5 546.5H2893.0 M2515.5 597.5H2893.0 M2515.5 649.5H2893.0 M2515.5 700.5H2893.0 M2515.5 752.5H2893.0" stroke="#d4e6f1" stroke-width="1" fill="none" shape-rendering="crispEdges"/><polyline points="2515.5,582.88 2521.71,620.19 2528.29,615.8 2534.51,601.9 2541.09,623.11 2547.31,618.72 2553.89,640.3 2560.11,656.03 2566.33,672.49 2573.28,571.9 2579.87,583.61 2586.08,611.04 2592.67,634.09 2598.52,600.8 2605.47,623.11 2611.69,608.11 2618.27,590.92 2624.49,609.21 2630.71,605.55 2637.3,649.45 2643.51,622.75 2650.46,631.16 2656.68,620.92 2662.9,600.43 2669.48,569.71 2675.7,594.58 2682.29,623.84 2688.51,585.44 2694.72,587.26 2701.31,582.88 2707.53,578.85 2714.48,584.34 2720.33,578.85 2726.55,614.7 2733.5,623.84 2739.72,597.14 2746.3,586.53 2752.15,580.68 2758.74,591.29 2765.32,594.21 2771.54,611.41 2778.12,609.58 2784.34,607.38 2790.56,593.85 2797.51,619.09 2803.36,612.14 2810.31,596.78 2816.53,600.43 2823.12,602.63 2829.34,618.36 2835.55,614.33 2842.14,612.14 2848.36,597.51 2855.31,537.88 2861.16,557.27 2867.74,547.39 2874.33,549.95 2880.55,530.57 2887.13,502.4 2892.62,505.69" fill="none" stroke="#117dbb" stroke-width="1.1" stroke-linejoin="round"/><rect x="2515.5" y="288.5" width="377.5" height="514.5" fill="none" stroke="#117dbb" stroke-width="1" shape-rendering="crispEdges"/><rect x="2900.5" y="288.5" width="377.5" height="514.5" fill="#fff"/><polygon points="2900.5,803 2900.67,639.21 2906.88,635.18 2913.47,627.5 2919.69,627.5 2926.27,631.16 2932.85,622.75 2938.71,667.74 2945.29,684.2 2951.51,700.66 2958.46,583.61 2964.68,603.36 2970.9,590.92 2977.48,629.33 2983.7,593.85 2990.65,617.26 2996.87,616.16 3003.45,594.95 3009.67,627.5 3015.89,630.43 3022.47,661.52 3028.33,629.33 3035.64,618.36 3041.49,619.45 3047.71,579.22 3054.3,566.78 3060.52,585.44 3067.47,616.16 3073.32,586.53 3079.54,583.24 3086.49,579.58 3092.71,560.56 3098.92,532.76 3105.51,541.54 3111.73,560.56 3118.31,563.12 3124.53,545.56 3131.11,550.32 3137.33,544.83 3143.55,553.25 3150.13,541.91 3156.72,556.9 3163.3,568.24 3169.52,555.44 3175.74,549.95 3182.32,572.27 3188.91,563.85 3195.49,556.17 3201.35,554.34 3208.66,570.44 3214.51,563.85 3220.73,585.07 3227.32,552.51 3233.54,544.1 3240.12,471.31 3246.34,472.41 3252.56,485.21 3259.14,483.38 3265.36,461.8 3271.94,485.21 3278,486.31 3278,486.31 3278,803" fill="#f1f6fa"/><path d="M2958.5 288.5V803.0 M3022.5 288.5V803.0 M3086.5 288.5V803.0 M3150.5 288.5V803.0 M3214.5 288.5V803.0 M2900.5 340.5H3278.0 M2900.5 391.5H3278.0 M2900.5 443.5H3278.0 M2900.5 494.5H3278.0 M2900.5 546.5H3278.0 M2900.5 597.5H3278.0 M2900.5 649.5H3278.0 M2900.5 700.5H3278.0 M2900.5 752.5H3278.0" stroke="#d4e6f1" stroke-width="1" fill="none" shape-rendering="crispEdges"/><polyline points="2900.67,639.21 2906.88,635.18 2913.47,627.5 2919.69,627.5 2926.27,631.16 2932.85,622.75 2938.71,667.74 2945.29,684.2 2951.51,700.66 2958.46,583.61 2964.68,603.36 2970.9,590.92 2977.48,629.33 2983.7,593.85 2990.65,617.26 2996.87,616.16 3003.45,594.95 3009.67,627.5 3015.89,630.43 3022.47,661.52 3028.33,629.33 3035.64,618.36 3041.49,619.45 3047.71,579.22 3054.3,566.78 3060.52,585.44 3067.47,616.16 3073.32,586.53 3079.54,583.24 3086.49,579.58 3092.71,560.56 3098.92,532.76 3105.51,541.54 3111.73,560.56 3118.31,563.12 3124.53,545.56 3131.11,550.32 3137.33,544.83 3143.55,553.25 3150.13,541.91 3156.72,556.9 3163.3,568.24 3169.52,555.44 3175.74,549.95 3182.32,572.27 3188.91,563.85 3195.49,556.17 3201.35,554.34 3208.66,570.44 3214.51,563.85 3220.73,585.07 3227.32,552.51 3233.54,544.1 3240.12,471.31 3246.34,472.41 3252.56,485.21 3259.14,483.38 3265.36,461.8 3271.94,485.21 3278,486.31" fill="none" stroke="#117dbb" stroke-width="1.1" stroke-linejoin="round"/><rect x="2900.5" y="288.5" width="377.5" height="514.5" fill="none" stroke="#117dbb" stroke-width="1" shape-rendering="crispEdges"/><rect x="1746.5" y="810.5" width="377.5" height="514.5" fill="#fff"/><polygon points="1746.5,1325 1746.58,1163.04 1752.8,1159.38 1759.39,1160.48 1765.61,1165.6 1772.19,1168.52 1778.41,1172.55 1784.99,1222.66 1791.21,1231.8 1797.43,1242.41 1804.38,1103.78 1810.23,1144.38 1816.82,1142.55 1823.4,1155.35 1829.62,1136.7 1835.11,1150.23 1842.42,1142.55 1848.27,1139.63 1855.22,1156.09 1861.44,1166.69 1867.3,1193.4 1874.25,1158.65 1880.46,1166.69 1887.05,1160.48 1893.27,1145.84 1899.48,1107.8 1906.43,1127.55 1912.65,1144.38 1919.24,1122.43 1925.82,1115.85 1931.31,1114.02 1938.26,1101.95 1944.84,1092.8 1951.06,1116.58 1957.65,1137.43 1963.86,1123.53 1970.45,1117.68 1976.67,1126.46 1982.89,1113.65 1989.47,1112.56 1995.32,1085.85 2002.27,1118.78 2008.86,1116.58 2014.71,1101.95 2021.29,1111.09 2027.51,1121.34 2034.1,1113.65 2040.31,1109.63 2046.53,1109.63 2053.12,1124.26 2059.34,1104.88 2065.55,1122.43 2072.14,1132.31 2078.36,1108.53 2085.31,1044.89 2091.16,1053.66 2097.38,1055.49 2104.33,1038.67 2110.55,1007.94 2117.13,1043.42 2122.62,1047.81 2124,1047.81 2124,1325" fill="#f1f6fa"/><path d="M1804.5 810.5V1325.0 M1868.5 810.5V1325.0 M1932.5 810.5V1325.0 M1996.5 810.5V1325.0 M2060.5 810.5V1325.0 M1746.5 862.5H2124.0 M1746.5 913.5H2124.0 M1746.5 965.5H2124.0 M1746.5 1016.5H2124.0 M1746.5 1068.5H2124.0 M1746.5 1119.5H2124.0 M1746.5 1171.5H2124.0 M1746.5 1222.5H2124.0 M1746.5 1274.5H2124.0" stroke="#d4e6f1" stroke-width="1" fill="none" shape-rendering="crispEdges"/><polyline points="1746.58,1163.04 1752.8,1159.38 1759.39,1160.48 1765.61,1165.6 1772.19,1168.52 1778.41,1172.55 1784.99,1222.66 1791.21,1231.8 1797.43,1242.41 1804.38,1103.78 1810.23,1144.38 1816.82,1142.55 1823.4,1155.35 1829.62,1136.7 1835.11,1150.23 1842.42,1142.55 1848.27,1139.63 1855.22,1156.09 1861.44,1166.69 1867.3,1193.4 1874.25,1158.65 1880.46,1166.69 1887.05,1160.48 1893.27,1145.84 1899.48,1107.8 1906.43,1127.55 1912.65,1144.38 1919.24,1122.43 1925.82,1115.85 1931.31,1114.02 1938.26,1101.95 1944.84,1092.8 1951.06,1116.58 1957.65,1137.43 1963.86,1123.53 1970.45,1117.68 1976.67,1126.46 1982.89,1113.65 1989.47,1112.56 1995.32,1085.85 2002.27,1118.78 2008.86,1116.58 2014.71,1101.95 2021.29,1111.09 2027.51,1121.34 2034.1,1113.65 2040.31,1109.63 2046.53,1109.63 2053.12,1124.26 2059.34,1104.88 2065.55,1122.43 2072.14,1132.31 2078.36,1108.53 2085.31,1044.89 2091.16,1053.66 2097.38,1055.49 2104.33,1038.67 2110.55,1007.94 2117.13,1043.42 2122.62,1047.81" fill="none" stroke="#117dbb" stroke-width="1.1" stroke-linejoin="round"/><rect x="1746.5" y="810.5" width="377.5" height="514.5" fill="none" stroke="#117dbb" stroke-width="1" shape-rendering="crispEdges"/><rect x="2130.5" y="810.5" width="377.5" height="514.5" fill="#fff"/><polygon points="2130.5,1325 2130.67,1120.6 2136.88,1112.92 2143.47,1126.46 2149.69,1139.26 2156.27,1133.04 2162.85,1157.55 2168.71,1187.91 2175.29,1216.44 2181.51,1202.91 2188.46,1109.63 2194.68,1128.65 2200.9,1144.01 2207.48,1149.14 2213.7,1130.85 2220.65,1138.53 2226.87,1137.43 2233.45,1134.87 2239.67,1140.36 2245.89,1150.6 2252.47,1180.23 2258.33,1155.35 2265.64,1152.79 2271.49,1143.65 2277.71,1121.34 2284.3,1103.78 2290.52,1125.36 2297.47,1146.21 2303.32,1124.63 2309.54,1121.34 2316.49,1108.53 2322.71,1095.73 2328.92,1111.46 2335.51,1111.83 2341.73,1136.33 2348.31,1125.36 2354.53,1105.61 2361.11,1105.61 2367.33,1099.75 2373.55,1110.36 2380.13,1109.63 2386.72,1118.41 2393.3,1123.16 2399.52,1099.75 2405.74,1109.26 2412.32,1112.56 2418.91,1112.56 2425.49,1101.95 2431.35,1125.36 2438.66,1113.65 2444.51,1110.36 2450.73,1105.61 2457.32,1121.34 2463.54,1107.44 2470.12,1034.64 2476.34,1059.15 2482.56,1041.23 2489.14,1030.62 2495.36,1040.5 2501.94,1036.84 2508,1032.81 2508,1032.81 2508,1325" fill="#f1f6fa"/><path d="M2188.5 810.5V1325.0 M2252.5 810.5V1325.0 M2316.5 810.5V1325.0 M2380.5 810.5V1325.0 M2444.5 810.5V1325.0 M2130.5 862.5H2508.0 M2130.5 913.5H2508.0 M2130.5 965.5H2508.0 M2130.5 1016.5H2508.0 M2130.5 1068.5H2508.0 M2130.5 1119.5H2508.0 M2130.5 1171.5H2508.0 M2130.5 1222.5H2508.0 M2130.5 1274.5H2508.0" stroke="#d4e6f1" stroke-width="1" fill="none" shape-rendering="crispEdges"/><polyline points="2130.67,1120.6 2136.88,1112.92 2143.47,1126.46 2149.69,1139.26 2156.27,1133.04 2162.85,1157.55 2168.71,1187.91 2175.29,1216.44 2181.51,1202.91 2188.46,1109.63 2194.68,1128.65 2200.9,1144.01 2207.48,1149.14 2213.7,1130.85 2220.65,1138.53 2226.87,1137.43 2233.45,1134.87 2239.67,1140.36 2245.89,1150.6 2252.47,1180.23 2258.33,1155.35 2265.64,1152.79 2271.49,1143.65 2277.71,1121.34 2284.3,1103.78 2290.52,1125.36 2297.47,1146.21 2303.32,1124.63 2309.54,1121.34 2316.49,1108.53 2322.71,1095.73 2328.92,1111.46 2335.51,1111.83 2341.73,1136.33 2348.31,1125.36 2354.53,1105.61 2361.11,1105.61 2367.33,1099.75 2373.55,1110.36 2380.13,1109.63 2386.72,1118.41 2393.3,1123.16 2399.52,1099.75 2405.74,1109.26 2412.32,1112.56 2418.91,1112.56 2425.49,1101.95 2431.35,1125.36 2438.66,1113.65 2444.51,1110.36 2450.73,1105.61 2457.32,1121.34 2463.54,1107.44 2470.12,1034.64 2476.34,1059.15 2482.56,1041.23 2489.14,1030.62 2495.36,1040.5 2501.94,1036.84 2508,1032.81" fill="none" stroke="#117dbb" stroke-width="1.1" stroke-linejoin="round"/><rect x="2130.5" y="810.5" width="377.5" height="514.5" fill="none" stroke="#117dbb" stroke-width="1" shape-rendering="crispEdges"/><rect x="2515.5" y="810.5" width="377.5" height="514.5" fill="#fff"/><polygon points="2515.5,1325 2515.5,1024.77 2521.71,1031.35 2528.29,1027.69 2534.51,1049.27 2541.09,1045.62 2547.31,1050.01 2550.24,1120.24 2553.89,1174.38 2560.11,1221.93 2566.33,1248.27 2573.28,1056.96 2579.87,1109.63 2586.08,1117.31 2592.67,1137.43 2598.52,1085.85 2605.47,1110.36 2611.69,1105.61 2618.27,1109.26 2624.49,1114.75 2630.71,1155.72 2637.3,1172.18 2643.51,1139.26 2650.46,1137.43 2656.68,1111.46 2662.9,1050.74 2669.48,947.95 2675.7,972.46 2682.29,955.63 2688.51,958.56 2694.72,959.66 2701.31,953.44 2707.53,955.63 2714.48,993.67 2720.33,1002.45 2726.55,996.24 2733.5,941.73 2739.72,984.9 2746.3,1010.5 2752.15,989.29 2758.74,964.41 2765.32,970.26 2771.54,945.39 2778.12,937.71 2784.34,954.53 2790.56,1043.42 2797.51,1096.46 2803.36,1084.39 2810.31,1082.56 2816.53,1104.51 2823.12,1128.29 2829.34,1101.58 2835.55,1117.31 2842.14,1088.78 2848.36,1021.47 2852.01,911.74 2855.31,817.36 2861.16,810.5 2867.74,838.58 2874.33,810.5 2886.76,810.5 2892.62,840.41 2893,840.41 2893,1325" fill="#f1f6fa"/><path d="M2573.5 810.5V1325.0 M2637.5 810.5V1325.0 M2701.5 810.5V1325.0 M2765.5 810.5V1325.0 M2829.5 810.5V1325.0 M2515.5 862.5H2893.0 M2515.5 913.5H2893.0 M2515.5 965.5H2893.0 M2515.5 1016.5H2893.0 M2515.5 1068.5H2893.0 M2515.5 1119.5H2893.0 M2515.5 1171.5H2893.0 M2515.5 1222.5H2893.0 M2515.5 1274.5H2893.0" stroke="#d4e6f1" stroke-width="1" fill="none" shape-rendering="crispEdges"/><polyline points="2515.5,1024.77 2521.71,1031.35 2528.29,1027.69 2534.51,1049.27 2541.09,1045.62 2547.31,1050.01 2550.24,1120.24 2553.89,1174.38 2560.11,1221.93 2566.33,1248.27 2573.28,1056.96 2579.87,1109.63 2586.08,1117.31 2592.67,1137.43 2598.52,1085.85 2605.47,1110.36 2611.69,1105.61 2618.27,1109.26 2624.49,1114.75 2630.71,1155.72 2637.3,1172.18 2643.51,1139.26 2650.46,1137.43 2656.68,1111.46 2662.9,1050.74 2669.48,947.95 2675.7,972.46 2682.29,955.63 2688.51,958.56 2694.72,959.66 2701.31,953.44 2707.53,955.63 2714.48,993.67 2720.33,1002.45 2726.55,996.24 2733.5,941.73 2739.72,984.9 2746.3,1010.5 2752.15,989.29 2758.74,964.41 2765.32,970.26 2771.54,945.39 2778.12,937.71 2784.34,954.53 2790.56,1043.42 2797.51,1096.46 2803.36,1084.39 2810.31,1082.56 2816.53,1104.51 2823.12,1128.29 2829.34,1101.58 2835.55,1117.31 2842.14,1088.78 2848.36,1021.47 2852.01,911.74 2855.31,817.36 2861.16,810.5 2867.74,838.58 2874.33,810.5 2886.76,810.5 2892.62,840.41" fill="none" stroke="#117dbb" stroke-width="1.1" stroke-linejoin="round"/><rect x="2515.5" y="810.5" width="377.5" height="514.5" fill="none" stroke="#117dbb" stroke-width="1" shape-rendering="crispEdges"/><rect x="2900.5" y="810.5" width="377.5" height="514.5" fill="#fff"/><polygon points="2900.5,1325 2900.67,1047.45 2906.88,1034.64 2913.47,1059.15 2919.69,1042.69 2926.27,1076.34 2932.85,1050.01 2938.71,1149.5 2945.29,1246.44 2951.51,1253.39 2958.46,1059.88 2964.68,1096.46 2970.9,1116.58 2977.48,1151.33 2983.7,1103.78 2990.65,1114.39 2996.87,1112.56 3003.45,1099.75 3009.67,1133.04 3015.89,1173.28 3022.47,1196.32 3028.33,1117.31 3035.64,1119.51 3041.49,1121.34 3047.71,1056.96 3054.3,1030.99 3060.52,1072.69 3067.47,1115.12 3073.32,1073.78 3079.54,1056.96 3086.49,1038.67 3092.71,1021.47 3098.92,964.05 3105.51,1025.13 3111.73,1077.44 3118.31,1081.46 3124.53,1018.91 3131.11,1024.4 3137.33,995.87 3143.55,1025.5 3150.13,1029.52 3156.72,1099.75 3163.3,1116.21 3169.52,1070.86 3175.74,981.97 3182.32,949.78 3188.91,948.32 3195.49,923.81 3201.35,937.34 3208.66,927.83 3214.51,942.1 3220.73,924.91 3227.32,952.34 3233.54,898.2 3240.12,817 3246.34,848.46 3252.56,850.28 3259.14,810.5 3265.36,810.5 3271.94,823.95 3278,834.92 3278,834.92 3278,1325" fill="#f1f6fa"/><path d="M2964.5 810.5V1325.0 M3028.5 810.5V1325.0 M3092.5 810.5V1325.0 M3156.5 810.5V1325.0 M3220.5 810.5V1325.0 M2900.5 862.5H3278.0 M2900.5 913.5H3278.0 M2900.5 965.5H3278.0 M2900.5 1016.5H3278.0 M2900.5 1068.5H3278.0 M2900.5 1119.5H3278.0 M2900.5 1171.5H3278.0 M2900.5 1222.5H3278.0 M2900.5 1274.5H3278.0" stroke="#d4e6f1" stroke-width="1" fill="none" shape-rendering="crispEdges"/><polyline points="2900.67,1047.45 2906.88,1034.64 2913.47,1059.15 2919.69,1042.69 2926.27,1076.34 2932.85,1050.01 2938.71,1149.5 2945.29,1246.44 2951.51,1253.39 2958.46,1059.88 2964.68,1096.46 2970.9,1116.58 2977.48,1151.33 2983.7,1103.78 2990.65,1114.39 2996.87,1112.56 3003.45,1099.75 3009.67,1133.04 3015.89,1173.28 3022.47,1196.32 3028.33,1117.31 3035.64,1119.51 3041.49,1121.34 3047.71,1056.96 3054.3,1030.99 3060.52,1072.69 3067.47,1115.12 3073.32,1073.78 3079.54,1056.96 3086.49,1038.67 3092.71,1021.47 3098.92,964.05 3105.51,1025.13 3111.73,1077.44 3118.31,1081.46 3124.53,1018.91 3131.11,1024.4 3137.33,995.87 3143.55,1025.5 3150.13,1029.52 3156.72,1099.75 3163.3,1116.21 3169.52,1070.86 3175.74,981.97 3182.32,949.78 3188.91,948.32 3195.49,923.81 3201.35,937.34 3208.66,927.83 3214.51,942.1 3220.73,924.91 3227.32,952.34 3233.54,898.2 3240.12,817 3246.34,848.46 3252.56,850.28 3259.14,810.5 3265.36,810.5 3271.94,823.95 3278,834.92" fill="none" stroke="#117dbb" stroke-width="1.1" stroke-linejoin="round"/><rect x="2900.5" y="810.5" width="377.5" height="514.5" fill="none" stroke="#117dbb" stroke-width="1" shape-rendering="crispEdges"/></svg>
<div class="t" style="left:1743.3px;top:1369.06px;font-size:18px;line-height:21.6px;color:#707070;letter-spacing:-0.16px;">Использование</div>
<div class="t" style="left:1899.8px;top:1369.06px;font-size:18px;line-height:21.6px;color:#707070;letter-spacing:-0.09px;">Скорость</div>
<div class="t" style="left:1743px;top:1393.87px;font-size:33px;line-height:39.6px;color:#000;letter-spacing:-2.02px;">71%</div>
<div class="t" style="left:1899.5px;top:1393.87px;font-size:33px;line-height:39.6px;color:#000;letter-spacing:-1.5px;">4,59 ГГц</div>
<div class="t" style="left:1743.3px;top:1451.06px;font-size:18px;line-height:21.6px;color:#707070;letter-spacing:-0.06px;">Процессы</div>
<div class="t" style="left:1857.6px;top:1451.06px;font-size:18px;line-height:21.6px;color:#707070;letter-spacing:0.33px;">Потоки</div>
<div class="t" style="left:1955px;top:1451.06px;font-size:18px;line-height:21.6px;color:#707070;letter-spacing:0.06px;">Дескрипторы</div>
<div class="t" style="left:1743px;top:1477.07px;font-size:33px;line-height:39.6px;color:#000;letter-spacing:-1.52px;">231</div>
<div class="t" style="left:1857.5px;top:1477.07px;font-size:33px;line-height:39.6px;color:#000;letter-spacing:-1.48px;">2816</div>
<div class="t" style="left:1955px;top:1477.07px;font-size:33px;line-height:39.6px;color:#000;letter-spacing:-1.45px;">96462</div>
<div class="t" style="left:1743.3px;top:1532.96px;font-size:18px;line-height:21.6px;color:#707070;letter-spacing:-0.23px;">Время работы</div>
<div class="t" style="left:1743px;top:1559.07px;font-size:33px;line-height:39.6px;color:#000;letter-spacing:-1.7px;">0:01:09:35</div>
<div class="t" style="left:2084.2px;top:1369.06px;font-size:18px;line-height:21.6px;color:#707070;letter-spacing:-0.18px;">Базовая скорость:</div>
<div class="t" style="left:2319.2px;top:1369.06px;font-size:18px;line-height:21.6px;color:#000;letter-spacing:-0.48px;">2,90 ГГц</div>
<div class="t" style="left:2084.2px;top:1398.96px;font-size:18px;line-height:21.6px;color:#707070;letter-spacing:-0.14px;">Сокетов:</div>
<div class="t" style="left:2319.2px;top:1398.96px;font-size:18px;line-height:21.6px;color:#000;letter-spacing:-1.01px;">1</div>
<div class="t" style="left:2084.2px;top:1429.16px;font-size:18px;line-height:21.6px;color:#707070;letter-spacing:-0.7px;">Ядра:</div>
<div class="t" style="left:2319.2px;top:1429.16px;font-size:18px;line-height:21.6px;color:#000;letter-spacing:-1.01px;">8</div>
<div class="t" style="left:2084.2px;top:1459.46px;font-size:18px;line-height:21.6px;color:#707070;letter-spacing:0.11px;">Логических процессоров:</div>
<div class="t" style="left:2319.2px;top:1459.46px;font-size:18px;line-height:21.6px;color:#000;letter-spacing:-1.01px;">8</div>
<div class="t" style="left:2084.2px;top:1489.26px;font-size:18px;line-height:21.6px;color:#707070;letter-spacing:-0.49px;">Виртуализация:</div>
<div class="t" style="left:2319.2px;top:1489.26px;font-size:18px;line-height:21.6px;color:#000;letter-spacing:0px;">Включено</div>
<div class="t" style="left:2084.2px;top:1519.16px;font-size:18px;line-height:21.6px;color:#707070;letter-spacing:-0.73px;">Кэш L1:</div>
<div class="t" style="left:2319.2px;top:1519.16px;font-size:18px;line-height:21.6px;color:#000;letter-spacing:-0.39px;">512 КБ</div>
<div class="t" style="left:2084.2px;top:1549.06px;font-size:18px;line-height:21.6px;color:#707070;letter-spacing:-0.73px;">Кэш L2:</div>
<div class="t" style="left:2319.2px;top:1549.06px;font-size:18px;line-height:21.6px;color:#000;letter-spacing:-0.3px;">2,0 МБ</div>
<div class="t" style="left:2084.2px;top:1578.96px;font-size:18px;line-height:21.6px;color:#707070;letter-spacing:-0.73px;">Кэш L3:</div>
<div class="t" style="left:2319.2px;top:1578.96px;font-size:18px;line-height:21.6px;color:#000;letter-spacing:-0.26px;">16,0 МБ</div>
<svg class="a" style="left:1249px;top:1656px" width="30" height="30" viewBox="0 0 30 30"><circle cx="15" cy="15" r="13.5" fill="#fff" stroke="#8a8a8a" stroke-width="1.2"/><path d="M9 18L15 12L21 18" stroke="#555" stroke-width="1.4" fill="none"/></svg>
<div class="t" style="left:1290px;top:1661.16px;font-size:18px;line-height:21.6px;color:#000;letter-spacing:-0.41px;"><u>М</u>еньше</div>
<div style="left:1368.5px;top:1661px;width:1px;height:14px;background:#d0d0d0;"></div>
<svg class="a" style="left:1381px;top:1657px" width="25" height="25" viewBox="0 0 25 25"><circle cx="12.5" cy="12.5" r="11" fill="#c9ccd0" stroke="#80858b" stroke-width="1.2"/><circle cx="12.5" cy="12.5" r="8" fill="#f4f4f4"/><path d="M12.5 12.5L7 6L15 11Z" fill="#d22"/><path d="M12.5 12.5L17 18" stroke="#e08020" stroke-width="2"/></svg>
<div class="t" style="left:1414.3px;top:1661.16px;font-size:18px;line-height:21.6px;color:#0066cc;letter-spacing:0.05px;">Открыть монитор ресурсов</div>
<div style="left:0px;top:2100px;width:3840px;height:60px;background:linear-gradient(90deg,#cfe6f0 0%,#d2e5f0 45%,#dae3f0 100%);"></div>
<div style="left:596px;top:2100px;width:73px;height:60px;background:#e6f0f5;"></div>
<div style="left:227px;top:2157px;width:61px;height:3px;background:#0078d7;"></div>
<div style="left:377px;top:2157px;width:61px;height:3px;background:#0078d7;"></div>
<div style="left:596px;top:2157px;width:73px;height:3px;background:#0078d7;"></div>
<div style="left:827px;top:2157px;width:61px;height:3px;background:#0078d7;"></div>
<div style="left:902px;top:2157px;width:61px;height:3px;background:#0078d7;"></div>
<div style="left:977px;top:2157px;width:61px;height:3px;background:#0078d7;"></div>
<svg class="a" style="left:16.0px;top:2110.0px" width="40" height="40" viewBox="-20.0 -20.0 40 40"><path d="M-13 -10L-2 -11.5V-1H-13Z M0 -11.8L13 -13.5V-1H0Z M-13 1H-2V11.5L-13 10Z M0 1H13V13.5L0 11.8Z" fill="#000"/></svg>
<svg class="a" style="left:87.6px;top:2110.0px" width="40" height="40" viewBox="-20.0 -20.0 40 40"><circle cx="3" cy="-3" r="10" fill="none" stroke="#000" stroke-width="3.4"/><path d="M-4 4L-15 15" stroke="#000" stroke-width="4.2"/></svg>
<svg class="a" style="left:159.4px;top:2110.0px" width="40" height="40" viewBox="-20.0 -20.0 40 40"><rect x="-9" y="-6" width="17" height="12" fill="none" stroke="#000" stroke-width="1.6"/><path d="M-12 -12H4M-12 12H4M-12 -12v3M4 -12v3M-12 12v-3M4 12v-3M12 -12v5M12 -3v6M12 7v5" stroke="#000" stroke-width="1.6" fill="none"/></svg>
<svg class="a" style="left:237.0px;top:2110.0px" width="40" height="40" viewBox="-20.0 -20.0 40 40"><path d="M-16 -12H-4L-1 -8H16V12H-16Z" fill="#f6c544"/><path d="M-16 -4H16V13H-16Z" fill="#fbd75e"/><path d="M-9 3H9V13H-9Z" fill="#2f7fd6"/><path d="M-4 8H4V13H-4Z" fill="#fbd75e"/></svg>
<svg class="a" style="left:312.0px;top:2110.0px" width="40" height="40" viewBox="-20.0 -20.0 40 40"><rect x="-14" y="-17" width="28" height="34" rx="2.5" fill="#7d8a94"/><rect x="-11" y="-14" width="22" height="7" fill="#3cc3ee"/><rect x="-11" y="-4.0" width="6" height="5" fill="#e6eaee"/><rect x="-11" y="2.5" width="6" height="5" fill="#e6eaee"/><rect x="-11" y="9.0" width="6" height="5" fill="#e6eaee"/><rect x="-3" y="-4.0" width="6" height="5" fill="#e6eaee"/><rect x="-3" y="2.5" width="6" height="5" fill="#e6eaee"/><rect x="-3" y="9.0" width="6" height="5" fill="#e6eaee"/><rect x="5" y="-4.0" width="6" height="5" fill="#e6eaee"/><rect x="5" y="2.5" width="6" height="5" fill="#1d4f8f"/><rect x="5" y="9.0" width="6" height="5" fill="#1d4f8f"/></svg>
<svg class="a" style="left:386.5px;top:2110.0px" width="40" height="40" viewBox="-20.0 -20.0 40 40"><circle r="18" fill="#e33b2e"/><path d="M0 0L-15.6 -9A18 18 0 0 0 -1 18Z" fill="#2da94f"/><path d="M0 0L-1 18A18 18 0 0 0 16 -8.5Z" fill="#fcc31e"/><circle r="8.2" fill="#fff"/><circle r="6.4" fill="#3f7fe8"/></svg>
<svg class="a" style="left:461.7px;top:2110.0px" width="40" height="40" viewBox="-20.0 -20.0 40 40"><circle r="18" fill="#fff"/><path d="M-8 -9L0 1L8 -9" stroke="#f33" stroke-width="3.6" fill="none" stroke-linecap="round"/><path d="M0 1V11" stroke="#f33" stroke-width="3.6" stroke-linecap="round"/></svg>
<svg class="a" style="left:536.4px;top:2110.0px" width="40" height="40" viewBox="-20.0 -20.0 40 40"><circle r="18" fill="#1f8bd4"/><path d="M-17 4A17 17 0 0 1 10 -14C0 -12 -6 -4 -4 4C-2 12 8 14 15 9A18 18 0 0 1 -17 4Z" fill="#1c5fa8"/><path d="M-18 2A18 18 0 0 1 17 -5C10 -12 -4 -12 -7 -2C-12 -4 -17 -2 -18 2Z" fill="#5bd08a"/></svg>
<svg class="a" style="left:612.0px;top:2110.0px" width="40" height="40" viewBox="-20.0 -20.0 40 40"><rect x="-13" y="-14" width="29" height="23" fill="#dfe6ec" stroke="#8a949c" stroke-width="1.4"/><rect x="-10" y="-11" width="23" height="16" fill="#f7fbff"/><path d="M-10 0L-6 -2L-4 -8L-1 2L2 -6L5 0L8 -3L13 -1" stroke="#2a7fc0" stroke-width="1.3" fill="none"/><path d="M-6 10H8L11 16H-9Z" fill="#b8c0c8"/><rect x="-18" y="-8" width="6" height="20" fill="#c4ccd3" stroke="#8a949c" stroke-width="1"/></svg>
<svg class="a" style="left:686.7px;top:2110.0px" width="40" height="40" viewBox="-20.0 -20.0 40 40"><ellipse cx="-2" cy="-7" rx="14" ry="8" fill="#fff" stroke="#e0463c" stroke-width="1.6" transform="rotate(-12)"/><path d="M-10 -12L6 10M8 -12L-6 10" stroke="#d23" stroke-width="1.6"/><circle cx="-7" cy="13" r="4" fill="none" stroke="#2a7fd0" stroke-width="2.4"/><circle cx="8" cy="13" r="4" fill="none" stroke="#2a7fd0" stroke-width="2.4"/></svg>
<svg class="a" style="left:761.5px;top:2110.0px" width="40" height="40" viewBox="-20.0 -20.0 40 40"><rect x="-18" y="-18" width="36" height="36" fill="#a10d12"/><path d="M3 -13L-7 2H0L-3 13L8 -3H1Z" fill="#fff"/></svg>
<svg class="a" style="left:836.0px;top:2110.0px" width="40" height="40" viewBox="-20.0 -20.0 40 40"><ellipse cx="0" cy="3" rx="18" ry="8" fill="#1b5fd0" transform="rotate(-18)"/><ellipse cx="2" cy="-3" rx="10" ry="6" fill="#dfeaff" transform="rotate(-18)"/><ellipse cx="-2" cy="6" rx="13" ry="4" fill="#0a2f8a" transform="rotate(-18)"/></svg>
<svg class="a" style="left:911.8px;top:2110.0px" width="40" height="40" viewBox="-20.0 -20.0 40 40"><circle r="17" cx="-1" cy="-2" fill="#2ba1da"/><path d="M-11 -2L8 -10L4 8L-2 3L4 -5L-5 1Z" fill="#fff"/><rect x="-1" y="5" width="22" height="15" rx="6" fill="#8a8f94"/></svg>
<div class="t" style="left:931.49px;top:2136.74px;font-size:12px;line-height:14.4px;color:#fff;">..46</div>
<svg class="a" style="left:987.0px;top:2110.0px" width="40" height="40" viewBox="-20.0 -20.0 40 40"><rect x="-15" y="-15" width="30" height="30" rx="3" fill="#1f1f24"/></svg>
<div class="t" style="left:993.49px;top:2123.32px;font-size:13.5px;line-height:16.2px;color:#fff;font-weight:700;letter-spacing:-0.6px;">Live</div>
<svg class="a" style="left:3129.0px;top:2111.0px" width="36" height="36" viewBox="-18.0 -18.0 36 36"><ellipse rx="11" ry="6" fill="#d8dde2" stroke="#7c858d" stroke-width="1.6" transform="rotate(-25)"/><ellipse rx="6" ry="3" cx="1" cy="1" fill="#aeb6bd" transform="rotate(-25)"/></svg>
<svg class="a" style="left:3165.5px;top:2111.0px" width="36" height="36" viewBox="-18.0 -18.0 36 36"><rect x="-12" y="-12" width="24" height="24" fill="#141414"/><path d="M-8 1C-3 -7 5 -6 8 -1C4 5 -3 6 -8 1Z" fill="none" stroke="#76b900" stroke-width="2.2"/></svg>
<svg class="a" style="left:3201.0px;top:2111.0px" width="36" height="36" viewBox="-18.0 -18.0 36 36"><rect x="-10" y="-11" width="14" height="19" fill="#c9ced4" stroke="#8a9198"/><rect x="-4" y="-7" width="14" height="17" fill="#dfe3e8" stroke="#8a9198"/><rect x="2" y="2" width="10" height="9" fill="#d22"/></svg>
<svg class="a" style="left:3238.0px;top:2111.0px" width="36" height="36" viewBox="-18.0 -18.0 36 36"><circle r="11.5" fill="#8e9399"/><circle r="7" fill="none" stroke="#fff" stroke-width="3"/><path d="M3 -9L10 -6L4 -1Z" fill="#fff"/></svg>
<svg class="a" style="left:3274.0px;top:2111.0px" width="36" height="36" viewBox="-18.0 -18.0 36 36"><circle r="11.5" fill="#1e6fe0"/><circle r="7" fill="none" stroke="#fff" stroke-width="2.2"/><circle r="3" fill="none" stroke="#fff" stroke-width="2"/></svg>
<svg class="a" style="left:3310.0px;top:2111.0px" width="36" height="36" viewBox="-18.0 -18.0 36 36"><rect x="-9" y="-11" width="19" height="21" fill="#55b5ee" stroke="#8a9198" stroke-width="1.5"/><rect x="-9" y="-11" width="19" height="4" fill="#e8ecf0"/></svg>
<svg class="a" style="left:3345.5px;top:2111.0px" width="36" height="36" viewBox="-18.0 -18.0 36 36"><rect x="-12" y="-11" width="24" height="22" fill="#5a1505"/><path d="M-12 2L-8 -8L-4 -2L0 -10L4 -3L8 -9L12 0V4H-12Z" fill="#f80"/><rect x="-12" y="4" width="24" height="8" fill="#c9cdd0"/></svg>
<div class="t" style="left:3353px;top:2133.58px;font-size:9px;line-height:10.8px;color:#222;font-weight:700;">RMG</div>
<svg class="a" style="left:3382.0px;top:2111.0px" width="36" height="36" viewBox="-18.0 -18.0 36 36"><circle r="11.5" cx="-1" fill="#2a93d6"/><path d="M-8 0L3 -5L1 5L-2 2Z" fill="#fff"/><rect x="-4" y="-5" width="16" height="17" rx="5" fill="#8a8f94"/></svg>
<div class="t" style="left:3396.77px;top:2125.8px;font-size:13px;line-height:15.6px;color:#fff;">..6</div>
<svg class="a" style="left:3418.0px;top:2111.0px" width="36" height="36" viewBox="-18.0 -18.0 36 36"><rect x="-12" y="-11" width="24" height="22" fill="#2f6a25"/><path d="M-12 -6H12M-12 -1H12M-12 4H12" stroke="#e8d24a" stroke-width="1.4"/><path d="M-6 -11V11M0 -11V11M6 -11V11" stroke="#c33" stroke-width="1"/></svg>
<svg class="a" style="left:3454.0px;top:2111.0px" width="36" height="36" viewBox="-18.0 -18.0 36 36"><rect x="-5" y="-12" width="10" height="5" fill="none" stroke="#222" stroke-width="1.3"/><path d="M-7 -7H7V8A4 4 0 0 1 3 12H-3A4 4 0 0 1 -7 8Z" fill="none" stroke="#222" stroke-width="1.4"/><path d="M5 10L12 12" stroke="#222" stroke-width="1.3"/></svg>
<svg class="a" style="left:3490.0px;top:2111.0px" width="36" height="36" viewBox="-18.0 -18.0 36 36"><rect x="-9" y="-8" width="20" height="13" fill="none" stroke="#222" stroke-width="1.5"/><path d="M-3 10H8M2 5V10" stroke="#222" stroke-width="1.5"/><rect x="-13" y="-10" width="6" height="9" fill="#d3e5ef" stroke="#222" stroke-width="1.3"/></svg>
<svg class="a" style="left:3525.0px;top:2111.0px" width="36" height="36" viewBox="-18.0 -18.0 36 36"><path d="M-11 -4H-6L0 -10V10L-6 4H-11Z" fill="none" stroke="#222" stroke-width="1.5"/><path d="M4 -4A6 6 0 0 1 4 4M7 -8A11 11 0 0 1 7 8" fill="none" stroke="#222" stroke-width="1.4"/></svg>
<svg class="a" style="left:3562.0px;top:2111.0px" width="36" height="36" viewBox="-18.0 -18.0 36 36"><path d="M0 -13C4 -10 8 -9 11 -9V1C11 8 5 12 0 14C-5 12 -11 8 -11 1V-9C-8 -9 -4 -10 0 -13Z" fill="#fff" stroke="#222" stroke-width="1.5"/><path d="M0 -13V14M-11 0H11" stroke="#222" stroke-width="1.2"/><circle cx="7" cy="8" r="6" fill="#e3262e"/><path d="M4.5 5.5L9.5 10.5M9.5 5.5L4.5 10.5" stroke="#fff" stroke-width="1.4"/></svg>
<div class="t" style="left:3608.5px;top:2122.17px;font-size:16.3px;line-height:19.56px;color:#111;letter-spacing:-0.77px;">ENG</div>
<div style="left:3833px;top:2105px;width:1px;height:50px;background:#9aa8b3;"></div>
<div class="t" style="left:3682.98px;top:2106.56px;font-size:18px;line-height:21.6px;color:#111;">12:15</div>
<div class="t" style="left:3662px;top:2134.56px;font-size:18px;line-height:21.6px;color:#111;letter-spacing:-0.31px;">07.12.2024</div>
<svg class="a" style="left:3777px;top:2116px" width="26" height="26" viewBox="0 0 26 26"><path d="M1.5 2.5H23.5V18.5H16L12.5 23L9 18.5H1.5Z" fill="none" stroke="#111" stroke-width="1.4"/></svg>
</body></html>
